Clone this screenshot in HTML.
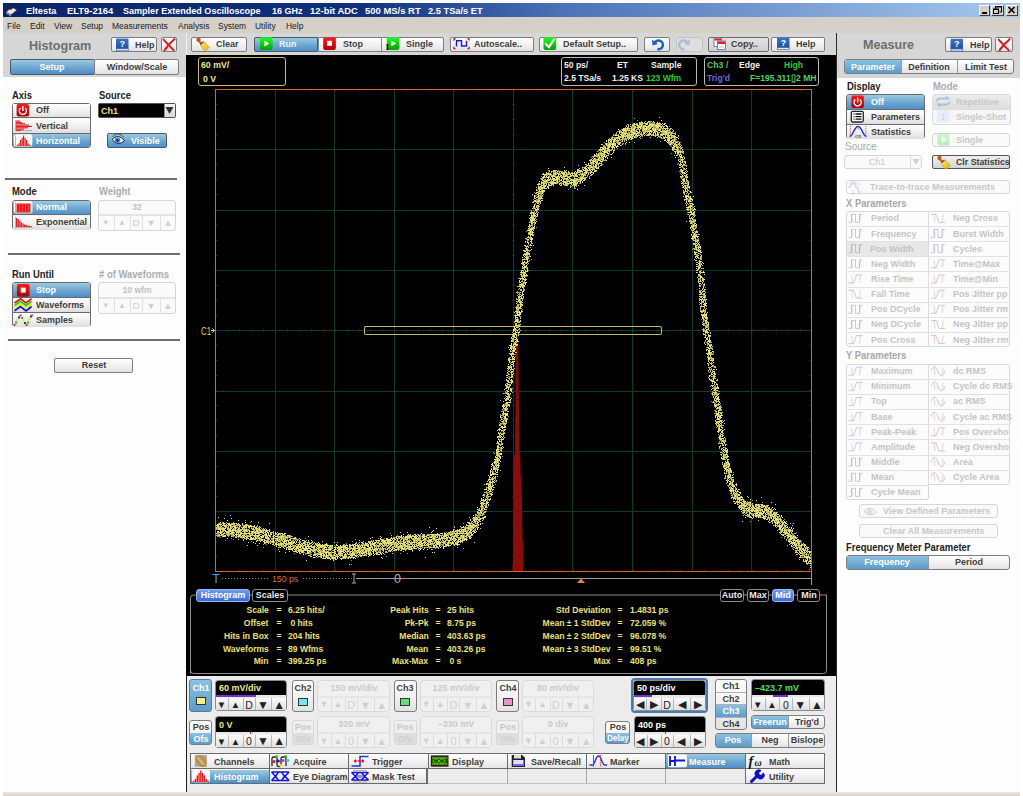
<!DOCTYPE html><html><head><meta charset="utf-8"><style>
*{margin:0;padding:0;box-sizing:border-box}
html,body{width:1023px;height:796px;overflow:hidden;background:#fff;font-family:"Liberation Sans",sans-serif}
.a{position:absolute}
.t{position:absolute;white-space:pre}
.btn{background:linear-gradient(#fefefe,#f2f2f2 50%,#e2e2e2);border:1px solid #7d7d7d;border-radius:2px}
.sel{background:linear-gradient(#9ccae0,#6aa6d2 55%,#4f8fc6);border:1px solid #4a5a6a;border-radius:2px}
.dis{background:#fafafa;border:1px solid #d6d6d6;border-radius:3px}
.blk{background:#000}
svg{position:absolute;left:0;top:0}
</style></head><body><div class="a " style="left:3px;top:3px;width:1017px;height:14px;background:linear-gradient(90deg,#0a246a 0%,#10307c 35%,#4c72b8 55%,#a6caf0 100%)"></div>
<div class="t" style="left:26.3px;top:4.5px;font-size:9.2px;line-height:13px;font-weight:bold;color:#fff;transform:scaleX(1.0108695652173914);transform-origin:0 50%;">Eltesta</div>
<div class="t" style="left:67px;top:4.5px;font-size:9.2px;line-height:13px;font-weight:bold;color:#fff;transform:scaleX(1.0217391304347825);transform-origin:0 50%;">ELT9-2164</div>
<div class="t" style="left:123.3px;top:4.5px;font-size:9.2px;line-height:13px;font-weight:bold;color:#fff;transform:scaleX(0.9836956521739132);transform-origin:0 50%;">Sampler Extended Oscilloscope</div>
<div class="t" style="left:272px;top:4.5px;font-size:9.2px;line-height:13px;font-weight:bold;color:#fff;transform:scaleX(0.9782608695652175);transform-origin:0 50%;">16 GHz</div>
<div class="t" style="left:310px;top:4.5px;font-size:9.2px;line-height:13px;font-weight:bold;color:#fff;transform:scaleX(1.0271739130434783);transform-origin:0 50%;">12-bit ADC</div>
<div class="t" style="left:364.8px;top:4.5px;font-size:9.2px;line-height:13px;font-weight:bold;color:#fff;transform:scaleX(1.0282608695652173);transform-origin:0 50%;">500 MS/s RT</div>
<div class="t" style="left:428.3px;top:4.5px;font-size:9.2px;line-height:13px;font-weight:bold;color:#fff;transform:scaleX(1.0108695652173914);transform-origin:0 50%;">2.5 TSa/s ET</div>
<svg width="1023" height="796"><path d="M6 12l6-5 5 3-6 5z" fill="#e8e8e8" stroke="#333" stroke-width=".7"/><path d="M8 8l3-3 3 2-3 3z" fill="#222"/><path d="M6 12l5 3v1.5l-5-3z" fill="#999"/></svg>
<div class="a " style="left:979px;top:5px;width:11px;height:10.5px;background:#d4d0c8;border:1px solid;border-color:#fff #404040 #404040 #fff"></div>
<div class="a " style="left:990.5px;top:5px;width:13.0px;height:10.5px;background:#d4d0c8;border:1px solid;border-color:#fff #404040 #404040 #fff"></div>
<div class="a " style="left:1005.5px;top:5px;width:12.5px;height:10.5px;background:#d4d0c8;border:1px solid;border-color:#fff #404040 #404040 #fff"></div>
<div class="a " style="left:981.5px;top:12px;width:5.0px;height:2px;background:#000"></div>
<svg width="1023" height="796"><path d="M995.5 9V7h6v5h-2" fill="none" stroke="#000"/><path d="M995 6.5h7" stroke="#000"/><rect x="993.5" y="9.5" width="5" height="4" fill="none" stroke="#000"/><path d="M993 9h6" stroke="#000"/></svg>
<svg width="1023" height="796"><path d="M1008.5 7l6 6M1014.5 7l-6 6" stroke="#000" stroke-width="1.6"/></svg>
<div class="a " style="left:3px;top:17px;width:1017px;height:16px;background:#d4d0c8"></div>
<div class="t" style="left:7.4px;top:19.5px;font-size:9.2px;line-height:13px;font-weight:normal;color:#1a1a1a;transform:scaleX(0.9184782608695652);transform-origin:0 50%;">File</div>
<div class="t" style="left:29.5px;top:19.5px;font-size:9.2px;line-height:13px;font-weight:normal;color:#1a1a1a;transform:scaleX(0.9184782608695652);transform-origin:0 50%;">Edit</div>
<div class="t" style="left:53.7px;top:19.5px;font-size:9.2px;line-height:13px;font-weight:normal;color:#1a1a1a;transform:scaleX(0.9184782608695652);transform-origin:0 50%;">View</div>
<div class="t" style="left:80.6px;top:19.5px;font-size:9.2px;line-height:13px;font-weight:normal;color:#1a1a1a;transform:scaleX(0.9184782608695652);transform-origin:0 50%;">Setup</div>
<div class="t" style="left:112px;top:19.5px;font-size:9.2px;line-height:13px;font-weight:normal;color:#1a1a1a;transform:scaleX(0.9184782608695652);transform-origin:0 50%;">Measurements</div>
<div class="t" style="left:177.5px;top:19.5px;font-size:9.2px;line-height:13px;font-weight:normal;color:#1a1a1a;transform:scaleX(0.9184782608695652);transform-origin:0 50%;">Analysis</div>
<div class="t" style="left:217.8px;top:19.5px;font-size:9.2px;line-height:13px;font-weight:normal;color:#1a1a1a;transform:scaleX(0.9184782608695652);transform-origin:0 50%;">System</div>
<div class="t" style="left:255.4px;top:19.5px;font-size:9.2px;line-height:13px;font-weight:normal;color:#1a1a1a;transform:scaleX(0.9184782608695652);transform-origin:0 50%;">Utility</div>
<div class="t" style="left:286px;top:19.5px;font-size:9.2px;line-height:13px;font-weight:normal;color:#1a1a1a;transform:scaleX(0.9184782608695652);transform-origin:0 50%;">Help</div>
<div class="a " style="left:3px;top:33px;width:183px;height:44px;background:#d6d6d6"></div>
<div class="a " style="left:3px;top:77px;width:183px;height:716px;background:#fdfdfd"></div>
<div class="a " style="left:186px;top:33px;width:1px;height:22px;background:#f2f2f2"></div>
<div class="a " style="left:185.5px;top:55px;width:1.5px;height:738px;background:#1e1e1e"></div>
<div class="t" style="left:29px;top:35.5px;font-size:13.2px;line-height:19px;font-weight:bold;color:#6e6e6e;transform:scaleX(0.955);transform-origin:0 50%;">Histogram</div>
<div class="a btn" style="left:110.5px;top:36.8px;width:46.5px;height:15.600000000000001px;"></div>
<div class="t" style="left:134.5px;top:38.599999999999994px;font-size:9.2px;line-height:13px;font-weight:bold;color:#3e3e3e;transform:scaleX(0.9782608695652175);transform-origin:0 50%;">Help</div>
<div class="a btn" style="left:160.7px;top:36.8px;width:16.80000000000001px;height:15.600000000000001px;"></div>
<div class="a sel" style="left:9.8px;top:59px;width:85.0px;height:16px;"></div>
<div class="a btn" style="left:94.3px;top:59px;width:85.2px;height:16px;"></div>
<div class="t" style="left:-247.7px;width:600px;text-align:center;top:61.0px;font-size:9.2px;line-height:13px;font-weight:bold;color:#fff;transform:scaleX(0.9782608695652175);transform-origin:50% 50%;">Setup</div>
<div class="t" style="left:-163px;width:600px;text-align:center;top:61.0px;font-size:9.2px;line-height:13px;font-weight:bold;color:#3e3e3e;transform:scaleX(0.9782608695652175);transform-origin:50% 50%;">Window/Scale</div>
<div class="t" style="left:12px;top:87.5px;font-size:10.5px;line-height:15px;font-weight:bold;color:#222;transform:scaleX(0.9);transform-origin:0 50%;">Axis</div>
<div class="t" style="left:98.5px;top:87.5px;font-size:10.5px;line-height:15px;font-weight:bold;color:#222;transform:scaleX(0.9);transform-origin:0 50%;">Source</div>
<div class="a " style="left:11.5px;top:102.5px;width:79.0px;height:45.80000000000001px;background:linear-gradient(#fefefe,#e6e6e6);border:1px solid #6a6a6a;border-radius:3px;overflow:hidden"></div>
<div class="a " style="left:12.5px;top:103.5px;width:77.0px;height:14.266666666666666px;background:linear-gradient(#fefefe,#f0f0f0 50%,#dedede)"></div>
<div class="a " style="left:12.5px;top:118.76666666666667px;width:77.0px;height:14.266666666666666px;background:linear-gradient(#fefefe,#f0f0f0 50%,#dedede)"></div>
<div class="a " style="left:12.5px;top:117.26666666666667px;width:77.0px;height:1.0px;background:#6a6a6a"></div>
<div class="a " style="left:12.5px;top:133.03333333333333px;width:77.0px;height:14.26666666666668px;background:linear-gradient(#9ccae0,#6aa6d2 55%,#4f8fc6);border-radius:0 0 2px 2px"></div>
<div class="a " style="left:12.5px;top:132.53333333333333px;width:77.0px;height:1.0px;background:#6a6a6a"></div>
<div class="t" style="left:36px;top:104.3px;font-size:9.2px;line-height:13px;font-weight:bold;color:#3e3e3e;transform:scaleX(0.9782608695652175);transform-origin:0 50%;">Off</div>
<div class="t" style="left:36px;top:119.5px;font-size:9.2px;line-height:13px;font-weight:bold;color:#3e3e3e;transform:scaleX(0.9782608695652175);transform-origin:0 50%;">Vertical</div>
<div class="t" style="left:36px;top:134.8px;font-size:9.2px;line-height:13px;font-weight:bold;color:#fff;transform:scaleX(0.9782608695652175);transform-origin:0 50%;">Horizontal</div>
<div class="a " style="left:97.5px;top:102.5px;width:78.80000000000001px;height:15.700000000000003px;background:#000;border:1px solid #555;border-radius:2px"></div>
<div class="a " style="left:164px;top:103.5px;width:11.300000000000011px;height:13.700000000000003px;background:linear-gradient(#f4f4f4,#d8d8d8);border-left:1px solid #888"></div>
<svg width="1023" height="796"><path d="M165.5 107h8l-4 7z" fill="#333"/></svg>
<div class="t" style="left:100.5px;top:104.5px;font-size:9.2px;line-height:13px;font-weight:bold;color:#e8e070;transform:scaleX(0.9782608695652175);transform-origin:0 50%;">Ch1</div>
<div class="a sel" style="left:106.5px;top:132.7px;width:60.30000000000001px;height:15.600000000000023px;"></div>
<div class="t" style="left:131px;top:134.5px;font-size:9.2px;line-height:13px;font-weight:bold;color:#fff;transform:scaleX(0.9782608695652175);transform-origin:0 50%;">Visible</div>
<div class="a " style="left:5px;top:177.5px;width:172px;height:2.0px;background:#6e6e6e"></div>
<div class="t" style="left:12px;top:184.1px;font-size:10.5px;line-height:15px;font-weight:bold;color:#222;transform:scaleX(0.9);transform-origin:0 50%;">Mode</div>
<div class="t" style="left:98.5px;top:184.1px;font-size:10.5px;line-height:15px;font-weight:bold;color:#acacac;transform:scaleX(0.9);transform-origin:0 50%;">Weight</div>
<div class="a " style="left:11.5px;top:199.6px;width:79.0px;height:30.099999999999994px;background:linear-gradient(#fefefe,#e6e6e6);border:1px solid #6a6a6a;border-radius:3px;overflow:hidden"></div>
<div class="a " style="left:12.5px;top:200.6px;width:77.0px;height:14.049999999999983px;background:linear-gradient(#9ccae0,#6aa6d2 55%,#4f8fc6);border-radius:2px 2px 0 0"></div>
<div class="a " style="left:12.5px;top:215.64999999999998px;width:77.0px;height:14.050000000000011px;background:linear-gradient(#fefefe,#f0f0f0 50%,#dedede)"></div>
<div class="a " style="left:12.5px;top:214.14999999999998px;width:77.0px;height:1.0px;background:#6a6a6a"></div>
<div class="t" style="left:36px;top:201.3px;font-size:9.2px;line-height:13px;font-weight:bold;color:#fff;transform:scaleX(0.9782608695652175);transform-origin:0 50%;">Normal</div>
<div class="t" style="left:36px;top:216.3px;font-size:9.2px;line-height:13px;font-weight:bold;color:#3e3e3e;transform:scaleX(0.9782608695652175);transform-origin:0 50%;">Exponential</div>
<div class="a dis" style="left:97.5px;top:199.6px;width:78.5px;height:31.400000000000006px;"></div>
<div class="a " style="left:98.5px;top:214.358px;width:76.5px;height:1.5px;background:#e4e4e4"></div>
<div class="t" style="left:-163.25px;width:600px;text-align:center;top:199.97899999999998px;font-size:9.5px;line-height:14px;font-weight:bold;color:#c0c0c0;transform:scaleX(0.9);transform-origin:50% 50%;">32</div>
<div class="a " style="left:113.985px;top:215.858px;width:1.0px;height:14.141999999999996px;background:#e0e0e0"></div>
<div class="a " style="left:129.685px;top:215.858px;width:1.0px;height:14.141999999999996px;background:#e0e0e0"></div>
<div class="a " style="left:142.245px;top:215.858px;width:1.0px;height:14.141999999999996px;background:#e0e0e0"></div>
<div class="a " style="left:159.515px;top:215.858px;width:1.0px;height:14.141999999999996px;background:#e0e0e0"></div>
<div class="t" style="left:-194.2575px;width:600px;text-align:center;top:217.179px;font-size:8px;line-height:12px;font-weight:normal;color:#d0d0d0;transform:scaleX(1);transform-origin:50% 50%;">▼</div>
<div class="t" style="left:-178.165px;width:600px;text-align:center;top:217.179px;font-size:8px;line-height:12px;font-weight:normal;color:#d0d0d0;transform:scaleX(1);transform-origin:50% 50%;">▲</div>
<div class="t" style="left:-164.035px;width:600px;text-align:center;top:217.179px;font-size:9.2px;line-height:13px;font-weight:normal;color:#d0d0d0;transform:scaleX(1.0869565217391306);transform-origin:50% 50%;">D</div>
<div class="t" style="left:-149.12px;width:600px;text-align:center;top:217.179px;font-size:9.2px;line-height:13px;font-weight:normal;color:#d0d0d0;transform:scaleX(1.0869565217391306);transform-origin:50% 50%;">▼</div>
<div class="t" style="left:-132.2425px;width:600px;text-align:center;top:217.179px;font-size:9.2px;line-height:13px;font-weight:normal;color:#d0d0d0;transform:scaleX(1.0869565217391306);transform-origin:50% 50%;">▲</div>
<div class="a " style="left:8px;top:252.5px;width:172px;height:2.0px;background:#6e6e6e"></div>
<div class="t" style="left:12px;top:267.1px;font-size:10.5px;line-height:15px;font-weight:bold;color:#222;transform:scaleX(0.9);transform-origin:0 50%;">Run Until</div>
<div class="t" style="left:98.5px;top:267.1px;font-size:10.5px;line-height:15px;font-weight:bold;color:#acacac;transform:scaleX(0.9);transform-origin:0 50%;"># of Waveforms</div>
<div class="a " style="left:11.5px;top:282.2px;width:79.0px;height:45.19999999999999px;background:linear-gradient(#fefefe,#e6e6e6);border:1px solid #6a6a6a;border-radius:3px;overflow:hidden"></div>
<div class="a " style="left:12.5px;top:283.2px;width:77.0px;height:14.066666666666663px;background:linear-gradient(#9ccae0,#6aa6d2 55%,#4f8fc6);border-radius:2px 2px 0 0"></div>
<div class="a " style="left:12.5px;top:298.26666666666665px;width:77.0px;height:14.066666666666663px;background:linear-gradient(#fefefe,#f0f0f0 50%,#dedede)"></div>
<div class="a " style="left:12.5px;top:296.76666666666665px;width:77.0px;height:1.0px;background:#6a6a6a"></div>
<div class="a " style="left:12.5px;top:313.3333333333333px;width:77.0px;height:14.066666666666663px;background:linear-gradient(#fefefe,#f0f0f0 50%,#dedede)"></div>
<div class="a " style="left:12.5px;top:311.8333333333333px;width:77.0px;height:1.0px;background:#6a6a6a"></div>
<div class="t" style="left:36px;top:284.0px;font-size:9.2px;line-height:13px;font-weight:bold;color:#fff;transform:scaleX(0.9782608695652175);transform-origin:0 50%;">Stop</div>
<div class="t" style="left:36px;top:299.0px;font-size:9.2px;line-height:13px;font-weight:bold;color:#3e3e3e;transform:scaleX(0.9782608695652175);transform-origin:0 50%;">Waveforms</div>
<div class="t" style="left:36px;top:314.0px;font-size:9.2px;line-height:13px;font-weight:bold;color:#3e3e3e;transform:scaleX(0.9782608695652175);transform-origin:0 50%;">Samples</div>
<div class="a dis" style="left:97.5px;top:282.2px;width:78.5px;height:31.80000000000001px;"></div>
<div class="a " style="left:98.5px;top:297.146px;width:76.5px;height:1.5px;background:#e4e4e4"></div>
<div class="t" style="left:-163.25px;width:600px;text-align:center;top:282.673px;font-size:9.5px;line-height:14px;font-weight:bold;color:#c0c0c0;transform:scaleX(0.9);transform-origin:50% 50%;">10 wfm</div>
<div class="a " style="left:113.985px;top:298.646px;width:1.0px;height:14.353999999999985px;background:#e0e0e0"></div>
<div class="a " style="left:129.685px;top:298.646px;width:1.0px;height:14.353999999999985px;background:#e0e0e0"></div>
<div class="a " style="left:142.245px;top:298.646px;width:1.0px;height:14.353999999999985px;background:#e0e0e0"></div>
<div class="a " style="left:159.515px;top:298.646px;width:1.0px;height:14.353999999999985px;background:#e0e0e0"></div>
<div class="t" style="left:-194.2575px;width:600px;text-align:center;top:300.073px;font-size:8px;line-height:12px;font-weight:normal;color:#d0d0d0;transform:scaleX(1);transform-origin:50% 50%;">▼</div>
<div class="t" style="left:-178.165px;width:600px;text-align:center;top:300.073px;font-size:8px;line-height:12px;font-weight:normal;color:#d0d0d0;transform:scaleX(1);transform-origin:50% 50%;">▲</div>
<div class="t" style="left:-164.035px;width:600px;text-align:center;top:300.073px;font-size:9.2px;line-height:13px;font-weight:normal;color:#d0d0d0;transform:scaleX(1.0869565217391306);transform-origin:50% 50%;">D</div>
<div class="t" style="left:-149.12px;width:600px;text-align:center;top:300.073px;font-size:9.2px;line-height:13px;font-weight:normal;color:#d0d0d0;transform:scaleX(1.0869565217391306);transform-origin:50% 50%;">▼</div>
<div class="t" style="left:-132.2425px;width:600px;text-align:center;top:300.073px;font-size:9.2px;line-height:13px;font-weight:normal;color:#d0d0d0;transform:scaleX(1.0869565217391306);transform-origin:50% 50%;">▲</div>
<div class="a " style="left:8px;top:339px;width:172px;height:2px;background:#6e6e6e"></div>
<div class="a btn" style="left:54.3px;top:357.6px;width:78.39999999999999px;height:15.399999999999977px;"></div>
<div class="t" style="left:-206.5px;width:600px;text-align:center;top:359.3px;font-size:9.2px;line-height:13px;font-weight:bold;color:#3e3e3e;transform:scaleX(0.9782608695652175);transform-origin:50% 50%;">Reset</div>
<div class="a " style="left:187px;top:33px;width:649px;height:22px;background:#d6d6d6"></div>
<div class="a " style="left:836px;top:33px;width:1px;height:760px;background:#2a2a2a"></div>
<div class="a btn" style="left:191px;top:36.5px;width:56px;height:15.0px;"></div>
<div class="t" style="left:215.6px;top:38.0px;font-size:9.2px;line-height:13px;font-weight:bold;color:#3e3e3e;transform:scaleX(0.9782608695652175);transform-origin:0 50%;">Clear</div>
<div class="a btn" style="left:254.4px;top:36.5px;width:189.9px;height:15.0px;"></div>
<div class="a sel" style="left:254.4px;top:36.5px;width:63.900000000000006px;height:15.0px;"></div>
<div class="a " style="left:317.8px;top:37px;width:1.0px;height:14px;background:#7a8a9a"></div>
<div class="a " style="left:381.2px;top:37px;width:1.0px;height:14px;background:#8a8a8a"></div>
<div class="t" style="left:279px;top:38.0px;font-size:9.2px;line-height:13px;font-weight:bold;color:#eef4fa;transform:scaleX(0.9782608695652175);transform-origin:0 50%;">Run</div>
<div class="t" style="left:342.5px;top:38.0px;font-size:9.2px;line-height:13px;font-weight:bold;color:#3e3e3e;transform:scaleX(0.9782608695652175);transform-origin:0 50%;">Stop</div>
<div class="t" style="left:406px;top:38.0px;font-size:9.2px;line-height:13px;font-weight:bold;color:#3e3e3e;transform:scaleX(0.9782608695652175);transform-origin:0 50%;">Single</div>
<div class="a btn" style="left:449.7px;top:36.5px;width:84.50000000000006px;height:15.0px;"></div>
<div class="t" style="left:474.4px;top:38.0px;font-size:9.2px;line-height:13px;font-weight:bold;color:#3e3e3e;transform:scaleX(0.9782608695652175);transform-origin:0 50%;">Autoscale..</div>
<div class="a btn" style="left:538.5px;top:36.5px;width:99.79999999999995px;height:15.0px;"></div>
<div class="t" style="left:562.6px;top:38.0px;font-size:9.2px;line-height:13px;font-weight:bold;color:#3e3e3e;transform:scaleX(0.9782608695652175);transform-origin:0 50%;">Default Setup..</div>
<div class="a btn" style="left:643.7px;top:36.5px;width:26.799999999999955px;height:15.0px;"></div>
<div class="a " style="left:676px;top:36.5px;width:27.399999999999977px;height:15.0px;background:#dedede;border:1px solid #c4c4c4;border-radius:3px"></div>
<div class="a " style="left:708px;top:36.5px;width:60.60000000000002px;height:15.0px;background:linear-gradient(#e4e4e4,#cfcfcf);border:1px solid #6a6a6a;border-radius:2px"></div>
<div class="t" style="left:731px;top:38.0px;font-size:9.2px;line-height:13px;font-weight:bold;color:#3e3e3e;transform:scaleX(0.9782608695652175);transform-origin:0 50%;">Copy..</div>
<div class="a btn" style="left:771.2px;top:36.5px;width:54.19999999999993px;height:15.0px;"></div>
<div class="t" style="left:795.5px;top:38.0px;font-size:9.2px;line-height:13px;font-weight:bold;color:#3e3e3e;transform:scaleX(0.9782608695652175);transform-origin:0 50%;">Help</div>
<div class="a " style="left:186px;top:55px;width:650px;height:621px;background:#000"></div>
<div class="a " style="left:198px;top:57px;width:87.5px;height:29px;border:1px solid #c8c070;border-radius:3px"></div>
<div class="t" style="left:200.5px;top:57.5px;font-size:9.5px;line-height:14px;font-weight:bold;color:#f0e890;transform:scaleX(0.92);transform-origin:0 50%;">60 mV/</div>
<div class="t" style="left:203px;top:71.5px;font-size:9.5px;line-height:14px;font-weight:bold;color:#f0e890;transform:scaleX(0.92);transform-origin:0 50%;">0 V</div>
<div class="a " style="left:561.3px;top:57px;width:135.5px;height:29px;border:1px solid #b8b8b8;border-radius:3px"></div>
<div class="t" style="left:564px;top:58.3px;font-size:9.5px;line-height:14px;font-weight:bold;color:#f0f0f0;transform:scaleX(0.9);transform-origin:0 50%;">50 ps/</div>
<div class="t" style="left:617px;top:58.3px;font-size:9.5px;line-height:14px;font-weight:bold;color:#f0f0f0;transform:scaleX(0.9);transform-origin:0 50%;">ET</div>
<div class="t" style="left:651px;top:58.3px;font-size:9.5px;line-height:14px;font-weight:bold;color:#f0f0f0;transform:scaleX(0.9);transform-origin:0 50%;">Sample</div>
<div class="t" style="left:564px;top:71.0px;font-size:9.5px;line-height:14px;font-weight:bold;color:#f0f0f0;transform:scaleX(0.9);transform-origin:0 50%;">2.5 TSa/s</div>
<div class="t" style="left:612px;top:71.0px;font-size:9.5px;line-height:14px;font-weight:bold;color:#f0f0f0;transform:scaleX(0.9);transform-origin:0 50%;">1.25 KS</div>
<div class="t" style="left:645.5px;top:71.0px;font-size:9.5px;line-height:14px;font-weight:bold;color:#28d028;transform:scaleX(0.9);transform-origin:0 50%;">123 Wfm</div>
<div class="a " style="left:703.6px;top:57px;width:115.69999999999993px;height:29px;border:1px solid #b8b8b8;border-radius:3px"></div>
<div class="t" style="left:706.5px;top:58.3px;font-size:9.5px;line-height:14px;font-weight:bold;color:#58c858;transform:scaleX(0.9);transform-origin:0 50%;">Ch3</div>
<div class="t" style="left:726px;top:58.3px;font-size:9.5px;line-height:14px;font-weight:bold;color:#58c858;transform:scaleX(0.9);transform-origin:0 50%;">/</div>
<div class="t" style="left:738.5px;top:58.3px;font-size:9.5px;line-height:14px;font-weight:bold;color:#f0f0f0;transform:scaleX(0.9);transform-origin:0 50%;">Edge</div>
<div class="t" style="left:784px;top:58.3px;font-size:9.5px;line-height:14px;font-weight:bold;color:#28d028;transform:scaleX(0.9);transform-origin:0 50%;">High</div>
<div class="t" style="left:706.5px;top:71.0px;font-size:9.5px;line-height:14px;font-weight:bold;color:#6a6ae0;transform:scaleX(0.9);transform-origin:0 50%;">Trig'd</div>
<div class="t" style="left:750px;top:71.0px;font-size:9.5px;line-height:14px;font-weight:bold;color:#58d058;transform:scaleX(0.9);transform-origin:0 50%;">F=195.311▯2 MH</div>
<svg width="1023" height="796"><path d="M275.5 89.5V571.5M334.5 89.5V571.5M394.5 89.5V571.5M453.5 89.5V571.5M513.5 89.5V571.5M572.5 89.5V571.5M632.5 89.5V571.5M692.5 89.5V571.5M751.5 89.5V571.5M215.5 149.5H811.5M215.5 210.5H811.5M215.5 270.5H811.5M215.5 330.5H811.5M215.5 391.5H811.5M215.5 451.5H811.5M215.5 511.5H811.5" stroke="#103a2b" stroke-width="1" fill="none"/><path d="M227.5 329.0v3M227.5 89.5v2M227.5 571.5v-2M239.5 329.0v3M239.5 89.5v2M239.5 571.5v-2M251.5 329.0v3M251.5 89.5v2M251.5 571.5v-2M263.5 329.0v3M263.5 89.5v2M263.5 571.5v-2M275.5 329.0v3M275.5 89.5v2M275.5 571.5v-2M287.5 329.0v3M287.5 89.5v2M287.5 571.5v-2M299.5 329.0v3M299.5 89.5v2M299.5 571.5v-2M311.5 329.0v3M311.5 89.5v2M311.5 571.5v-2M323.5 329.0v3M323.5 89.5v2M323.5 571.5v-2M335.5 329.0v3M335.5 89.5v2M335.5 571.5v-2M347.5 329.0v3M347.5 89.5v2M347.5 571.5v-2M359.5 329.0v3M359.5 89.5v2M359.5 571.5v-2M370.5 329.0v3M370.5 89.5v2M370.5 571.5v-2M382.5 329.0v3M382.5 89.5v2M382.5 571.5v-2M394.5 329.0v3M394.5 89.5v2M394.5 571.5v-2M406.5 329.0v3M406.5 89.5v2M406.5 571.5v-2M418.5 329.0v3M418.5 89.5v2M418.5 571.5v-2M430.5 329.0v3M430.5 89.5v2M430.5 571.5v-2M442.5 329.0v3M442.5 89.5v2M442.5 571.5v-2M454.5 329.0v3M454.5 89.5v2M454.5 571.5v-2M466.5 329.0v3M466.5 89.5v2M466.5 571.5v-2M478.5 329.0v3M478.5 89.5v2M478.5 571.5v-2M490.5 329.0v3M490.5 89.5v2M490.5 571.5v-2M502.5 329.0v3M502.5 89.5v2M502.5 571.5v-2M514.5 329.0v3M514.5 89.5v2M514.5 571.5v-2M525.5 329.0v3M525.5 89.5v2M525.5 571.5v-2M537.5 329.0v3M537.5 89.5v2M537.5 571.5v-2M549.5 329.0v3M549.5 89.5v2M549.5 571.5v-2M561.5 329.0v3M561.5 89.5v2M561.5 571.5v-2M573.5 329.0v3M573.5 89.5v2M573.5 571.5v-2M585.5 329.0v3M585.5 89.5v2M585.5 571.5v-2M597.5 329.0v3M597.5 89.5v2M597.5 571.5v-2M609.5 329.0v3M609.5 89.5v2M609.5 571.5v-2M621.5 329.0v3M621.5 89.5v2M621.5 571.5v-2M633.5 329.0v3M633.5 89.5v2M633.5 571.5v-2M645.5 329.0v3M645.5 89.5v2M645.5 571.5v-2M657.5 329.0v3M657.5 89.5v2M657.5 571.5v-2M668.5 329.0v3M668.5 89.5v2M668.5 571.5v-2M680.5 329.0v3M680.5 89.5v2M680.5 571.5v-2M692.5 329.0v3M692.5 89.5v2M692.5 571.5v-2M704.5 329.0v3M704.5 89.5v2M704.5 571.5v-2M716.5 329.0v3M716.5 89.5v2M716.5 571.5v-2M728.5 329.0v3M728.5 89.5v2M728.5 571.5v-2M740.5 329.0v3M740.5 89.5v2M740.5 571.5v-2M752.5 329.0v3M752.5 89.5v2M752.5 571.5v-2M764.5 329.0v3M764.5 89.5v2M764.5 571.5v-2M776.5 329.0v3M776.5 89.5v2M776.5 571.5v-2M788.5 329.0v3M788.5 89.5v2M788.5 571.5v-2M800.5 329.0v3M800.5 89.5v2M800.5 571.5v-2M512.0 104.5h3M215.5 104.5h2M811.5 104.5h-2M512.0 119.5h3M215.5 119.5h2M811.5 119.5h-2M512.0 134.5h3M215.5 134.5h2M811.5 134.5h-2M512.0 149.5h3M215.5 149.5h2M811.5 149.5h-2M512.0 164.5h3M215.5 164.5h2M811.5 164.5h-2M512.0 179.5h3M215.5 179.5h2M811.5 179.5h-2M512.0 194.5h3M215.5 194.5h2M811.5 194.5h-2M512.0 210.5h3M215.5 210.5h2M811.5 210.5h-2M512.0 225.5h3M215.5 225.5h2M811.5 225.5h-2M512.0 240.5h3M215.5 240.5h2M811.5 240.5h-2M512.0 255.5h3M215.5 255.5h2M811.5 255.5h-2M512.0 270.5h3M215.5 270.5h2M811.5 270.5h-2M512.0 285.5h3M215.5 285.5h2M811.5 285.5h-2M512.0 300.5h3M215.5 300.5h2M811.5 300.5h-2M512.0 315.5h3M215.5 315.5h2M811.5 315.5h-2M512.0 330.5h3M215.5 330.5h2M811.5 330.5h-2M512.0 345.5h3M215.5 345.5h2M811.5 345.5h-2M512.0 360.5h3M215.5 360.5h2M811.5 360.5h-2M512.0 375.5h3M215.5 375.5h2M811.5 375.5h-2M512.0 390.5h3M215.5 390.5h2M811.5 390.5h-2M512.0 405.5h3M215.5 405.5h2M811.5 405.5h-2M512.0 420.5h3M215.5 420.5h2M811.5 420.5h-2M512.0 435.5h3M215.5 435.5h2M811.5 435.5h-2M512.0 451.5h3M215.5 451.5h2M811.5 451.5h-2M512.0 466.5h3M215.5 466.5h2M811.5 466.5h-2M512.0 481.5h3M215.5 481.5h2M811.5 481.5h-2M512.0 496.5h3M215.5 496.5h2M811.5 496.5h-2M512.0 511.5h3M215.5 511.5h2M811.5 511.5h-2M512.0 526.5h3M215.5 526.5h2M811.5 526.5h-2M512.0 541.5h3M215.5 541.5h2M811.5 541.5h-2M512.0 556.5h3M215.5 556.5h2M811.5 556.5h-2" stroke="#0e3326" stroke-width="1" fill="none"/></svg>
<svg width="1023" height="796"><rect x="364.5" y="326.5" width="297" height="8" rx="1.5" fill="none" stroke="#bcb870" stroke-width="1.1"/></svg>
<div class="t" style="left:201px;top:323.0px;font-size:11px;line-height:16px;font-weight:normal;color:#d8d070;transform:scaleX(0.72);transform-origin:0 50%;">C1</div>
<svg width="1023" height="796"><path d="M211 330.5h3.5M212.5 328.5l2 2-2 2" stroke="#d8d070" fill="none"/></svg>
<svg width="1023" height="796"><path d="M516 334 L518 334 L518.6 380 L519.6 455 L520.2 456 L520.8 476 L521.5 478 L522.5 540 L523.5 545 L523.5 571 L512.5 571 L512.5 563 L513.5 562 L513.8 478 L514 455 L515 454 L515.5 400 Z" fill="#8a0c0c"/></svg>
<svg width="1023" height="796"><path d="M216 529h1v1h-1zM217 527h1v1h-1zM217 528h1v1h-1zM217 529h1v1h-1zM217 532h1v1h-1zM217 533h1v1h-1zM217 534h1v1h-1zM217 535h1v1h-1zM217 536h1v1h-1zM218 523h1v1h-1zM218 533h1v1h-1zM218 534h1v1h-1zM218 536h1v1h-1zM219 526h1v1h-1zM219 527h1v1h-1zM219 536h1v1h-1zM220 523h1v1h-1zM220 525h1v1h-1zM220 526h1v1h-1zM220 535h1v1h-1zM220 537h1v1h-1zM221 527h1v1h-1zM221 529h1v1h-1zM221 531h1v1h-1zM222 522h1v1h-1zM222 523h1v1h-1zM222 527h1v1h-1zM222 530h1v1h-1zM222 532h1v1h-1zM222 535h1v1h-1zM223 527h1v1h-1zM223 531h1v1h-1zM223 535h1v1h-1zM224 524h1v1h-1zM224 532h1v1h-1zM225 523h1v1h-1zM225 533h1v1h-1zM225 540h1v1h-1zM226 522h1v1h-1zM226 527h1v1h-1zM226 533h1v1h-1zM226 534h1v1h-1zM227 525h1v1h-1zM227 527h1v1h-1zM227 528h1v1h-1zM227 533h1v1h-1zM228 525h1v1h-1zM228 527h1v1h-1zM228 529h1v1h-1zM228 535h1v1h-1zM228 536h1v1h-1zM229 528h1v1h-1zM229 532h1v1h-1zM229 533h1v1h-1zM229 534h1v1h-1zM229 535h1v1h-1zM230 534h1v1h-1zM231 523h1v1h-1zM231 525h1v1h-1zM231 527h1v1h-1zM231 531h1v1h-1zM231 534h1v1h-1zM231 535h1v1h-1zM231 538h1v1h-1zM232 523h1v1h-1zM232 527h1v1h-1zM232 534h1v1h-1zM232 535h1v1h-1zM232 536h1v1h-1zM233 522h1v1h-1zM233 525h1v1h-1zM233 531h1v1h-1zM233 533h1v1h-1zM233 539h1v1h-1zM234 524h1v1h-1zM234 528h1v1h-1zM234 529h1v1h-1zM234 532h1v1h-1zM234 533h1v1h-1zM235 523h1v1h-1zM235 525h1v1h-1zM235 536h1v1h-1zM236 524h1v1h-1zM236 528h1v1h-1zM236 531h1v1h-1zM236 536h1v1h-1zM237 525h1v1h-1zM237 526h1v1h-1zM237 527h1v1h-1zM237 530h1v1h-1zM237 536h1v1h-1zM238 524h1v1h-1zM238 525h1v1h-1zM238 527h1v1h-1zM238 534h1v1h-1zM239 527h1v1h-1zM239 529h1v1h-1zM239 532h1v1h-1zM240 526h1v1h-1zM240 531h1v1h-1zM240 536h1v1h-1zM241 529h1v1h-1zM241 534h1v1h-1zM242 525h1v1h-1zM242 527h1v1h-1zM242 536h1v1h-1zM242 537h1v1h-1zM242 538h1v1h-1zM243 525h1v1h-1zM243 528h1v1h-1zM243 529h1v1h-1zM243 531h1v1h-1zM243 534h1v1h-1zM244 528h1v1h-1zM244 534h1v1h-1zM244 536h1v1h-1zM244 538h1v1h-1zM245 520h1v1h-1zM245 524h1v1h-1zM245 526h1v1h-1zM245 531h1v1h-1zM245 532h1v1h-1zM245 534h1v1h-1zM246 528h1v1h-1zM246 534h1v1h-1zM246 536h1v1h-1zM246 538h1v1h-1zM247 524h1v1h-1zM247 529h1v1h-1zM247 530h1v1h-1zM247 535h1v1h-1zM247 538h1v1h-1zM248 530h1v1h-1zM248 532h1v1h-1zM248 535h1v1h-1zM249 525h1v1h-1zM249 528h1v1h-1zM249 532h1v1h-1zM249 535h1v1h-1zM250 522h1v1h-1zM250 531h1v1h-1zM250 533h1v1h-1zM250 534h1v1h-1zM251 525h1v1h-1zM251 527h1v1h-1zM251 532h1v1h-1zM251 534h1v1h-1zM251 541h1v1h-1zM252 528h1v1h-1zM252 535h1v1h-1zM253 527h1v1h-1zM253 530h1v1h-1zM253 532h1v1h-1zM253 533h1v1h-1zM253 539h1v1h-1zM254 527h1v1h-1zM254 529h1v1h-1zM254 530h1v1h-1zM254 531h1v1h-1zM254 533h1v1h-1zM254 538h1v1h-1zM255 529h1v1h-1zM256 526h1v1h-1zM256 532h1v1h-1zM256 536h1v1h-1zM256 537h1v1h-1zM256 540h1v1h-1zM257 525h1v1h-1zM257 526h1v1h-1zM257 529h1v1h-1zM257 537h1v1h-1zM257 538h1v1h-1zM257 539h1v1h-1zM258 527h1v1h-1zM258 528h1v1h-1zM258 530h1v1h-1zM258 531h1v1h-1zM258 534h1v1h-1zM258 537h1v1h-1zM258 540h1v1h-1zM259 527h1v1h-1zM259 531h1v1h-1zM259 533h1v1h-1zM260 529h1v1h-1zM260 534h1v1h-1zM260 539h1v1h-1zM260 540h1v1h-1zM261 528h1v1h-1zM261 534h1v1h-1zM261 538h1v1h-1zM262 529h1v1h-1zM262 530h1v1h-1zM262 531h1v1h-1zM262 533h1v1h-1zM263 529h1v1h-1zM263 532h1v1h-1zM263 537h1v1h-1zM263 539h1v1h-1zM263 544h1v1h-1zM263 547h1v1h-1zM264 532h1v1h-1zM264 535h1v1h-1zM265 528h1v1h-1zM265 533h1v1h-1zM265 538h1v1h-1zM265 543h1v1h-1zM266 536h1v1h-1zM266 540h1v1h-1zM266 544h1v1h-1zM267 530h1v1h-1zM267 535h1v1h-1zM267 539h1v1h-1zM268 530h1v1h-1zM268 540h1v1h-1zM268 541h1v1h-1zM269 538h1v1h-1zM269 539h1v1h-1zM269 541h1v1h-1zM269 542h1v1h-1zM270 532h1v1h-1zM270 535h1v1h-1zM270 537h1v1h-1zM270 541h1v1h-1zM270 542h1v1h-1zM271 533h1v1h-1zM271 539h1v1h-1zM271 542h1v1h-1zM272 536h1v1h-1zM272 539h1v1h-1zM272 540h1v1h-1zM273 532h1v1h-1zM273 534h1v1h-1zM274 537h1v1h-1zM274 538h1v1h-1zM274 541h1v1h-1zM274 542h1v1h-1zM275 539h1v1h-1zM276 533h1v1h-1zM276 534h1v1h-1zM276 539h1v1h-1zM276 540h1v1h-1zM276 541h1v1h-1zM276 545h1v1h-1zM277 532h1v1h-1zM277 534h1v1h-1zM277 537h1v1h-1zM277 542h1v1h-1zM278 535h1v1h-1zM278 536h1v1h-1zM278 538h1v1h-1zM278 539h1v1h-1zM278 540h1v1h-1zM279 534h1v1h-1zM279 537h1v1h-1zM279 538h1v1h-1zM279 540h1v1h-1zM279 543h1v1h-1zM279 545h1v1h-1zM279 546h1v1h-1zM279 547h1v1h-1zM280 534h1v1h-1zM280 535h1v1h-1zM280 538h1v1h-1zM280 539h1v1h-1zM280 540h1v1h-1zM280 541h1v1h-1zM280 542h1v1h-1zM280 545h1v1h-1zM281 535h1v1h-1zM281 540h1v1h-1zM281 542h1v1h-1zM281 546h1v1h-1zM282 534h1v1h-1zM282 537h1v1h-1zM282 538h1v1h-1zM282 539h1v1h-1zM282 541h1v1h-1zM282 544h1v1h-1zM282 545h1v1h-1zM283 535h1v1h-1zM283 543h1v1h-1zM283 545h1v1h-1zM283 546h1v1h-1zM284 535h1v1h-1zM284 536h1v1h-1zM284 537h1v1h-1zM284 538h1v1h-1zM284 539h1v1h-1zM284 546h1v1h-1zM284 548h1v1h-1zM285 535h1v1h-1zM285 538h1v1h-1zM285 544h1v1h-1zM286 536h1v1h-1zM286 538h1v1h-1zM286 542h1v1h-1zM287 536h1v1h-1zM287 538h1v1h-1zM287 539h1v1h-1zM287 543h1v1h-1zM288 536h1v1h-1zM288 537h1v1h-1zM288 544h1v1h-1zM288 545h1v1h-1zM288 547h1v1h-1zM289 540h1v1h-1zM289 548h1v1h-1zM290 535h1v1h-1zM290 536h1v1h-1zM290 537h1v1h-1zM290 538h1v1h-1zM290 544h1v1h-1zM290 548h1v1h-1zM292 536h1v1h-1zM292 540h1v1h-1zM292 541h1v1h-1zM292 542h1v1h-1zM292 544h1v1h-1zM292 545h1v1h-1zM292 546h1v1h-1zM293 539h1v1h-1zM293 540h1v1h-1zM293 541h1v1h-1zM293 546h1v1h-1zM294 537h1v1h-1zM294 539h1v1h-1zM294 545h1v1h-1zM294 546h1v1h-1zM294 553h1v1h-1zM295 539h1v1h-1zM295 540h1v1h-1zM295 546h1v1h-1zM295 549h1v1h-1zM296 538h1v1h-1zM296 539h1v1h-1zM296 550h1v1h-1zM296 552h1v1h-1zM297 539h1v1h-1zM297 544h1v1h-1zM297 545h1v1h-1zM297 550h1v1h-1zM298 539h1v1h-1zM298 542h1v1h-1zM298 547h1v1h-1zM299 542h1v1h-1zM299 553h1v1h-1zM300 541h1v1h-1zM300 548h1v1h-1zM300 551h1v1h-1zM301 544h1v1h-1zM301 546h1v1h-1zM301 548h1v1h-1zM302 543h1v1h-1zM302 545h1v1h-1zM303 546h1v1h-1zM303 547h1v1h-1zM303 549h1v1h-1zM303 552h1v1h-1zM303 553h1v1h-1zM304 540h1v1h-1zM304 544h1v1h-1zM304 552h1v1h-1zM305 538h1v1h-1zM305 542h1v1h-1zM305 543h1v1h-1zM305 553h1v1h-1zM305 554h1v1h-1zM306 542h1v1h-1zM306 544h1v1h-1zM306 553h1v1h-1zM308 541h1v1h-1zM308 544h1v1h-1zM308 551h1v1h-1zM309 542h1v1h-1zM309 547h1v1h-1zM309 552h1v1h-1zM310 545h1v1h-1zM310 552h1v1h-1zM310 553h1v1h-1zM310 554h1v1h-1zM310 555h1v1h-1zM311 543h1v1h-1zM311 547h1v1h-1zM311 550h1v1h-1zM311 552h1v1h-1zM311 554h1v1h-1zM312 542h1v1h-1zM312 546h1v1h-1zM312 549h1v1h-1zM312 551h1v1h-1zM313 549h1v1h-1zM313 554h1v1h-1zM314 545h1v1h-1zM314 551h1v1h-1zM314 553h1v1h-1zM314 555h1v1h-1zM315 546h1v1h-1zM315 550h1v1h-1zM315 551h1v1h-1zM315 552h1v1h-1zM315 553h1v1h-1zM315 557h1v1h-1zM316 543h1v1h-1zM316 548h1v1h-1zM316 550h1v1h-1zM316 553h1v1h-1zM317 544h1v1h-1zM317 551h1v1h-1zM317 554h1v1h-1zM317 557h1v1h-1zM318 550h1v1h-1zM318 552h1v1h-1zM318 553h1v1h-1zM319 546h1v1h-1zM319 548h1v1h-1zM319 549h1v1h-1zM319 551h1v1h-1zM319 553h1v1h-1zM320 544h1v1h-1zM320 550h1v1h-1zM320 556h1v1h-1zM320 557h1v1h-1zM321 550h1v1h-1zM321 551h1v1h-1zM321 552h1v1h-1zM322 547h1v1h-1zM322 548h1v1h-1zM322 550h1v1h-1zM322 552h1v1h-1zM322 555h1v1h-1zM322 558h1v1h-1zM323 547h1v1h-1zM323 549h1v1h-1zM323 552h1v1h-1zM323 557h1v1h-1zM324 544h1v1h-1zM324 556h1v1h-1zM325 546h1v1h-1zM325 551h1v1h-1zM325 555h1v1h-1zM325 557h1v1h-1zM326 548h1v1h-1zM326 550h1v1h-1zM326 551h1v1h-1zM327 544h1v1h-1zM327 556h1v1h-1zM328 548h1v1h-1zM328 550h1v1h-1zM328 551h1v1h-1zM328 554h1v1h-1zM328 556h1v1h-1zM329 545h1v1h-1zM329 548h1v1h-1zM329 550h1v1h-1zM329 555h1v1h-1zM329 557h1v1h-1zM330 547h1v1h-1zM330 550h1v1h-1zM330 553h1v1h-1zM330 556h1v1h-1zM330 558h1v1h-1zM331 546h1v1h-1zM331 548h1v1h-1zM331 551h1v1h-1zM331 552h1v1h-1zM331 553h1v1h-1zM331 554h1v1h-1zM331 558h1v1h-1zM332 547h1v1h-1zM332 550h1v1h-1zM332 555h1v1h-1zM332 556h1v1h-1zM333 554h1v1h-1zM333 555h1v1h-1zM333 556h1v1h-1zM334 545h1v1h-1zM335 546h1v1h-1zM335 552h1v1h-1zM335 556h1v1h-1zM336 547h1v1h-1zM336 549h1v1h-1zM336 555h1v1h-1zM337 551h1v1h-1zM337 554h1v1h-1zM338 548h1v1h-1zM338 551h1v1h-1zM338 552h1v1h-1zM339 546h1v1h-1zM339 550h1v1h-1zM339 554h1v1h-1zM340 549h1v1h-1zM340 556h1v1h-1zM341 548h1v1h-1zM341 552h1v1h-1zM341 554h1v1h-1zM342 545h1v1h-1zM342 546h1v1h-1zM342 549h1v1h-1zM342 550h1v1h-1zM342 554h1v1h-1zM342 556h1v1h-1zM342 557h1v1h-1zM342 558h1v1h-1zM343 544h1v1h-1zM344 544h1v1h-1zM344 545h1v1h-1zM344 548h1v1h-1zM344 549h1v1h-1zM344 558h1v1h-1zM345 549h1v1h-1zM345 550h1v1h-1zM346 543h1v1h-1zM346 544h1v1h-1zM346 548h1v1h-1zM346 551h1v1h-1zM346 552h1v1h-1zM346 554h1v1h-1zM346 555h1v1h-1zM347 546h1v1h-1zM347 552h1v1h-1zM347 554h1v1h-1zM347 557h1v1h-1zM347 558h1v1h-1zM348 550h1v1h-1zM348 556h1v1h-1zM349 548h1v1h-1zM349 550h1v1h-1zM349 551h1v1h-1zM349 552h1v1h-1zM349 553h1v1h-1zM350 544h1v1h-1zM350 547h1v1h-1zM350 549h1v1h-1zM350 553h1v1h-1zM350 554h1v1h-1zM350 558h1v1h-1zM351 547h1v1h-1zM351 560h1v1h-1zM351 564h1v1h-1zM352 541h1v1h-1zM352 551h1v1h-1zM352 556h1v1h-1zM352 557h1v1h-1zM353 544h1v1h-1zM353 555h1v1h-1zM354 546h1v1h-1zM354 551h1v1h-1zM354 552h1v1h-1zM355 539h1v1h-1zM355 547h1v1h-1zM355 549h1v1h-1zM355 551h1v1h-1zM355 552h1v1h-1zM355 553h1v1h-1zM355 556h1v1h-1zM356 543h1v1h-1zM356 550h1v1h-1zM356 552h1v1h-1zM356 553h1v1h-1zM356 554h1v1h-1zM356 555h1v1h-1zM357 547h1v1h-1zM357 551h1v1h-1zM357 553h1v1h-1zM357 557h1v1h-1zM358 543h1v1h-1zM358 554h1v1h-1zM359 545h1v1h-1zM359 546h1v1h-1zM359 551h1v1h-1zM359 554h1v1h-1zM359 555h1v1h-1zM360 545h1v1h-1zM360 547h1v1h-1zM360 548h1v1h-1zM360 549h1v1h-1zM360 550h1v1h-1zM360 552h1v1h-1zM360 553h1v1h-1zM360 554h1v1h-1zM360 556h1v1h-1zM361 544h1v1h-1zM361 548h1v1h-1zM361 549h1v1h-1zM361 551h1v1h-1zM362 544h1v1h-1zM362 549h1v1h-1zM362 552h1v1h-1zM362 555h1v1h-1zM363 544h1v1h-1zM363 545h1v1h-1zM363 548h1v1h-1zM363 549h1v1h-1zM363 551h1v1h-1zM364 544h1v1h-1zM364 551h1v1h-1zM364 553h1v1h-1zM364 554h1v1h-1zM365 548h1v1h-1zM365 555h1v1h-1zM366 549h1v1h-1zM366 554h1v1h-1zM367 544h1v1h-1zM367 550h1v1h-1zM367 551h1v1h-1zM367 553h1v1h-1zM368 547h1v1h-1zM369 541h1v1h-1zM369 551h1v1h-1zM369 552h1v1h-1zM370 541h1v1h-1zM370 546h1v1h-1zM370 550h1v1h-1zM370 551h1v1h-1zM370 553h1v1h-1zM370 554h1v1h-1zM370 555h1v1h-1zM371 540h1v1h-1zM371 543h1v1h-1zM371 545h1v1h-1zM371 549h1v1h-1zM372 541h1v1h-1zM372 546h1v1h-1zM373 541h1v1h-1zM374 548h1v1h-1zM375 546h1v1h-1zM375 553h1v1h-1zM376 542h1v1h-1zM376 544h1v1h-1zM376 545h1v1h-1zM376 546h1v1h-1zM376 550h1v1h-1zM376 551h1v1h-1zM377 543h1v1h-1zM377 546h1v1h-1zM377 548h1v1h-1zM377 550h1v1h-1zM377 554h1v1h-1zM378 538h1v1h-1zM378 541h1v1h-1zM378 543h1v1h-1zM378 547h1v1h-1zM378 552h1v1h-1zM379 541h1v1h-1zM379 545h1v1h-1zM379 546h1v1h-1zM379 548h1v1h-1zM379 550h1v1h-1zM379 551h1v1h-1zM380 542h1v1h-1zM380 544h1v1h-1zM380 548h1v1h-1zM380 549h1v1h-1zM380 550h1v1h-1zM380 551h1v1h-1zM381 540h1v1h-1zM381 546h1v1h-1zM381 548h1v1h-1zM381 549h1v1h-1zM382 542h1v1h-1zM382 543h1v1h-1zM382 544h1v1h-1zM382 546h1v1h-1zM382 549h1v1h-1zM382 550h1v1h-1zM382 558h1v1h-1zM383 539h1v1h-1zM383 546h1v1h-1zM383 551h1v1h-1zM384 538h1v1h-1zM384 545h1v1h-1zM384 546h1v1h-1zM384 548h1v1h-1zM384 554h1v1h-1zM385 544h1v1h-1zM385 551h1v1h-1zM386 545h1v1h-1zM386 546h1v1h-1zM386 547h1v1h-1zM386 549h1v1h-1zM386 552h1v1h-1zM386 556h1v1h-1zM387 546h1v1h-1zM387 552h1v1h-1zM388 544h1v1h-1zM388 548h1v1h-1zM388 550h1v1h-1zM388 551h1v1h-1zM389 548h1v1h-1zM389 549h1v1h-1zM389 551h1v1h-1zM390 533h1v1h-1zM390 538h1v1h-1zM390 541h1v1h-1zM390 544h1v1h-1zM391 547h1v1h-1zM392 538h1v1h-1zM392 541h1v1h-1zM392 543h1v1h-1zM392 546h1v1h-1zM392 551h1v1h-1zM393 537h1v1h-1zM393 543h1v1h-1zM393 544h1v1h-1zM393 547h1v1h-1zM393 548h1v1h-1zM394 537h1v1h-1zM394 540h1v1h-1zM394 541h1v1h-1zM394 542h1v1h-1zM394 549h1v1h-1zM395 537h1v1h-1zM395 544h1v1h-1zM395 545h1v1h-1zM395 546h1v1h-1zM395 550h1v1h-1zM396 540h1v1h-1zM396 541h1v1h-1zM396 543h1v1h-1zM396 547h1v1h-1zM397 535h1v1h-1zM397 536h1v1h-1zM397 541h1v1h-1zM397 544h1v1h-1zM397 546h1v1h-1zM397 548h1v1h-1zM397 549h1v1h-1zM398 537h1v1h-1zM398 538h1v1h-1zM398 543h1v1h-1zM398 550h1v1h-1zM399 537h1v1h-1zM399 541h1v1h-1zM399 542h1v1h-1zM399 545h1v1h-1zM399 547h1v1h-1zM399 548h1v1h-1zM399 549h1v1h-1zM400 536h1v1h-1zM400 539h1v1h-1zM400 541h1v1h-1zM400 542h1v1h-1zM400 547h1v1h-1zM400 548h1v1h-1zM400 550h1v1h-1zM400 553h1v1h-1zM401 538h1v1h-1zM401 541h1v1h-1zM401 542h1v1h-1zM402 537h1v1h-1zM402 541h1v1h-1zM402 544h1v1h-1zM402 545h1v1h-1zM402 549h1v1h-1zM403 537h1v1h-1zM403 538h1v1h-1zM403 546h1v1h-1zM404 537h1v1h-1zM404 538h1v1h-1zM404 539h1v1h-1zM404 540h1v1h-1zM404 541h1v1h-1zM404 546h1v1h-1zM405 541h1v1h-1zM405 547h1v1h-1zM405 548h1v1h-1zM405 549h1v1h-1zM406 538h1v1h-1zM406 540h1v1h-1zM406 541h1v1h-1zM406 545h1v1h-1zM407 540h1v1h-1zM407 544h1v1h-1zM407 553h1v1h-1zM408 535h1v1h-1zM408 538h1v1h-1zM408 540h1v1h-1zM408 542h1v1h-1zM408 543h1v1h-1zM408 545h1v1h-1zM408 547h1v1h-1zM408 549h1v1h-1zM409 538h1v1h-1zM409 539h1v1h-1zM409 540h1v1h-1zM409 545h1v1h-1zM410 540h1v1h-1zM410 542h1v1h-1zM410 544h1v1h-1zM410 547h1v1h-1zM410 548h1v1h-1zM411 541h1v1h-1zM412 538h1v1h-1zM412 543h1v1h-1zM412 544h1v1h-1zM412 548h1v1h-1zM412 549h1v1h-1zM412 551h1v1h-1zM413 535h1v1h-1zM413 539h1v1h-1zM413 541h1v1h-1zM413 546h1v1h-1zM413 548h1v1h-1zM414 538h1v1h-1zM414 543h1v1h-1zM414 544h1v1h-1zM415 539h1v1h-1zM415 540h1v1h-1zM415 541h1v1h-1zM415 542h1v1h-1zM415 544h1v1h-1zM416 536h1v1h-1zM416 539h1v1h-1zM416 541h1v1h-1zM416 543h1v1h-1zM416 546h1v1h-1zM417 534h1v1h-1zM417 540h1v1h-1zM417 546h1v1h-1zM418 534h1v1h-1zM418 540h1v1h-1zM418 547h1v1h-1zM418 548h1v1h-1zM418 549h1v1h-1zM419 537h1v1h-1zM419 538h1v1h-1zM419 540h1v1h-1zM419 541h1v1h-1zM419 545h1v1h-1zM420 534h1v1h-1zM420 535h1v1h-1zM420 536h1v1h-1zM420 537h1v1h-1zM420 539h1v1h-1zM420 543h1v1h-1zM420 545h1v1h-1zM420 547h1v1h-1zM421 536h1v1h-1zM421 540h1v1h-1zM421 544h1v1h-1zM421 548h1v1h-1zM422 534h1v1h-1zM422 535h1v1h-1zM422 546h1v1h-1zM423 543h1v1h-1zM423 545h1v1h-1zM424 540h1v1h-1zM424 543h1v1h-1zM424 548h1v1h-1zM425 540h1v1h-1zM425 541h1v1h-1zM425 542h1v1h-1zM425 547h1v1h-1zM426 535h1v1h-1zM426 537h1v1h-1zM426 538h1v1h-1zM426 539h1v1h-1zM426 540h1v1h-1zM426 545h1v1h-1zM426 547h1v1h-1zM427 540h1v1h-1zM427 544h1v1h-1zM428 534h1v1h-1zM428 539h1v1h-1zM428 542h1v1h-1zM428 547h1v1h-1zM429 534h1v1h-1zM429 535h1v1h-1zM429 536h1v1h-1zM429 537h1v1h-1zM429 539h1v1h-1zM429 546h1v1h-1zM429 547h1v1h-1zM429 548h1v1h-1zM430 536h1v1h-1zM430 546h1v1h-1zM431 535h1v1h-1zM431 544h1v1h-1zM431 545h1v1h-1zM432 537h1v1h-1zM432 538h1v1h-1zM432 539h1v1h-1zM432 542h1v1h-1zM432 544h1v1h-1zM432 547h1v1h-1zM432 549h1v1h-1zM433 536h1v1h-1zM433 540h1v1h-1zM433 541h1v1h-1zM433 543h1v1h-1zM433 544h1v1h-1zM434 535h1v1h-1zM434 540h1v1h-1zM435 535h1v1h-1zM435 537h1v1h-1zM435 538h1v1h-1zM435 539h1v1h-1zM435 542h1v1h-1zM435 547h1v1h-1zM436 544h1v1h-1zM437 535h1v1h-1zM437 546h1v1h-1zM438 535h1v1h-1zM438 538h1v1h-1zM438 547h1v1h-1zM440 540h1v1h-1zM440 544h1v1h-1zM440 545h1v1h-1zM441 535h1v1h-1zM441 542h1v1h-1zM441 544h1v1h-1zM441 546h1v1h-1zM442 534h1v1h-1zM442 535h1v1h-1zM442 539h1v1h-1zM442 544h1v1h-1zM442 545h1v1h-1zM443 535h1v1h-1zM443 538h1v1h-1zM443 540h1v1h-1zM443 544h1v1h-1zM443 545h1v1h-1zM444 532h1v1h-1zM444 537h1v1h-1zM444 539h1v1h-1zM444 542h1v1h-1zM445 542h1v1h-1zM445 543h1v1h-1zM445 545h1v1h-1zM446 532h1v1h-1zM446 536h1v1h-1zM446 540h1v1h-1zM446 542h1v1h-1zM446 546h1v1h-1zM447 534h1v1h-1zM447 539h1v1h-1zM447 542h1v1h-1zM448 532h1v1h-1zM448 534h1v1h-1zM448 535h1v1h-1zM448 537h1v1h-1zM448 546h1v1h-1zM449 533h1v1h-1zM449 534h1v1h-1zM449 538h1v1h-1zM449 542h1v1h-1zM449 543h1v1h-1zM450 531h1v1h-1zM450 533h1v1h-1zM450 537h1v1h-1zM450 543h1v1h-1zM451 531h1v1h-1zM451 532h1v1h-1zM451 533h1v1h-1zM451 535h1v1h-1zM451 536h1v1h-1zM451 539h1v1h-1zM451 540h1v1h-1zM451 542h1v1h-1zM452 532h1v1h-1zM452 535h1v1h-1zM452 538h1v1h-1zM453 532h1v1h-1zM453 533h1v1h-1zM453 534h1v1h-1zM453 539h1v1h-1zM453 544h1v1h-1zM454 526h1v1h-1zM454 529h1v1h-1zM454 531h1v1h-1zM454 537h1v1h-1zM454 539h1v1h-1zM455 530h1v1h-1zM455 536h1v1h-1zM455 544h1v1h-1zM456 531h1v1h-1zM456 532h1v1h-1zM456 534h1v1h-1zM456 537h1v1h-1zM456 541h1v1h-1zM456 542h1v1h-1zM457 529h1v1h-1zM457 535h1v1h-1zM457 536h1v1h-1zM457 540h1v1h-1zM457 547h1v1h-1zM458 531h1v1h-1zM458 537h1v1h-1zM459 532h1v1h-1zM459 534h1v1h-1zM459 538h1v1h-1zM460 532h1v1h-1zM460 535h1v1h-1zM460 536h1v1h-1zM460 539h1v1h-1zM461 528h1v1h-1zM461 529h1v1h-1zM461 532h1v1h-1zM461 537h1v1h-1zM461 538h1v1h-1zM461 540h1v1h-1zM462 530h1v1h-1zM462 531h1v1h-1zM462 532h1v1h-1zM462 534h1v1h-1zM462 538h1v1h-1zM462 542h1v1h-1zM463 523h1v1h-1zM463 539h1v1h-1zM463 548h1v1h-1zM464 527h1v1h-1zM464 528h1v1h-1zM464 530h1v1h-1zM464 533h1v1h-1zM464 534h1v1h-1zM464 535h1v1h-1zM464 536h1v1h-1zM464 537h1v1h-1zM465 526h1v1h-1zM466 524h1v1h-1zM466 527h1v1h-1zM466 528h1v1h-1zM466 530h1v1h-1zM466 531h1v1h-1zM466 534h1v1h-1zM466 537h1v1h-1zM467 529h1v1h-1zM467 530h1v1h-1zM467 532h1v1h-1zM467 537h1v1h-1zM467 539h1v1h-1zM468 523h1v1h-1zM468 529h1v1h-1zM468 532h1v1h-1zM468 534h1v1h-1zM468 535h1v1h-1zM469 524h1v1h-1zM469 526h1v1h-1zM469 527h1v1h-1zM469 529h1v1h-1zM469 533h1v1h-1zM469 534h1v1h-1zM469 535h1v1h-1zM470 533h1v1h-1zM470 535h1v1h-1zM470 537h1v1h-1zM471 521h1v1h-1zM471 522h1v1h-1zM471 528h1v1h-1zM471 537h1v1h-1zM472 518h1v1h-1zM472 524h1v1h-1zM472 528h1v1h-1zM472 529h1v1h-1zM472 535h1v1h-1zM473 518h1v1h-1zM473 522h1v1h-1zM473 526h1v1h-1zM473 530h1v1h-1zM474 522h1v1h-1zM474 524h1v1h-1zM474 526h1v1h-1zM474 529h1v1h-1zM474 530h1v1h-1zM475 515h1v1h-1zM475 517h1v1h-1zM475 520h1v1h-1zM475 522h1v1h-1zM475 528h1v1h-1zM475 529h1v1h-1zM475 530h1v1h-1zM476 514h1v1h-1zM476 515h1v1h-1zM476 520h1v1h-1zM476 521h1v1h-1zM476 523h1v1h-1zM476 524h1v1h-1zM476 526h1v1h-1zM476 527h1v1h-1zM477 513h1v1h-1zM477 515h1v1h-1zM477 516h1v1h-1zM477 517h1v1h-1zM477 524h1v1h-1zM477 525h1v1h-1zM477 526h1v1h-1zM477 527h1v1h-1zM478 509h1v1h-1zM478 513h1v1h-1zM478 514h1v1h-1zM478 515h1v1h-1zM478 516h1v1h-1zM479 509h1v1h-1zM479 512h1v1h-1zM479 514h1v1h-1zM479 515h1v1h-1zM479 516h1v1h-1zM479 517h1v1h-1zM479 518h1v1h-1zM480 513h1v1h-1zM480 514h1v1h-1zM481 511h1v1h-1zM481 515h1v1h-1zM482 495h1v1h-1zM482 499h1v1h-1zM482 504h1v1h-1zM482 507h1v1h-1zM482 509h1v1h-1zM482 510h1v1h-1zM482 511h1v1h-1zM482 513h1v1h-1zM482 517h1v1h-1zM483 501h1v1h-1zM483 502h1v1h-1zM483 506h1v1h-1zM483 507h1v1h-1zM483 508h1v1h-1zM483 510h1v1h-1zM483 512h1v1h-1zM483 514h1v1h-1zM483 519h1v1h-1zM484 495h1v1h-1zM484 496h1v1h-1zM484 501h1v1h-1zM484 511h1v1h-1zM484 514h1v1h-1zM485 492h1v1h-1zM485 498h1v1h-1zM485 503h1v1h-1zM485 504h1v1h-1zM485 505h1v1h-1zM485 509h1v1h-1zM485 512h1v1h-1zM486 492h1v1h-1zM486 493h1v1h-1zM486 495h1v1h-1zM486 496h1v1h-1zM486 504h1v1h-1zM486 511h1v1h-1zM487 484h1v1h-1zM487 487h1v1h-1zM487 490h1v1h-1zM487 492h1v1h-1zM487 493h1v1h-1zM487 496h1v1h-1zM487 497h1v1h-1zM487 499h1v1h-1zM487 500h1v1h-1zM487 501h1v1h-1zM487 507h1v1h-1zM488 483h1v1h-1zM488 489h1v1h-1zM488 492h1v1h-1zM488 497h1v1h-1zM489 476h1v1h-1zM489 478h1v1h-1zM489 483h1v1h-1zM489 485h1v1h-1zM489 487h1v1h-1zM489 492h1v1h-1zM489 493h1v1h-1zM489 496h1v1h-1zM490 480h1v1h-1zM490 494h1v1h-1zM490 496h1v1h-1zM491 468h1v1h-1zM491 471h1v1h-1zM491 478h1v1h-1zM491 489h1v1h-1zM492 470h1v1h-1zM492 471h1v1h-1zM492 480h1v1h-1zM492 483h1v1h-1zM492 489h1v1h-1zM492 490h1v1h-1zM493 452h1v1h-1zM493 462h1v1h-1zM493 466h1v1h-1zM493 471h1v1h-1zM493 472h1v1h-1zM493 479h1v1h-1zM493 482h1v1h-1zM494 473h1v1h-1zM494 477h1v1h-1zM494 478h1v1h-1zM494 487h1v1h-1zM495 463h1v1h-1zM495 467h1v1h-1zM495 469h1v1h-1zM495 474h1v1h-1zM495 478h1v1h-1zM495 479h1v1h-1zM495 481h1v1h-1zM495 484h1v1h-1zM496 443h1v1h-1zM496 454h1v1h-1zM496 458h1v1h-1zM496 460h1v1h-1zM496 462h1v1h-1zM496 464h1v1h-1zM496 467h1v1h-1zM496 469h1v1h-1zM496 481h1v1h-1zM497 443h1v1h-1zM497 445h1v1h-1zM497 450h1v1h-1zM497 456h1v1h-1zM497 464h1v1h-1zM497 468h1v1h-1zM497 471h1v1h-1zM498 437h1v1h-1zM498 438h1v1h-1zM498 442h1v1h-1zM498 444h1v1h-1zM498 445h1v1h-1zM498 448h1v1h-1zM498 450h1v1h-1zM498 452h1v1h-1zM498 453h1v1h-1zM498 454h1v1h-1zM498 456h1v1h-1zM498 459h1v1h-1zM498 461h1v1h-1zM498 462h1v1h-1zM499 422h1v1h-1zM499 435h1v1h-1zM499 437h1v1h-1zM499 439h1v1h-1zM499 443h1v1h-1zM499 447h1v1h-1zM499 449h1v1h-1zM499 454h1v1h-1zM499 455h1v1h-1zM499 463h1v1h-1zM500 400h1v1h-1zM500 414h1v1h-1zM500 415h1v1h-1zM500 424h1v1h-1zM500 425h1v1h-1zM500 427h1v1h-1zM500 432h1v1h-1zM500 433h1v1h-1zM500 436h1v1h-1zM500 439h1v1h-1zM500 441h1v1h-1zM500 444h1v1h-1zM500 447h1v1h-1zM500 448h1v1h-1zM500 449h1v1h-1zM500 450h1v1h-1zM501 411h1v1h-1zM501 415h1v1h-1zM501 417h1v1h-1zM501 418h1v1h-1zM501 421h1v1h-1zM501 423h1v1h-1zM501 424h1v1h-1zM501 431h1v1h-1zM501 433h1v1h-1zM501 438h1v1h-1zM501 441h1v1h-1zM501 443h1v1h-1zM501 449h1v1h-1zM501 451h1v1h-1zM502 411h1v1h-1zM502 413h1v1h-1zM502 414h1v1h-1zM502 415h1v1h-1zM502 417h1v1h-1zM502 419h1v1h-1zM502 422h1v1h-1zM502 423h1v1h-1zM502 433h1v1h-1zM502 448h1v1h-1zM502 456h1v1h-1zM503 410h1v1h-1zM503 415h1v1h-1zM503 416h1v1h-1zM503 418h1v1h-1zM503 422h1v1h-1zM503 429h1v1h-1zM503 430h1v1h-1zM503 432h1v1h-1zM503 434h1v1h-1zM503 435h1v1h-1zM503 436h1v1h-1zM503 438h1v1h-1zM504 393h1v1h-1zM504 404h1v1h-1zM504 405h1v1h-1zM504 409h1v1h-1zM504 410h1v1h-1zM504 414h1v1h-1zM504 419h1v1h-1zM504 420h1v1h-1zM504 422h1v1h-1zM504 424h1v1h-1zM504 432h1v1h-1zM505 388h1v1h-1zM505 391h1v1h-1zM505 392h1v1h-1zM505 393h1v1h-1zM505 395h1v1h-1zM505 397h1v1h-1zM505 404h1v1h-1zM505 405h1v1h-1zM505 407h1v1h-1zM505 411h1v1h-1zM505 419h1v1h-1zM506 377h1v1h-1zM506 383h1v1h-1zM506 390h1v1h-1zM506 392h1v1h-1zM506 404h1v1h-1zM506 408h1v1h-1zM506 423h1v1h-1zM507 366h1v1h-1zM507 370h1v1h-1zM507 373h1v1h-1zM507 385h1v1h-1zM507 386h1v1h-1zM507 392h1v1h-1zM507 396h1v1h-1zM507 399h1v1h-1zM507 404h1v1h-1zM507 405h1v1h-1zM507 406h1v1h-1zM507 409h1v1h-1zM507 418h1v1h-1zM507 419h1v1h-1zM508 368h1v1h-1zM508 373h1v1h-1zM508 376h1v1h-1zM508 378h1v1h-1zM508 380h1v1h-1zM508 386h1v1h-1zM508 395h1v1h-1zM508 397h1v1h-1zM508 416h1v1h-1zM509 357h1v1h-1zM509 358h1v1h-1zM509 366h1v1h-1zM509 374h1v1h-1zM509 376h1v1h-1zM509 377h1v1h-1zM509 379h1v1h-1zM509 385h1v1h-1zM509 387h1v1h-1zM509 394h1v1h-1zM509 395h1v1h-1zM509 404h1v1h-1zM509 406h1v1h-1zM510 346h1v1h-1zM510 350h1v1h-1zM510 353h1v1h-1zM510 357h1v1h-1zM510 361h1v1h-1zM510 366h1v1h-1zM510 370h1v1h-1zM510 372h1v1h-1zM510 377h1v1h-1zM510 382h1v1h-1zM510 384h1v1h-1zM510 393h1v1h-1zM510 394h1v1h-1zM510 397h1v1h-1zM510 400h1v1h-1zM510 401h1v1h-1zM511 351h1v1h-1zM511 356h1v1h-1zM511 359h1v1h-1zM511 373h1v1h-1zM511 375h1v1h-1zM511 388h1v1h-1zM512 332h1v1h-1zM512 335h1v1h-1zM512 340h1v1h-1zM512 347h1v1h-1zM512 348h1v1h-1zM512 351h1v1h-1zM512 372h1v1h-1zM512 375h1v1h-1zM512 377h1v1h-1zM512 388h1v1h-1zM512 392h1v1h-1zM513 337h1v1h-1zM513 338h1v1h-1zM513 340h1v1h-1zM513 343h1v1h-1zM513 346h1v1h-1zM513 362h1v1h-1zM513 364h1v1h-1zM513 370h1v1h-1zM513 371h1v1h-1zM514 315h1v1h-1zM514 321h1v1h-1zM514 322h1v1h-1zM514 334h1v1h-1zM514 339h1v1h-1zM514 342h1v1h-1zM514 348h1v1h-1zM514 354h1v1h-1zM514 358h1v1h-1zM515 307h1v1h-1zM515 314h1v1h-1zM515 319h1v1h-1zM515 324h1v1h-1zM515 326h1v1h-1zM515 330h1v1h-1zM515 342h1v1h-1zM515 345h1v1h-1zM515 346h1v1h-1zM515 354h1v1h-1zM515 356h1v1h-1zM516 298h1v1h-1zM516 299h1v1h-1zM516 306h1v1h-1zM516 309h1v1h-1zM516 310h1v1h-1zM516 312h1v1h-1zM516 313h1v1h-1zM516 324h1v1h-1zM516 326h1v1h-1zM516 329h1v1h-1zM516 330h1v1h-1zM516 336h1v1h-1zM516 337h1v1h-1zM516 339h1v1h-1zM516 341h1v1h-1zM517 291h1v1h-1zM517 292h1v1h-1zM517 293h1v1h-1zM517 295h1v1h-1zM517 301h1v1h-1zM517 302h1v1h-1zM517 304h1v1h-1zM517 306h1v1h-1zM517 308h1v1h-1zM517 310h1v1h-1zM517 318h1v1h-1zM517 326h1v1h-1zM517 331h1v1h-1zM517 332h1v1h-1zM517 345h1v1h-1zM518 278h1v1h-1zM518 286h1v1h-1zM518 289h1v1h-1zM518 292h1v1h-1zM518 294h1v1h-1zM518 298h1v1h-1zM518 299h1v1h-1zM518 301h1v1h-1zM518 304h1v1h-1zM518 306h1v1h-1zM518 307h1v1h-1zM518 309h1v1h-1zM518 311h1v1h-1zM518 319h1v1h-1zM518 320h1v1h-1zM518 321h1v1h-1zM518 322h1v1h-1zM518 324h1v1h-1zM518 325h1v1h-1zM518 327h1v1h-1zM518 334h1v1h-1zM519 285h1v1h-1zM519 292h1v1h-1zM519 293h1v1h-1zM519 294h1v1h-1zM519 295h1v1h-1zM519 298h1v1h-1zM519 304h1v1h-1zM519 316h1v1h-1zM519 321h1v1h-1zM519 324h1v1h-1zM519 329h1v1h-1zM519 331h1v1h-1zM519 334h1v1h-1zM520 285h1v1h-1zM520 290h1v1h-1zM520 298h1v1h-1zM520 299h1v1h-1zM520 300h1v1h-1zM520 316h1v1h-1zM520 317h1v1h-1zM521 273h1v1h-1zM521 275h1v1h-1zM521 286h1v1h-1zM521 296h1v1h-1zM521 302h1v1h-1zM521 303h1v1h-1zM521 305h1v1h-1zM521 306h1v1h-1zM521 308h1v1h-1zM521 312h1v1h-1zM522 260h1v1h-1zM522 261h1v1h-1zM522 264h1v1h-1zM522 267h1v1h-1zM522 273h1v1h-1zM522 275h1v1h-1zM522 279h1v1h-1zM522 280h1v1h-1zM522 283h1v1h-1zM522 291h1v1h-1zM522 299h1v1h-1zM522 309h1v1h-1zM523 265h1v1h-1zM523 268h1v1h-1zM523 270h1v1h-1zM523 273h1v1h-1zM523 276h1v1h-1zM523 283h1v1h-1zM523 286h1v1h-1zM523 289h1v1h-1zM523 297h1v1h-1zM523 298h1v1h-1zM524 253h1v1h-1zM524 258h1v1h-1zM524 265h1v1h-1zM524 268h1v1h-1zM524 280h1v1h-1zM524 281h1v1h-1zM524 283h1v1h-1zM524 289h1v1h-1zM524 290h1v1h-1zM525 238h1v1h-1zM525 242h1v1h-1zM525 246h1v1h-1zM525 250h1v1h-1zM525 253h1v1h-1zM525 259h1v1h-1zM525 262h1v1h-1zM525 263h1v1h-1zM525 276h1v1h-1zM525 278h1v1h-1zM526 231h1v1h-1zM526 239h1v1h-1zM526 247h1v1h-1zM526 250h1v1h-1zM526 255h1v1h-1zM526 267h1v1h-1zM526 268h1v1h-1zM526 276h1v1h-1zM527 240h1v1h-1zM527 245h1v1h-1zM527 248h1v1h-1zM527 251h1v1h-1zM527 255h1v1h-1zM527 256h1v1h-1zM527 264h1v1h-1zM527 267h1v1h-1zM528 229h1v1h-1zM528 232h1v1h-1zM528 234h1v1h-1zM528 240h1v1h-1zM528 244h1v1h-1zM528 246h1v1h-1zM528 252h1v1h-1zM528 256h1v1h-1zM528 257h1v1h-1zM528 261h1v1h-1zM528 263h1v1h-1zM528 270h1v1h-1zM529 215h1v1h-1zM529 228h1v1h-1zM529 231h1v1h-1zM529 234h1v1h-1zM529 237h1v1h-1zM529 238h1v1h-1zM529 245h1v1h-1zM529 250h1v1h-1zM529 251h1v1h-1zM529 254h1v1h-1zM529 255h1v1h-1zM529 256h1v1h-1zM530 212h1v1h-1zM530 218h1v1h-1zM530 221h1v1h-1zM530 222h1v1h-1zM530 225h1v1h-1zM530 226h1v1h-1zM530 237h1v1h-1zM530 247h1v1h-1zM530 250h1v1h-1zM531 211h1v1h-1zM531 214h1v1h-1zM531 219h1v1h-1zM531 224h1v1h-1zM531 227h1v1h-1zM531 231h1v1h-1zM531 232h1v1h-1zM531 233h1v1h-1zM531 241h1v1h-1zM531 243h1v1h-1zM531 259h1v1h-1zM532 213h1v1h-1zM532 222h1v1h-1zM532 224h1v1h-1zM532 225h1v1h-1zM532 226h1v1h-1zM532 227h1v1h-1zM532 243h1v1h-1zM533 199h1v1h-1zM533 202h1v1h-1zM533 207h1v1h-1zM533 208h1v1h-1zM533 210h1v1h-1zM533 216h1v1h-1zM533 229h1v1h-1zM533 234h1v1h-1zM534 192h1v1h-1zM534 198h1v1h-1zM534 211h1v1h-1zM534 212h1v1h-1zM534 213h1v1h-1zM534 221h1v1h-1zM534 222h1v1h-1zM534 223h1v1h-1zM534 225h1v1h-1zM534 227h1v1h-1zM535 195h1v1h-1zM535 196h1v1h-1zM535 203h1v1h-1zM535 204h1v1h-1zM535 208h1v1h-1zM535 216h1v1h-1zM535 217h1v1h-1zM535 218h1v1h-1zM535 220h1v1h-1zM536 195h1v1h-1zM536 199h1v1h-1zM536 200h1v1h-1zM536 201h1v1h-1zM536 205h1v1h-1zM536 211h1v1h-1zM536 214h1v1h-1zM536 219h1v1h-1zM536 227h1v1h-1zM537 190h1v1h-1zM537 196h1v1h-1zM537 199h1v1h-1zM537 200h1v1h-1zM537 202h1v1h-1zM537 206h1v1h-1zM537 207h1v1h-1zM537 210h1v1h-1zM537 211h1v1h-1zM537 216h1v1h-1zM538 183h1v1h-1zM538 185h1v1h-1zM538 192h1v1h-1zM538 197h1v1h-1zM538 199h1v1h-1zM538 202h1v1h-1zM538 207h1v1h-1zM538 208h1v1h-1zM538 212h1v1h-1zM539 186h1v1h-1zM539 187h1v1h-1zM539 192h1v1h-1zM539 195h1v1h-1zM539 196h1v1h-1zM539 197h1v1h-1zM539 199h1v1h-1zM539 202h1v1h-1zM539 204h1v1h-1zM539 206h1v1h-1zM540 178h1v1h-1zM540 184h1v1h-1zM540 188h1v1h-1zM540 192h1v1h-1zM540 193h1v1h-1zM540 194h1v1h-1zM540 195h1v1h-1zM540 197h1v1h-1zM540 199h1v1h-1zM540 202h1v1h-1zM540 203h1v1h-1zM541 176h1v1h-1zM541 178h1v1h-1zM541 181h1v1h-1zM541 184h1v1h-1zM541 189h1v1h-1zM541 190h1v1h-1zM541 192h1v1h-1zM541 194h1v1h-1zM541 195h1v1h-1zM541 196h1v1h-1zM542 178h1v1h-1zM542 183h1v1h-1zM542 189h1v1h-1zM542 196h1v1h-1zM543 181h1v1h-1zM543 188h1v1h-1zM543 192h1v1h-1zM543 194h1v1h-1zM544 179h1v1h-1zM544 180h1v1h-1zM544 182h1v1h-1zM544 184h1v1h-1zM545 175h1v1h-1zM545 177h1v1h-1zM545 180h1v1h-1zM545 183h1v1h-1zM546 175h1v1h-1zM546 182h1v1h-1zM546 185h1v1h-1zM547 174h1v1h-1zM547 175h1v1h-1zM547 182h1v1h-1zM547 187h1v1h-1zM548 170h1v1h-1zM548 172h1v1h-1zM548 179h1v1h-1zM548 183h1v1h-1zM548 185h1v1h-1zM549 170h1v1h-1zM549 173h1v1h-1zM549 175h1v1h-1zM549 176h1v1h-1zM549 177h1v1h-1zM549 184h1v1h-1zM550 175h1v1h-1zM550 177h1v1h-1zM550 179h1v1h-1zM550 181h1v1h-1zM551 172h1v1h-1zM551 175h1v1h-1zM551 179h1v1h-1zM551 181h1v1h-1zM552 171h1v1h-1zM553 172h1v1h-1zM553 184h1v1h-1zM554 171h1v1h-1zM554 172h1v1h-1zM554 174h1v1h-1zM554 175h1v1h-1zM555 170h1v1h-1zM555 172h1v1h-1zM555 175h1v1h-1zM555 176h1v1h-1zM556 173h1v1h-1zM556 174h1v1h-1zM556 176h1v1h-1zM556 180h1v1h-1zM556 181h1v1h-1zM556 182h1v1h-1zM557 172h1v1h-1zM557 183h1v1h-1zM558 170h1v1h-1zM558 171h1v1h-1zM558 177h1v1h-1zM558 179h1v1h-1zM558 181h1v1h-1zM558 182h1v1h-1zM559 171h1v1h-1zM559 173h1v1h-1zM559 176h1v1h-1zM559 178h1v1h-1zM559 180h1v1h-1zM560 173h1v1h-1zM560 174h1v1h-1zM560 182h1v1h-1zM561 171h1v1h-1zM561 173h1v1h-1zM561 176h1v1h-1zM561 182h1v1h-1zM561 183h1v1h-1zM561 185h1v1h-1zM562 171h1v1h-1zM562 174h1v1h-1zM562 176h1v1h-1zM562 178h1v1h-1zM562 183h1v1h-1zM563 172h1v1h-1zM563 177h1v1h-1zM563 178h1v1h-1zM563 180h1v1h-1zM564 171h1v1h-1zM564 175h1v1h-1zM564 177h1v1h-1zM564 179h1v1h-1zM564 184h1v1h-1zM564 185h1v1h-1zM565 174h1v1h-1zM565 178h1v1h-1zM565 179h1v1h-1zM565 185h1v1h-1zM566 176h1v1h-1zM566 180h1v1h-1zM566 181h1v1h-1zM567 173h1v1h-1zM567 174h1v1h-1zM567 175h1v1h-1zM567 177h1v1h-1zM567 180h1v1h-1zM567 182h1v1h-1zM567 184h1v1h-1zM568 173h1v1h-1zM568 176h1v1h-1zM568 179h1v1h-1zM568 180h1v1h-1zM568 184h1v1h-1zM568 189h1v1h-1zM569 172h1v1h-1zM569 174h1v1h-1zM569 177h1v1h-1zM569 180h1v1h-1zM569 182h1v1h-1zM570 173h1v1h-1zM570 179h1v1h-1zM570 185h1v1h-1zM570 186h1v1h-1zM571 172h1v1h-1zM571 176h1v1h-1zM571 181h1v1h-1zM571 186h1v1h-1zM572 172h1v1h-1zM572 179h1v1h-1zM573 173h1v1h-1zM573 176h1v1h-1zM573 185h1v1h-1zM574 174h1v1h-1zM574 175h1v1h-1zM574 177h1v1h-1zM574 179h1v1h-1zM574 183h1v1h-1zM574 188h1v1h-1zM575 173h1v1h-1zM575 176h1v1h-1zM575 179h1v1h-1zM575 188h1v1h-1zM576 178h1v1h-1zM576 181h1v1h-1zM576 182h1v1h-1zM576 185h1v1h-1zM576 186h1v1h-1zM577 173h1v1h-1zM577 175h1v1h-1zM577 180h1v1h-1zM577 181h1v1h-1zM578 165h1v1h-1zM578 171h1v1h-1zM578 174h1v1h-1zM578 177h1v1h-1zM578 180h1v1h-1zM579 171h1v1h-1zM579 175h1v1h-1zM579 177h1v1h-1zM579 178h1v1h-1zM579 180h1v1h-1zM579 183h1v1h-1zM580 172h1v1h-1zM580 173h1v1h-1zM580 174h1v1h-1zM580 176h1v1h-1zM580 179h1v1h-1zM580 183h1v1h-1zM581 173h1v1h-1zM581 175h1v1h-1zM581 176h1v1h-1zM582 168h1v1h-1zM582 169h1v1h-1zM582 172h1v1h-1zM582 175h1v1h-1zM582 176h1v1h-1zM583 167h1v1h-1zM583 173h1v1h-1zM583 177h1v1h-1zM584 173h1v1h-1zM584 175h1v1h-1zM584 177h1v1h-1zM585 166h1v1h-1zM585 173h1v1h-1zM585 178h1v1h-1zM586 164h1v1h-1zM586 165h1v1h-1zM586 170h1v1h-1zM587 167h1v1h-1zM587 171h1v1h-1zM587 172h1v1h-1zM587 176h1v1h-1zM588 165h1v1h-1zM588 172h1v1h-1zM589 167h1v1h-1zM589 172h1v1h-1zM589 176h1v1h-1zM589 177h1v1h-1zM590 159h1v1h-1zM590 162h1v1h-1zM590 166h1v1h-1zM590 168h1v1h-1zM590 169h1v1h-1zM590 171h1v1h-1zM591 157h1v1h-1zM591 160h1v1h-1zM591 164h1v1h-1zM591 165h1v1h-1zM591 175h1v1h-1zM592 156h1v1h-1zM592 161h1v1h-1zM592 163h1v1h-1zM592 164h1v1h-1zM592 166h1v1h-1zM592 168h1v1h-1zM592 172h1v1h-1zM593 156h1v1h-1zM593 164h1v1h-1zM593 167h1v1h-1zM593 169h1v1h-1zM594 160h1v1h-1zM594 163h1v1h-1zM594 166h1v1h-1zM594 167h1v1h-1zM594 168h1v1h-1zM594 170h1v1h-1zM595 156h1v1h-1zM595 159h1v1h-1zM596 154h1v1h-1zM596 155h1v1h-1zM596 160h1v1h-1zM596 161h1v1h-1zM596 164h1v1h-1zM596 171h1v1h-1zM597 154h1v1h-1zM597 156h1v1h-1zM597 157h1v1h-1zM597 160h1v1h-1zM597 163h1v1h-1zM597 164h1v1h-1zM597 167h1v1h-1zM598 156h1v1h-1zM598 157h1v1h-1zM598 165h1v1h-1zM598 166h1v1h-1zM599 150h1v1h-1zM599 152h1v1h-1zM599 153h1v1h-1zM599 154h1v1h-1zM599 155h1v1h-1zM599 159h1v1h-1zM599 162h1v1h-1zM599 166h1v1h-1zM600 148h1v1h-1zM600 151h1v1h-1zM600 152h1v1h-1zM600 154h1v1h-1zM600 155h1v1h-1zM600 157h1v1h-1zM600 158h1v1h-1zM600 159h1v1h-1zM600 163h1v1h-1zM601 150h1v1h-1zM601 152h1v1h-1zM601 157h1v1h-1zM601 158h1v1h-1zM601 162h1v1h-1zM601 164h1v1h-1zM602 150h1v1h-1zM602 154h1v1h-1zM602 156h1v1h-1zM602 158h1v1h-1zM602 164h1v1h-1zM603 145h1v1h-1zM603 147h1v1h-1zM603 152h1v1h-1zM603 153h1v1h-1zM603 155h1v1h-1zM603 160h1v1h-1zM604 142h1v1h-1zM604 145h1v1h-1zM604 146h1v1h-1zM604 148h1v1h-1zM604 160h1v1h-1zM605 144h1v1h-1zM605 146h1v1h-1zM605 149h1v1h-1zM605 154h1v1h-1zM605 159h1v1h-1zM605 160h1v1h-1zM606 148h1v1h-1zM606 150h1v1h-1zM607 143h1v1h-1zM607 144h1v1h-1zM607 146h1v1h-1zM607 147h1v1h-1zM607 151h1v1h-1zM607 155h1v1h-1zM608 143h1v1h-1zM608 151h1v1h-1zM608 154h1v1h-1zM609 138h1v1h-1zM609 139h1v1h-1zM609 142h1v1h-1zM609 152h1v1h-1zM609 153h1v1h-1zM610 140h1v1h-1zM610 142h1v1h-1zM610 146h1v1h-1zM610 154h1v1h-1zM611 137h1v1h-1zM611 139h1v1h-1zM611 143h1v1h-1zM611 146h1v1h-1zM611 149h1v1h-1zM611 150h1v1h-1zM612 136h1v1h-1zM612 138h1v1h-1zM613 134h1v1h-1zM613 137h1v1h-1zM613 151h1v1h-1zM614 135h1v1h-1zM614 137h1v1h-1zM614 142h1v1h-1zM614 148h1v1h-1zM614 149h1v1h-1zM615 137h1v1h-1zM615 140h1v1h-1zM615 141h1v1h-1zM615 146h1v1h-1zM616 132h1v1h-1zM616 134h1v1h-1zM616 141h1v1h-1zM616 142h1v1h-1zM617 131h1v1h-1zM617 139h1v1h-1zM617 141h1v1h-1zM617 143h1v1h-1zM617 148h1v1h-1zM618 131h1v1h-1zM618 134h1v1h-1zM618 141h1v1h-1zM618 142h1v1h-1zM618 146h1v1h-1zM619 130h1v1h-1zM619 137h1v1h-1zM619 140h1v1h-1zM620 130h1v1h-1zM620 131h1v1h-1zM620 132h1v1h-1zM620 134h1v1h-1zM620 139h1v1h-1zM620 140h1v1h-1zM620 143h1v1h-1zM621 129h1v1h-1zM621 133h1v1h-1zM621 136h1v1h-1zM621 137h1v1h-1zM621 141h1v1h-1zM621 145h1v1h-1zM622 134h1v1h-1zM622 139h1v1h-1zM622 143h1v1h-1zM623 133h1v1h-1zM623 138h1v1h-1zM623 139h1v1h-1zM623 143h1v1h-1zM624 131h1v1h-1zM624 132h1v1h-1zM624 135h1v1h-1zM624 138h1v1h-1zM624 139h1v1h-1zM624 141h1v1h-1zM625 127h1v1h-1zM625 135h1v1h-1zM625 137h1v1h-1zM625 139h1v1h-1zM625 144h1v1h-1zM626 125h1v1h-1zM626 129h1v1h-1zM626 131h1v1h-1zM626 132h1v1h-1zM626 136h1v1h-1zM626 138h1v1h-1zM626 139h1v1h-1zM627 124h1v1h-1zM627 138h1v1h-1zM628 124h1v1h-1zM628 127h1v1h-1zM628 129h1v1h-1zM628 130h1v1h-1zM628 131h1v1h-1zM628 132h1v1h-1zM628 133h1v1h-1zM628 134h1v1h-1zM628 136h1v1h-1zM628 138h1v1h-1zM629 129h1v1h-1zM629 132h1v1h-1zM630 128h1v1h-1zM630 131h1v1h-1zM630 132h1v1h-1zM630 135h1v1h-1zM630 139h1v1h-1zM631 126h1v1h-1zM631 133h1v1h-1zM631 136h1v1h-1zM632 124h1v1h-1zM632 127h1v1h-1zM632 128h1v1h-1zM632 130h1v1h-1zM632 133h1v1h-1zM632 135h1v1h-1zM633 123h1v1h-1zM633 126h1v1h-1zM633 127h1v1h-1zM633 131h1v1h-1zM633 136h1v1h-1zM633 138h1v1h-1zM634 118h1v1h-1zM634 125h1v1h-1zM634 131h1v1h-1zM634 134h1v1h-1zM634 142h1v1h-1zM635 128h1v1h-1zM635 130h1v1h-1zM635 131h1v1h-1zM635 132h1v1h-1zM635 134h1v1h-1zM635 136h1v1h-1zM636 123h1v1h-1zM636 125h1v1h-1zM636 127h1v1h-1zM636 129h1v1h-1zM636 136h1v1h-1zM636 137h1v1h-1zM637 120h1v1h-1zM637 123h1v1h-1zM637 126h1v1h-1zM637 128h1v1h-1zM637 129h1v1h-1zM638 129h1v1h-1zM638 133h1v1h-1zM639 125h1v1h-1zM639 133h1v1h-1zM639 137h1v1h-1zM640 122h1v1h-1zM640 125h1v1h-1zM640 129h1v1h-1zM640 131h1v1h-1zM640 133h1v1h-1zM641 121h1v1h-1zM641 123h1v1h-1zM641 127h1v1h-1zM641 128h1v1h-1zM641 133h1v1h-1zM642 125h1v1h-1zM642 126h1v1h-1zM642 127h1v1h-1zM642 128h1v1h-1zM642 129h1v1h-1zM642 131h1v1h-1zM642 134h1v1h-1zM642 135h1v1h-1zM642 136h1v1h-1zM643 123h1v1h-1zM643 125h1v1h-1zM643 131h1v1h-1zM643 134h1v1h-1zM644 123h1v1h-1zM644 125h1v1h-1zM644 130h1v1h-1zM644 131h1v1h-1zM645 124h1v1h-1zM645 132h1v1h-1zM645 134h1v1h-1zM646 130h1v1h-1zM646 133h1v1h-1zM647 129h1v1h-1zM647 130h1v1h-1zM647 132h1v1h-1zM647 134h1v1h-1zM648 122h1v1h-1zM648 128h1v1h-1zM648 130h1v1h-1zM648 133h1v1h-1zM649 122h1v1h-1zM649 123h1v1h-1zM649 127h1v1h-1zM649 129h1v1h-1zM649 135h1v1h-1zM650 121h1v1h-1zM650 122h1v1h-1zM650 123h1v1h-1zM650 126h1v1h-1zM651 121h1v1h-1zM651 134h1v1h-1zM652 122h1v1h-1zM652 123h1v1h-1zM652 130h1v1h-1zM652 131h1v1h-1zM652 134h1v1h-1zM652 135h1v1h-1zM653 122h1v1h-1zM653 123h1v1h-1zM653 126h1v1h-1zM654 123h1v1h-1zM654 125h1v1h-1zM654 126h1v1h-1zM654 127h1v1h-1zM654 128h1v1h-1zM654 135h1v1h-1zM655 124h1v1h-1zM655 127h1v1h-1zM655 132h1v1h-1zM656 124h1v1h-1zM656 128h1v1h-1zM656 129h1v1h-1zM656 130h1v1h-1zM656 134h1v1h-1zM656 135h1v1h-1zM657 128h1v1h-1zM658 128h1v1h-1zM658 129h1v1h-1zM658 132h1v1h-1zM658 133h1v1h-1zM658 135h1v1h-1zM659 122h1v1h-1zM659 124h1v1h-1zM659 128h1v1h-1zM659 136h1v1h-1zM659 137h1v1h-1zM660 123h1v1h-1zM660 125h1v1h-1zM660 127h1v1h-1zM660 128h1v1h-1zM660 130h1v1h-1zM660 135h1v1h-1zM660 136h1v1h-1zM660 137h1v1h-1zM660 141h1v1h-1zM661 128h1v1h-1zM661 132h1v1h-1zM661 133h1v1h-1zM661 138h1v1h-1zM662 125h1v1h-1zM662 126h1v1h-1zM662 129h1v1h-1zM662 130h1v1h-1zM662 132h1v1h-1zM662 133h1v1h-1zM662 138h1v1h-1zM663 124h1v1h-1zM663 126h1v1h-1zM663 128h1v1h-1zM663 129h1v1h-1zM663 130h1v1h-1zM663 132h1v1h-1zM663 136h1v1h-1zM663 138h1v1h-1zM664 126h1v1h-1zM664 130h1v1h-1zM664 133h1v1h-1zM665 130h1v1h-1zM665 134h1v1h-1zM665 139h1v1h-1zM667 131h1v1h-1zM667 132h1v1h-1zM667 134h1v1h-1zM667 136h1v1h-1zM667 138h1v1h-1zM668 128h1v1h-1zM668 130h1v1h-1zM668 131h1v1h-1zM668 133h1v1h-1zM668 143h1v1h-1zM669 126h1v1h-1zM669 131h1v1h-1zM669 133h1v1h-1zM669 136h1v1h-1zM669 141h1v1h-1zM669 142h1v1h-1zM669 143h1v1h-1zM670 131h1v1h-1zM670 132h1v1h-1zM670 133h1v1h-1zM670 135h1v1h-1zM670 137h1v1h-1zM670 138h1v1h-1zM670 142h1v1h-1zM671 128h1v1h-1zM671 134h1v1h-1zM671 144h1v1h-1zM671 146h1v1h-1zM671 153h1v1h-1zM672 129h1v1h-1zM672 131h1v1h-1zM672 132h1v1h-1zM672 136h1v1h-1zM672 139h1v1h-1zM672 143h1v1h-1zM672 144h1v1h-1zM672 150h1v1h-1zM673 131h1v1h-1zM673 133h1v1h-1zM673 135h1v1h-1zM673 137h1v1h-1zM673 139h1v1h-1zM673 140h1v1h-1zM673 143h1v1h-1zM673 149h1v1h-1zM674 141h1v1h-1zM674 143h1v1h-1zM674 145h1v1h-1zM674 147h1v1h-1zM674 148h1v1h-1zM675 132h1v1h-1zM675 133h1v1h-1zM675 137h1v1h-1zM675 138h1v1h-1zM675 139h1v1h-1zM675 140h1v1h-1zM675 141h1v1h-1zM675 142h1v1h-1zM675 145h1v1h-1zM675 146h1v1h-1zM676 139h1v1h-1zM676 141h1v1h-1zM676 150h1v1h-1zM676 151h1v1h-1zM677 141h1v1h-1zM677 144h1v1h-1zM677 145h1v1h-1zM677 146h1v1h-1zM677 154h1v1h-1zM677 155h1v1h-1zM677 164h1v1h-1zM678 136h1v1h-1zM678 141h1v1h-1zM678 143h1v1h-1zM678 146h1v1h-1zM678 147h1v1h-1zM678 148h1v1h-1zM678 149h1v1h-1zM678 150h1v1h-1zM678 154h1v1h-1zM678 157h1v1h-1zM678 159h1v1h-1zM678 163h1v1h-1zM679 144h1v1h-1zM679 150h1v1h-1zM679 152h1v1h-1zM679 154h1v1h-1zM679 156h1v1h-1zM679 159h1v1h-1zM679 164h1v1h-1zM679 171h1v1h-1zM680 142h1v1h-1zM680 144h1v1h-1zM680 147h1v1h-1zM680 148h1v1h-1zM680 149h1v1h-1zM680 150h1v1h-1zM680 153h1v1h-1zM680 158h1v1h-1zM680 159h1v1h-1zM680 160h1v1h-1zM680 162h1v1h-1zM680 169h1v1h-1zM680 170h1v1h-1zM680 171h1v1h-1zM680 173h1v1h-1zM680 177h1v1h-1zM681 147h1v1h-1zM681 152h1v1h-1zM681 154h1v1h-1zM681 160h1v1h-1zM681 162h1v1h-1zM681 172h1v1h-1zM681 174h1v1h-1zM681 177h1v1h-1zM681 178h1v1h-1zM682 147h1v1h-1zM682 150h1v1h-1zM682 151h1v1h-1zM682 158h1v1h-1zM682 167h1v1h-1zM682 177h1v1h-1zM682 180h1v1h-1zM683 152h1v1h-1zM683 153h1v1h-1zM683 156h1v1h-1zM683 161h1v1h-1zM683 163h1v1h-1zM683 165h1v1h-1zM683 167h1v1h-1zM683 168h1v1h-1zM683 169h1v1h-1zM683 170h1v1h-1zM683 173h1v1h-1zM683 174h1v1h-1zM683 176h1v1h-1zM683 178h1v1h-1zM683 182h1v1h-1zM683 183h1v1h-1zM683 191h1v1h-1zM683 193h1v1h-1zM684 162h1v1h-1zM684 165h1v1h-1zM684 169h1v1h-1zM684 183h1v1h-1zM684 186h1v1h-1zM684 191h1v1h-1zM684 193h1v1h-1zM684 200h1v1h-1zM685 169h1v1h-1zM685 171h1v1h-1zM685 175h1v1h-1zM685 177h1v1h-1zM685 188h1v1h-1zM685 203h1v1h-1zM686 165h1v1h-1zM686 166h1v1h-1zM686 176h1v1h-1zM686 178h1v1h-1zM686 180h1v1h-1zM686 185h1v1h-1zM686 200h1v1h-1zM686 204h1v1h-1zM687 174h1v1h-1zM687 181h1v1h-1zM687 182h1v1h-1zM687 183h1v1h-1zM687 184h1v1h-1zM687 187h1v1h-1zM687 188h1v1h-1zM687 190h1v1h-1zM687 191h1v1h-1zM687 199h1v1h-1zM687 208h1v1h-1zM687 210h1v1h-1zM687 212h1v1h-1zM687 214h1v1h-1zM688 185h1v1h-1zM688 186h1v1h-1zM688 193h1v1h-1zM688 195h1v1h-1zM688 199h1v1h-1zM688 204h1v1h-1zM688 208h1v1h-1zM688 210h1v1h-1zM689 188h1v1h-1zM689 191h1v1h-1zM689 193h1v1h-1zM689 196h1v1h-1zM689 197h1v1h-1zM689 199h1v1h-1zM689 202h1v1h-1zM689 203h1v1h-1zM689 205h1v1h-1zM689 206h1v1h-1zM689 209h1v1h-1zM689 215h1v1h-1zM689 217h1v1h-1zM689 220h1v1h-1zM690 200h1v1h-1zM690 204h1v1h-1zM690 215h1v1h-1zM690 218h1v1h-1zM690 219h1v1h-1zM690 221h1v1h-1zM690 222h1v1h-1zM691 201h1v1h-1zM691 208h1v1h-1zM691 209h1v1h-1zM691 220h1v1h-1zM691 227h1v1h-1zM691 229h1v1h-1zM691 230h1v1h-1zM691 235h1v1h-1zM692 205h1v1h-1zM692 206h1v1h-1zM692 207h1v1h-1zM692 208h1v1h-1zM692 216h1v1h-1zM692 222h1v1h-1zM692 223h1v1h-1zM692 224h1v1h-1zM692 225h1v1h-1zM692 231h1v1h-1zM692 249h1v1h-1zM693 207h1v1h-1zM693 215h1v1h-1zM693 219h1v1h-1zM693 222h1v1h-1zM693 227h1v1h-1zM693 233h1v1h-1zM693 234h1v1h-1zM693 237h1v1h-1zM693 239h1v1h-1zM694 213h1v1h-1zM694 215h1v1h-1zM694 219h1v1h-1zM694 221h1v1h-1zM694 222h1v1h-1zM694 224h1v1h-1zM694 226h1v1h-1zM694 228h1v1h-1zM694 231h1v1h-1zM694 238h1v1h-1zM694 240h1v1h-1zM694 244h1v1h-1zM694 248h1v1h-1zM694 253h1v1h-1zM694 254h1v1h-1zM695 215h1v1h-1zM695 219h1v1h-1zM695 221h1v1h-1zM695 226h1v1h-1zM695 227h1v1h-1zM695 231h1v1h-1zM695 233h1v1h-1zM695 234h1v1h-1zM695 242h1v1h-1zM695 243h1v1h-1zM695 248h1v1h-1zM695 249h1v1h-1zM696 226h1v1h-1zM696 230h1v1h-1zM696 239h1v1h-1zM696 240h1v1h-1zM696 246h1v1h-1zM696 250h1v1h-1zM696 254h1v1h-1zM696 255h1v1h-1zM696 262h1v1h-1zM697 234h1v1h-1zM697 239h1v1h-1zM697 241h1v1h-1zM697 247h1v1h-1zM697 249h1v1h-1zM697 250h1v1h-1zM697 252h1v1h-1zM697 254h1v1h-1zM697 255h1v1h-1zM697 266h1v1h-1zM697 269h1v1h-1zM697 272h1v1h-1zM698 238h1v1h-1zM698 239h1v1h-1zM698 241h1v1h-1zM698 244h1v1h-1zM698 249h1v1h-1zM698 258h1v1h-1zM698 261h1v1h-1zM698 265h1v1h-1zM698 275h1v1h-1zM698 276h1v1h-1zM698 278h1v1h-1zM699 234h1v1h-1zM699 242h1v1h-1zM699 245h1v1h-1zM699 246h1v1h-1zM699 250h1v1h-1zM699 253h1v1h-1zM699 258h1v1h-1zM699 266h1v1h-1zM699 276h1v1h-1zM699 278h1v1h-1zM699 279h1v1h-1zM699 281h1v1h-1zM699 284h1v1h-1zM699 286h1v1h-1zM699 290h1v1h-1zM699 292h1v1h-1zM699 299h1v1h-1zM699 302h1v1h-1zM699 304h1v1h-1zM700 256h1v1h-1zM700 257h1v1h-1zM700 259h1v1h-1zM700 262h1v1h-1zM700 263h1v1h-1zM700 264h1v1h-1zM700 267h1v1h-1zM700 270h1v1h-1zM700 272h1v1h-1zM700 279h1v1h-1zM700 286h1v1h-1zM700 290h1v1h-1zM700 293h1v1h-1zM700 297h1v1h-1zM700 307h1v1h-1zM700 309h1v1h-1zM700 310h1v1h-1zM701 257h1v1h-1zM701 258h1v1h-1zM701 259h1v1h-1zM701 261h1v1h-1zM701 263h1v1h-1zM701 268h1v1h-1zM701 270h1v1h-1zM701 281h1v1h-1zM701 284h1v1h-1zM701 290h1v1h-1zM701 292h1v1h-1zM701 294h1v1h-1zM701 301h1v1h-1zM701 302h1v1h-1zM701 304h1v1h-1zM701 305h1v1h-1zM701 310h1v1h-1zM701 315h1v1h-1zM701 319h1v1h-1zM702 265h1v1h-1zM702 268h1v1h-1zM702 277h1v1h-1zM702 283h1v1h-1zM702 288h1v1h-1zM702 292h1v1h-1zM702 296h1v1h-1zM702 302h1v1h-1zM702 310h1v1h-1zM702 312h1v1h-1zM702 314h1v1h-1zM702 329h1v1h-1zM703 278h1v1h-1zM703 280h1v1h-1zM703 284h1v1h-1zM703 285h1v1h-1zM703 288h1v1h-1zM703 290h1v1h-1zM703 293h1v1h-1zM703 294h1v1h-1zM703 295h1v1h-1zM703 296h1v1h-1zM703 299h1v1h-1zM703 316h1v1h-1zM703 317h1v1h-1zM703 320h1v1h-1zM703 325h1v1h-1zM703 328h1v1h-1zM704 283h1v1h-1zM704 290h1v1h-1zM704 295h1v1h-1zM704 298h1v1h-1zM704 300h1v1h-1zM704 306h1v1h-1zM704 308h1v1h-1zM704 311h1v1h-1zM704 312h1v1h-1zM704 317h1v1h-1zM704 319h1v1h-1zM704 320h1v1h-1zM704 323h1v1h-1zM704 324h1v1h-1zM704 325h1v1h-1zM704 329h1v1h-1zM704 330h1v1h-1zM704 331h1v1h-1zM704 337h1v1h-1zM704 343h1v1h-1zM705 287h1v1h-1zM705 296h1v1h-1zM705 301h1v1h-1zM705 310h1v1h-1zM705 312h1v1h-1zM705 316h1v1h-1zM705 322h1v1h-1zM705 325h1v1h-1zM705 326h1v1h-1zM705 327h1v1h-1zM705 330h1v1h-1zM705 334h1v1h-1zM705 336h1v1h-1zM705 341h1v1h-1zM706 305h1v1h-1zM706 306h1v1h-1zM706 319h1v1h-1zM706 324h1v1h-1zM706 325h1v1h-1zM706 335h1v1h-1zM706 342h1v1h-1zM706 347h1v1h-1zM707 318h1v1h-1zM707 319h1v1h-1zM707 321h1v1h-1zM707 322h1v1h-1zM707 324h1v1h-1zM707 326h1v1h-1zM707 327h1v1h-1zM707 333h1v1h-1zM707 338h1v1h-1zM707 342h1v1h-1zM707 344h1v1h-1zM707 345h1v1h-1zM707 356h1v1h-1zM707 357h1v1h-1zM708 326h1v1h-1zM708 327h1v1h-1zM708 344h1v1h-1zM708 354h1v1h-1zM708 356h1v1h-1zM708 363h1v1h-1zM708 371h1v1h-1zM709 337h1v1h-1zM709 344h1v1h-1zM709 367h1v1h-1zM709 368h1v1h-1zM709 372h1v1h-1zM709 378h1v1h-1zM710 333h1v1h-1zM710 336h1v1h-1zM710 342h1v1h-1zM710 344h1v1h-1zM710 348h1v1h-1zM710 350h1v1h-1zM710 357h1v1h-1zM710 369h1v1h-1zM710 370h1v1h-1zM710 379h1v1h-1zM710 386h1v1h-1zM711 342h1v1h-1zM711 347h1v1h-1zM711 353h1v1h-1zM711 358h1v1h-1zM711 362h1v1h-1zM711 368h1v1h-1zM711 372h1v1h-1zM711 379h1v1h-1zM711 381h1v1h-1zM711 393h1v1h-1zM711 401h1v1h-1zM712 349h1v1h-1zM712 353h1v1h-1zM712 354h1v1h-1zM712 359h1v1h-1zM712 361h1v1h-1zM712 363h1v1h-1zM712 366h1v1h-1zM712 370h1v1h-1zM712 371h1v1h-1zM712 376h1v1h-1zM712 378h1v1h-1zM712 382h1v1h-1zM712 391h1v1h-1zM712 392h1v1h-1zM712 395h1v1h-1zM712 402h1v1h-1zM713 352h1v1h-1zM713 354h1v1h-1zM713 366h1v1h-1zM713 377h1v1h-1zM713 387h1v1h-1zM713 388h1v1h-1zM713 390h1v1h-1zM713 394h1v1h-1zM714 366h1v1h-1zM714 375h1v1h-1zM714 378h1v1h-1zM714 383h1v1h-1zM714 386h1v1h-1zM714 387h1v1h-1zM714 393h1v1h-1zM714 395h1v1h-1zM714 398h1v1h-1zM714 402h1v1h-1zM714 403h1v1h-1zM714 406h1v1h-1zM714 410h1v1h-1zM714 413h1v1h-1zM715 366h1v1h-1zM715 373h1v1h-1zM715 376h1v1h-1zM715 385h1v1h-1zM715 386h1v1h-1zM715 387h1v1h-1zM715 390h1v1h-1zM715 394h1v1h-1zM715 398h1v1h-1zM715 401h1v1h-1zM715 403h1v1h-1zM715 404h1v1h-1zM715 407h1v1h-1zM715 410h1v1h-1zM715 413h1v1h-1zM715 421h1v1h-1zM716 383h1v1h-1zM716 387h1v1h-1zM716 393h1v1h-1zM716 395h1v1h-1zM716 400h1v1h-1zM716 402h1v1h-1zM716 409h1v1h-1zM716 412h1v1h-1zM716 419h1v1h-1zM716 421h1v1h-1zM716 423h1v1h-1zM716 425h1v1h-1zM717 385h1v1h-1zM717 393h1v1h-1zM717 394h1v1h-1zM717 401h1v1h-1zM717 404h1v1h-1zM717 405h1v1h-1zM717 415h1v1h-1zM717 423h1v1h-1zM717 425h1v1h-1zM718 391h1v1h-1zM718 393h1v1h-1zM718 403h1v1h-1zM718 405h1v1h-1zM718 408h1v1h-1zM718 422h1v1h-1zM718 424h1v1h-1zM718 425h1v1h-1zM718 426h1v1h-1zM718 427h1v1h-1zM718 434h1v1h-1zM718 437h1v1h-1zM719 391h1v1h-1zM719 393h1v1h-1zM719 401h1v1h-1zM719 414h1v1h-1zM719 415h1v1h-1zM719 418h1v1h-1zM719 420h1v1h-1zM719 431h1v1h-1zM719 435h1v1h-1zM719 439h1v1h-1zM719 441h1v1h-1zM719 442h1v1h-1zM719 443h1v1h-1zM719 448h1v1h-1zM720 403h1v1h-1zM720 405h1v1h-1zM720 407h1v1h-1zM720 410h1v1h-1zM720 412h1v1h-1zM720 426h1v1h-1zM720 434h1v1h-1zM720 437h1v1h-1zM720 440h1v1h-1zM720 443h1v1h-1zM720 445h1v1h-1zM720 446h1v1h-1zM720 454h1v1h-1zM721 409h1v1h-1zM721 410h1v1h-1zM721 412h1v1h-1zM721 417h1v1h-1zM721 422h1v1h-1zM721 423h1v1h-1zM721 425h1v1h-1zM721 426h1v1h-1zM721 436h1v1h-1zM721 440h1v1h-1zM721 441h1v1h-1zM721 442h1v1h-1zM721 448h1v1h-1zM721 455h1v1h-1zM722 420h1v1h-1zM722 425h1v1h-1zM722 428h1v1h-1zM722 433h1v1h-1zM722 434h1v1h-1zM722 444h1v1h-1zM722 450h1v1h-1zM722 452h1v1h-1zM722 453h1v1h-1zM722 456h1v1h-1zM722 459h1v1h-1zM722 463h1v1h-1zM723 430h1v1h-1zM723 433h1v1h-1zM723 439h1v1h-1zM723 440h1v1h-1zM723 442h1v1h-1zM723 444h1v1h-1zM723 450h1v1h-1zM723 453h1v1h-1zM723 467h1v1h-1zM724 420h1v1h-1zM724 440h1v1h-1zM724 441h1v1h-1zM724 447h1v1h-1zM724 449h1v1h-1zM724 455h1v1h-1zM724 456h1v1h-1zM724 458h1v1h-1zM724 467h1v1h-1zM724 472h1v1h-1zM725 438h1v1h-1zM725 439h1v1h-1zM725 447h1v1h-1zM725 450h1v1h-1zM725 456h1v1h-1zM725 459h1v1h-1zM725 462h1v1h-1zM725 463h1v1h-1zM725 464h1v1h-1zM725 466h1v1h-1zM725 467h1v1h-1zM725 473h1v1h-1zM725 478h1v1h-1zM726 444h1v1h-1zM726 457h1v1h-1zM726 464h1v1h-1zM726 466h1v1h-1zM726 468h1v1h-1zM726 472h1v1h-1zM727 454h1v1h-1zM727 463h1v1h-1zM727 465h1v1h-1zM727 466h1v1h-1zM727 470h1v1h-1zM727 471h1v1h-1zM727 475h1v1h-1zM727 477h1v1h-1zM727 478h1v1h-1zM727 480h1v1h-1zM727 485h1v1h-1zM728 461h1v1h-1zM728 465h1v1h-1zM728 468h1v1h-1zM728 469h1v1h-1zM728 473h1v1h-1zM728 474h1v1h-1zM728 485h1v1h-1zM728 486h1v1h-1zM729 469h1v1h-1zM729 471h1v1h-1zM729 473h1v1h-1zM729 475h1v1h-1zM729 485h1v1h-1zM729 488h1v1h-1zM730 472h1v1h-1zM730 477h1v1h-1zM730 478h1v1h-1zM730 486h1v1h-1zM730 487h1v1h-1zM730 488h1v1h-1zM730 493h1v1h-1zM731 477h1v1h-1zM731 480h1v1h-1zM731 482h1v1h-1zM731 483h1v1h-1zM731 484h1v1h-1zM731 485h1v1h-1zM731 489h1v1h-1zM731 492h1v1h-1zM731 498h1v1h-1zM732 479h1v1h-1zM732 480h1v1h-1zM732 491h1v1h-1zM732 494h1v1h-1zM732 495h1v1h-1zM732 496h1v1h-1zM733 472h1v1h-1zM733 484h1v1h-1zM733 487h1v1h-1zM733 488h1v1h-1zM733 489h1v1h-1zM733 492h1v1h-1zM733 494h1v1h-1zM733 499h1v1h-1zM734 490h1v1h-1zM734 493h1v1h-1zM734 494h1v1h-1zM734 497h1v1h-1zM735 484h1v1h-1zM735 488h1v1h-1zM735 489h1v1h-1zM735 494h1v1h-1zM735 497h1v1h-1zM735 502h1v1h-1zM736 483h1v1h-1zM736 491h1v1h-1zM736 493h1v1h-1zM736 495h1v1h-1zM736 496h1v1h-1zM736 497h1v1h-1zM736 498h1v1h-1zM736 502h1v1h-1zM737 494h1v1h-1zM737 495h1v1h-1zM737 503h1v1h-1zM738 497h1v1h-1zM738 501h1v1h-1zM738 504h1v1h-1zM738 506h1v1h-1zM739 489h1v1h-1zM739 503h1v1h-1zM740 496h1v1h-1zM740 498h1v1h-1zM740 500h1v1h-1zM740 506h1v1h-1zM741 507h1v1h-1zM742 498h1v1h-1zM742 501h1v1h-1zM742 504h1v1h-1zM742 506h1v1h-1zM742 510h1v1h-1zM742 512h1v1h-1zM742 513h1v1h-1zM743 502h1v1h-1zM743 503h1v1h-1zM743 506h1v1h-1zM743 507h1v1h-1zM743 509h1v1h-1zM743 511h1v1h-1zM743 513h1v1h-1zM744 500h1v1h-1zM744 507h1v1h-1zM744 509h1v1h-1zM744 514h1v1h-1zM745 502h1v1h-1zM745 513h1v1h-1zM745 515h1v1h-1zM746 502h1v1h-1zM746 503h1v1h-1zM746 506h1v1h-1zM746 510h1v1h-1zM746 511h1v1h-1zM746 513h1v1h-1zM747 501h1v1h-1zM747 502h1v1h-1zM747 506h1v1h-1zM747 507h1v1h-1zM747 511h1v1h-1zM747 512h1v1h-1zM747 515h1v1h-1zM747 516h1v1h-1zM748 503h1v1h-1zM748 504h1v1h-1zM748 505h1v1h-1zM748 507h1v1h-1zM748 508h1v1h-1zM748 514h1v1h-1zM748 515h1v1h-1zM749 503h1v1h-1zM749 506h1v1h-1zM749 510h1v1h-1zM749 516h1v1h-1zM749 517h1v1h-1zM750 501h1v1h-1zM750 504h1v1h-1zM750 508h1v1h-1zM750 513h1v1h-1zM750 521h1v1h-1zM751 504h1v1h-1zM751 508h1v1h-1zM751 514h1v1h-1zM752 500h1v1h-1zM752 504h1v1h-1zM752 507h1v1h-1zM752 513h1v1h-1zM752 514h1v1h-1zM753 505h1v1h-1zM753 508h1v1h-1zM753 513h1v1h-1zM754 513h1v1h-1zM754 515h1v1h-1zM755 509h1v1h-1zM755 512h1v1h-1zM756 506h1v1h-1zM756 514h1v1h-1zM756 517h1v1h-1zM757 505h1v1h-1zM757 508h1v1h-1zM757 511h1v1h-1zM757 514h1v1h-1zM757 516h1v1h-1zM758 509h1v1h-1zM759 504h1v1h-1zM759 507h1v1h-1zM759 509h1v1h-1zM759 516h1v1h-1zM759 517h1v1h-1zM760 504h1v1h-1zM760 509h1v1h-1zM760 511h1v1h-1zM760 514h1v1h-1zM761 506h1v1h-1zM761 510h1v1h-1zM761 517h1v1h-1zM762 502h1v1h-1zM762 506h1v1h-1zM762 515h1v1h-1zM763 507h1v1h-1zM764 508h1v1h-1zM764 510h1v1h-1zM764 519h1v1h-1zM765 514h1v1h-1zM765 517h1v1h-1zM766 506h1v1h-1zM766 507h1v1h-1zM766 511h1v1h-1zM766 512h1v1h-1zM767 507h1v1h-1zM767 510h1v1h-1zM767 513h1v1h-1zM767 514h1v1h-1zM767 517h1v1h-1zM768 507h1v1h-1zM768 509h1v1h-1zM768 512h1v1h-1zM768 514h1v1h-1zM768 515h1v1h-1zM768 516h1v1h-1zM768 518h1v1h-1zM769 511h1v1h-1zM769 512h1v1h-1zM769 513h1v1h-1zM769 515h1v1h-1zM769 517h1v1h-1zM769 518h1v1h-1zM770 509h1v1h-1zM770 510h1v1h-1zM770 514h1v1h-1zM770 517h1v1h-1zM770 518h1v1h-1zM770 522h1v1h-1zM771 509h1v1h-1zM771 513h1v1h-1zM771 516h1v1h-1zM771 520h1v1h-1zM772 511h1v1h-1zM772 519h1v1h-1zM772 521h1v1h-1zM772 522h1v1h-1zM773 512h1v1h-1zM774 508h1v1h-1zM774 517h1v1h-1zM774 518h1v1h-1zM774 525h1v1h-1zM775 512h1v1h-1zM775 516h1v1h-1zM775 520h1v1h-1zM775 521h1v1h-1zM776 514h1v1h-1zM776 515h1v1h-1zM776 516h1v1h-1zM776 521h1v1h-1zM776 522h1v1h-1zM776 525h1v1h-1zM776 527h1v1h-1zM777 512h1v1h-1zM777 520h1v1h-1zM777 524h1v1h-1zM777 525h1v1h-1zM777 530h1v1h-1zM778 516h1v1h-1zM778 517h1v1h-1zM778 518h1v1h-1zM778 523h1v1h-1zM778 525h1v1h-1zM778 529h1v1h-1zM779 518h1v1h-1zM779 521h1v1h-1zM779 523h1v1h-1zM779 524h1v1h-1zM780 517h1v1h-1zM780 521h1v1h-1zM780 523h1v1h-1zM780 530h1v1h-1zM780 531h1v1h-1zM780 532h1v1h-1zM781 519h1v1h-1zM781 520h1v1h-1zM781 521h1v1h-1zM781 524h1v1h-1zM781 530h1v1h-1zM781 537h1v1h-1zM782 522h1v1h-1zM782 526h1v1h-1zM782 534h1v1h-1zM783 524h1v1h-1zM783 530h1v1h-1zM784 519h1v1h-1zM784 524h1v1h-1zM784 526h1v1h-1zM784 527h1v1h-1zM784 528h1v1h-1zM784 533h1v1h-1zM784 534h1v1h-1zM784 536h1v1h-1zM784 537h1v1h-1zM784 538h1v1h-1zM785 527h1v1h-1zM785 528h1v1h-1zM785 529h1v1h-1zM785 531h1v1h-1zM786 521h1v1h-1zM786 529h1v1h-1zM786 540h1v1h-1zM787 529h1v1h-1zM787 530h1v1h-1zM787 534h1v1h-1zM787 536h1v1h-1zM787 538h1v1h-1zM788 529h1v1h-1zM788 539h1v1h-1zM788 540h1v1h-1zM789 533h1v1h-1zM789 535h1v1h-1zM789 538h1v1h-1zM789 542h1v1h-1zM790 523h1v1h-1zM790 531h1v1h-1zM790 534h1v1h-1zM790 540h1v1h-1zM791 530h1v1h-1zM791 531h1v1h-1zM791 533h1v1h-1zM792 529h1v1h-1zM792 533h1v1h-1zM792 534h1v1h-1zM792 535h1v1h-1zM792 536h1v1h-1zM792 540h1v1h-1zM792 548h1v1h-1zM793 534h1v1h-1zM793 535h1v1h-1zM794 533h1v1h-1zM794 535h1v1h-1zM794 538h1v1h-1zM794 545h1v1h-1zM795 538h1v1h-1zM795 543h1v1h-1zM795 551h1v1h-1zM796 532h1v1h-1zM796 537h1v1h-1zM796 541h1v1h-1zM796 546h1v1h-1zM796 551h1v1h-1zM796 552h1v1h-1zM797 537h1v1h-1zM797 543h1v1h-1zM797 549h1v1h-1zM797 550h1v1h-1zM797 554h1v1h-1zM798 539h1v1h-1zM798 545h1v1h-1zM798 546h1v1h-1zM799 540h1v1h-1zM799 542h1v1h-1zM799 544h1v1h-1zM799 546h1v1h-1zM799 550h1v1h-1zM800 541h1v1h-1zM800 542h1v1h-1zM800 546h1v1h-1zM800 547h1v1h-1zM800 550h1v1h-1zM801 541h1v1h-1zM801 543h1v1h-1zM801 548h1v1h-1zM801 549h1v1h-1zM801 552h1v1h-1zM801 557h1v1h-1zM802 545h1v1h-1zM802 552h1v1h-1zM802 554h1v1h-1zM802 556h1v1h-1zM803 544h1v1h-1zM803 545h1v1h-1zM803 552h1v1h-1zM803 553h1v1h-1zM803 554h1v1h-1zM803 555h1v1h-1zM803 557h1v1h-1zM803 561h1v1h-1zM804 547h1v1h-1zM804 549h1v1h-1zM804 553h1v1h-1zM804 554h1v1h-1zM805 544h1v1h-1zM805 547h1v1h-1zM805 550h1v1h-1zM805 554h1v1h-1zM805 557h1v1h-1zM805 559h1v1h-1zM806 547h1v1h-1zM806 548h1v1h-1zM806 550h1v1h-1zM806 555h1v1h-1zM807 551h1v1h-1zM807 554h1v1h-1zM807 564h1v1h-1zM808 549h1v1h-1zM808 555h1v1h-1zM808 561h1v1h-1zM808 563h1v1h-1zM809 548h1v1h-1zM809 556h1v1h-1zM809 559h1v1h-1zM809 560h1v1h-1zM809 569h1v1h-1zM810 554h1v1h-1zM810 557h1v1h-1zM810 562h1v1h-1z" fill="#a4a04e"/><path d="M216 525h1v1h-1zM216 527h1v1h-1zM216 528h1v1h-1zM216 533h1v1h-1zM216 535h1v1h-1zM217 524h1v1h-1zM217 525h1v1h-1zM217 526h1v1h-1zM217 531h1v1h-1zM218 517h1v1h-1zM218 524h1v1h-1zM218 525h1v1h-1zM218 526h1v1h-1zM218 527h1v1h-1zM218 528h1v1h-1zM218 529h1v1h-1zM218 531h1v1h-1zM218 532h1v1h-1zM218 535h1v1h-1zM219 523h1v1h-1zM219 524h1v1h-1zM219 528h1v1h-1zM219 529h1v1h-1zM219 532h1v1h-1zM219 534h1v1h-1zM219 535h1v1h-1zM220 522h1v1h-1zM220 524h1v1h-1zM220 527h1v1h-1zM220 528h1v1h-1zM220 529h1v1h-1zM220 530h1v1h-1zM220 531h1v1h-1zM220 532h1v1h-1zM220 533h1v1h-1zM221 524h1v1h-1zM221 526h1v1h-1zM221 528h1v1h-1zM221 532h1v1h-1zM221 533h1v1h-1zM221 534h1v1h-1zM221 535h1v1h-1zM222 525h1v1h-1zM222 528h1v1h-1zM222 529h1v1h-1zM222 531h1v1h-1zM222 534h1v1h-1zM222 536h1v1h-1zM223 522h1v1h-1zM223 523h1v1h-1zM223 524h1v1h-1zM223 525h1v1h-1zM223 528h1v1h-1zM223 529h1v1h-1zM223 530h1v1h-1zM223 533h1v1h-1zM223 534h1v1h-1zM223 536h1v1h-1zM224 518h1v1h-1zM224 523h1v1h-1zM224 525h1v1h-1zM224 526h1v1h-1zM224 528h1v1h-1zM224 529h1v1h-1zM224 530h1v1h-1zM224 533h1v1h-1zM224 535h1v1h-1zM224 536h1v1h-1zM225 525h1v1h-1zM225 526h1v1h-1zM225 527h1v1h-1zM225 528h1v1h-1zM225 530h1v1h-1zM225 531h1v1h-1zM225 535h1v1h-1zM225 536h1v1h-1zM226 524h1v1h-1zM226 525h1v1h-1zM226 526h1v1h-1zM226 531h1v1h-1zM226 532h1v1h-1zM227 520h1v1h-1zM227 523h1v1h-1zM227 529h1v1h-1zM227 531h1v1h-1zM227 532h1v1h-1zM227 534h1v1h-1zM227 535h1v1h-1zM227 538h1v1h-1zM228 523h1v1h-1zM228 524h1v1h-1zM228 526h1v1h-1zM228 528h1v1h-1zM228 530h1v1h-1zM228 531h1v1h-1zM228 532h1v1h-1zM228 533h1v1h-1zM228 534h1v1h-1zM229 523h1v1h-1zM229 524h1v1h-1zM229 525h1v1h-1zM229 529h1v1h-1zM229 530h1v1h-1zM229 531h1v1h-1zM230 515h1v1h-1zM230 524h1v1h-1zM230 525h1v1h-1zM230 526h1v1h-1zM230 527h1v1h-1zM230 528h1v1h-1zM230 529h1v1h-1zM230 530h1v1h-1zM230 531h1v1h-1zM230 533h1v1h-1zM231 518h1v1h-1zM231 524h1v1h-1zM231 526h1v1h-1zM231 528h1v1h-1zM231 530h1v1h-1zM231 532h1v1h-1zM231 533h1v1h-1zM231 536h1v1h-1zM232 524h1v1h-1zM232 526h1v1h-1zM232 529h1v1h-1zM232 530h1v1h-1zM232 531h1v1h-1zM232 532h1v1h-1zM232 533h1v1h-1zM233 523h1v1h-1zM233 524h1v1h-1zM233 526h1v1h-1zM233 528h1v1h-1zM233 529h1v1h-1zM233 530h1v1h-1zM233 532h1v1h-1zM233 534h1v1h-1zM233 535h1v1h-1zM233 536h1v1h-1zM234 523h1v1h-1zM234 525h1v1h-1zM234 526h1v1h-1zM234 527h1v1h-1zM234 530h1v1h-1zM234 535h1v1h-1zM235 526h1v1h-1zM235 527h1v1h-1zM235 528h1v1h-1zM235 529h1v1h-1zM235 530h1v1h-1zM235 531h1v1h-1zM235 534h1v1h-1zM235 537h1v1h-1zM236 523h1v1h-1zM236 525h1v1h-1zM236 527h1v1h-1zM236 530h1v1h-1zM236 532h1v1h-1zM236 533h1v1h-1zM236 534h1v1h-1zM236 535h1v1h-1zM236 537h1v1h-1zM237 524h1v1h-1zM237 529h1v1h-1zM237 531h1v1h-1zM237 532h1v1h-1zM237 534h1v1h-1zM238 520h1v1h-1zM238 523h1v1h-1zM238 528h1v1h-1zM238 529h1v1h-1zM238 530h1v1h-1zM238 531h1v1h-1zM238 532h1v1h-1zM238 533h1v1h-1zM238 535h1v1h-1zM238 536h1v1h-1zM238 537h1v1h-1zM238 539h1v1h-1zM239 524h1v1h-1zM239 525h1v1h-1zM239 526h1v1h-1zM239 528h1v1h-1zM239 530h1v1h-1zM239 531h1v1h-1zM239 534h1v1h-1zM239 535h1v1h-1zM239 536h1v1h-1zM240 525h1v1h-1zM240 529h1v1h-1zM240 530h1v1h-1zM240 532h1v1h-1zM240 533h1v1h-1zM240 534h1v1h-1zM240 535h1v1h-1zM240 537h1v1h-1zM241 527h1v1h-1zM241 530h1v1h-1zM241 532h1v1h-1zM241 533h1v1h-1zM241 536h1v1h-1zM241 537h1v1h-1zM242 523h1v1h-1zM242 524h1v1h-1zM242 528h1v1h-1zM242 529h1v1h-1zM242 531h1v1h-1zM242 533h1v1h-1zM242 535h1v1h-1zM243 526h1v1h-1zM243 527h1v1h-1zM243 530h1v1h-1zM243 533h1v1h-1zM243 535h1v1h-1zM243 536h1v1h-1zM243 537h1v1h-1zM243 539h1v1h-1zM243 540h1v1h-1zM244 525h1v1h-1zM244 526h1v1h-1zM244 527h1v1h-1zM244 529h1v1h-1zM244 530h1v1h-1zM244 531h1v1h-1zM244 532h1v1h-1zM244 533h1v1h-1zM244 535h1v1h-1zM244 537h1v1h-1zM245 522h1v1h-1zM245 525h1v1h-1zM245 527h1v1h-1zM245 529h1v1h-1zM245 530h1v1h-1zM245 533h1v1h-1zM245 536h1v1h-1zM245 538h1v1h-1zM246 524h1v1h-1zM246 525h1v1h-1zM246 526h1v1h-1zM246 527h1v1h-1zM246 529h1v1h-1zM246 530h1v1h-1zM246 531h1v1h-1zM246 533h1v1h-1zM246 535h1v1h-1zM246 537h1v1h-1zM246 539h1v1h-1zM247 525h1v1h-1zM247 531h1v1h-1zM247 533h1v1h-1zM247 536h1v1h-1zM247 537h1v1h-1zM247 545h1v1h-1zM248 525h1v1h-1zM248 526h1v1h-1zM248 527h1v1h-1zM248 529h1v1h-1zM248 533h1v1h-1zM248 536h1v1h-1zM248 538h1v1h-1zM248 542h1v1h-1zM249 526h1v1h-1zM249 527h1v1h-1zM249 530h1v1h-1zM249 531h1v1h-1zM249 533h1v1h-1zM249 534h1v1h-1zM249 536h1v1h-1zM249 539h1v1h-1zM250 525h1v1h-1zM250 526h1v1h-1zM250 535h1v1h-1zM250 536h1v1h-1zM250 537h1v1h-1zM250 538h1v1h-1zM250 539h1v1h-1zM251 521h1v1h-1zM251 526h1v1h-1zM251 528h1v1h-1zM251 531h1v1h-1zM251 533h1v1h-1zM251 535h1v1h-1zM251 537h1v1h-1zM251 538h1v1h-1zM251 539h1v1h-1zM252 526h1v1h-1zM252 529h1v1h-1zM252 531h1v1h-1zM252 532h1v1h-1zM252 533h1v1h-1zM252 534h1v1h-1zM252 538h1v1h-1zM252 539h1v1h-1zM253 526h1v1h-1zM253 528h1v1h-1zM253 529h1v1h-1zM253 531h1v1h-1zM253 535h1v1h-1zM253 537h1v1h-1zM253 538h1v1h-1zM253 542h1v1h-1zM254 525h1v1h-1zM254 526h1v1h-1zM254 532h1v1h-1zM254 535h1v1h-1zM254 536h1v1h-1zM254 539h1v1h-1zM255 527h1v1h-1zM255 528h1v1h-1zM255 531h1v1h-1zM255 532h1v1h-1zM255 533h1v1h-1zM255 534h1v1h-1zM255 535h1v1h-1zM255 536h1v1h-1zM255 537h1v1h-1zM255 538h1v1h-1zM255 539h1v1h-1zM255 543h1v1h-1zM256 527h1v1h-1zM256 528h1v1h-1zM256 529h1v1h-1zM256 530h1v1h-1zM256 531h1v1h-1zM256 533h1v1h-1zM256 535h1v1h-1zM256 538h1v1h-1zM256 541h1v1h-1zM257 528h1v1h-1zM257 530h1v1h-1zM257 531h1v1h-1zM257 532h1v1h-1zM257 533h1v1h-1zM257 535h1v1h-1zM257 536h1v1h-1zM257 540h1v1h-1zM257 545h1v1h-1zM258 522h1v1h-1zM258 529h1v1h-1zM258 532h1v1h-1zM258 533h1v1h-1zM258 535h1v1h-1zM258 536h1v1h-1zM258 538h1v1h-1zM259 526h1v1h-1zM259 528h1v1h-1zM259 529h1v1h-1zM259 530h1v1h-1zM259 532h1v1h-1zM259 534h1v1h-1zM259 535h1v1h-1zM259 537h1v1h-1zM259 538h1v1h-1zM259 539h1v1h-1zM259 540h1v1h-1zM259 543h1v1h-1zM260 527h1v1h-1zM260 530h1v1h-1zM260 531h1v1h-1zM260 532h1v1h-1zM260 536h1v1h-1zM260 538h1v1h-1zM260 541h1v1h-1zM261 530h1v1h-1zM261 531h1v1h-1zM261 532h1v1h-1zM261 536h1v1h-1zM261 537h1v1h-1zM261 539h1v1h-1zM261 540h1v1h-1zM262 532h1v1h-1zM262 535h1v1h-1zM262 536h1v1h-1zM262 537h1v1h-1zM262 539h1v1h-1zM262 540h1v1h-1zM263 528h1v1h-1zM263 530h1v1h-1zM263 531h1v1h-1zM263 533h1v1h-1zM263 535h1v1h-1zM263 536h1v1h-1zM263 541h1v1h-1zM264 529h1v1h-1zM264 530h1v1h-1zM264 534h1v1h-1zM264 539h1v1h-1zM264 540h1v1h-1zM264 541h1v1h-1zM264 542h1v1h-1zM264 543h1v1h-1zM265 530h1v1h-1zM265 531h1v1h-1zM265 532h1v1h-1zM265 534h1v1h-1zM265 535h1v1h-1zM265 536h1v1h-1zM265 537h1v1h-1zM265 540h1v1h-1zM265 542h1v1h-1zM266 529h1v1h-1zM266 530h1v1h-1zM266 531h1v1h-1zM266 533h1v1h-1zM266 534h1v1h-1zM266 535h1v1h-1zM266 537h1v1h-1zM266 538h1v1h-1zM266 541h1v1h-1zM266 542h1v1h-1zM267 531h1v1h-1zM267 532h1v1h-1zM267 536h1v1h-1zM267 537h1v1h-1zM267 538h1v1h-1zM267 540h1v1h-1zM267 541h1v1h-1zM267 542h1v1h-1zM268 532h1v1h-1zM268 533h1v1h-1zM268 534h1v1h-1zM268 535h1v1h-1zM268 537h1v1h-1zM268 538h1v1h-1zM268 539h1v1h-1zM268 542h1v1h-1zM268 543h1v1h-1zM269 523h1v1h-1zM269 529h1v1h-1zM269 530h1v1h-1zM269 531h1v1h-1zM269 535h1v1h-1zM269 536h1v1h-1zM270 533h1v1h-1zM270 534h1v1h-1zM270 536h1v1h-1zM270 540h1v1h-1zM270 543h1v1h-1zM271 532h1v1h-1zM271 534h1v1h-1zM271 538h1v1h-1zM271 541h1v1h-1zM272 532h1v1h-1zM272 538h1v1h-1zM272 541h1v1h-1zM272 542h1v1h-1zM272 544h1v1h-1zM273 531h1v1h-1zM273 533h1v1h-1zM273 535h1v1h-1zM273 536h1v1h-1zM273 537h1v1h-1zM273 538h1v1h-1zM273 539h1v1h-1zM273 540h1v1h-1zM273 541h1v1h-1zM273 542h1v1h-1zM273 543h1v1h-1zM273 544h1v1h-1zM274 535h1v1h-1zM274 545h1v1h-1zM275 532h1v1h-1zM275 533h1v1h-1zM275 534h1v1h-1zM275 536h1v1h-1zM275 538h1v1h-1zM275 540h1v1h-1zM275 543h1v1h-1zM275 544h1v1h-1zM276 536h1v1h-1zM276 538h1v1h-1zM276 542h1v1h-1zM276 543h1v1h-1zM276 544h1v1h-1zM276 546h1v1h-1zM277 535h1v1h-1zM277 536h1v1h-1zM277 538h1v1h-1zM277 539h1v1h-1zM277 540h1v1h-1zM277 544h1v1h-1zM278 533h1v1h-1zM278 534h1v1h-1zM278 537h1v1h-1zM278 541h1v1h-1zM278 543h1v1h-1zM278 544h1v1h-1zM278 545h1v1h-1zM278 547h1v1h-1zM278 549h1v1h-1zM279 533h1v1h-1zM279 536h1v1h-1zM279 539h1v1h-1zM279 541h1v1h-1zM279 544h1v1h-1zM279 551h1v1h-1zM280 533h1v1h-1zM280 536h1v1h-1zM280 537h1v1h-1zM280 543h1v1h-1zM280 544h1v1h-1zM280 547h1v1h-1zM281 533h1v1h-1zM281 536h1v1h-1zM281 537h1v1h-1zM281 538h1v1h-1zM281 539h1v1h-1zM281 543h1v1h-1zM281 544h1v1h-1zM281 545h1v1h-1zM282 533h1v1h-1zM282 535h1v1h-1zM282 536h1v1h-1zM282 540h1v1h-1zM282 543h1v1h-1zM282 546h1v1h-1zM283 534h1v1h-1zM283 536h1v1h-1zM283 537h1v1h-1zM283 538h1v1h-1zM283 539h1v1h-1zM283 541h1v1h-1zM283 542h1v1h-1zM283 544h1v1h-1zM283 547h1v1h-1zM284 533h1v1h-1zM284 534h1v1h-1zM284 540h1v1h-1zM284 541h1v1h-1zM284 542h1v1h-1zM284 543h1v1h-1zM284 545h1v1h-1zM285 533h1v1h-1zM285 536h1v1h-1zM285 537h1v1h-1zM285 539h1v1h-1zM285 540h1v1h-1zM285 541h1v1h-1zM285 543h1v1h-1zM285 545h1v1h-1zM285 546h1v1h-1zM285 552h1v1h-1zM286 537h1v1h-1zM286 540h1v1h-1zM286 541h1v1h-1zM286 543h1v1h-1zM286 544h1v1h-1zM286 545h1v1h-1zM286 547h1v1h-1zM286 548h1v1h-1zM286 549h1v1h-1zM287 535h1v1h-1zM287 537h1v1h-1zM287 540h1v1h-1zM287 544h1v1h-1zM287 547h1v1h-1zM288 535h1v1h-1zM288 540h1v1h-1zM288 541h1v1h-1zM288 542h1v1h-1zM288 543h1v1h-1zM288 546h1v1h-1zM288 548h1v1h-1zM288 549h1v1h-1zM289 535h1v1h-1zM289 536h1v1h-1zM289 537h1v1h-1zM289 539h1v1h-1zM289 542h1v1h-1zM289 543h1v1h-1zM289 544h1v1h-1zM289 546h1v1h-1zM289 547h1v1h-1zM289 549h1v1h-1zM289 551h1v1h-1zM290 539h1v1h-1zM290 540h1v1h-1zM290 542h1v1h-1zM290 543h1v1h-1zM290 545h1v1h-1zM290 546h1v1h-1zM290 547h1v1h-1zM290 549h1v1h-1zM291 536h1v1h-1zM291 538h1v1h-1zM291 541h1v1h-1zM291 542h1v1h-1zM291 543h1v1h-1zM291 544h1v1h-1zM291 546h1v1h-1zM291 548h1v1h-1zM291 549h1v1h-1zM292 538h1v1h-1zM292 543h1v1h-1zM292 548h1v1h-1zM292 549h1v1h-1zM292 550h1v1h-1zM293 538h1v1h-1zM293 542h1v1h-1zM293 543h1v1h-1zM293 545h1v1h-1zM293 547h1v1h-1zM293 548h1v1h-1zM293 551h1v1h-1zM294 538h1v1h-1zM294 541h1v1h-1zM294 542h1v1h-1zM294 547h1v1h-1zM294 549h1v1h-1zM294 551h1v1h-1zM295 537h1v1h-1zM295 538h1v1h-1zM295 543h1v1h-1zM295 545h1v1h-1zM295 548h1v1h-1zM295 550h1v1h-1zM295 551h1v1h-1zM296 541h1v1h-1zM296 542h1v1h-1zM296 544h1v1h-1zM296 546h1v1h-1zM296 547h1v1h-1zM296 548h1v1h-1zM296 549h1v1h-1zM296 551h1v1h-1zM297 540h1v1h-1zM297 546h1v1h-1zM297 547h1v1h-1zM297 548h1v1h-1zM297 552h1v1h-1zM298 544h1v1h-1zM298 545h1v1h-1zM298 546h1v1h-1zM298 548h1v1h-1zM298 549h1v1h-1zM298 550h1v1h-1zM298 551h1v1h-1zM299 538h1v1h-1zM299 540h1v1h-1zM299 541h1v1h-1zM299 543h1v1h-1zM299 544h1v1h-1zM299 546h1v1h-1zM299 547h1v1h-1zM299 549h1v1h-1zM299 550h1v1h-1zM299 551h1v1h-1zM299 552h1v1h-1zM300 539h1v1h-1zM300 542h1v1h-1zM300 544h1v1h-1zM300 545h1v1h-1zM300 546h1v1h-1zM300 547h1v1h-1zM300 549h1v1h-1zM300 550h1v1h-1zM300 553h1v1h-1zM301 543h1v1h-1zM301 545h1v1h-1zM301 549h1v1h-1zM301 550h1v1h-1zM301 551h1v1h-1zM301 552h1v1h-1zM302 540h1v1h-1zM302 544h1v1h-1zM302 546h1v1h-1zM302 547h1v1h-1zM302 548h1v1h-1zM302 550h1v1h-1zM302 551h1v1h-1zM302 552h1v1h-1zM303 540h1v1h-1zM303 542h1v1h-1zM303 543h1v1h-1zM303 545h1v1h-1zM303 548h1v1h-1zM303 550h1v1h-1zM303 551h1v1h-1zM303 554h1v1h-1zM304 541h1v1h-1zM304 542h1v1h-1zM304 543h1v1h-1zM304 545h1v1h-1zM304 548h1v1h-1zM304 549h1v1h-1zM304 550h1v1h-1zM305 541h1v1h-1zM305 544h1v1h-1zM305 545h1v1h-1zM305 546h1v1h-1zM305 547h1v1h-1zM305 548h1v1h-1zM305 549h1v1h-1zM305 550h1v1h-1zM306 540h1v1h-1zM306 546h1v1h-1zM306 547h1v1h-1zM306 548h1v1h-1zM306 549h1v1h-1zM306 550h1v1h-1zM306 560h1v1h-1zM307 542h1v1h-1zM307 543h1v1h-1zM307 544h1v1h-1zM307 545h1v1h-1zM307 546h1v1h-1zM307 548h1v1h-1zM307 549h1v1h-1zM307 550h1v1h-1zM307 551h1v1h-1zM307 552h1v1h-1zM307 553h1v1h-1zM308 536h1v1h-1zM308 540h1v1h-1zM308 542h1v1h-1zM308 545h1v1h-1zM308 546h1v1h-1zM308 547h1v1h-1zM308 548h1v1h-1zM308 550h1v1h-1zM308 552h1v1h-1zM308 553h1v1h-1zM308 555h1v1h-1zM309 543h1v1h-1zM309 544h1v1h-1zM309 546h1v1h-1zM309 548h1v1h-1zM309 550h1v1h-1zM309 551h1v1h-1zM309 553h1v1h-1zM309 555h1v1h-1zM310 543h1v1h-1zM310 546h1v1h-1zM310 548h1v1h-1zM310 549h1v1h-1zM310 550h1v1h-1zM310 551h1v1h-1zM310 556h1v1h-1zM311 540h1v1h-1zM311 542h1v1h-1zM311 545h1v1h-1zM311 546h1v1h-1zM311 549h1v1h-1zM311 556h1v1h-1zM312 541h1v1h-1zM312 544h1v1h-1zM312 547h1v1h-1zM312 550h1v1h-1zM313 543h1v1h-1zM313 546h1v1h-1zM313 547h1v1h-1zM313 548h1v1h-1zM313 550h1v1h-1zM313 551h1v1h-1zM313 555h1v1h-1zM313 557h1v1h-1zM314 542h1v1h-1zM314 546h1v1h-1zM314 547h1v1h-1zM314 548h1v1h-1zM314 549h1v1h-1zM314 550h1v1h-1zM314 552h1v1h-1zM314 554h1v1h-1zM314 557h1v1h-1zM315 543h1v1h-1zM315 544h1v1h-1zM315 549h1v1h-1zM315 554h1v1h-1zM315 555h1v1h-1zM316 544h1v1h-1zM316 545h1v1h-1zM316 547h1v1h-1zM316 549h1v1h-1zM316 554h1v1h-1zM316 556h1v1h-1zM317 543h1v1h-1zM317 545h1v1h-1zM317 546h1v1h-1zM317 548h1v1h-1zM317 550h1v1h-1zM317 553h1v1h-1zM317 555h1v1h-1zM318 542h1v1h-1zM318 544h1v1h-1zM318 545h1v1h-1zM318 546h1v1h-1zM318 547h1v1h-1zM318 548h1v1h-1zM318 549h1v1h-1zM318 551h1v1h-1zM318 554h1v1h-1zM318 556h1v1h-1zM319 543h1v1h-1zM319 544h1v1h-1zM319 545h1v1h-1zM319 547h1v1h-1zM319 550h1v1h-1zM319 552h1v1h-1zM319 554h1v1h-1zM319 556h1v1h-1zM320 545h1v1h-1zM320 546h1v1h-1zM320 547h1v1h-1zM320 549h1v1h-1zM320 551h1v1h-1zM320 552h1v1h-1zM320 553h1v1h-1zM320 554h1v1h-1zM320 555h1v1h-1zM321 545h1v1h-1zM321 546h1v1h-1zM321 547h1v1h-1zM321 553h1v1h-1zM321 554h1v1h-1zM321 555h1v1h-1zM321 556h1v1h-1zM321 557h1v1h-1zM322 541h1v1h-1zM322 544h1v1h-1zM322 545h1v1h-1zM322 546h1v1h-1zM322 549h1v1h-1zM322 551h1v1h-1zM322 553h1v1h-1zM323 545h1v1h-1zM323 546h1v1h-1zM323 548h1v1h-1zM323 550h1v1h-1zM323 551h1v1h-1zM323 553h1v1h-1zM323 554h1v1h-1zM323 555h1v1h-1zM323 556h1v1h-1zM323 558h1v1h-1zM324 545h1v1h-1zM324 546h1v1h-1zM324 547h1v1h-1zM324 548h1v1h-1zM324 549h1v1h-1zM324 550h1v1h-1zM324 551h1v1h-1zM324 552h1v1h-1zM324 554h1v1h-1zM324 555h1v1h-1zM324 558h1v1h-1zM325 544h1v1h-1zM325 545h1v1h-1zM325 547h1v1h-1zM325 549h1v1h-1zM325 552h1v1h-1zM325 553h1v1h-1zM325 556h1v1h-1zM325 558h1v1h-1zM326 543h1v1h-1zM326 544h1v1h-1zM326 545h1v1h-1zM326 547h1v1h-1zM326 549h1v1h-1zM326 552h1v1h-1zM326 553h1v1h-1zM326 554h1v1h-1zM326 555h1v1h-1zM326 556h1v1h-1zM326 557h1v1h-1zM327 545h1v1h-1zM327 546h1v1h-1zM327 549h1v1h-1zM327 551h1v1h-1zM327 552h1v1h-1zM327 555h1v1h-1zM327 557h1v1h-1zM327 558h1v1h-1zM328 545h1v1h-1zM328 547h1v1h-1zM328 549h1v1h-1zM328 552h1v1h-1zM328 553h1v1h-1zM328 555h1v1h-1zM328 557h1v1h-1zM328 558h1v1h-1zM329 546h1v1h-1zM329 547h1v1h-1zM329 549h1v1h-1zM329 552h1v1h-1zM329 553h1v1h-1zM329 554h1v1h-1zM329 558h1v1h-1zM330 545h1v1h-1zM330 546h1v1h-1zM330 548h1v1h-1zM330 549h1v1h-1zM330 552h1v1h-1zM330 554h1v1h-1zM330 555h1v1h-1zM330 559h1v1h-1zM331 545h1v1h-1zM331 547h1v1h-1zM331 549h1v1h-1zM331 555h1v1h-1zM331 556h1v1h-1zM331 557h1v1h-1zM332 545h1v1h-1zM332 546h1v1h-1zM332 548h1v1h-1zM332 552h1v1h-1zM332 557h1v1h-1zM332 558h1v1h-1zM333 550h1v1h-1zM333 552h1v1h-1zM333 557h1v1h-1zM333 558h1v1h-1zM333 559h1v1h-1zM333 560h1v1h-1zM334 542h1v1h-1zM334 547h1v1h-1zM334 549h1v1h-1zM334 550h1v1h-1zM334 551h1v1h-1zM334 552h1v1h-1zM334 553h1v1h-1zM334 554h1v1h-1zM334 555h1v1h-1zM334 557h1v1h-1zM334 558h1v1h-1zM335 547h1v1h-1zM335 548h1v1h-1zM335 549h1v1h-1zM335 551h1v1h-1zM335 553h1v1h-1zM335 555h1v1h-1zM335 557h1v1h-1zM335 558h1v1h-1zM335 559h1v1h-1zM336 544h1v1h-1zM336 545h1v1h-1zM336 554h1v1h-1zM336 556h1v1h-1zM336 559h1v1h-1zM337 542h1v1h-1zM337 545h1v1h-1zM337 547h1v1h-1zM337 548h1v1h-1zM337 550h1v1h-1zM337 555h1v1h-1zM337 556h1v1h-1zM337 557h1v1h-1zM337 558h1v1h-1zM338 546h1v1h-1zM338 547h1v1h-1zM338 549h1v1h-1zM338 550h1v1h-1zM338 553h1v1h-1zM338 554h1v1h-1zM338 556h1v1h-1zM339 547h1v1h-1zM339 548h1v1h-1zM339 549h1v1h-1zM339 551h1v1h-1zM339 552h1v1h-1zM339 553h1v1h-1zM339 555h1v1h-1zM339 557h1v1h-1zM340 545h1v1h-1zM340 546h1v1h-1zM340 547h1v1h-1zM340 548h1v1h-1zM340 550h1v1h-1zM340 551h1v1h-1zM340 552h1v1h-1zM340 553h1v1h-1zM340 554h1v1h-1zM340 555h1v1h-1zM340 558h1v1h-1zM341 546h1v1h-1zM341 547h1v1h-1zM341 549h1v1h-1zM341 550h1v1h-1zM341 551h1v1h-1zM341 553h1v1h-1zM341 555h1v1h-1zM341 558h1v1h-1zM341 559h1v1h-1zM342 547h1v1h-1zM342 551h1v1h-1zM342 553h1v1h-1zM342 555h1v1h-1zM343 545h1v1h-1zM343 546h1v1h-1zM343 547h1v1h-1zM343 548h1v1h-1zM343 549h1v1h-1zM343 550h1v1h-1zM343 551h1v1h-1zM343 552h1v1h-1zM343 556h1v1h-1zM343 557h1v1h-1zM343 558h1v1h-1zM344 546h1v1h-1zM344 547h1v1h-1zM344 550h1v1h-1zM344 552h1v1h-1zM344 554h1v1h-1zM344 555h1v1h-1zM344 556h1v1h-1zM344 557h1v1h-1zM345 545h1v1h-1zM345 546h1v1h-1zM345 547h1v1h-1zM345 548h1v1h-1zM345 551h1v1h-1zM345 553h1v1h-1zM345 554h1v1h-1zM345 555h1v1h-1zM345 556h1v1h-1zM345 557h1v1h-1zM345 558h1v1h-1zM346 545h1v1h-1zM346 547h1v1h-1zM346 549h1v1h-1zM346 556h1v1h-1zM346 557h1v1h-1zM347 545h1v1h-1zM347 547h1v1h-1zM347 548h1v1h-1zM347 549h1v1h-1zM347 550h1v1h-1zM347 551h1v1h-1zM347 553h1v1h-1zM348 548h1v1h-1zM348 551h1v1h-1zM348 554h1v1h-1zM348 557h1v1h-1zM348 558h1v1h-1zM349 544h1v1h-1zM349 545h1v1h-1zM349 546h1v1h-1zM349 547h1v1h-1zM349 549h1v1h-1zM349 554h1v1h-1zM349 556h1v1h-1zM349 557h1v1h-1zM349 564h1v1h-1zM350 545h1v1h-1zM350 546h1v1h-1zM350 548h1v1h-1zM350 551h1v1h-1zM350 552h1v1h-1zM350 555h1v1h-1zM350 557h1v1h-1zM351 545h1v1h-1zM351 548h1v1h-1zM351 551h1v1h-1zM351 553h1v1h-1zM351 554h1v1h-1zM351 555h1v1h-1zM351 556h1v1h-1zM351 557h1v1h-1zM352 544h1v1h-1zM352 545h1v1h-1zM352 548h1v1h-1zM352 549h1v1h-1zM352 550h1v1h-1zM352 552h1v1h-1zM352 553h1v1h-1zM352 554h1v1h-1zM352 555h1v1h-1zM353 545h1v1h-1zM353 546h1v1h-1zM353 547h1v1h-1zM353 548h1v1h-1zM353 549h1v1h-1zM353 551h1v1h-1zM353 552h1v1h-1zM353 553h1v1h-1zM353 554h1v1h-1zM353 557h1v1h-1zM353 558h1v1h-1zM354 544h1v1h-1zM354 547h1v1h-1zM354 548h1v1h-1zM354 549h1v1h-1zM354 550h1v1h-1zM354 553h1v1h-1zM354 554h1v1h-1zM354 555h1v1h-1zM354 557h1v1h-1zM355 543h1v1h-1zM355 544h1v1h-1zM355 545h1v1h-1zM355 546h1v1h-1zM355 548h1v1h-1zM355 550h1v1h-1zM355 555h1v1h-1zM355 558h1v1h-1zM356 542h1v1h-1zM356 545h1v1h-1zM356 548h1v1h-1zM356 551h1v1h-1zM356 556h1v1h-1zM357 544h1v1h-1zM357 545h1v1h-1zM357 546h1v1h-1zM357 548h1v1h-1zM357 550h1v1h-1zM357 552h1v1h-1zM357 555h1v1h-1zM358 545h1v1h-1zM358 546h1v1h-1zM358 547h1v1h-1zM358 548h1v1h-1zM358 549h1v1h-1zM358 550h1v1h-1zM358 551h1v1h-1zM358 552h1v1h-1zM358 556h1v1h-1zM359 540h1v1h-1zM359 542h1v1h-1zM359 544h1v1h-1zM359 547h1v1h-1zM359 548h1v1h-1zM359 549h1v1h-1zM359 550h1v1h-1zM359 552h1v1h-1zM359 553h1v1h-1zM360 546h1v1h-1zM360 551h1v1h-1zM360 555h1v1h-1zM361 542h1v1h-1zM361 545h1v1h-1zM361 547h1v1h-1zM361 550h1v1h-1zM361 552h1v1h-1zM361 553h1v1h-1zM361 555h1v1h-1zM361 556h1v1h-1zM362 542h1v1h-1zM362 543h1v1h-1zM362 545h1v1h-1zM362 546h1v1h-1zM362 547h1v1h-1zM362 550h1v1h-1zM362 551h1v1h-1zM362 553h1v1h-1zM362 554h1v1h-1zM363 541h1v1h-1zM363 543h1v1h-1zM363 547h1v1h-1zM363 550h1v1h-1zM363 552h1v1h-1zM363 553h1v1h-1zM363 555h1v1h-1zM364 545h1v1h-1zM364 546h1v1h-1zM364 547h1v1h-1zM364 548h1v1h-1zM364 549h1v1h-1zM364 552h1v1h-1zM364 555h1v1h-1zM365 542h1v1h-1zM365 543h1v1h-1zM365 544h1v1h-1zM365 545h1v1h-1zM365 547h1v1h-1zM365 549h1v1h-1zM365 550h1v1h-1zM365 551h1v1h-1zM365 552h1v1h-1zM365 554h1v1h-1zM366 543h1v1h-1zM366 544h1v1h-1zM366 545h1v1h-1zM366 548h1v1h-1zM366 550h1v1h-1zM366 551h1v1h-1zM366 552h1v1h-1zM366 553h1v1h-1zM366 555h1v1h-1zM367 543h1v1h-1zM367 545h1v1h-1zM367 546h1v1h-1zM367 548h1v1h-1zM367 549h1v1h-1zM368 541h1v1h-1zM368 542h1v1h-1zM368 544h1v1h-1zM368 545h1v1h-1zM368 546h1v1h-1zM368 548h1v1h-1zM368 549h1v1h-1zM368 550h1v1h-1zM368 551h1v1h-1zM368 552h1v1h-1zM368 553h1v1h-1zM368 554h1v1h-1zM368 556h1v1h-1zM369 542h1v1h-1zM369 543h1v1h-1zM369 547h1v1h-1zM369 548h1v1h-1zM369 549h1v1h-1zM369 550h1v1h-1zM369 553h1v1h-1zM369 554h1v1h-1zM369 555h1v1h-1zM370 538h1v1h-1zM370 542h1v1h-1zM370 543h1v1h-1zM370 544h1v1h-1zM370 545h1v1h-1zM370 547h1v1h-1zM370 548h1v1h-1zM370 549h1v1h-1zM370 552h1v1h-1zM371 541h1v1h-1zM371 544h1v1h-1zM371 546h1v1h-1zM371 547h1v1h-1zM371 550h1v1h-1zM371 553h1v1h-1zM371 554h1v1h-1zM372 537h1v1h-1zM372 542h1v1h-1zM372 543h1v1h-1zM372 544h1v1h-1zM372 547h1v1h-1zM372 548h1v1h-1zM372 549h1v1h-1zM372 551h1v1h-1zM373 540h1v1h-1zM373 543h1v1h-1zM373 544h1v1h-1zM373 545h1v1h-1zM373 549h1v1h-1zM373 550h1v1h-1zM373 551h1v1h-1zM373 552h1v1h-1zM373 553h1v1h-1zM373 555h1v1h-1zM374 542h1v1h-1zM374 543h1v1h-1zM374 544h1v1h-1zM374 545h1v1h-1zM374 546h1v1h-1zM374 547h1v1h-1zM374 549h1v1h-1zM374 550h1v1h-1zM374 554h1v1h-1zM375 540h1v1h-1zM375 542h1v1h-1zM375 543h1v1h-1zM375 545h1v1h-1zM375 548h1v1h-1zM375 549h1v1h-1zM375 550h1v1h-1zM375 551h1v1h-1zM376 540h1v1h-1zM376 541h1v1h-1zM376 547h1v1h-1zM376 548h1v1h-1zM376 549h1v1h-1zM376 552h1v1h-1zM376 553h1v1h-1zM376 554h1v1h-1zM377 540h1v1h-1zM377 542h1v1h-1zM377 545h1v1h-1zM377 549h1v1h-1zM377 552h1v1h-1zM377 553h1v1h-1zM378 540h1v1h-1zM378 542h1v1h-1zM378 545h1v1h-1zM378 546h1v1h-1zM378 548h1v1h-1zM378 551h1v1h-1zM378 554h1v1h-1zM379 540h1v1h-1zM379 543h1v1h-1zM379 544h1v1h-1zM379 549h1v1h-1zM379 552h1v1h-1zM379 554h1v1h-1zM380 536h1v1h-1zM380 538h1v1h-1zM380 539h1v1h-1zM380 543h1v1h-1zM380 545h1v1h-1zM380 547h1v1h-1zM380 552h1v1h-1zM380 553h1v1h-1zM381 537h1v1h-1zM381 539h1v1h-1zM381 541h1v1h-1zM381 543h1v1h-1zM381 544h1v1h-1zM381 553h1v1h-1zM381 554h1v1h-1zM381 557h1v1h-1zM382 539h1v1h-1zM382 540h1v1h-1zM382 541h1v1h-1zM382 545h1v1h-1zM382 547h1v1h-1zM382 548h1v1h-1zM382 552h1v1h-1zM383 540h1v1h-1zM383 541h1v1h-1zM383 542h1v1h-1zM383 543h1v1h-1zM383 545h1v1h-1zM383 548h1v1h-1zM383 549h1v1h-1zM383 550h1v1h-1zM383 553h1v1h-1zM384 540h1v1h-1zM384 541h1v1h-1zM384 542h1v1h-1zM384 543h1v1h-1zM384 544h1v1h-1zM385 540h1v1h-1zM385 541h1v1h-1zM385 542h1v1h-1zM385 543h1v1h-1zM385 545h1v1h-1zM385 548h1v1h-1zM385 549h1v1h-1zM385 552h1v1h-1zM386 538h1v1h-1zM386 539h1v1h-1zM386 540h1v1h-1zM386 542h1v1h-1zM386 543h1v1h-1zM386 544h1v1h-1zM386 551h1v1h-1zM387 538h1v1h-1zM387 539h1v1h-1zM387 540h1v1h-1zM387 541h1v1h-1zM387 542h1v1h-1zM387 543h1v1h-1zM387 545h1v1h-1zM387 548h1v1h-1zM387 549h1v1h-1zM388 539h1v1h-1zM388 540h1v1h-1zM388 541h1v1h-1zM388 542h1v1h-1zM388 543h1v1h-1zM388 545h1v1h-1zM388 547h1v1h-1zM389 539h1v1h-1zM389 540h1v1h-1zM389 541h1v1h-1zM389 542h1v1h-1zM389 543h1v1h-1zM389 544h1v1h-1zM389 546h1v1h-1zM389 547h1v1h-1zM389 550h1v1h-1zM390 539h1v1h-1zM390 540h1v1h-1zM390 542h1v1h-1zM390 543h1v1h-1zM390 545h1v1h-1zM390 546h1v1h-1zM390 548h1v1h-1zM390 550h1v1h-1zM390 551h1v1h-1zM391 535h1v1h-1zM391 537h1v1h-1zM391 538h1v1h-1zM391 540h1v1h-1zM391 542h1v1h-1zM391 543h1v1h-1zM391 544h1v1h-1zM391 545h1v1h-1zM391 549h1v1h-1zM391 550h1v1h-1zM392 539h1v1h-1zM392 542h1v1h-1zM392 544h1v1h-1zM392 547h1v1h-1zM392 548h1v1h-1zM392 549h1v1h-1zM392 553h1v1h-1zM393 538h1v1h-1zM393 540h1v1h-1zM393 541h1v1h-1zM393 542h1v1h-1zM393 546h1v1h-1zM393 550h1v1h-1zM394 538h1v1h-1zM394 539h1v1h-1zM394 543h1v1h-1zM394 544h1v1h-1zM394 545h1v1h-1zM394 546h1v1h-1zM394 548h1v1h-1zM394 550h1v1h-1zM395 539h1v1h-1zM395 542h1v1h-1zM395 543h1v1h-1zM395 547h1v1h-1zM395 549h1v1h-1zM396 536h1v1h-1zM396 537h1v1h-1zM396 538h1v1h-1zM396 542h1v1h-1zM396 544h1v1h-1zM396 545h1v1h-1zM396 546h1v1h-1zM396 549h1v1h-1zM396 550h1v1h-1zM397 538h1v1h-1zM397 539h1v1h-1zM397 540h1v1h-1zM397 543h1v1h-1zM397 545h1v1h-1zM397 547h1v1h-1zM398 536h1v1h-1zM398 541h1v1h-1zM398 542h1v1h-1zM398 544h1v1h-1zM398 546h1v1h-1zM398 547h1v1h-1zM398 548h1v1h-1zM398 549h1v1h-1zM399 536h1v1h-1zM399 538h1v1h-1zM399 543h1v1h-1zM399 546h1v1h-1zM400 532h1v1h-1zM400 537h1v1h-1zM400 540h1v1h-1zM400 543h1v1h-1zM400 544h1v1h-1zM400 545h1v1h-1zM400 546h1v1h-1zM401 535h1v1h-1zM401 536h1v1h-1zM401 537h1v1h-1zM401 539h1v1h-1zM401 543h1v1h-1zM401 545h1v1h-1zM401 546h1v1h-1zM401 547h1v1h-1zM401 548h1v1h-1zM401 549h1v1h-1zM401 550h1v1h-1zM402 538h1v1h-1zM402 543h1v1h-1zM402 546h1v1h-1zM402 547h1v1h-1zM402 548h1v1h-1zM403 534h1v1h-1zM403 536h1v1h-1zM403 539h1v1h-1zM403 540h1v1h-1zM403 541h1v1h-1zM403 542h1v1h-1zM403 543h1v1h-1zM403 544h1v1h-1zM403 545h1v1h-1zM403 548h1v1h-1zM403 549h1v1h-1zM403 551h1v1h-1zM404 542h1v1h-1zM404 543h1v1h-1zM404 544h1v1h-1zM404 545h1v1h-1zM404 547h1v1h-1zM404 548h1v1h-1zM404 549h1v1h-1zM405 536h1v1h-1zM405 537h1v1h-1zM405 538h1v1h-1zM405 539h1v1h-1zM405 542h1v1h-1zM405 544h1v1h-1zM405 545h1v1h-1zM405 546h1v1h-1zM405 550h1v1h-1zM406 536h1v1h-1zM406 537h1v1h-1zM406 539h1v1h-1zM406 543h1v1h-1zM406 546h1v1h-1zM406 548h1v1h-1zM406 549h1v1h-1zM407 532h1v1h-1zM407 535h1v1h-1zM407 536h1v1h-1zM407 537h1v1h-1zM407 538h1v1h-1zM407 539h1v1h-1zM407 541h1v1h-1zM407 542h1v1h-1zM407 543h1v1h-1zM407 545h1v1h-1zM407 546h1v1h-1zM407 547h1v1h-1zM407 548h1v1h-1zM408 534h1v1h-1zM408 536h1v1h-1zM408 537h1v1h-1zM408 541h1v1h-1zM408 544h1v1h-1zM408 546h1v1h-1zM408 548h1v1h-1zM409 535h1v1h-1zM409 536h1v1h-1zM409 537h1v1h-1zM409 541h1v1h-1zM409 542h1v1h-1zM409 544h1v1h-1zM409 546h1v1h-1zM409 547h1v1h-1zM409 548h1v1h-1zM409 549h1v1h-1zM410 534h1v1h-1zM410 535h1v1h-1zM410 536h1v1h-1zM410 537h1v1h-1zM410 543h1v1h-1zM410 546h1v1h-1zM410 549h1v1h-1zM411 536h1v1h-1zM411 537h1v1h-1zM411 538h1v1h-1zM411 542h1v1h-1zM411 543h1v1h-1zM411 544h1v1h-1zM411 546h1v1h-1zM411 547h1v1h-1zM411 548h1v1h-1zM411 549h1v1h-1zM412 535h1v1h-1zM412 536h1v1h-1zM412 539h1v1h-1zM412 542h1v1h-1zM412 545h1v1h-1zM412 546h1v1h-1zM412 550h1v1h-1zM413 536h1v1h-1zM413 538h1v1h-1zM413 540h1v1h-1zM413 542h1v1h-1zM413 544h1v1h-1zM413 547h1v1h-1zM414 534h1v1h-1zM414 536h1v1h-1zM414 537h1v1h-1zM414 539h1v1h-1zM414 540h1v1h-1zM414 541h1v1h-1zM414 542h1v1h-1zM414 545h1v1h-1zM414 546h1v1h-1zM414 547h1v1h-1zM414 548h1v1h-1zM415 534h1v1h-1zM415 535h1v1h-1zM415 536h1v1h-1zM415 537h1v1h-1zM415 538h1v1h-1zM415 546h1v1h-1zM415 548h1v1h-1zM416 535h1v1h-1zM416 537h1v1h-1zM416 538h1v1h-1zM416 540h1v1h-1zM416 542h1v1h-1zM416 544h1v1h-1zM416 545h1v1h-1zM416 548h1v1h-1zM417 536h1v1h-1zM417 538h1v1h-1zM417 539h1v1h-1zM417 541h1v1h-1zM417 543h1v1h-1zM417 545h1v1h-1zM417 547h1v1h-1zM418 535h1v1h-1zM418 537h1v1h-1zM418 538h1v1h-1zM418 539h1v1h-1zM418 542h1v1h-1zM418 543h1v1h-1zM418 544h1v1h-1zM418 545h1v1h-1zM419 535h1v1h-1zM419 536h1v1h-1zM419 539h1v1h-1zM419 542h1v1h-1zM419 543h1v1h-1zM419 544h1v1h-1zM419 546h1v1h-1zM419 548h1v1h-1zM419 550h1v1h-1zM420 538h1v1h-1zM420 540h1v1h-1zM420 541h1v1h-1zM420 542h1v1h-1zM420 544h1v1h-1zM420 546h1v1h-1zM420 548h1v1h-1zM420 549h1v1h-1zM421 533h1v1h-1zM421 541h1v1h-1zM421 542h1v1h-1zM421 543h1v1h-1zM421 545h1v1h-1zM421 546h1v1h-1zM422 536h1v1h-1zM422 537h1v1h-1zM422 538h1v1h-1zM422 540h1v1h-1zM422 543h1v1h-1zM422 544h1v1h-1zM422 545h1v1h-1zM422 547h1v1h-1zM423 534h1v1h-1zM423 535h1v1h-1zM423 536h1v1h-1zM423 537h1v1h-1zM423 539h1v1h-1zM423 540h1v1h-1zM423 542h1v1h-1zM423 549h1v1h-1zM424 534h1v1h-1zM424 535h1v1h-1zM424 536h1v1h-1zM424 537h1v1h-1zM424 538h1v1h-1zM424 539h1v1h-1zM424 541h1v1h-1zM424 542h1v1h-1zM424 544h1v1h-1zM424 545h1v1h-1zM424 547h1v1h-1zM425 536h1v1h-1zM425 538h1v1h-1zM425 539h1v1h-1zM425 543h1v1h-1zM425 545h1v1h-1zM425 557h1v1h-1zM426 536h1v1h-1zM426 542h1v1h-1zM426 544h1v1h-1zM427 534h1v1h-1zM427 535h1v1h-1zM427 537h1v1h-1zM427 541h1v1h-1zM427 543h1v1h-1zM427 545h1v1h-1zM427 547h1v1h-1zM427 549h1v1h-1zM428 535h1v1h-1zM428 537h1v1h-1zM428 538h1v1h-1zM428 540h1v1h-1zM428 541h1v1h-1zM428 543h1v1h-1zM428 544h1v1h-1zM428 545h1v1h-1zM428 546h1v1h-1zM429 527h1v1h-1zM429 540h1v1h-1zM429 541h1v1h-1zM429 542h1v1h-1zM429 544h1v1h-1zM430 534h1v1h-1zM430 537h1v1h-1zM430 539h1v1h-1zM430 540h1v1h-1zM430 541h1v1h-1zM430 542h1v1h-1zM430 543h1v1h-1zM430 544h1v1h-1zM430 547h1v1h-1zM431 532h1v1h-1zM431 534h1v1h-1zM431 536h1v1h-1zM431 537h1v1h-1zM431 539h1v1h-1zM431 540h1v1h-1zM431 541h1v1h-1zM431 543h1v1h-1zM431 547h1v1h-1zM431 549h1v1h-1zM432 531h1v1h-1zM432 534h1v1h-1zM432 535h1v1h-1zM432 536h1v1h-1zM432 541h1v1h-1zM432 543h1v1h-1zM432 552h1v1h-1zM433 530h1v1h-1zM433 534h1v1h-1zM433 535h1v1h-1zM433 537h1v1h-1zM433 538h1v1h-1zM433 539h1v1h-1zM433 545h1v1h-1zM433 546h1v1h-1zM433 547h1v1h-1zM434 534h1v1h-1zM434 536h1v1h-1zM434 537h1v1h-1zM434 538h1v1h-1zM434 539h1v1h-1zM434 542h1v1h-1zM434 543h1v1h-1zM434 545h1v1h-1zM434 546h1v1h-1zM434 547h1v1h-1zM434 552h1v1h-1zM435 534h1v1h-1zM435 536h1v1h-1zM435 540h1v1h-1zM435 541h1v1h-1zM435 544h1v1h-1zM435 545h1v1h-1zM435 548h1v1h-1zM436 528h1v1h-1zM436 534h1v1h-1zM436 535h1v1h-1zM436 537h1v1h-1zM436 539h1v1h-1zM436 540h1v1h-1zM436 541h1v1h-1zM436 542h1v1h-1zM436 543h1v1h-1zM436 545h1v1h-1zM436 546h1v1h-1zM436 547h1v1h-1zM437 533h1v1h-1zM437 534h1v1h-1zM437 536h1v1h-1zM437 537h1v1h-1zM437 539h1v1h-1zM437 541h1v1h-1zM437 542h1v1h-1zM437 543h1v1h-1zM437 544h1v1h-1zM437 547h1v1h-1zM438 534h1v1h-1zM438 539h1v1h-1zM438 540h1v1h-1zM438 541h1v1h-1zM438 542h1v1h-1zM438 543h1v1h-1zM438 544h1v1h-1zM438 548h1v1h-1zM439 534h1v1h-1zM439 535h1v1h-1zM439 536h1v1h-1zM439 537h1v1h-1zM439 538h1v1h-1zM439 539h1v1h-1zM439 541h1v1h-1zM439 542h1v1h-1zM439 543h1v1h-1zM439 544h1v1h-1zM439 545h1v1h-1zM439 546h1v1h-1zM440 533h1v1h-1zM440 535h1v1h-1zM440 538h1v1h-1zM440 539h1v1h-1zM440 542h1v1h-1zM440 543h1v1h-1zM440 547h1v1h-1zM441 533h1v1h-1zM441 536h1v1h-1zM441 537h1v1h-1zM441 538h1v1h-1zM441 541h1v1h-1zM442 533h1v1h-1zM442 537h1v1h-1zM442 538h1v1h-1zM442 540h1v1h-1zM442 542h1v1h-1zM443 536h1v1h-1zM443 537h1v1h-1zM443 541h1v1h-1zM443 542h1v1h-1zM443 543h1v1h-1zM443 546h1v1h-1zM443 547h1v1h-1zM443 548h1v1h-1zM444 533h1v1h-1zM444 534h1v1h-1zM444 535h1v1h-1zM444 536h1v1h-1zM444 538h1v1h-1zM444 541h1v1h-1zM444 543h1v1h-1zM444 546h1v1h-1zM445 533h1v1h-1zM445 534h1v1h-1zM445 535h1v1h-1zM445 536h1v1h-1zM445 538h1v1h-1zM445 540h1v1h-1zM445 541h1v1h-1zM445 544h1v1h-1zM445 546h1v1h-1zM446 534h1v1h-1zM446 535h1v1h-1zM446 537h1v1h-1zM446 538h1v1h-1zM446 539h1v1h-1zM446 544h1v1h-1zM446 545h1v1h-1zM447 533h1v1h-1zM447 535h1v1h-1zM447 537h1v1h-1zM447 538h1v1h-1zM447 540h1v1h-1zM447 543h1v1h-1zM447 544h1v1h-1zM447 545h1v1h-1zM448 533h1v1h-1zM448 536h1v1h-1zM448 540h1v1h-1zM448 541h1v1h-1zM448 542h1v1h-1zM448 543h1v1h-1zM448 544h1v1h-1zM448 545h1v1h-1zM449 532h1v1h-1zM449 537h1v1h-1zM449 540h1v1h-1zM449 541h1v1h-1zM449 545h1v1h-1zM450 532h1v1h-1zM450 534h1v1h-1zM450 535h1v1h-1zM450 538h1v1h-1zM450 539h1v1h-1zM450 540h1v1h-1zM450 542h1v1h-1zM450 545h1v1h-1zM451 534h1v1h-1zM451 537h1v1h-1zM451 538h1v1h-1zM451 543h1v1h-1zM451 544h1v1h-1zM452 531h1v1h-1zM452 533h1v1h-1zM452 534h1v1h-1zM452 536h1v1h-1zM452 539h1v1h-1zM452 541h1v1h-1zM452 542h1v1h-1zM452 543h1v1h-1zM453 529h1v1h-1zM453 530h1v1h-1zM453 531h1v1h-1zM453 536h1v1h-1zM453 537h1v1h-1zM453 538h1v1h-1zM453 540h1v1h-1zM453 542h1v1h-1zM453 543h1v1h-1zM454 527h1v1h-1zM454 532h1v1h-1zM454 533h1v1h-1zM454 535h1v1h-1zM454 536h1v1h-1zM454 538h1v1h-1zM454 540h1v1h-1zM454 541h1v1h-1zM454 544h1v1h-1zM454 545h1v1h-1zM455 531h1v1h-1zM455 533h1v1h-1zM455 534h1v1h-1zM455 535h1v1h-1zM455 538h1v1h-1zM455 539h1v1h-1zM455 540h1v1h-1zM455 542h1v1h-1zM455 543h1v1h-1zM456 530h1v1h-1zM456 533h1v1h-1zM456 535h1v1h-1zM456 536h1v1h-1zM456 539h1v1h-1zM456 543h1v1h-1zM456 544h1v1h-1zM457 530h1v1h-1zM457 531h1v1h-1zM457 532h1v1h-1zM457 533h1v1h-1zM457 534h1v1h-1zM457 537h1v1h-1zM457 541h1v1h-1zM457 542h1v1h-1zM457 543h1v1h-1zM457 544h1v1h-1zM457 545h1v1h-1zM458 530h1v1h-1zM458 533h1v1h-1zM458 535h1v1h-1zM458 538h1v1h-1zM458 539h1v1h-1zM458 540h1v1h-1zM458 541h1v1h-1zM458 542h1v1h-1zM458 544h1v1h-1zM459 529h1v1h-1zM459 530h1v1h-1zM459 531h1v1h-1zM459 533h1v1h-1zM459 537h1v1h-1zM459 539h1v1h-1zM459 541h1v1h-1zM459 544h1v1h-1zM460 526h1v1h-1zM460 529h1v1h-1zM460 531h1v1h-1zM460 533h1v1h-1zM460 537h1v1h-1zM460 538h1v1h-1zM460 540h1v1h-1zM460 541h1v1h-1zM460 542h1v1h-1zM461 527h1v1h-1zM461 530h1v1h-1zM461 531h1v1h-1zM461 533h1v1h-1zM461 535h1v1h-1zM461 536h1v1h-1zM461 541h1v1h-1zM462 527h1v1h-1zM462 529h1v1h-1zM462 533h1v1h-1zM462 535h1v1h-1zM462 536h1v1h-1zM462 537h1v1h-1zM462 539h1v1h-1zM462 540h1v1h-1zM462 541h1v1h-1zM463 526h1v1h-1zM463 527h1v1h-1zM463 529h1v1h-1zM463 530h1v1h-1zM463 531h1v1h-1zM463 532h1v1h-1zM463 533h1v1h-1zM463 535h1v1h-1zM463 536h1v1h-1zM463 537h1v1h-1zM463 538h1v1h-1zM463 540h1v1h-1zM464 529h1v1h-1zM464 531h1v1h-1zM464 538h1v1h-1zM464 539h1v1h-1zM464 540h1v1h-1zM465 527h1v1h-1zM465 528h1v1h-1zM465 529h1v1h-1zM465 530h1v1h-1zM465 531h1v1h-1zM465 533h1v1h-1zM465 536h1v1h-1zM465 538h1v1h-1zM465 539h1v1h-1zM466 525h1v1h-1zM466 532h1v1h-1zM466 533h1v1h-1zM466 535h1v1h-1zM466 536h1v1h-1zM466 538h1v1h-1zM466 539h1v1h-1zM466 540h1v1h-1zM467 522h1v1h-1zM467 525h1v1h-1zM467 527h1v1h-1zM467 528h1v1h-1zM467 531h1v1h-1zM467 533h1v1h-1zM467 534h1v1h-1zM467 535h1v1h-1zM468 522h1v1h-1zM468 525h1v1h-1zM468 526h1v1h-1zM468 527h1v1h-1zM468 528h1v1h-1zM468 530h1v1h-1zM468 533h1v1h-1zM468 536h1v1h-1zM469 517h1v1h-1zM469 522h1v1h-1zM469 523h1v1h-1zM469 525h1v1h-1zM469 528h1v1h-1zM469 531h1v1h-1zM469 532h1v1h-1zM469 536h1v1h-1zM469 537h1v1h-1zM469 538h1v1h-1zM470 519h1v1h-1zM470 520h1v1h-1zM470 523h1v1h-1zM470 524h1v1h-1zM470 525h1v1h-1zM470 526h1v1h-1zM470 527h1v1h-1zM470 528h1v1h-1zM470 529h1v1h-1zM470 530h1v1h-1zM470 531h1v1h-1zM470 532h1v1h-1zM470 536h1v1h-1zM470 538h1v1h-1zM471 523h1v1h-1zM471 525h1v1h-1zM471 526h1v1h-1zM471 527h1v1h-1zM471 529h1v1h-1zM471 530h1v1h-1zM471 532h1v1h-1zM471 533h1v1h-1zM471 534h1v1h-1zM471 535h1v1h-1zM472 521h1v1h-1zM472 523h1v1h-1zM472 525h1v1h-1zM472 526h1v1h-1zM472 527h1v1h-1zM472 531h1v1h-1zM472 534h1v1h-1zM473 515h1v1h-1zM473 517h1v1h-1zM473 519h1v1h-1zM473 520h1v1h-1zM473 524h1v1h-1zM473 525h1v1h-1zM473 527h1v1h-1zM473 528h1v1h-1zM473 531h1v1h-1zM473 533h1v1h-1zM474 517h1v1h-1zM474 518h1v1h-1zM474 519h1v1h-1zM474 520h1v1h-1zM474 521h1v1h-1zM474 525h1v1h-1zM474 527h1v1h-1zM474 531h1v1h-1zM474 532h1v1h-1zM474 542h1v1h-1zM475 514h1v1h-1zM475 516h1v1h-1zM475 518h1v1h-1zM475 519h1v1h-1zM475 521h1v1h-1zM475 523h1v1h-1zM475 525h1v1h-1zM475 526h1v1h-1zM475 532h1v1h-1zM476 517h1v1h-1zM476 518h1v1h-1zM476 519h1v1h-1zM476 525h1v1h-1zM476 531h1v1h-1zM477 507h1v1h-1zM477 509h1v1h-1zM477 511h1v1h-1zM477 512h1v1h-1zM477 518h1v1h-1zM477 519h1v1h-1zM477 521h1v1h-1zM477 522h1v1h-1zM477 523h1v1h-1zM477 528h1v1h-1zM477 529h1v1h-1zM478 510h1v1h-1zM478 512h1v1h-1zM478 517h1v1h-1zM478 519h1v1h-1zM478 520h1v1h-1zM478 522h1v1h-1zM478 524h1v1h-1zM478 525h1v1h-1zM478 527h1v1h-1zM479 508h1v1h-1zM479 510h1v1h-1zM479 513h1v1h-1zM479 519h1v1h-1zM479 520h1v1h-1zM479 521h1v1h-1zM480 501h1v1h-1zM480 503h1v1h-1zM480 506h1v1h-1zM480 510h1v1h-1zM480 511h1v1h-1zM480 512h1v1h-1zM480 515h1v1h-1zM480 518h1v1h-1zM480 519h1v1h-1zM480 521h1v1h-1zM480 523h1v1h-1zM480 524h1v1h-1zM480 528h1v1h-1zM481 498h1v1h-1zM481 499h1v1h-1zM481 500h1v1h-1zM481 502h1v1h-1zM481 503h1v1h-1zM481 504h1v1h-1zM481 505h1v1h-1zM481 506h1v1h-1zM481 507h1v1h-1zM481 508h1v1h-1zM481 509h1v1h-1zM481 510h1v1h-1zM481 512h1v1h-1zM481 513h1v1h-1zM481 518h1v1h-1zM482 500h1v1h-1zM482 502h1v1h-1zM482 503h1v1h-1zM482 505h1v1h-1zM482 506h1v1h-1zM482 508h1v1h-1zM482 514h1v1h-1zM482 515h1v1h-1zM482 518h1v1h-1zM482 520h1v1h-1zM482 523h1v1h-1zM483 494h1v1h-1zM483 495h1v1h-1zM483 497h1v1h-1zM483 499h1v1h-1zM483 500h1v1h-1zM483 503h1v1h-1zM483 504h1v1h-1zM483 513h1v1h-1zM483 517h1v1h-1zM483 518h1v1h-1zM484 484h1v1h-1zM484 489h1v1h-1zM484 492h1v1h-1zM484 494h1v1h-1zM484 500h1v1h-1zM484 503h1v1h-1zM484 505h1v1h-1zM484 508h1v1h-1zM484 509h1v1h-1zM484 512h1v1h-1zM484 516h1v1h-1zM484 517h1v1h-1zM485 489h1v1h-1zM485 499h1v1h-1zM485 500h1v1h-1zM485 506h1v1h-1zM485 507h1v1h-1zM485 511h1v1h-1zM485 516h1v1h-1zM485 517h1v1h-1zM486 483h1v1h-1zM486 484h1v1h-1zM486 487h1v1h-1zM486 488h1v1h-1zM486 489h1v1h-1zM486 491h1v1h-1zM486 497h1v1h-1zM486 499h1v1h-1zM486 501h1v1h-1zM486 502h1v1h-1zM486 503h1v1h-1zM486 505h1v1h-1zM486 506h1v1h-1zM486 507h1v1h-1zM486 509h1v1h-1zM487 481h1v1h-1zM487 483h1v1h-1zM487 494h1v1h-1zM487 495h1v1h-1zM487 498h1v1h-1zM487 502h1v1h-1zM487 503h1v1h-1zM488 475h1v1h-1zM488 479h1v1h-1zM488 480h1v1h-1zM488 484h1v1h-1zM488 485h1v1h-1zM488 486h1v1h-1zM488 487h1v1h-1zM488 488h1v1h-1zM488 490h1v1h-1zM488 494h1v1h-1zM488 496h1v1h-1zM488 499h1v1h-1zM488 502h1v1h-1zM488 504h1v1h-1zM488 505h1v1h-1zM489 477h1v1h-1zM489 479h1v1h-1zM489 481h1v1h-1zM489 482h1v1h-1zM489 484h1v1h-1zM489 486h1v1h-1zM489 488h1v1h-1zM489 489h1v1h-1zM489 491h1v1h-1zM489 499h1v1h-1zM489 500h1v1h-1zM490 470h1v1h-1zM490 471h1v1h-1zM490 472h1v1h-1zM490 473h1v1h-1zM490 474h1v1h-1zM490 475h1v1h-1zM490 477h1v1h-1zM490 479h1v1h-1zM490 481h1v1h-1zM490 482h1v1h-1zM490 483h1v1h-1zM490 484h1v1h-1zM490 485h1v1h-1zM490 486h1v1h-1zM490 487h1v1h-1zM490 488h1v1h-1zM490 489h1v1h-1zM490 490h1v1h-1zM490 491h1v1h-1zM490 493h1v1h-1zM490 498h1v1h-1zM490 499h1v1h-1zM491 464h1v1h-1zM491 466h1v1h-1zM491 469h1v1h-1zM491 474h1v1h-1zM491 475h1v1h-1zM491 479h1v1h-1zM491 482h1v1h-1zM491 486h1v1h-1zM491 487h1v1h-1zM491 488h1v1h-1zM491 491h1v1h-1zM491 493h1v1h-1zM491 494h1v1h-1zM491 495h1v1h-1zM492 463h1v1h-1zM492 464h1v1h-1zM492 465h1v1h-1zM492 472h1v1h-1zM492 473h1v1h-1zM492 474h1v1h-1zM492 477h1v1h-1zM492 478h1v1h-1zM492 479h1v1h-1zM492 481h1v1h-1zM492 482h1v1h-1zM492 484h1v1h-1zM492 485h1v1h-1zM492 486h1v1h-1zM492 492h1v1h-1zM492 494h1v1h-1zM493 465h1v1h-1zM493 467h1v1h-1zM493 468h1v1h-1zM493 469h1v1h-1zM493 473h1v1h-1zM493 474h1v1h-1zM493 476h1v1h-1zM493 478h1v1h-1zM493 481h1v1h-1zM493 485h1v1h-1zM493 487h1v1h-1zM493 489h1v1h-1zM494 453h1v1h-1zM494 459h1v1h-1zM494 461h1v1h-1zM494 462h1v1h-1zM494 463h1v1h-1zM494 466h1v1h-1zM494 467h1v1h-1zM494 468h1v1h-1zM494 469h1v1h-1zM494 474h1v1h-1zM494 480h1v1h-1zM494 482h1v1h-1zM495 456h1v1h-1zM495 457h1v1h-1zM495 459h1v1h-1zM495 460h1v1h-1zM495 461h1v1h-1zM495 462h1v1h-1zM495 464h1v1h-1zM495 465h1v1h-1zM495 468h1v1h-1zM495 470h1v1h-1zM495 471h1v1h-1zM495 473h1v1h-1zM495 476h1v1h-1zM495 477h1v1h-1zM496 449h1v1h-1zM496 450h1v1h-1zM496 451h1v1h-1zM496 452h1v1h-1zM496 453h1v1h-1zM496 455h1v1h-1zM496 457h1v1h-1zM496 459h1v1h-1zM496 461h1v1h-1zM496 463h1v1h-1zM496 465h1v1h-1zM496 466h1v1h-1zM496 468h1v1h-1zM496 472h1v1h-1zM496 474h1v1h-1zM496 480h1v1h-1zM497 430h1v1h-1zM497 436h1v1h-1zM497 437h1v1h-1zM497 441h1v1h-1zM497 442h1v1h-1zM497 446h1v1h-1zM497 447h1v1h-1zM497 448h1v1h-1zM497 449h1v1h-1zM497 451h1v1h-1zM497 452h1v1h-1zM497 453h1v1h-1zM497 454h1v1h-1zM497 455h1v1h-1zM497 457h1v1h-1zM497 458h1v1h-1zM497 459h1v1h-1zM497 460h1v1h-1zM497 461h1v1h-1zM497 462h1v1h-1zM497 465h1v1h-1zM497 467h1v1h-1zM497 469h1v1h-1zM497 470h1v1h-1zM497 472h1v1h-1zM497 474h1v1h-1zM497 476h1v1h-1zM498 429h1v1h-1zM498 432h1v1h-1zM498 433h1v1h-1zM498 436h1v1h-1zM498 439h1v1h-1zM498 443h1v1h-1zM498 446h1v1h-1zM498 447h1v1h-1zM498 449h1v1h-1zM498 451h1v1h-1zM498 455h1v1h-1zM498 458h1v1h-1zM498 460h1v1h-1zM498 463h1v1h-1zM498 464h1v1h-1zM498 465h1v1h-1zM498 466h1v1h-1zM498 467h1v1h-1zM498 469h1v1h-1zM499 424h1v1h-1zM499 425h1v1h-1zM499 428h1v1h-1zM499 429h1v1h-1zM499 430h1v1h-1zM499 433h1v1h-1zM499 434h1v1h-1zM499 436h1v1h-1zM499 440h1v1h-1zM499 441h1v1h-1zM499 444h1v1h-1zM499 451h1v1h-1zM499 453h1v1h-1zM499 456h1v1h-1zM499 457h1v1h-1zM499 459h1v1h-1zM499 460h1v1h-1zM499 465h1v1h-1zM500 416h1v1h-1zM500 417h1v1h-1zM500 420h1v1h-1zM500 423h1v1h-1zM500 429h1v1h-1zM500 435h1v1h-1zM500 437h1v1h-1zM500 445h1v1h-1zM500 453h1v1h-1zM500 454h1v1h-1zM500 456h1v1h-1zM500 457h1v1h-1zM500 458h1v1h-1zM500 461h1v1h-1zM500 470h1v1h-1zM501 419h1v1h-1zM501 426h1v1h-1zM501 427h1v1h-1zM501 430h1v1h-1zM501 434h1v1h-1zM501 436h1v1h-1zM501 439h1v1h-1zM501 440h1v1h-1zM501 442h1v1h-1zM501 444h1v1h-1zM501 447h1v1h-1zM501 448h1v1h-1zM501 450h1v1h-1zM501 453h1v1h-1zM501 454h1v1h-1zM502 405h1v1h-1zM502 406h1v1h-1zM502 409h1v1h-1zM502 421h1v1h-1zM502 426h1v1h-1zM502 427h1v1h-1zM502 428h1v1h-1zM502 430h1v1h-1zM502 434h1v1h-1zM502 437h1v1h-1zM502 439h1v1h-1zM502 443h1v1h-1zM502 444h1v1h-1zM502 446h1v1h-1zM503 393h1v1h-1zM503 401h1v1h-1zM503 404h1v1h-1zM503 405h1v1h-1zM503 406h1v1h-1zM503 407h1v1h-1zM503 408h1v1h-1zM503 411h1v1h-1zM503 412h1v1h-1zM503 413h1v1h-1zM503 414h1v1h-1zM503 420h1v1h-1zM503 421h1v1h-1zM503 423h1v1h-1zM503 424h1v1h-1zM503 427h1v1h-1zM503 431h1v1h-1zM503 433h1v1h-1zM503 439h1v1h-1zM503 447h1v1h-1zM504 389h1v1h-1zM504 398h1v1h-1zM504 406h1v1h-1zM504 408h1v1h-1zM504 413h1v1h-1zM504 416h1v1h-1zM504 417h1v1h-1zM504 418h1v1h-1zM504 423h1v1h-1zM504 425h1v1h-1zM504 426h1v1h-1zM504 427h1v1h-1zM504 429h1v1h-1zM504 430h1v1h-1zM504 433h1v1h-1zM504 437h1v1h-1zM505 384h1v1h-1zM505 385h1v1h-1zM505 399h1v1h-1zM505 400h1v1h-1zM505 403h1v1h-1zM505 408h1v1h-1zM505 409h1v1h-1zM505 410h1v1h-1zM505 413h1v1h-1zM505 414h1v1h-1zM505 415h1v1h-1zM505 416h1v1h-1zM505 417h1v1h-1zM505 418h1v1h-1zM505 420h1v1h-1zM505 421h1v1h-1zM505 423h1v1h-1zM505 424h1v1h-1zM505 426h1v1h-1zM505 427h1v1h-1zM505 429h1v1h-1zM506 375h1v1h-1zM506 379h1v1h-1zM506 380h1v1h-1zM506 385h1v1h-1zM506 386h1v1h-1zM506 387h1v1h-1zM506 388h1v1h-1zM506 393h1v1h-1zM506 396h1v1h-1zM506 398h1v1h-1zM506 399h1v1h-1zM506 400h1v1h-1zM506 402h1v1h-1zM506 403h1v1h-1zM506 405h1v1h-1zM506 406h1v1h-1zM506 407h1v1h-1zM506 409h1v1h-1zM506 410h1v1h-1zM506 413h1v1h-1zM506 414h1v1h-1zM506 415h1v1h-1zM506 418h1v1h-1zM506 419h1v1h-1zM506 420h1v1h-1zM506 421h1v1h-1zM506 422h1v1h-1zM507 368h1v1h-1zM507 372h1v1h-1zM507 375h1v1h-1zM507 377h1v1h-1zM507 380h1v1h-1zM507 381h1v1h-1zM507 383h1v1h-1zM507 384h1v1h-1zM507 387h1v1h-1zM507 390h1v1h-1zM507 391h1v1h-1zM507 393h1v1h-1zM507 394h1v1h-1zM507 397h1v1h-1zM507 398h1v1h-1zM507 402h1v1h-1zM507 403h1v1h-1zM507 408h1v1h-1zM507 411h1v1h-1zM507 413h1v1h-1zM507 414h1v1h-1zM507 415h1v1h-1zM508 347h1v1h-1zM508 358h1v1h-1zM508 359h1v1h-1zM508 360h1v1h-1zM508 364h1v1h-1zM508 366h1v1h-1zM508 367h1v1h-1zM508 369h1v1h-1zM508 371h1v1h-1zM508 374h1v1h-1zM508 381h1v1h-1zM508 382h1v1h-1zM508 384h1v1h-1zM508 387h1v1h-1zM508 388h1v1h-1zM508 389h1v1h-1zM508 391h1v1h-1zM508 393h1v1h-1zM508 394h1v1h-1zM508 396h1v1h-1zM508 398h1v1h-1zM508 399h1v1h-1zM508 402h1v1h-1zM508 404h1v1h-1zM508 405h1v1h-1zM508 411h1v1h-1zM509 345h1v1h-1zM509 349h1v1h-1zM509 353h1v1h-1zM509 359h1v1h-1zM509 360h1v1h-1zM509 361h1v1h-1zM509 362h1v1h-1zM509 367h1v1h-1zM509 368h1v1h-1zM509 371h1v1h-1zM509 378h1v1h-1zM509 382h1v1h-1zM509 384h1v1h-1zM509 386h1v1h-1zM509 396h1v1h-1zM509 397h1v1h-1zM509 400h1v1h-1zM509 402h1v1h-1zM509 405h1v1h-1zM510 345h1v1h-1zM510 347h1v1h-1zM510 348h1v1h-1zM510 351h1v1h-1zM510 354h1v1h-1zM510 359h1v1h-1zM510 363h1v1h-1zM510 365h1v1h-1zM510 367h1v1h-1zM510 369h1v1h-1zM510 380h1v1h-1zM510 385h1v1h-1zM510 388h1v1h-1zM510 389h1v1h-1zM510 390h1v1h-1zM510 399h1v1h-1zM510 402h1v1h-1zM511 337h1v1h-1zM511 338h1v1h-1zM511 340h1v1h-1zM511 341h1v1h-1zM511 343h1v1h-1zM511 344h1v1h-1zM511 345h1v1h-1zM511 346h1v1h-1zM511 347h1v1h-1zM511 348h1v1h-1zM511 349h1v1h-1zM511 353h1v1h-1zM511 354h1v1h-1zM511 355h1v1h-1zM511 362h1v1h-1zM511 364h1v1h-1zM511 366h1v1h-1zM511 367h1v1h-1zM511 368h1v1h-1zM511 369h1v1h-1zM511 371h1v1h-1zM511 372h1v1h-1zM511 374h1v1h-1zM511 376h1v1h-1zM511 377h1v1h-1zM511 379h1v1h-1zM511 380h1v1h-1zM511 381h1v1h-1zM511 382h1v1h-1zM511 383h1v1h-1zM511 389h1v1h-1zM511 390h1v1h-1zM511 391h1v1h-1zM511 398h1v1h-1zM512 334h1v1h-1zM512 336h1v1h-1zM512 338h1v1h-1zM512 339h1v1h-1zM512 341h1v1h-1zM512 346h1v1h-1zM512 350h1v1h-1zM512 352h1v1h-1zM512 353h1v1h-1zM512 354h1v1h-1zM512 356h1v1h-1zM512 357h1v1h-1zM512 358h1v1h-1zM512 359h1v1h-1zM512 361h1v1h-1zM512 362h1v1h-1zM512 364h1v1h-1zM512 369h1v1h-1zM512 371h1v1h-1zM512 374h1v1h-1zM512 376h1v1h-1zM512 380h1v1h-1zM512 381h1v1h-1zM512 382h1v1h-1zM513 329h1v1h-1zM513 330h1v1h-1zM513 331h1v1h-1zM513 333h1v1h-1zM513 334h1v1h-1zM513 335h1v1h-1zM513 336h1v1h-1zM513 339h1v1h-1zM513 341h1v1h-1zM513 344h1v1h-1zM513 345h1v1h-1zM513 347h1v1h-1zM513 348h1v1h-1zM513 349h1v1h-1zM513 350h1v1h-1zM513 351h1v1h-1zM513 353h1v1h-1zM513 354h1v1h-1zM513 356h1v1h-1zM513 358h1v1h-1zM513 359h1v1h-1zM513 361h1v1h-1zM513 363h1v1h-1zM513 365h1v1h-1zM513 366h1v1h-1zM513 369h1v1h-1zM513 373h1v1h-1zM514 312h1v1h-1zM514 326h1v1h-1zM514 327h1v1h-1zM514 328h1v1h-1zM514 329h1v1h-1zM514 330h1v1h-1zM514 333h1v1h-1zM514 335h1v1h-1zM514 336h1v1h-1zM514 337h1v1h-1zM514 343h1v1h-1zM514 344h1v1h-1zM514 346h1v1h-1zM514 347h1v1h-1zM514 349h1v1h-1zM514 350h1v1h-1zM514 351h1v1h-1zM514 357h1v1h-1zM514 359h1v1h-1zM514 361h1v1h-1zM514 368h1v1h-1zM515 311h1v1h-1zM515 315h1v1h-1zM515 316h1v1h-1zM515 317h1v1h-1zM515 318h1v1h-1zM515 320h1v1h-1zM515 321h1v1h-1zM515 323h1v1h-1zM515 325h1v1h-1zM515 328h1v1h-1zM515 329h1v1h-1zM515 331h1v1h-1zM515 332h1v1h-1zM515 333h1v1h-1zM515 334h1v1h-1zM515 337h1v1h-1zM515 339h1v1h-1zM515 341h1v1h-1zM515 343h1v1h-1zM515 344h1v1h-1zM515 348h1v1h-1zM515 349h1v1h-1zM515 352h1v1h-1zM516 292h1v1h-1zM516 301h1v1h-1zM516 303h1v1h-1zM516 307h1v1h-1zM516 308h1v1h-1zM516 311h1v1h-1zM516 315h1v1h-1zM516 317h1v1h-1zM516 319h1v1h-1zM516 320h1v1h-1zM516 321h1v1h-1zM516 323h1v1h-1zM516 325h1v1h-1zM516 327h1v1h-1zM516 332h1v1h-1zM516 334h1v1h-1zM516 335h1v1h-1zM516 338h1v1h-1zM516 340h1v1h-1zM516 342h1v1h-1zM516 344h1v1h-1zM516 345h1v1h-1zM516 352h1v1h-1zM517 286h1v1h-1zM517 299h1v1h-1zM517 305h1v1h-1zM517 307h1v1h-1zM517 309h1v1h-1zM517 311h1v1h-1zM517 312h1v1h-1zM517 313h1v1h-1zM517 314h1v1h-1zM517 315h1v1h-1zM517 317h1v1h-1zM517 319h1v1h-1zM517 320h1v1h-1zM517 321h1v1h-1zM517 322h1v1h-1zM517 325h1v1h-1zM517 327h1v1h-1zM517 330h1v1h-1zM517 339h1v1h-1zM517 340h1v1h-1zM517 341h1v1h-1zM517 344h1v1h-1zM518 296h1v1h-1zM518 297h1v1h-1zM518 300h1v1h-1zM518 305h1v1h-1zM518 308h1v1h-1zM518 310h1v1h-1zM518 312h1v1h-1zM518 314h1v1h-1zM518 315h1v1h-1zM518 329h1v1h-1zM518 332h1v1h-1zM518 333h1v1h-1zM518 335h1v1h-1zM518 341h1v1h-1zM519 278h1v1h-1zM519 280h1v1h-1zM519 281h1v1h-1zM519 282h1v1h-1zM519 284h1v1h-1zM519 286h1v1h-1zM519 288h1v1h-1zM519 296h1v1h-1zM519 297h1v1h-1zM519 299h1v1h-1zM519 300h1v1h-1zM519 301h1v1h-1zM519 302h1v1h-1zM519 307h1v1h-1zM519 308h1v1h-1zM519 311h1v1h-1zM519 312h1v1h-1zM519 313h1v1h-1zM519 314h1v1h-1zM519 315h1v1h-1zM519 322h1v1h-1zM519 325h1v1h-1zM519 326h1v1h-1zM519 328h1v1h-1zM519 332h1v1h-1zM520 272h1v1h-1zM520 274h1v1h-1zM520 278h1v1h-1zM520 279h1v1h-1zM520 282h1v1h-1zM520 284h1v1h-1zM520 286h1v1h-1zM520 287h1v1h-1zM520 289h1v1h-1zM520 292h1v1h-1zM520 294h1v1h-1zM520 296h1v1h-1zM520 301h1v1h-1zM520 302h1v1h-1zM520 303h1v1h-1zM520 304h1v1h-1zM520 305h1v1h-1zM520 306h1v1h-1zM520 307h1v1h-1zM520 308h1v1h-1zM520 312h1v1h-1zM520 313h1v1h-1zM520 314h1v1h-1zM520 318h1v1h-1zM520 320h1v1h-1zM520 321h1v1h-1zM520 324h1v1h-1zM520 326h1v1h-1zM520 330h1v1h-1zM521 263h1v1h-1zM521 270h1v1h-1zM521 271h1v1h-1zM521 272h1v1h-1zM521 274h1v1h-1zM521 276h1v1h-1zM521 278h1v1h-1zM521 281h1v1h-1zM521 283h1v1h-1zM521 284h1v1h-1zM521 285h1v1h-1zM521 289h1v1h-1zM521 290h1v1h-1zM521 295h1v1h-1zM521 297h1v1h-1zM521 298h1v1h-1zM521 301h1v1h-1zM521 304h1v1h-1zM521 310h1v1h-1zM521 311h1v1h-1zM522 257h1v1h-1zM522 259h1v1h-1zM522 262h1v1h-1zM522 263h1v1h-1zM522 266h1v1h-1zM522 268h1v1h-1zM522 270h1v1h-1zM522 272h1v1h-1zM522 276h1v1h-1zM522 277h1v1h-1zM522 278h1v1h-1zM522 281h1v1h-1zM522 284h1v1h-1zM522 285h1v1h-1zM522 286h1v1h-1zM522 287h1v1h-1zM522 292h1v1h-1zM522 293h1v1h-1zM522 294h1v1h-1zM522 295h1v1h-1zM522 298h1v1h-1zM522 300h1v1h-1zM522 302h1v1h-1zM522 304h1v1h-1zM522 305h1v1h-1zM522 311h1v1h-1zM523 250h1v1h-1zM523 254h1v1h-1zM523 255h1v1h-1zM523 259h1v1h-1zM523 262h1v1h-1zM523 263h1v1h-1zM523 264h1v1h-1zM523 267h1v1h-1zM523 271h1v1h-1zM523 272h1v1h-1zM523 274h1v1h-1zM523 275h1v1h-1zM523 278h1v1h-1zM523 279h1v1h-1zM523 282h1v1h-1zM523 284h1v1h-1zM523 285h1v1h-1zM523 287h1v1h-1zM523 288h1v1h-1zM523 290h1v1h-1zM523 291h1v1h-1zM523 294h1v1h-1zM523 296h1v1h-1zM524 245h1v1h-1zM524 250h1v1h-1zM524 251h1v1h-1zM524 254h1v1h-1zM524 256h1v1h-1zM524 259h1v1h-1zM524 261h1v1h-1zM524 262h1v1h-1zM524 264h1v1h-1zM524 266h1v1h-1zM524 267h1v1h-1zM524 269h1v1h-1zM524 272h1v1h-1zM524 273h1v1h-1zM524 274h1v1h-1zM524 275h1v1h-1zM524 276h1v1h-1zM524 277h1v1h-1zM524 279h1v1h-1zM524 282h1v1h-1zM524 285h1v1h-1zM524 286h1v1h-1zM525 241h1v1h-1zM525 245h1v1h-1zM525 248h1v1h-1zM525 251h1v1h-1zM525 254h1v1h-1zM525 255h1v1h-1zM525 257h1v1h-1zM525 266h1v1h-1zM525 267h1v1h-1zM525 270h1v1h-1zM525 271h1v1h-1zM525 272h1v1h-1zM525 273h1v1h-1zM525 275h1v1h-1zM525 279h1v1h-1zM525 280h1v1h-1zM525 282h1v1h-1zM525 283h1v1h-1zM525 284h1v1h-1zM526 238h1v1h-1zM526 246h1v1h-1zM526 248h1v1h-1zM526 249h1v1h-1zM526 252h1v1h-1zM526 253h1v1h-1zM526 254h1v1h-1zM526 256h1v1h-1zM526 257h1v1h-1zM526 258h1v1h-1zM526 259h1v1h-1zM526 262h1v1h-1zM526 263h1v1h-1zM526 265h1v1h-1zM526 266h1v1h-1zM526 271h1v1h-1zM526 274h1v1h-1zM526 275h1v1h-1zM526 279h1v1h-1zM526 282h1v1h-1zM527 230h1v1h-1zM527 237h1v1h-1zM527 239h1v1h-1zM527 241h1v1h-1zM527 242h1v1h-1zM527 246h1v1h-1zM527 249h1v1h-1zM527 250h1v1h-1zM527 252h1v1h-1zM527 253h1v1h-1zM527 254h1v1h-1zM527 257h1v1h-1zM527 258h1v1h-1zM527 259h1v1h-1zM527 260h1v1h-1zM527 261h1v1h-1zM527 262h1v1h-1zM527 268h1v1h-1zM527 269h1v1h-1zM527 270h1v1h-1zM527 271h1v1h-1zM527 275h1v1h-1zM528 226h1v1h-1zM528 228h1v1h-1zM528 230h1v1h-1zM528 233h1v1h-1zM528 236h1v1h-1zM528 237h1v1h-1zM528 239h1v1h-1zM528 242h1v1h-1zM528 243h1v1h-1zM528 247h1v1h-1zM528 250h1v1h-1zM528 253h1v1h-1zM528 254h1v1h-1zM528 258h1v1h-1zM529 218h1v1h-1zM529 222h1v1h-1zM529 224h1v1h-1zM529 225h1v1h-1zM529 226h1v1h-1zM529 227h1v1h-1zM529 229h1v1h-1zM529 230h1v1h-1zM529 232h1v1h-1zM529 233h1v1h-1zM529 253h1v1h-1zM529 260h1v1h-1zM530 213h1v1h-1zM530 217h1v1h-1zM530 219h1v1h-1zM530 220h1v1h-1zM530 228h1v1h-1zM530 229h1v1h-1zM530 230h1v1h-1zM530 231h1v1h-1zM530 232h1v1h-1zM530 233h1v1h-1zM530 234h1v1h-1zM530 235h1v1h-1zM530 236h1v1h-1zM530 238h1v1h-1zM530 239h1v1h-1zM530 241h1v1h-1zM530 244h1v1h-1zM530 245h1v1h-1zM530 256h1v1h-1zM531 210h1v1h-1zM531 212h1v1h-1zM531 213h1v1h-1zM531 215h1v1h-1zM531 216h1v1h-1zM531 217h1v1h-1zM531 218h1v1h-1zM531 220h1v1h-1zM531 221h1v1h-1zM531 222h1v1h-1zM531 223h1v1h-1zM531 225h1v1h-1zM531 228h1v1h-1zM531 229h1v1h-1zM531 230h1v1h-1zM531 234h1v1h-1zM531 237h1v1h-1zM531 238h1v1h-1zM531 239h1v1h-1zM531 240h1v1h-1zM531 242h1v1h-1zM531 245h1v1h-1zM531 249h1v1h-1zM532 194h1v1h-1zM532 202h1v1h-1zM532 208h1v1h-1zM532 212h1v1h-1zM532 215h1v1h-1zM532 216h1v1h-1zM532 217h1v1h-1zM532 218h1v1h-1zM532 219h1v1h-1zM532 220h1v1h-1zM532 221h1v1h-1zM532 223h1v1h-1zM532 228h1v1h-1zM532 229h1v1h-1zM532 231h1v1h-1zM532 232h1v1h-1zM532 233h1v1h-1zM532 234h1v1h-1zM532 235h1v1h-1zM532 238h1v1h-1zM532 239h1v1h-1zM533 201h1v1h-1zM533 206h1v1h-1zM533 212h1v1h-1zM533 213h1v1h-1zM533 214h1v1h-1zM533 215h1v1h-1zM533 217h1v1h-1zM533 218h1v1h-1zM533 219h1v1h-1zM533 220h1v1h-1zM533 222h1v1h-1zM533 227h1v1h-1zM533 228h1v1h-1zM533 230h1v1h-1zM533 232h1v1h-1zM533 235h1v1h-1zM533 245h1v1h-1zM534 195h1v1h-1zM534 196h1v1h-1zM534 197h1v1h-1zM534 200h1v1h-1zM534 201h1v1h-1zM534 204h1v1h-1zM534 205h1v1h-1zM534 206h1v1h-1zM534 207h1v1h-1zM534 208h1v1h-1zM534 214h1v1h-1zM534 215h1v1h-1zM534 216h1v1h-1zM534 218h1v1h-1zM534 219h1v1h-1zM534 220h1v1h-1zM534 224h1v1h-1zM534 226h1v1h-1zM534 228h1v1h-1zM535 193h1v1h-1zM535 198h1v1h-1zM535 200h1v1h-1zM535 201h1v1h-1zM535 209h1v1h-1zM535 210h1v1h-1zM535 213h1v1h-1zM535 215h1v1h-1zM535 222h1v1h-1zM535 223h1v1h-1zM536 187h1v1h-1zM536 189h1v1h-1zM536 190h1v1h-1zM536 192h1v1h-1zM536 193h1v1h-1zM536 197h1v1h-1zM536 202h1v1h-1zM536 206h1v1h-1zM536 207h1v1h-1zM536 209h1v1h-1zM536 210h1v1h-1zM536 212h1v1h-1zM536 216h1v1h-1zM536 221h1v1h-1zM537 184h1v1h-1zM537 192h1v1h-1zM537 194h1v1h-1zM537 197h1v1h-1zM537 201h1v1h-1zM537 203h1v1h-1zM537 205h1v1h-1zM537 208h1v1h-1zM537 209h1v1h-1zM537 213h1v1h-1zM537 214h1v1h-1zM537 215h1v1h-1zM538 184h1v1h-1zM538 186h1v1h-1zM538 187h1v1h-1zM538 188h1v1h-1zM538 189h1v1h-1zM538 191h1v1h-1zM538 193h1v1h-1zM538 194h1v1h-1zM538 195h1v1h-1zM538 196h1v1h-1zM538 198h1v1h-1zM538 200h1v1h-1zM538 201h1v1h-1zM538 203h1v1h-1zM538 205h1v1h-1zM538 206h1v1h-1zM538 209h1v1h-1zM539 181h1v1h-1zM539 183h1v1h-1zM539 184h1v1h-1zM539 188h1v1h-1zM539 189h1v1h-1zM539 190h1v1h-1zM539 191h1v1h-1zM539 193h1v1h-1zM539 198h1v1h-1zM539 200h1v1h-1zM539 201h1v1h-1zM540 186h1v1h-1zM540 187h1v1h-1zM540 189h1v1h-1zM540 191h1v1h-1zM540 196h1v1h-1zM540 198h1v1h-1zM540 201h1v1h-1zM541 179h1v1h-1zM541 182h1v1h-1zM541 183h1v1h-1zM541 185h1v1h-1zM541 186h1v1h-1zM541 187h1v1h-1zM541 188h1v1h-1zM541 191h1v1h-1zM541 193h1v1h-1zM541 197h1v1h-1zM541 198h1v1h-1zM541 200h1v1h-1zM542 174h1v1h-1zM542 177h1v1h-1zM542 179h1v1h-1zM542 180h1v1h-1zM542 182h1v1h-1zM542 185h1v1h-1zM542 187h1v1h-1zM542 188h1v1h-1zM542 190h1v1h-1zM542 191h1v1h-1zM542 192h1v1h-1zM542 193h1v1h-1zM542 195h1v1h-1zM542 198h1v1h-1zM542 200h1v1h-1zM543 173h1v1h-1zM543 174h1v1h-1zM543 176h1v1h-1zM543 177h1v1h-1zM543 178h1v1h-1zM543 180h1v1h-1zM543 182h1v1h-1zM543 183h1v1h-1zM543 184h1v1h-1zM543 185h1v1h-1zM543 186h1v1h-1zM543 187h1v1h-1zM543 190h1v1h-1zM543 191h1v1h-1zM544 174h1v1h-1zM544 175h1v1h-1zM544 176h1v1h-1zM544 177h1v1h-1zM544 181h1v1h-1zM544 183h1v1h-1zM544 185h1v1h-1zM544 186h1v1h-1zM544 187h1v1h-1zM544 188h1v1h-1zM544 190h1v1h-1zM544 191h1v1h-1zM545 174h1v1h-1zM545 179h1v1h-1zM545 181h1v1h-1zM545 182h1v1h-1zM545 185h1v1h-1zM545 186h1v1h-1zM545 188h1v1h-1zM546 172h1v1h-1zM546 173h1v1h-1zM546 174h1v1h-1zM546 176h1v1h-1zM546 177h1v1h-1zM546 180h1v1h-1zM546 181h1v1h-1zM546 183h1v1h-1zM546 184h1v1h-1zM546 188h1v1h-1zM547 173h1v1h-1zM547 177h1v1h-1zM547 179h1v1h-1zM547 180h1v1h-1zM547 181h1v1h-1zM547 186h1v1h-1zM548 168h1v1h-1zM548 173h1v1h-1zM548 174h1v1h-1zM548 176h1v1h-1zM548 177h1v1h-1zM548 178h1v1h-1zM548 180h1v1h-1zM548 182h1v1h-1zM548 184h1v1h-1zM548 186h1v1h-1zM548 187h1v1h-1zM548 188h1v1h-1zM549 171h1v1h-1zM549 174h1v1h-1zM549 179h1v1h-1zM549 180h1v1h-1zM549 182h1v1h-1zM549 185h1v1h-1zM550 173h1v1h-1zM550 174h1v1h-1zM550 178h1v1h-1zM550 182h1v1h-1zM550 183h1v1h-1zM550 185h1v1h-1zM551 171h1v1h-1zM551 174h1v1h-1zM551 176h1v1h-1zM551 180h1v1h-1zM551 182h1v1h-1zM551 183h1v1h-1zM551 184h1v1h-1zM551 185h1v1h-1zM552 175h1v1h-1zM552 176h1v1h-1zM552 177h1v1h-1zM552 178h1v1h-1zM552 179h1v1h-1zM552 181h1v1h-1zM552 182h1v1h-1zM552 183h1v1h-1zM552 184h1v1h-1zM553 170h1v1h-1zM553 171h1v1h-1zM553 173h1v1h-1zM553 174h1v1h-1zM553 175h1v1h-1zM553 176h1v1h-1zM553 178h1v1h-1zM553 179h1v1h-1zM553 180h1v1h-1zM553 181h1v1h-1zM553 182h1v1h-1zM553 183h1v1h-1zM553 185h1v1h-1zM554 170h1v1h-1zM554 173h1v1h-1zM554 176h1v1h-1zM554 178h1v1h-1zM554 179h1v1h-1zM554 180h1v1h-1zM554 182h1v1h-1zM554 183h1v1h-1zM555 171h1v1h-1zM555 173h1v1h-1zM555 174h1v1h-1zM555 177h1v1h-1zM555 179h1v1h-1zM555 180h1v1h-1zM555 182h1v1h-1zM555 183h1v1h-1zM556 170h1v1h-1zM556 172h1v1h-1zM556 177h1v1h-1zM556 178h1v1h-1zM556 179h1v1h-1zM556 183h1v1h-1zM557 171h1v1h-1zM557 173h1v1h-1zM557 176h1v1h-1zM557 177h1v1h-1zM557 178h1v1h-1zM557 179h1v1h-1zM557 180h1v1h-1zM557 181h1v1h-1zM557 182h1v1h-1zM558 173h1v1h-1zM558 174h1v1h-1zM558 175h1v1h-1zM558 176h1v1h-1zM558 178h1v1h-1zM559 172h1v1h-1zM559 174h1v1h-1zM559 177h1v1h-1zM559 179h1v1h-1zM559 181h1v1h-1zM559 183h1v1h-1zM559 184h1v1h-1zM560 171h1v1h-1zM560 175h1v1h-1zM560 176h1v1h-1zM560 180h1v1h-1zM560 183h1v1h-1zM560 185h1v1h-1zM561 172h1v1h-1zM561 175h1v1h-1zM561 177h1v1h-1zM561 179h1v1h-1zM561 180h1v1h-1zM561 184h1v1h-1zM562 172h1v1h-1zM562 173h1v1h-1zM562 177h1v1h-1zM562 181h1v1h-1zM563 173h1v1h-1zM563 174h1v1h-1zM563 175h1v1h-1zM563 176h1v1h-1zM563 179h1v1h-1zM563 181h1v1h-1zM563 182h1v1h-1zM563 183h1v1h-1zM563 184h1v1h-1zM564 167h1v1h-1zM564 170h1v1h-1zM564 172h1v1h-1zM564 173h1v1h-1zM564 174h1v1h-1zM564 176h1v1h-1zM564 178h1v1h-1zM564 181h1v1h-1zM564 182h1v1h-1zM565 171h1v1h-1zM565 172h1v1h-1zM565 175h1v1h-1zM565 176h1v1h-1zM565 181h1v1h-1zM565 182h1v1h-1zM565 183h1v1h-1zM565 184h1v1h-1zM566 170h1v1h-1zM566 172h1v1h-1zM566 173h1v1h-1zM566 174h1v1h-1zM566 175h1v1h-1zM566 178h1v1h-1zM566 179h1v1h-1zM566 182h1v1h-1zM566 183h1v1h-1zM566 184h1v1h-1zM566 185h1v1h-1zM567 176h1v1h-1zM567 178h1v1h-1zM567 179h1v1h-1zM567 181h1v1h-1zM567 183h1v1h-1zM567 185h1v1h-1zM568 171h1v1h-1zM568 172h1v1h-1zM568 174h1v1h-1zM568 177h1v1h-1zM568 181h1v1h-1zM568 183h1v1h-1zM569 173h1v1h-1zM569 176h1v1h-1zM569 178h1v1h-1zM569 181h1v1h-1zM569 183h1v1h-1zM570 174h1v1h-1zM570 175h1v1h-1zM570 176h1v1h-1zM570 178h1v1h-1zM570 180h1v1h-1zM570 182h1v1h-1zM570 183h1v1h-1zM570 187h1v1h-1zM571 173h1v1h-1zM571 175h1v1h-1zM571 179h1v1h-1zM571 180h1v1h-1zM571 182h1v1h-1zM571 183h1v1h-1zM571 184h1v1h-1zM572 173h1v1h-1zM572 174h1v1h-1zM572 175h1v1h-1zM572 180h1v1h-1zM572 182h1v1h-1zM572 185h1v1h-1zM573 175h1v1h-1zM573 179h1v1h-1zM573 180h1v1h-1zM573 181h1v1h-1zM573 182h1v1h-1zM573 183h1v1h-1zM573 184h1v1h-1zM574 172h1v1h-1zM574 173h1v1h-1zM574 176h1v1h-1zM574 178h1v1h-1zM574 180h1v1h-1zM574 181h1v1h-1zM574 182h1v1h-1zM574 184h1v1h-1zM574 185h1v1h-1zM574 186h1v1h-1zM574 187h1v1h-1zM575 171h1v1h-1zM575 174h1v1h-1zM575 175h1v1h-1zM575 178h1v1h-1zM575 180h1v1h-1zM575 181h1v1h-1zM575 182h1v1h-1zM575 183h1v1h-1zM575 184h1v1h-1zM575 185h1v1h-1zM576 172h1v1h-1zM576 173h1v1h-1zM576 174h1v1h-1zM576 175h1v1h-1zM576 176h1v1h-1zM576 179h1v1h-1zM576 180h1v1h-1zM576 183h1v1h-1zM576 184h1v1h-1zM577 169h1v1h-1zM577 170h1v1h-1zM577 171h1v1h-1zM577 172h1v1h-1zM577 176h1v1h-1zM577 178h1v1h-1zM577 179h1v1h-1zM577 182h1v1h-1zM577 183h1v1h-1zM577 189h1v1h-1zM578 169h1v1h-1zM578 170h1v1h-1zM578 172h1v1h-1zM578 179h1v1h-1zM578 181h1v1h-1zM578 185h1v1h-1zM579 168h1v1h-1zM579 170h1v1h-1zM579 172h1v1h-1zM579 174h1v1h-1zM579 179h1v1h-1zM579 181h1v1h-1zM580 170h1v1h-1zM580 171h1v1h-1zM580 177h1v1h-1zM580 178h1v1h-1zM580 180h1v1h-1zM580 181h1v1h-1zM580 182h1v1h-1zM581 170h1v1h-1zM581 171h1v1h-1zM581 174h1v1h-1zM581 177h1v1h-1zM581 178h1v1h-1zM581 179h1v1h-1zM581 180h1v1h-1zM582 167h1v1h-1zM582 171h1v1h-1zM582 173h1v1h-1zM582 174h1v1h-1zM582 177h1v1h-1zM582 178h1v1h-1zM582 179h1v1h-1zM582 181h1v1h-1zM582 182h1v1h-1zM583 169h1v1h-1zM583 170h1v1h-1zM583 174h1v1h-1zM583 175h1v1h-1zM583 176h1v1h-1zM583 178h1v1h-1zM583 180h1v1h-1zM584 162h1v1h-1zM584 167h1v1h-1zM584 168h1v1h-1zM584 170h1v1h-1zM584 172h1v1h-1zM584 174h1v1h-1zM584 178h1v1h-1zM584 179h1v1h-1zM584 180h1v1h-1zM584 185h1v1h-1zM585 164h1v1h-1zM585 167h1v1h-1zM585 168h1v1h-1zM585 169h1v1h-1zM585 170h1v1h-1zM585 171h1v1h-1zM585 172h1v1h-1zM585 174h1v1h-1zM585 175h1v1h-1zM585 177h1v1h-1zM585 179h1v1h-1zM586 166h1v1h-1zM586 168h1v1h-1zM586 169h1v1h-1zM586 171h1v1h-1zM586 172h1v1h-1zM586 173h1v1h-1zM586 177h1v1h-1zM587 165h1v1h-1zM587 169h1v1h-1zM587 170h1v1h-1zM587 175h1v1h-1zM588 163h1v1h-1zM588 164h1v1h-1zM588 167h1v1h-1zM588 168h1v1h-1zM588 170h1v1h-1zM588 173h1v1h-1zM588 174h1v1h-1zM589 160h1v1h-1zM589 165h1v1h-1zM589 166h1v1h-1zM589 168h1v1h-1zM589 169h1v1h-1zM589 170h1v1h-1zM589 178h1v1h-1zM590 160h1v1h-1zM590 161h1v1h-1zM590 163h1v1h-1zM590 165h1v1h-1zM590 167h1v1h-1zM590 170h1v1h-1zM590 172h1v1h-1zM590 173h1v1h-1zM590 175h1v1h-1zM591 159h1v1h-1zM591 162h1v1h-1zM591 163h1v1h-1zM591 166h1v1h-1zM591 167h1v1h-1zM591 169h1v1h-1zM591 171h1v1h-1zM591 172h1v1h-1zM591 174h1v1h-1zM592 158h1v1h-1zM592 160h1v1h-1zM592 162h1v1h-1zM592 167h1v1h-1zM592 169h1v1h-1zM592 170h1v1h-1zM592 174h1v1h-1zM593 157h1v1h-1zM593 159h1v1h-1zM593 160h1v1h-1zM593 161h1v1h-1zM593 162h1v1h-1zM593 163h1v1h-1zM593 165h1v1h-1zM593 166h1v1h-1zM593 168h1v1h-1zM593 172h1v1h-1zM593 173h1v1h-1zM594 154h1v1h-1zM594 155h1v1h-1zM594 156h1v1h-1zM594 158h1v1h-1zM594 159h1v1h-1zM594 161h1v1h-1zM594 169h1v1h-1zM594 171h1v1h-1zM595 155h1v1h-1zM595 158h1v1h-1zM595 160h1v1h-1zM595 161h1v1h-1zM595 162h1v1h-1zM595 164h1v1h-1zM595 165h1v1h-1zM595 166h1v1h-1zM595 167h1v1h-1zM595 170h1v1h-1zM595 171h1v1h-1zM596 153h1v1h-1zM596 156h1v1h-1zM596 159h1v1h-1zM596 162h1v1h-1zM596 163h1v1h-1zM596 165h1v1h-1zM596 166h1v1h-1zM596 167h1v1h-1zM596 168h1v1h-1zM596 170h1v1h-1zM597 151h1v1h-1zM597 155h1v1h-1zM597 159h1v1h-1zM597 161h1v1h-1zM597 162h1v1h-1zM597 168h1v1h-1zM598 150h1v1h-1zM598 153h1v1h-1zM598 154h1v1h-1zM598 155h1v1h-1zM598 158h1v1h-1zM598 159h1v1h-1zM598 160h1v1h-1zM598 163h1v1h-1zM598 164h1v1h-1zM598 167h1v1h-1zM598 168h1v1h-1zM599 149h1v1h-1zM599 156h1v1h-1zM599 157h1v1h-1zM599 158h1v1h-1zM599 160h1v1h-1zM599 163h1v1h-1zM600 147h1v1h-1zM600 149h1v1h-1zM600 150h1v1h-1zM600 153h1v1h-1zM600 160h1v1h-1zM600 161h1v1h-1zM600 165h1v1h-1zM601 144h1v1h-1zM601 147h1v1h-1zM601 149h1v1h-1zM601 153h1v1h-1zM601 154h1v1h-1zM601 155h1v1h-1zM601 156h1v1h-1zM601 159h1v1h-1zM601 161h1v1h-1zM601 163h1v1h-1zM601 165h1v1h-1zM602 144h1v1h-1zM602 147h1v1h-1zM602 148h1v1h-1zM602 149h1v1h-1zM602 151h1v1h-1zM602 153h1v1h-1zM602 155h1v1h-1zM602 157h1v1h-1zM602 159h1v1h-1zM602 160h1v1h-1zM602 161h1v1h-1zM603 146h1v1h-1zM603 148h1v1h-1zM603 149h1v1h-1zM603 151h1v1h-1zM603 154h1v1h-1zM603 156h1v1h-1zM603 157h1v1h-1zM603 158h1v1h-1zM603 159h1v1h-1zM604 147h1v1h-1zM604 149h1v1h-1zM604 150h1v1h-1zM604 151h1v1h-1zM604 152h1v1h-1zM604 153h1v1h-1zM604 154h1v1h-1zM604 155h1v1h-1zM604 156h1v1h-1zM605 143h1v1h-1zM605 147h1v1h-1zM605 148h1v1h-1zM605 150h1v1h-1zM605 151h1v1h-1zM605 152h1v1h-1zM605 156h1v1h-1zM605 157h1v1h-1zM606 140h1v1h-1zM606 141h1v1h-1zM606 143h1v1h-1zM606 144h1v1h-1zM606 145h1v1h-1zM606 151h1v1h-1zM606 152h1v1h-1zM606 155h1v1h-1zM606 156h1v1h-1zM606 160h1v1h-1zM607 145h1v1h-1zM607 148h1v1h-1zM607 149h1v1h-1zM607 150h1v1h-1zM607 152h1v1h-1zM607 153h1v1h-1zM607 157h1v1h-1zM607 158h1v1h-1zM608 139h1v1h-1zM608 140h1v1h-1zM608 141h1v1h-1zM608 142h1v1h-1zM608 144h1v1h-1zM608 145h1v1h-1zM608 146h1v1h-1zM608 147h1v1h-1zM608 148h1v1h-1zM608 149h1v1h-1zM608 150h1v1h-1zM608 153h1v1h-1zM608 155h1v1h-1zM609 140h1v1h-1zM609 143h1v1h-1zM609 144h1v1h-1zM609 145h1v1h-1zM609 146h1v1h-1zM609 147h1v1h-1zM609 149h1v1h-1zM609 150h1v1h-1zM609 151h1v1h-1zM610 139h1v1h-1zM610 141h1v1h-1zM610 143h1v1h-1zM610 144h1v1h-1zM610 145h1v1h-1zM610 150h1v1h-1zM611 138h1v1h-1zM611 140h1v1h-1zM611 141h1v1h-1zM611 142h1v1h-1zM611 144h1v1h-1zM611 147h1v1h-1zM611 154h1v1h-1zM611 157h1v1h-1zM612 137h1v1h-1zM612 139h1v1h-1zM612 143h1v1h-1zM612 144h1v1h-1zM612 145h1v1h-1zM612 146h1v1h-1zM612 147h1v1h-1zM612 148h1v1h-1zM612 149h1v1h-1zM612 153h1v1h-1zM613 135h1v1h-1zM613 139h1v1h-1zM613 140h1v1h-1zM613 141h1v1h-1zM613 142h1v1h-1zM613 143h1v1h-1zM613 144h1v1h-1zM613 145h1v1h-1zM613 146h1v1h-1zM613 147h1v1h-1zM613 150h1v1h-1zM613 152h1v1h-1zM614 138h1v1h-1zM614 139h1v1h-1zM614 140h1v1h-1zM614 141h1v1h-1zM614 143h1v1h-1zM614 144h1v1h-1zM614 145h1v1h-1zM614 147h1v1h-1zM614 150h1v1h-1zM615 134h1v1h-1zM615 135h1v1h-1zM615 138h1v1h-1zM615 139h1v1h-1zM615 143h1v1h-1zM615 144h1v1h-1zM615 145h1v1h-1zM616 133h1v1h-1zM616 135h1v1h-1zM616 137h1v1h-1zM616 138h1v1h-1zM616 140h1v1h-1zM616 146h1v1h-1zM616 147h1v1h-1zM617 135h1v1h-1zM617 137h1v1h-1zM617 138h1v1h-1zM617 140h1v1h-1zM617 142h1v1h-1zM617 145h1v1h-1zM617 146h1v1h-1zM618 129h1v1h-1zM618 135h1v1h-1zM618 136h1v1h-1zM618 137h1v1h-1zM618 138h1v1h-1zM618 140h1v1h-1zM618 143h1v1h-1zM618 144h1v1h-1zM619 131h1v1h-1zM619 132h1v1h-1zM619 133h1v1h-1zM619 136h1v1h-1zM619 138h1v1h-1zM619 139h1v1h-1zM619 142h1v1h-1zM619 143h1v1h-1zM619 144h1v1h-1zM620 136h1v1h-1zM620 137h1v1h-1zM620 142h1v1h-1zM620 145h1v1h-1zM621 131h1v1h-1zM621 132h1v1h-1zM621 134h1v1h-1zM621 135h1v1h-1zM621 139h1v1h-1zM622 129h1v1h-1zM622 130h1v1h-1zM622 132h1v1h-1zM622 133h1v1h-1zM622 135h1v1h-1zM622 136h1v1h-1zM622 137h1v1h-1zM622 138h1v1h-1zM622 140h1v1h-1zM622 141h1v1h-1zM622 144h1v1h-1zM623 128h1v1h-1zM623 129h1v1h-1zM623 130h1v1h-1zM623 131h1v1h-1zM623 132h1v1h-1zM623 134h1v1h-1zM623 135h1v1h-1zM623 136h1v1h-1zM623 137h1v1h-1zM624 128h1v1h-1zM624 129h1v1h-1zM624 130h1v1h-1zM624 133h1v1h-1zM624 134h1v1h-1zM624 136h1v1h-1zM624 140h1v1h-1zM625 128h1v1h-1zM625 129h1v1h-1zM625 130h1v1h-1zM625 131h1v1h-1zM625 132h1v1h-1zM625 133h1v1h-1zM625 134h1v1h-1zM625 136h1v1h-1zM625 138h1v1h-1zM625 143h1v1h-1zM626 126h1v1h-1zM626 128h1v1h-1zM626 130h1v1h-1zM626 133h1v1h-1zM626 135h1v1h-1zM626 140h1v1h-1zM626 142h1v1h-1zM627 127h1v1h-1zM627 128h1v1h-1zM627 129h1v1h-1zM627 130h1v1h-1zM627 133h1v1h-1zM627 134h1v1h-1zM627 135h1v1h-1zM627 136h1v1h-1zM627 137h1v1h-1zM628 125h1v1h-1zM628 126h1v1h-1zM628 128h1v1h-1zM628 135h1v1h-1zM628 137h1v1h-1zM628 139h1v1h-1zM629 128h1v1h-1zM629 130h1v1h-1zM629 133h1v1h-1zM629 134h1v1h-1zM629 135h1v1h-1zM629 136h1v1h-1zM629 137h1v1h-1zM629 138h1v1h-1zM629 142h1v1h-1zM630 124h1v1h-1zM630 126h1v1h-1zM630 130h1v1h-1zM630 134h1v1h-1zM630 136h1v1h-1zM630 137h1v1h-1zM631 127h1v1h-1zM631 128h1v1h-1zM631 129h1v1h-1zM631 130h1v1h-1zM631 131h1v1h-1zM631 132h1v1h-1zM631 134h1v1h-1zM631 135h1v1h-1zM631 137h1v1h-1zM631 138h1v1h-1zM631 139h1v1h-1zM632 125h1v1h-1zM632 126h1v1h-1zM632 129h1v1h-1zM632 131h1v1h-1zM632 132h1v1h-1zM632 134h1v1h-1zM632 136h1v1h-1zM632 137h1v1h-1zM632 138h1v1h-1zM633 124h1v1h-1zM633 125h1v1h-1zM633 128h1v1h-1zM633 129h1v1h-1zM633 130h1v1h-1zM633 132h1v1h-1zM633 133h1v1h-1zM633 134h1v1h-1zM633 135h1v1h-1zM634 123h1v1h-1zM634 124h1v1h-1zM634 126h1v1h-1zM634 127h1v1h-1zM634 128h1v1h-1zM634 129h1v1h-1zM634 130h1v1h-1zM634 132h1v1h-1zM634 133h1v1h-1zM634 136h1v1h-1zM634 137h1v1h-1zM635 124h1v1h-1zM635 126h1v1h-1zM635 127h1v1h-1zM635 133h1v1h-1zM635 135h1v1h-1zM635 137h1v1h-1zM636 124h1v1h-1zM636 130h1v1h-1zM636 131h1v1h-1zM636 133h1v1h-1zM636 134h1v1h-1zM636 135h1v1h-1zM637 124h1v1h-1zM637 125h1v1h-1zM637 127h1v1h-1zM637 131h1v1h-1zM637 132h1v1h-1zM637 133h1v1h-1zM637 135h1v1h-1zM637 136h1v1h-1zM638 125h1v1h-1zM638 126h1v1h-1zM638 127h1v1h-1zM638 128h1v1h-1zM638 132h1v1h-1zM638 134h1v1h-1zM638 135h1v1h-1zM639 122h1v1h-1zM639 123h1v1h-1zM639 124h1v1h-1zM639 126h1v1h-1zM639 127h1v1h-1zM639 129h1v1h-1zM639 130h1v1h-1zM639 131h1v1h-1zM639 132h1v1h-1zM639 135h1v1h-1zM640 123h1v1h-1zM640 124h1v1h-1zM640 126h1v1h-1zM640 127h1v1h-1zM640 128h1v1h-1zM640 134h1v1h-1zM640 136h1v1h-1zM640 138h1v1h-1zM641 122h1v1h-1zM641 124h1v1h-1zM641 125h1v1h-1zM641 126h1v1h-1zM641 132h1v1h-1zM641 134h1v1h-1zM641 135h1v1h-1zM642 122h1v1h-1zM642 123h1v1h-1zM642 124h1v1h-1zM642 130h1v1h-1zM643 126h1v1h-1zM643 127h1v1h-1zM643 128h1v1h-1zM643 129h1v1h-1zM643 130h1v1h-1zM643 132h1v1h-1zM643 133h1v1h-1zM644 122h1v1h-1zM644 126h1v1h-1zM644 127h1v1h-1zM644 128h1v1h-1zM644 129h1v1h-1zM644 132h1v1h-1zM644 133h1v1h-1zM644 135h1v1h-1zM645 121h1v1h-1zM645 123h1v1h-1zM645 125h1v1h-1zM645 126h1v1h-1zM645 128h1v1h-1zM645 129h1v1h-1zM645 130h1v1h-1zM645 131h1v1h-1zM646 123h1v1h-1zM646 124h1v1h-1zM646 126h1v1h-1zM646 127h1v1h-1zM646 128h1v1h-1zM646 129h1v1h-1zM646 131h1v1h-1zM646 135h1v1h-1zM647 122h1v1h-1zM647 123h1v1h-1zM647 124h1v1h-1zM647 126h1v1h-1zM647 127h1v1h-1zM647 128h1v1h-1zM647 131h1v1h-1zM647 135h1v1h-1zM648 121h1v1h-1zM648 125h1v1h-1zM648 126h1v1h-1zM648 127h1v1h-1zM648 129h1v1h-1zM648 131h1v1h-1zM648 134h1v1h-1zM648 135h1v1h-1zM649 121h1v1h-1zM649 124h1v1h-1zM649 125h1v1h-1zM649 126h1v1h-1zM649 128h1v1h-1zM649 130h1v1h-1zM649 131h1v1h-1zM649 132h1v1h-1zM649 133h1v1h-1zM649 134h1v1h-1zM650 124h1v1h-1zM650 125h1v1h-1zM650 127h1v1h-1zM650 128h1v1h-1zM650 130h1v1h-1zM650 131h1v1h-1zM650 133h1v1h-1zM650 134h1v1h-1zM650 137h1v1h-1zM651 123h1v1h-1zM651 124h1v1h-1zM651 125h1v1h-1zM651 126h1v1h-1zM651 127h1v1h-1zM651 130h1v1h-1zM651 131h1v1h-1zM651 132h1v1h-1zM651 135h1v1h-1zM652 124h1v1h-1zM652 125h1v1h-1zM652 126h1v1h-1zM652 128h1v1h-1zM652 129h1v1h-1zM653 121h1v1h-1zM653 124h1v1h-1zM653 125h1v1h-1zM653 127h1v1h-1zM653 128h1v1h-1zM653 129h1v1h-1zM653 130h1v1h-1zM653 132h1v1h-1zM653 133h1v1h-1zM653 134h1v1h-1zM653 135h1v1h-1zM654 122h1v1h-1zM654 124h1v1h-1zM654 129h1v1h-1zM654 130h1v1h-1zM654 131h1v1h-1zM654 132h1v1h-1zM655 125h1v1h-1zM655 126h1v1h-1zM655 128h1v1h-1zM655 129h1v1h-1zM655 130h1v1h-1zM655 131h1v1h-1zM655 133h1v1h-1zM655 134h1v1h-1zM655 135h1v1h-1zM655 136h1v1h-1zM656 123h1v1h-1zM656 125h1v1h-1zM656 126h1v1h-1zM656 127h1v1h-1zM656 131h1v1h-1zM657 122h1v1h-1zM657 123h1v1h-1zM657 124h1v1h-1zM657 125h1v1h-1zM657 126h1v1h-1zM657 127h1v1h-1zM657 129h1v1h-1zM657 131h1v1h-1zM657 132h1v1h-1zM657 133h1v1h-1zM657 134h1v1h-1zM657 135h1v1h-1zM657 137h1v1h-1zM658 123h1v1h-1zM658 124h1v1h-1zM658 125h1v1h-1zM658 126h1v1h-1zM658 127h1v1h-1zM658 130h1v1h-1zM658 134h1v1h-1zM658 136h1v1h-1zM659 117h1v1h-1zM659 123h1v1h-1zM659 125h1v1h-1zM659 126h1v1h-1zM659 129h1v1h-1zM659 130h1v1h-1zM659 132h1v1h-1zM660 124h1v1h-1zM660 126h1v1h-1zM660 129h1v1h-1zM660 131h1v1h-1zM660 134h1v1h-1zM661 120h1v1h-1zM661 124h1v1h-1zM661 126h1v1h-1zM661 127h1v1h-1zM661 131h1v1h-1zM661 134h1v1h-1zM661 135h1v1h-1zM661 137h1v1h-1zM662 123h1v1h-1zM662 128h1v1h-1zM662 131h1v1h-1zM662 134h1v1h-1zM662 135h1v1h-1zM663 127h1v1h-1zM663 131h1v1h-1zM663 133h1v1h-1zM663 134h1v1h-1zM663 137h1v1h-1zM664 123h1v1h-1zM664 124h1v1h-1zM664 128h1v1h-1zM664 131h1v1h-1zM664 132h1v1h-1zM664 134h1v1h-1zM664 137h1v1h-1zM664 138h1v1h-1zM664 140h1v1h-1zM665 123h1v1h-1zM665 125h1v1h-1zM665 128h1v1h-1zM665 129h1v1h-1zM665 131h1v1h-1zM665 132h1v1h-1zM665 133h1v1h-1zM665 135h1v1h-1zM665 136h1v1h-1zM665 137h1v1h-1zM665 140h1v1h-1zM666 125h1v1h-1zM666 126h1v1h-1zM666 128h1v1h-1zM666 130h1v1h-1zM666 131h1v1h-1zM666 132h1v1h-1zM666 133h1v1h-1zM666 134h1v1h-1zM666 137h1v1h-1zM666 141h1v1h-1zM667 126h1v1h-1zM667 127h1v1h-1zM667 128h1v1h-1zM667 129h1v1h-1zM667 130h1v1h-1zM667 133h1v1h-1zM667 135h1v1h-1zM667 137h1v1h-1zM667 139h1v1h-1zM667 140h1v1h-1zM667 142h1v1h-1zM668 132h1v1h-1zM668 134h1v1h-1zM668 135h1v1h-1zM668 136h1v1h-1zM668 137h1v1h-1zM668 138h1v1h-1zM668 139h1v1h-1zM668 140h1v1h-1zM668 141h1v1h-1zM668 142h1v1h-1zM669 129h1v1h-1zM669 130h1v1h-1zM669 132h1v1h-1zM669 135h1v1h-1zM669 137h1v1h-1zM669 138h1v1h-1zM669 139h1v1h-1zM669 140h1v1h-1zM669 144h1v1h-1zM670 128h1v1h-1zM670 129h1v1h-1zM670 134h1v1h-1zM670 141h1v1h-1zM670 143h1v1h-1zM670 144h1v1h-1zM670 145h1v1h-1zM671 132h1v1h-1zM671 133h1v1h-1zM671 135h1v1h-1zM671 136h1v1h-1zM671 137h1v1h-1zM671 138h1v1h-1zM671 140h1v1h-1zM671 141h1v1h-1zM671 142h1v1h-1zM671 143h1v1h-1zM672 133h1v1h-1zM672 135h1v1h-1zM672 137h1v1h-1zM672 140h1v1h-1zM672 142h1v1h-1zM672 147h1v1h-1zM672 148h1v1h-1zM672 149h1v1h-1zM673 130h1v1h-1zM673 136h1v1h-1zM673 141h1v1h-1zM673 142h1v1h-1zM673 145h1v1h-1zM673 146h1v1h-1zM673 147h1v1h-1zM673 148h1v1h-1zM673 150h1v1h-1zM674 133h1v1h-1zM674 135h1v1h-1zM674 136h1v1h-1zM674 137h1v1h-1zM674 138h1v1h-1zM674 139h1v1h-1zM674 140h1v1h-1zM674 144h1v1h-1zM674 146h1v1h-1zM674 149h1v1h-1zM674 151h1v1h-1zM674 155h1v1h-1zM675 134h1v1h-1zM675 136h1v1h-1zM675 143h1v1h-1zM675 144h1v1h-1zM675 149h1v1h-1zM675 151h1v1h-1zM675 152h1v1h-1zM675 153h1v1h-1zM675 157h1v1h-1zM676 137h1v1h-1zM676 142h1v1h-1zM676 144h1v1h-1zM676 145h1v1h-1zM676 146h1v1h-1zM676 147h1v1h-1zM676 149h1v1h-1zM676 155h1v1h-1zM677 137h1v1h-1zM677 142h1v1h-1zM677 147h1v1h-1zM677 148h1v1h-1zM677 149h1v1h-1zM677 150h1v1h-1zM677 151h1v1h-1zM677 152h1v1h-1zM677 153h1v1h-1zM678 135h1v1h-1zM678 138h1v1h-1zM678 144h1v1h-1zM678 151h1v1h-1zM678 152h1v1h-1zM678 153h1v1h-1zM678 160h1v1h-1zM679 142h1v1h-1zM679 143h1v1h-1zM679 145h1v1h-1zM679 147h1v1h-1zM679 151h1v1h-1zM679 155h1v1h-1zM679 161h1v1h-1zM679 165h1v1h-1zM679 167h1v1h-1zM680 146h1v1h-1zM680 151h1v1h-1zM680 152h1v1h-1zM680 154h1v1h-1zM680 156h1v1h-1zM680 157h1v1h-1zM680 161h1v1h-1zM680 163h1v1h-1zM680 164h1v1h-1zM680 165h1v1h-1zM680 167h1v1h-1zM680 176h1v1h-1zM681 145h1v1h-1zM681 148h1v1h-1zM681 151h1v1h-1zM681 155h1v1h-1zM681 156h1v1h-1zM681 157h1v1h-1zM681 159h1v1h-1zM681 164h1v1h-1zM681 166h1v1h-1zM681 169h1v1h-1zM681 170h1v1h-1zM681 171h1v1h-1zM681 176h1v1h-1zM681 181h1v1h-1zM681 183h1v1h-1zM682 149h1v1h-1zM682 152h1v1h-1zM682 157h1v1h-1zM682 159h1v1h-1zM682 160h1v1h-1zM682 161h1v1h-1zM682 162h1v1h-1zM682 165h1v1h-1zM682 166h1v1h-1zM682 170h1v1h-1zM682 171h1v1h-1zM682 172h1v1h-1zM682 173h1v1h-1zM682 175h1v1h-1zM682 176h1v1h-1zM682 179h1v1h-1zM682 182h1v1h-1zM682 183h1v1h-1zM682 185h1v1h-1zM682 187h1v1h-1zM683 151h1v1h-1zM683 159h1v1h-1zM683 164h1v1h-1zM683 172h1v1h-1zM683 179h1v1h-1zM683 180h1v1h-1zM683 181h1v1h-1zM683 184h1v1h-1zM683 186h1v1h-1zM683 187h1v1h-1zM683 190h1v1h-1zM683 192h1v1h-1zM683 196h1v1h-1zM684 157h1v1h-1zM684 158h1v1h-1zM684 161h1v1h-1zM684 164h1v1h-1zM684 168h1v1h-1zM684 172h1v1h-1zM684 173h1v1h-1zM684 175h1v1h-1zM684 178h1v1h-1zM684 179h1v1h-1zM684 180h1v1h-1zM684 181h1v1h-1zM684 185h1v1h-1zM684 188h1v1h-1zM684 192h1v1h-1zM684 194h1v1h-1zM684 199h1v1h-1zM685 161h1v1h-1zM685 162h1v1h-1zM685 163h1v1h-1zM685 165h1v1h-1zM685 173h1v1h-1zM685 176h1v1h-1zM685 182h1v1h-1zM685 183h1v1h-1zM685 185h1v1h-1zM685 186h1v1h-1zM685 187h1v1h-1zM685 189h1v1h-1zM685 190h1v1h-1zM685 191h1v1h-1zM685 195h1v1h-1zM685 196h1v1h-1zM685 197h1v1h-1zM685 199h1v1h-1zM686 168h1v1h-1zM686 170h1v1h-1zM686 172h1v1h-1zM686 174h1v1h-1zM686 175h1v1h-1zM686 177h1v1h-1zM686 179h1v1h-1zM686 181h1v1h-1zM686 183h1v1h-1zM686 187h1v1h-1zM686 188h1v1h-1zM686 191h1v1h-1zM686 193h1v1h-1zM686 195h1v1h-1zM686 196h1v1h-1zM686 197h1v1h-1zM686 198h1v1h-1zM686 199h1v1h-1zM686 201h1v1h-1zM686 202h1v1h-1zM686 205h1v1h-1zM686 207h1v1h-1zM686 209h1v1h-1zM686 221h1v1h-1zM687 171h1v1h-1zM687 176h1v1h-1zM687 177h1v1h-1zM687 180h1v1h-1zM687 185h1v1h-1zM687 186h1v1h-1zM687 189h1v1h-1zM687 192h1v1h-1zM687 195h1v1h-1zM687 196h1v1h-1zM687 198h1v1h-1zM687 203h1v1h-1zM687 207h1v1h-1zM687 209h1v1h-1zM688 181h1v1h-1zM688 182h1v1h-1zM688 183h1v1h-1zM688 184h1v1h-1zM688 187h1v1h-1zM688 190h1v1h-1zM688 194h1v1h-1zM688 196h1v1h-1zM688 197h1v1h-1zM688 200h1v1h-1zM688 201h1v1h-1zM688 206h1v1h-1zM688 207h1v1h-1zM688 209h1v1h-1zM688 212h1v1h-1zM688 214h1v1h-1zM689 186h1v1h-1zM689 187h1v1h-1zM689 198h1v1h-1zM689 200h1v1h-1zM689 201h1v1h-1zM689 207h1v1h-1zM689 212h1v1h-1zM689 216h1v1h-1zM689 218h1v1h-1zM689 221h1v1h-1zM690 191h1v1h-1zM690 192h1v1h-1zM690 196h1v1h-1zM690 197h1v1h-1zM690 198h1v1h-1zM690 199h1v1h-1zM690 201h1v1h-1zM690 203h1v1h-1zM690 205h1v1h-1zM690 206h1v1h-1zM690 207h1v1h-1zM690 208h1v1h-1zM690 209h1v1h-1zM690 210h1v1h-1zM690 211h1v1h-1zM690 212h1v1h-1zM690 214h1v1h-1zM690 220h1v1h-1zM690 223h1v1h-1zM690 227h1v1h-1zM690 228h1v1h-1zM691 192h1v1h-1zM691 198h1v1h-1zM691 199h1v1h-1zM691 203h1v1h-1zM691 205h1v1h-1zM691 206h1v1h-1zM691 211h1v1h-1zM691 212h1v1h-1zM691 213h1v1h-1zM691 214h1v1h-1zM691 217h1v1h-1zM691 218h1v1h-1zM691 221h1v1h-1zM691 222h1v1h-1zM691 223h1v1h-1zM691 225h1v1h-1zM691 226h1v1h-1zM691 234h1v1h-1zM691 238h1v1h-1zM692 199h1v1h-1zM692 200h1v1h-1zM692 203h1v1h-1zM692 204h1v1h-1zM692 210h1v1h-1zM692 213h1v1h-1zM692 214h1v1h-1zM692 218h1v1h-1zM692 219h1v1h-1zM692 221h1v1h-1zM692 226h1v1h-1zM692 227h1v1h-1zM692 228h1v1h-1zM692 230h1v1h-1zM692 232h1v1h-1zM692 236h1v1h-1zM692 237h1v1h-1zM692 238h1v1h-1zM692 239h1v1h-1zM693 196h1v1h-1zM693 204h1v1h-1zM693 209h1v1h-1zM693 210h1v1h-1zM693 212h1v1h-1zM693 213h1v1h-1zM693 214h1v1h-1zM693 217h1v1h-1zM693 220h1v1h-1zM693 221h1v1h-1zM693 224h1v1h-1zM693 225h1v1h-1zM693 226h1v1h-1zM693 228h1v1h-1zM693 229h1v1h-1zM693 230h1v1h-1zM693 232h1v1h-1zM693 235h1v1h-1zM693 236h1v1h-1zM693 238h1v1h-1zM693 240h1v1h-1zM693 243h1v1h-1zM693 244h1v1h-1zM693 248h1v1h-1zM694 206h1v1h-1zM694 208h1v1h-1zM694 209h1v1h-1zM694 211h1v1h-1zM694 212h1v1h-1zM694 214h1v1h-1zM694 216h1v1h-1zM694 220h1v1h-1zM694 223h1v1h-1zM694 225h1v1h-1zM694 229h1v1h-1zM694 233h1v1h-1zM694 234h1v1h-1zM694 235h1v1h-1zM694 236h1v1h-1zM694 237h1v1h-1zM694 243h1v1h-1zM694 249h1v1h-1zM694 251h1v1h-1zM694 252h1v1h-1zM694 259h1v1h-1zM695 209h1v1h-1zM695 220h1v1h-1zM695 223h1v1h-1zM695 225h1v1h-1zM695 228h1v1h-1zM695 232h1v1h-1zM695 235h1v1h-1zM695 236h1v1h-1zM695 237h1v1h-1zM695 238h1v1h-1zM695 239h1v1h-1zM695 240h1v1h-1zM695 241h1v1h-1zM695 244h1v1h-1zM695 245h1v1h-1zM695 246h1v1h-1zM695 247h1v1h-1zM695 252h1v1h-1zM695 253h1v1h-1zM695 254h1v1h-1zM695 256h1v1h-1zM695 257h1v1h-1zM695 260h1v1h-1zM696 224h1v1h-1zM696 225h1v1h-1zM696 227h1v1h-1zM696 231h1v1h-1zM696 232h1v1h-1zM696 234h1v1h-1zM696 235h1v1h-1zM696 236h1v1h-1zM696 241h1v1h-1zM696 243h1v1h-1zM696 245h1v1h-1zM696 247h1v1h-1zM696 248h1v1h-1zM696 249h1v1h-1zM696 252h1v1h-1zM696 256h1v1h-1zM696 258h1v1h-1zM696 260h1v1h-1zM696 264h1v1h-1zM696 266h1v1h-1zM696 268h1v1h-1zM696 270h1v1h-1zM696 272h1v1h-1zM697 231h1v1h-1zM697 232h1v1h-1zM697 236h1v1h-1zM697 237h1v1h-1zM697 240h1v1h-1zM697 242h1v1h-1zM697 244h1v1h-1zM697 245h1v1h-1zM697 256h1v1h-1zM697 257h1v1h-1zM697 262h1v1h-1zM697 264h1v1h-1zM697 270h1v1h-1zM697 277h1v1h-1zM698 234h1v1h-1zM698 236h1v1h-1zM698 240h1v1h-1zM698 243h1v1h-1zM698 246h1v1h-1zM698 247h1v1h-1zM698 248h1v1h-1zM698 250h1v1h-1zM698 251h1v1h-1zM698 253h1v1h-1zM698 255h1v1h-1zM698 257h1v1h-1zM698 263h1v1h-1zM698 266h1v1h-1zM698 267h1v1h-1zM698 268h1v1h-1zM698 269h1v1h-1zM698 274h1v1h-1zM698 279h1v1h-1zM698 280h1v1h-1zM698 281h1v1h-1zM698 282h1v1h-1zM699 244h1v1h-1zM699 247h1v1h-1zM699 249h1v1h-1zM699 251h1v1h-1zM699 260h1v1h-1zM699 261h1v1h-1zM699 262h1v1h-1zM699 263h1v1h-1zM699 264h1v1h-1zM699 265h1v1h-1zM699 267h1v1h-1zM699 268h1v1h-1zM699 271h1v1h-1zM699 272h1v1h-1zM699 274h1v1h-1zM699 275h1v1h-1zM699 283h1v1h-1zM699 285h1v1h-1zM699 288h1v1h-1zM699 291h1v1h-1zM699 294h1v1h-1zM699 296h1v1h-1zM699 298h1v1h-1zM699 300h1v1h-1zM700 246h1v1h-1zM700 247h1v1h-1zM700 248h1v1h-1zM700 250h1v1h-1zM700 251h1v1h-1zM700 252h1v1h-1zM700 254h1v1h-1zM700 258h1v1h-1zM700 261h1v1h-1zM700 265h1v1h-1zM700 266h1v1h-1zM700 271h1v1h-1zM700 273h1v1h-1zM700 275h1v1h-1zM700 276h1v1h-1zM700 277h1v1h-1zM700 278h1v1h-1zM700 280h1v1h-1zM700 281h1v1h-1zM700 283h1v1h-1zM700 285h1v1h-1zM700 291h1v1h-1zM700 292h1v1h-1zM700 294h1v1h-1zM700 296h1v1h-1zM700 299h1v1h-1zM700 303h1v1h-1zM700 306h1v1h-1zM700 308h1v1h-1zM700 311h1v1h-1zM701 252h1v1h-1zM701 255h1v1h-1zM701 256h1v1h-1zM701 264h1v1h-1zM701 272h1v1h-1zM701 276h1v1h-1zM701 277h1v1h-1zM701 293h1v1h-1zM701 296h1v1h-1zM701 297h1v1h-1zM701 299h1v1h-1zM701 300h1v1h-1zM701 303h1v1h-1zM701 306h1v1h-1zM701 311h1v1h-1zM701 312h1v1h-1zM701 314h1v1h-1zM702 262h1v1h-1zM702 272h1v1h-1zM702 278h1v1h-1zM702 279h1v1h-1zM702 280h1v1h-1zM702 282h1v1h-1zM702 289h1v1h-1zM702 291h1v1h-1zM702 294h1v1h-1zM702 298h1v1h-1zM702 299h1v1h-1zM702 301h1v1h-1zM702 306h1v1h-1zM702 311h1v1h-1zM702 315h1v1h-1zM702 316h1v1h-1zM702 317h1v1h-1zM702 318h1v1h-1zM702 322h1v1h-1zM702 324h1v1h-1zM703 263h1v1h-1zM703 268h1v1h-1zM703 271h1v1h-1zM703 272h1v1h-1zM703 279h1v1h-1zM703 281h1v1h-1zM703 286h1v1h-1zM703 287h1v1h-1zM703 291h1v1h-1zM703 297h1v1h-1zM703 300h1v1h-1zM703 301h1v1h-1zM703 302h1v1h-1zM703 304h1v1h-1zM703 306h1v1h-1zM703 309h1v1h-1zM703 310h1v1h-1zM703 311h1v1h-1zM703 314h1v1h-1zM703 315h1v1h-1zM703 318h1v1h-1zM703 319h1v1h-1zM703 321h1v1h-1zM703 323h1v1h-1zM703 324h1v1h-1zM703 329h1v1h-1zM703 330h1v1h-1zM703 331h1v1h-1zM703 333h1v1h-1zM703 334h1v1h-1zM704 272h1v1h-1zM704 274h1v1h-1zM704 279h1v1h-1zM704 284h1v1h-1zM704 285h1v1h-1zM704 289h1v1h-1zM704 291h1v1h-1zM704 293h1v1h-1zM704 294h1v1h-1zM704 296h1v1h-1zM704 297h1v1h-1zM704 299h1v1h-1zM704 303h1v1h-1zM704 304h1v1h-1zM704 305h1v1h-1zM704 307h1v1h-1zM704 310h1v1h-1zM704 313h1v1h-1zM704 314h1v1h-1zM704 315h1v1h-1zM704 316h1v1h-1zM704 334h1v1h-1zM704 342h1v1h-1zM705 289h1v1h-1zM705 292h1v1h-1zM705 295h1v1h-1zM705 297h1v1h-1zM705 299h1v1h-1zM705 300h1v1h-1zM705 302h1v1h-1zM705 303h1v1h-1zM705 304h1v1h-1zM705 305h1v1h-1zM705 309h1v1h-1zM705 311h1v1h-1zM705 314h1v1h-1zM705 315h1v1h-1zM705 317h1v1h-1zM705 318h1v1h-1zM705 320h1v1h-1zM705 321h1v1h-1zM705 323h1v1h-1zM705 328h1v1h-1zM705 331h1v1h-1zM705 332h1v1h-1zM705 333h1v1h-1zM705 335h1v1h-1zM705 337h1v1h-1zM705 340h1v1h-1zM705 344h1v1h-1zM706 299h1v1h-1zM706 303h1v1h-1zM706 308h1v1h-1zM706 313h1v1h-1zM706 314h1v1h-1zM706 315h1v1h-1zM706 316h1v1h-1zM706 317h1v1h-1zM706 318h1v1h-1zM706 320h1v1h-1zM706 321h1v1h-1zM706 322h1v1h-1zM706 323h1v1h-1zM706 326h1v1h-1zM706 327h1v1h-1zM706 329h1v1h-1zM706 330h1v1h-1zM706 331h1v1h-1zM706 332h1v1h-1zM706 338h1v1h-1zM706 339h1v1h-1zM706 349h1v1h-1zM706 350h1v1h-1zM706 353h1v1h-1zM707 312h1v1h-1zM707 317h1v1h-1zM707 325h1v1h-1zM707 329h1v1h-1zM707 331h1v1h-1zM707 332h1v1h-1zM707 337h1v1h-1zM707 339h1v1h-1zM707 341h1v1h-1zM707 343h1v1h-1zM707 347h1v1h-1zM707 349h1v1h-1zM707 353h1v1h-1zM707 354h1v1h-1zM707 363h1v1h-1zM708 322h1v1h-1zM708 323h1v1h-1zM708 324h1v1h-1zM708 325h1v1h-1zM708 328h1v1h-1zM708 329h1v1h-1zM708 332h1v1h-1zM708 334h1v1h-1zM708 335h1v1h-1zM708 336h1v1h-1zM708 340h1v1h-1zM708 341h1v1h-1zM708 343h1v1h-1zM708 347h1v1h-1zM708 348h1v1h-1zM708 350h1v1h-1zM708 351h1v1h-1zM708 352h1v1h-1zM708 353h1v1h-1zM708 355h1v1h-1zM708 357h1v1h-1zM708 358h1v1h-1zM708 359h1v1h-1zM708 360h1v1h-1zM708 361h1v1h-1zM708 364h1v1h-1zM708 365h1v1h-1zM708 367h1v1h-1zM708 370h1v1h-1zM708 377h1v1h-1zM709 330h1v1h-1zM709 335h1v1h-1zM709 336h1v1h-1zM709 338h1v1h-1zM709 339h1v1h-1zM709 340h1v1h-1zM709 341h1v1h-1zM709 342h1v1h-1zM709 345h1v1h-1zM709 346h1v1h-1zM709 348h1v1h-1zM709 349h1v1h-1zM709 350h1v1h-1zM709 351h1v1h-1zM709 352h1v1h-1zM709 353h1v1h-1zM709 354h1v1h-1zM709 357h1v1h-1zM709 358h1v1h-1zM709 359h1v1h-1zM709 362h1v1h-1zM709 369h1v1h-1zM709 375h1v1h-1zM709 376h1v1h-1zM709 379h1v1h-1zM710 332h1v1h-1zM710 335h1v1h-1zM710 340h1v1h-1zM710 341h1v1h-1zM710 345h1v1h-1zM710 346h1v1h-1zM710 347h1v1h-1zM710 352h1v1h-1zM710 353h1v1h-1zM710 354h1v1h-1zM710 355h1v1h-1zM710 356h1v1h-1zM710 358h1v1h-1zM710 360h1v1h-1zM710 363h1v1h-1zM710 367h1v1h-1zM710 371h1v1h-1zM710 375h1v1h-1zM710 380h1v1h-1zM711 344h1v1h-1zM711 345h1v1h-1zM711 348h1v1h-1zM711 352h1v1h-1zM711 354h1v1h-1zM711 357h1v1h-1zM711 359h1v1h-1zM711 360h1v1h-1zM711 363h1v1h-1zM711 364h1v1h-1zM711 366h1v1h-1zM711 369h1v1h-1zM711 373h1v1h-1zM711 374h1v1h-1zM711 376h1v1h-1zM711 380h1v1h-1zM711 385h1v1h-1zM711 389h1v1h-1zM712 346h1v1h-1zM712 348h1v1h-1zM712 351h1v1h-1zM712 358h1v1h-1zM712 360h1v1h-1zM712 365h1v1h-1zM712 372h1v1h-1zM712 374h1v1h-1zM712 380h1v1h-1zM712 381h1v1h-1zM712 383h1v1h-1zM712 385h1v1h-1zM712 386h1v1h-1zM712 388h1v1h-1zM712 393h1v1h-1zM712 394h1v1h-1zM713 351h1v1h-1zM713 358h1v1h-1zM713 359h1v1h-1zM713 360h1v1h-1zM713 362h1v1h-1zM713 365h1v1h-1zM713 369h1v1h-1zM713 371h1v1h-1zM713 373h1v1h-1zM713 375h1v1h-1zM713 376h1v1h-1zM713 378h1v1h-1zM713 379h1v1h-1zM713 380h1v1h-1zM713 381h1v1h-1zM713 385h1v1h-1zM713 392h1v1h-1zM713 396h1v1h-1zM713 397h1v1h-1zM713 401h1v1h-1zM713 402h1v1h-1zM714 367h1v1h-1zM714 369h1v1h-1zM714 371h1v1h-1zM714 372h1v1h-1zM714 373h1v1h-1zM714 374h1v1h-1zM714 376h1v1h-1zM714 377h1v1h-1zM714 381h1v1h-1zM714 382h1v1h-1zM714 384h1v1h-1zM714 388h1v1h-1zM714 389h1v1h-1zM714 390h1v1h-1zM714 392h1v1h-1zM714 394h1v1h-1zM714 399h1v1h-1zM714 400h1v1h-1zM714 404h1v1h-1zM714 405h1v1h-1zM715 367h1v1h-1zM715 374h1v1h-1zM715 378h1v1h-1zM715 382h1v1h-1zM715 388h1v1h-1zM715 389h1v1h-1zM715 391h1v1h-1zM715 392h1v1h-1zM715 393h1v1h-1zM715 396h1v1h-1zM715 397h1v1h-1zM715 400h1v1h-1zM715 405h1v1h-1zM715 406h1v1h-1zM715 411h1v1h-1zM715 415h1v1h-1zM715 416h1v1h-1zM715 417h1v1h-1zM715 420h1v1h-1zM715 423h1v1h-1zM716 369h1v1h-1zM716 380h1v1h-1zM716 384h1v1h-1zM716 388h1v1h-1zM716 390h1v1h-1zM716 392h1v1h-1zM716 394h1v1h-1zM716 396h1v1h-1zM716 398h1v1h-1zM716 399h1v1h-1zM716 401h1v1h-1zM716 404h1v1h-1zM716 405h1v1h-1zM716 406h1v1h-1zM716 408h1v1h-1zM716 411h1v1h-1zM716 413h1v1h-1zM716 414h1v1h-1zM716 415h1v1h-1zM716 422h1v1h-1zM716 424h1v1h-1zM716 427h1v1h-1zM717 379h1v1h-1zM717 380h1v1h-1zM717 384h1v1h-1zM717 386h1v1h-1zM717 387h1v1h-1zM717 388h1v1h-1zM717 390h1v1h-1zM717 395h1v1h-1zM717 397h1v1h-1zM717 398h1v1h-1zM717 399h1v1h-1zM717 407h1v1h-1zM717 408h1v1h-1zM717 413h1v1h-1zM717 414h1v1h-1zM717 416h1v1h-1zM717 417h1v1h-1zM717 418h1v1h-1zM717 419h1v1h-1zM717 421h1v1h-1zM717 422h1v1h-1zM717 426h1v1h-1zM717 431h1v1h-1zM718 387h1v1h-1zM718 388h1v1h-1zM718 394h1v1h-1zM718 396h1v1h-1zM718 397h1v1h-1zM718 398h1v1h-1zM718 399h1v1h-1zM718 400h1v1h-1zM718 401h1v1h-1zM718 404h1v1h-1zM718 407h1v1h-1zM718 410h1v1h-1zM718 411h1v1h-1zM718 412h1v1h-1zM718 413h1v1h-1zM718 414h1v1h-1zM718 415h1v1h-1zM718 416h1v1h-1zM718 418h1v1h-1zM718 419h1v1h-1zM718 421h1v1h-1zM718 423h1v1h-1zM718 428h1v1h-1zM718 429h1v1h-1zM718 430h1v1h-1zM718 431h1v1h-1zM718 432h1v1h-1zM718 443h1v1h-1zM719 399h1v1h-1zM719 402h1v1h-1zM719 404h1v1h-1zM719 406h1v1h-1zM719 407h1v1h-1zM719 408h1v1h-1zM719 409h1v1h-1zM719 410h1v1h-1zM719 412h1v1h-1zM719 416h1v1h-1zM719 417h1v1h-1zM719 419h1v1h-1zM719 421h1v1h-1zM719 422h1v1h-1zM719 424h1v1h-1zM719 425h1v1h-1zM719 426h1v1h-1zM719 427h1v1h-1zM719 428h1v1h-1zM719 429h1v1h-1zM719 430h1v1h-1zM719 436h1v1h-1zM719 437h1v1h-1zM719 438h1v1h-1zM719 446h1v1h-1zM719 447h1v1h-1zM720 406h1v1h-1zM720 408h1v1h-1zM720 409h1v1h-1zM720 413h1v1h-1zM720 415h1v1h-1zM720 416h1v1h-1zM720 417h1v1h-1zM720 418h1v1h-1zM720 420h1v1h-1zM720 421h1v1h-1zM720 423h1v1h-1zM720 425h1v1h-1zM720 429h1v1h-1zM720 430h1v1h-1zM720 433h1v1h-1zM720 435h1v1h-1zM720 436h1v1h-1zM720 438h1v1h-1zM720 439h1v1h-1zM720 452h1v1h-1zM721 407h1v1h-1zM721 413h1v1h-1zM721 414h1v1h-1zM721 415h1v1h-1zM721 420h1v1h-1zM721 421h1v1h-1zM721 424h1v1h-1zM721 427h1v1h-1zM721 429h1v1h-1zM721 431h1v1h-1zM721 432h1v1h-1zM721 434h1v1h-1zM721 438h1v1h-1zM721 439h1v1h-1zM721 443h1v1h-1zM721 449h1v1h-1zM721 452h1v1h-1zM721 454h1v1h-1zM721 457h1v1h-1zM721 458h1v1h-1zM722 412h1v1h-1zM722 415h1v1h-1zM722 422h1v1h-1zM722 427h1v1h-1zM722 430h1v1h-1zM722 431h1v1h-1zM722 432h1v1h-1zM722 435h1v1h-1zM722 436h1v1h-1zM722 438h1v1h-1zM722 440h1v1h-1zM722 441h1v1h-1zM722 443h1v1h-1zM722 445h1v1h-1zM722 448h1v1h-1zM722 458h1v1h-1zM722 462h1v1h-1zM722 464h1v1h-1zM723 421h1v1h-1zM723 425h1v1h-1zM723 435h1v1h-1zM723 438h1v1h-1zM723 441h1v1h-1zM723 445h1v1h-1zM723 447h1v1h-1zM723 449h1v1h-1zM723 451h1v1h-1zM723 454h1v1h-1zM723 455h1v1h-1zM723 456h1v1h-1zM723 457h1v1h-1zM723 458h1v1h-1zM723 459h1v1h-1zM723 465h1v1h-1zM723 466h1v1h-1zM724 423h1v1h-1zM724 429h1v1h-1zM724 437h1v1h-1zM724 442h1v1h-1zM724 443h1v1h-1zM724 450h1v1h-1zM724 452h1v1h-1zM724 454h1v1h-1zM724 457h1v1h-1zM724 459h1v1h-1zM724 463h1v1h-1zM724 464h1v1h-1zM724 465h1v1h-1zM724 466h1v1h-1zM724 468h1v1h-1zM724 470h1v1h-1zM724 473h1v1h-1zM724 478h1v1h-1zM725 440h1v1h-1zM725 441h1v1h-1zM725 444h1v1h-1zM725 445h1v1h-1zM725 448h1v1h-1zM725 449h1v1h-1zM725 451h1v1h-1zM725 454h1v1h-1zM725 455h1v1h-1zM725 457h1v1h-1zM725 461h1v1h-1zM725 465h1v1h-1zM725 468h1v1h-1zM725 469h1v1h-1zM725 475h1v1h-1zM725 476h1v1h-1zM725 477h1v1h-1zM726 448h1v1h-1zM726 450h1v1h-1zM726 451h1v1h-1zM726 452h1v1h-1zM726 453h1v1h-1zM726 454h1v1h-1zM726 456h1v1h-1zM726 458h1v1h-1zM726 462h1v1h-1zM726 463h1v1h-1zM726 465h1v1h-1zM726 467h1v1h-1zM726 469h1v1h-1zM726 470h1v1h-1zM726 471h1v1h-1zM726 473h1v1h-1zM726 480h1v1h-1zM726 483h1v1h-1zM727 449h1v1h-1zM727 450h1v1h-1zM727 451h1v1h-1zM727 452h1v1h-1zM727 455h1v1h-1zM727 456h1v1h-1zM727 457h1v1h-1zM727 459h1v1h-1zM727 460h1v1h-1zM727 461h1v1h-1zM727 462h1v1h-1zM727 464h1v1h-1zM727 467h1v1h-1zM727 469h1v1h-1zM727 476h1v1h-1zM727 479h1v1h-1zM727 481h1v1h-1zM727 482h1v1h-1zM728 456h1v1h-1zM728 459h1v1h-1zM728 462h1v1h-1zM728 463h1v1h-1zM728 464h1v1h-1zM728 466h1v1h-1zM728 467h1v1h-1zM728 470h1v1h-1zM728 471h1v1h-1zM728 472h1v1h-1zM728 475h1v1h-1zM728 476h1v1h-1zM728 477h1v1h-1zM728 478h1v1h-1zM728 480h1v1h-1zM729 463h1v1h-1zM729 464h1v1h-1zM729 465h1v1h-1zM729 466h1v1h-1zM729 468h1v1h-1zM729 470h1v1h-1zM729 472h1v1h-1zM729 474h1v1h-1zM729 476h1v1h-1zM729 477h1v1h-1zM729 479h1v1h-1zM729 481h1v1h-1zM729 483h1v1h-1zM729 484h1v1h-1zM729 487h1v1h-1zM729 490h1v1h-1zM730 468h1v1h-1zM730 469h1v1h-1zM730 470h1v1h-1zM730 471h1v1h-1zM730 474h1v1h-1zM730 475h1v1h-1zM730 476h1v1h-1zM730 481h1v1h-1zM730 482h1v1h-1zM730 483h1v1h-1zM730 484h1v1h-1zM730 489h1v1h-1zM730 490h1v1h-1zM730 491h1v1h-1zM731 470h1v1h-1zM731 471h1v1h-1zM731 472h1v1h-1zM731 478h1v1h-1zM731 479h1v1h-1zM731 487h1v1h-1zM731 488h1v1h-1zM731 490h1v1h-1zM731 491h1v1h-1zM731 493h1v1h-1zM731 495h1v1h-1zM731 497h1v1h-1zM732 475h1v1h-1zM732 477h1v1h-1zM732 481h1v1h-1zM732 482h1v1h-1zM732 483h1v1h-1zM732 484h1v1h-1zM732 485h1v1h-1zM732 486h1v1h-1zM732 488h1v1h-1zM732 489h1v1h-1zM732 490h1v1h-1zM732 497h1v1h-1zM733 474h1v1h-1zM733 477h1v1h-1zM733 479h1v1h-1zM733 480h1v1h-1zM733 481h1v1h-1zM733 485h1v1h-1zM733 486h1v1h-1zM733 490h1v1h-1zM733 491h1v1h-1zM733 493h1v1h-1zM733 497h1v1h-1zM733 498h1v1h-1zM733 501h1v1h-1zM734 485h1v1h-1zM734 486h1v1h-1zM734 492h1v1h-1zM734 495h1v1h-1zM734 496h1v1h-1zM734 498h1v1h-1zM734 501h1v1h-1zM734 503h1v1h-1zM735 487h1v1h-1zM735 490h1v1h-1zM735 491h1v1h-1zM735 493h1v1h-1zM735 495h1v1h-1zM735 496h1v1h-1zM735 498h1v1h-1zM735 499h1v1h-1zM735 503h1v1h-1zM736 484h1v1h-1zM736 485h1v1h-1zM736 488h1v1h-1zM736 489h1v1h-1zM736 492h1v1h-1zM736 494h1v1h-1zM736 501h1v1h-1zM737 490h1v1h-1zM737 491h1v1h-1zM737 493h1v1h-1zM737 496h1v1h-1zM737 497h1v1h-1zM737 498h1v1h-1zM737 499h1v1h-1zM737 500h1v1h-1zM737 501h1v1h-1zM737 502h1v1h-1zM737 504h1v1h-1zM738 489h1v1h-1zM738 491h1v1h-1zM738 494h1v1h-1zM738 495h1v1h-1zM738 498h1v1h-1zM738 499h1v1h-1zM738 502h1v1h-1zM738 507h1v1h-1zM739 492h1v1h-1zM739 494h1v1h-1zM739 495h1v1h-1zM739 497h1v1h-1zM739 498h1v1h-1zM739 499h1v1h-1zM739 500h1v1h-1zM739 501h1v1h-1zM739 502h1v1h-1zM739 505h1v1h-1zM739 506h1v1h-1zM739 507h1v1h-1zM739 508h1v1h-1zM740 492h1v1h-1zM740 493h1v1h-1zM740 497h1v1h-1zM740 499h1v1h-1zM740 502h1v1h-1zM740 505h1v1h-1zM740 507h1v1h-1zM740 509h1v1h-1zM741 496h1v1h-1zM741 497h1v1h-1zM741 499h1v1h-1zM741 500h1v1h-1zM741 502h1v1h-1zM741 503h1v1h-1zM741 504h1v1h-1zM741 505h1v1h-1zM741 506h1v1h-1zM741 508h1v1h-1zM741 509h1v1h-1zM741 511h1v1h-1zM742 497h1v1h-1zM742 499h1v1h-1zM742 503h1v1h-1zM742 505h1v1h-1zM742 507h1v1h-1zM742 508h1v1h-1zM742 521h1v1h-1zM743 499h1v1h-1zM743 500h1v1h-1zM743 501h1v1h-1zM743 504h1v1h-1zM743 505h1v1h-1zM743 508h1v1h-1zM743 510h1v1h-1zM743 512h1v1h-1zM743 515h1v1h-1zM744 501h1v1h-1zM744 502h1v1h-1zM744 503h1v1h-1zM744 504h1v1h-1zM744 505h1v1h-1zM744 506h1v1h-1zM744 508h1v1h-1zM744 510h1v1h-1zM744 511h1v1h-1zM744 512h1v1h-1zM745 501h1v1h-1zM745 503h1v1h-1zM745 505h1v1h-1zM745 506h1v1h-1zM745 508h1v1h-1zM745 510h1v1h-1zM745 517h1v1h-1zM746 504h1v1h-1zM746 505h1v1h-1zM746 508h1v1h-1zM746 509h1v1h-1zM746 512h1v1h-1zM746 515h1v1h-1zM747 496h1v1h-1zM747 503h1v1h-1zM747 504h1v1h-1zM747 508h1v1h-1zM747 510h1v1h-1zM747 514h1v1h-1zM748 497h1v1h-1zM748 502h1v1h-1zM748 509h1v1h-1zM748 510h1v1h-1zM748 511h1v1h-1zM748 516h1v1h-1zM749 502h1v1h-1zM749 504h1v1h-1zM749 505h1v1h-1zM749 507h1v1h-1zM749 508h1v1h-1zM749 509h1v1h-1zM749 511h1v1h-1zM749 512h1v1h-1zM749 513h1v1h-1zM749 514h1v1h-1zM749 515h1v1h-1zM750 499h1v1h-1zM750 502h1v1h-1zM750 503h1v1h-1zM750 505h1v1h-1zM750 506h1v1h-1zM750 510h1v1h-1zM750 512h1v1h-1zM750 516h1v1h-1zM750 517h1v1h-1zM751 507h1v1h-1zM751 509h1v1h-1zM751 510h1v1h-1zM751 511h1v1h-1zM751 513h1v1h-1zM751 517h1v1h-1zM752 503h1v1h-1zM752 505h1v1h-1zM752 506h1v1h-1zM752 508h1v1h-1zM752 509h1v1h-1zM752 510h1v1h-1zM752 511h1v1h-1zM752 515h1v1h-1zM752 518h1v1h-1zM753 506h1v1h-1zM753 507h1v1h-1zM753 509h1v1h-1zM753 510h1v1h-1zM753 514h1v1h-1zM753 515h1v1h-1zM753 516h1v1h-1zM753 517h1v1h-1zM754 507h1v1h-1zM754 508h1v1h-1zM754 510h1v1h-1zM754 511h1v1h-1zM755 504h1v1h-1zM755 505h1v1h-1zM755 506h1v1h-1zM755 508h1v1h-1zM755 510h1v1h-1zM755 511h1v1h-1zM755 513h1v1h-1zM755 514h1v1h-1zM755 515h1v1h-1zM755 516h1v1h-1zM756 500h1v1h-1zM756 504h1v1h-1zM756 505h1v1h-1zM756 507h1v1h-1zM756 508h1v1h-1zM756 509h1v1h-1zM756 510h1v1h-1zM756 511h1v1h-1zM756 512h1v1h-1zM756 513h1v1h-1zM756 515h1v1h-1zM756 516h1v1h-1zM757 504h1v1h-1zM757 507h1v1h-1zM757 509h1v1h-1zM757 510h1v1h-1zM757 512h1v1h-1zM757 513h1v1h-1zM757 515h1v1h-1zM758 504h1v1h-1zM758 505h1v1h-1zM758 506h1v1h-1zM758 507h1v1h-1zM758 508h1v1h-1zM758 510h1v1h-1zM758 511h1v1h-1zM758 512h1v1h-1zM758 514h1v1h-1zM758 515h1v1h-1zM758 516h1v1h-1zM758 517h1v1h-1zM758 520h1v1h-1zM759 505h1v1h-1zM759 506h1v1h-1zM759 508h1v1h-1zM759 510h1v1h-1zM759 512h1v1h-1zM759 513h1v1h-1zM759 514h1v1h-1zM759 515h1v1h-1zM760 506h1v1h-1zM760 508h1v1h-1zM760 510h1v1h-1zM760 512h1v1h-1zM760 513h1v1h-1zM760 515h1v1h-1zM760 516h1v1h-1zM760 517h1v1h-1zM761 497h1v1h-1zM761 504h1v1h-1zM761 505h1v1h-1zM761 507h1v1h-1zM761 509h1v1h-1zM761 512h1v1h-1zM761 513h1v1h-1zM761 514h1v1h-1zM762 504h1v1h-1zM762 505h1v1h-1zM762 507h1v1h-1zM762 509h1v1h-1zM762 510h1v1h-1zM762 511h1v1h-1zM762 513h1v1h-1zM762 514h1v1h-1zM762 517h1v1h-1zM763 505h1v1h-1zM763 506h1v1h-1zM763 511h1v1h-1zM763 512h1v1h-1zM763 513h1v1h-1zM763 515h1v1h-1zM763 516h1v1h-1zM763 517h1v1h-1zM763 518h1v1h-1zM764 505h1v1h-1zM764 506h1v1h-1zM764 509h1v1h-1zM764 511h1v1h-1zM764 512h1v1h-1zM764 516h1v1h-1zM764 517h1v1h-1zM764 518h1v1h-1zM765 506h1v1h-1zM765 507h1v1h-1zM765 508h1v1h-1zM765 509h1v1h-1zM765 510h1v1h-1zM765 513h1v1h-1zM765 515h1v1h-1zM765 516h1v1h-1zM765 518h1v1h-1zM766 505h1v1h-1zM766 508h1v1h-1zM766 509h1v1h-1zM766 510h1v1h-1zM766 514h1v1h-1zM766 516h1v1h-1zM766 519h1v1h-1zM767 505h1v1h-1zM767 506h1v1h-1zM767 509h1v1h-1zM767 511h1v1h-1zM767 512h1v1h-1zM767 518h1v1h-1zM767 519h1v1h-1zM768 505h1v1h-1zM768 508h1v1h-1zM768 510h1v1h-1zM768 511h1v1h-1zM768 513h1v1h-1zM768 517h1v1h-1zM768 521h1v1h-1zM769 507h1v1h-1zM769 508h1v1h-1zM769 509h1v1h-1zM769 514h1v1h-1zM769 519h1v1h-1zM769 520h1v1h-1zM769 522h1v1h-1zM770 511h1v1h-1zM770 512h1v1h-1zM770 513h1v1h-1zM770 515h1v1h-1zM770 516h1v1h-1zM771 502h1v1h-1zM771 508h1v1h-1zM771 510h1v1h-1zM771 511h1v1h-1zM771 512h1v1h-1zM771 514h1v1h-1zM771 515h1v1h-1zM771 517h1v1h-1zM771 518h1v1h-1zM771 521h1v1h-1zM772 507h1v1h-1zM772 510h1v1h-1zM772 514h1v1h-1zM772 515h1v1h-1zM772 516h1v1h-1zM772 520h1v1h-1zM772 523h1v1h-1zM773 509h1v1h-1zM773 513h1v1h-1zM773 514h1v1h-1zM773 516h1v1h-1zM773 517h1v1h-1zM773 518h1v1h-1zM773 519h1v1h-1zM773 520h1v1h-1zM773 525h1v1h-1zM774 512h1v1h-1zM774 513h1v1h-1zM774 514h1v1h-1zM774 515h1v1h-1zM774 516h1v1h-1zM774 520h1v1h-1zM774 521h1v1h-1zM774 522h1v1h-1zM775 504h1v1h-1zM775 509h1v1h-1zM775 513h1v1h-1zM775 514h1v1h-1zM775 515h1v1h-1zM775 517h1v1h-1zM775 518h1v1h-1zM775 519h1v1h-1zM775 522h1v1h-1zM775 523h1v1h-1zM775 524h1v1h-1zM775 525h1v1h-1zM775 526h1v1h-1zM776 512h1v1h-1zM776 513h1v1h-1zM776 518h1v1h-1zM776 519h1v1h-1zM776 520h1v1h-1zM776 523h1v1h-1zM777 514h1v1h-1zM777 516h1v1h-1zM777 517h1v1h-1zM777 518h1v1h-1zM777 519h1v1h-1zM777 521h1v1h-1zM777 522h1v1h-1zM777 523h1v1h-1zM777 526h1v1h-1zM778 514h1v1h-1zM778 519h1v1h-1zM778 520h1v1h-1zM778 521h1v1h-1zM778 522h1v1h-1zM778 526h1v1h-1zM779 515h1v1h-1zM779 516h1v1h-1zM779 519h1v1h-1zM779 522h1v1h-1zM779 525h1v1h-1zM779 526h1v1h-1zM779 527h1v1h-1zM779 528h1v1h-1zM779 529h1v1h-1zM779 532h1v1h-1zM780 518h1v1h-1zM780 519h1v1h-1zM780 520h1v1h-1zM780 525h1v1h-1zM780 526h1v1h-1zM780 527h1v1h-1zM780 528h1v1h-1zM780 529h1v1h-1zM780 533h1v1h-1zM781 515h1v1h-1zM781 516h1v1h-1zM781 522h1v1h-1zM781 525h1v1h-1zM781 526h1v1h-1zM781 527h1v1h-1zM781 529h1v1h-1zM781 531h1v1h-1zM781 532h1v1h-1zM781 534h1v1h-1zM782 517h1v1h-1zM782 521h1v1h-1zM782 523h1v1h-1zM782 524h1v1h-1zM782 525h1v1h-1zM782 528h1v1h-1zM782 529h1v1h-1zM782 530h1v1h-1zM782 531h1v1h-1zM782 535h1v1h-1zM783 520h1v1h-1zM783 522h1v1h-1zM783 523h1v1h-1zM783 527h1v1h-1zM783 528h1v1h-1zM783 532h1v1h-1zM783 534h1v1h-1zM783 535h1v1h-1zM784 521h1v1h-1zM784 522h1v1h-1zM784 525h1v1h-1zM784 529h1v1h-1zM784 530h1v1h-1zM784 531h1v1h-1zM784 532h1v1h-1zM785 522h1v1h-1zM785 523h1v1h-1zM785 525h1v1h-1zM785 526h1v1h-1zM785 530h1v1h-1zM785 532h1v1h-1zM785 533h1v1h-1zM785 534h1v1h-1zM785 536h1v1h-1zM786 523h1v1h-1zM786 525h1v1h-1zM786 527h1v1h-1zM786 530h1v1h-1zM786 531h1v1h-1zM786 532h1v1h-1zM786 533h1v1h-1zM786 535h1v1h-1zM786 539h1v1h-1zM787 524h1v1h-1zM787 526h1v1h-1zM787 527h1v1h-1zM787 532h1v1h-1zM787 533h1v1h-1zM787 535h1v1h-1zM787 537h1v1h-1zM787 545h1v1h-1zM788 528h1v1h-1zM788 530h1v1h-1zM788 531h1v1h-1zM788 533h1v1h-1zM788 534h1v1h-1zM788 535h1v1h-1zM788 536h1v1h-1zM788 537h1v1h-1zM788 541h1v1h-1zM789 527h1v1h-1zM789 529h1v1h-1zM789 530h1v1h-1zM789 531h1v1h-1zM789 532h1v1h-1zM789 534h1v1h-1zM789 536h1v1h-1zM789 539h1v1h-1zM789 540h1v1h-1zM789 541h1v1h-1zM789 544h1v1h-1zM790 529h1v1h-1zM790 530h1v1h-1zM790 535h1v1h-1zM790 536h1v1h-1zM790 537h1v1h-1zM790 538h1v1h-1zM790 539h1v1h-1zM790 541h1v1h-1zM790 543h1v1h-1zM791 527h1v1h-1zM791 528h1v1h-1zM791 532h1v1h-1zM791 535h1v1h-1zM791 536h1v1h-1zM791 537h1v1h-1zM791 538h1v1h-1zM791 539h1v1h-1zM791 541h1v1h-1zM791 542h1v1h-1zM791 543h1v1h-1zM791 545h1v1h-1zM791 546h1v1h-1zM792 525h1v1h-1zM792 530h1v1h-1zM792 531h1v1h-1zM792 537h1v1h-1zM792 538h1v1h-1zM792 542h1v1h-1zM792 543h1v1h-1zM792 544h1v1h-1zM792 546h1v1h-1zM793 523h1v1h-1zM793 528h1v1h-1zM793 536h1v1h-1zM793 537h1v1h-1zM793 538h1v1h-1zM793 539h1v1h-1zM793 540h1v1h-1zM793 541h1v1h-1zM793 542h1v1h-1zM793 543h1v1h-1zM793 545h1v1h-1zM793 547h1v1h-1zM793 549h1v1h-1zM794 536h1v1h-1zM794 537h1v1h-1zM794 539h1v1h-1zM794 540h1v1h-1zM794 542h1v1h-1zM794 543h1v1h-1zM794 544h1v1h-1zM794 547h1v1h-1zM795 533h1v1h-1zM795 536h1v1h-1zM795 537h1v1h-1zM795 540h1v1h-1zM795 541h1v1h-1zM795 542h1v1h-1zM795 544h1v1h-1zM795 545h1v1h-1zM795 546h1v1h-1zM795 548h1v1h-1zM795 550h1v1h-1zM795 552h1v1h-1zM796 538h1v1h-1zM796 540h1v1h-1zM796 543h1v1h-1zM796 544h1v1h-1zM796 545h1v1h-1zM796 547h1v1h-1zM796 548h1v1h-1zM796 550h1v1h-1zM796 554h1v1h-1zM797 535h1v1h-1zM797 539h1v1h-1zM797 540h1v1h-1zM797 541h1v1h-1zM797 542h1v1h-1zM797 545h1v1h-1zM797 547h1v1h-1zM797 548h1v1h-1zM797 552h1v1h-1zM798 540h1v1h-1zM798 541h1v1h-1zM798 542h1v1h-1zM798 543h1v1h-1zM798 544h1v1h-1zM798 547h1v1h-1zM798 550h1v1h-1zM798 553h1v1h-1zM799 541h1v1h-1zM799 543h1v1h-1zM799 545h1v1h-1zM799 547h1v1h-1zM799 548h1v1h-1zM799 549h1v1h-1zM799 551h1v1h-1zM799 552h1v1h-1zM799 554h1v1h-1zM799 557h1v1h-1zM799 559h1v1h-1zM800 540h1v1h-1zM800 545h1v1h-1zM800 548h1v1h-1zM800 549h1v1h-1zM800 552h1v1h-1zM800 553h1v1h-1zM800 555h1v1h-1zM800 556h1v1h-1zM800 557h1v1h-1zM801 544h1v1h-1zM801 545h1v1h-1zM801 546h1v1h-1zM801 547h1v1h-1zM801 550h1v1h-1zM801 551h1v1h-1zM801 553h1v1h-1zM801 555h1v1h-1zM802 544h1v1h-1zM802 548h1v1h-1zM802 549h1v1h-1zM802 551h1v1h-1zM802 553h1v1h-1zM802 555h1v1h-1zM802 557h1v1h-1zM803 543h1v1h-1zM803 548h1v1h-1zM803 549h1v1h-1zM803 550h1v1h-1zM803 559h1v1h-1zM803 560h1v1h-1zM804 544h1v1h-1zM804 545h1v1h-1zM804 546h1v1h-1zM804 550h1v1h-1zM804 551h1v1h-1zM804 552h1v1h-1zM804 555h1v1h-1zM804 556h1v1h-1zM804 557h1v1h-1zM804 561h1v1h-1zM805 545h1v1h-1zM805 548h1v1h-1zM805 549h1v1h-1zM805 552h1v1h-1zM805 556h1v1h-1zM805 560h1v1h-1zM805 561h1v1h-1zM806 546h1v1h-1zM806 551h1v1h-1zM806 553h1v1h-1zM806 554h1v1h-1zM806 556h1v1h-1zM806 557h1v1h-1zM806 558h1v1h-1zM806 560h1v1h-1zM806 561h1v1h-1zM806 562h1v1h-1zM806 563h1v1h-1zM807 547h1v1h-1zM807 548h1v1h-1zM807 549h1v1h-1zM807 550h1v1h-1zM807 552h1v1h-1zM807 556h1v1h-1zM807 557h1v1h-1zM807 558h1v1h-1zM807 559h1v1h-1zM807 560h1v1h-1zM807 563h1v1h-1zM808 547h1v1h-1zM808 551h1v1h-1zM808 554h1v1h-1zM808 556h1v1h-1zM808 557h1v1h-1zM808 562h1v1h-1zM809 551h1v1h-1zM809 552h1v1h-1zM809 553h1v1h-1zM809 557h1v1h-1zM809 558h1v1h-1zM809 561h1v1h-1zM809 563h1v1h-1zM810 551h1v1h-1zM810 552h1v1h-1zM810 555h1v1h-1zM810 558h1v1h-1zM810 560h1v1h-1zM810 561h1v1h-1zM810 563h1v1h-1zM810 565h1v1h-1zM810 567h1v1h-1z" fill="#e4e074"/></svg>
<svg width="1023" height="796"><rect x="215.5" y="89.5" width="596" height="482" fill="none" stroke="#d8642c" stroke-width="1"/></svg>
<svg width="1023" height="796"><path d="M222 578.5H352" stroke="#8a8a8a" stroke-dasharray="1 2"/><rect x="268" y="573" width="33" height="11" fill="#000"/><path d="M356 578.5H811.5M811.5 572V585" stroke="#9a9a9a"/><path d="M352 574h4M354 574v9M352 583h4" stroke="#aaa"/><path d="M577 583l4-4.5 4 4.5z" fill="#f08040"/></svg>
<div class="t" style="left:-84px;width:600px;text-align:center;top:569.5px;font-size:12.5px;line-height:18px;font-weight:normal;color:#5a9ae0;transform:scaleX(1);transform-origin:50% 50%;font-family:"Liberation Serif",serif">T</div>
<div class="t" style="left:271.5px;top:571.5px;font-size:9.5px;line-height:14px;font-weight:normal;color:#e06a30;transform:scaleX(0.92);transform-origin:0 50%;">150 ps</div>
<div class="t" style="left:97.5px;width:600px;text-align:center;top:569.5px;font-size:12.5px;line-height:18px;font-weight:normal;color:#b0b0b0;transform:scaleX(1);transform-origin:50% 50%;font-family:"Liberation Serif",serif">0</div>
<svg width="1023" height="796"><path d="M190.5 673.5V598a3 3 0 0 1 3-3H826.5V670.5a3 3 0 0 1 -3 3H193.5a3 3 0 0 1 -3 -3z" fill="none" stroke="#8c8c8c"/></svg>
<div class="a " style="left:195.8px;top:588.7px;width:54.0px;height:13.099999999999909px;background:linear-gradient(#6c9cf0,#3a6ad8);border:1px solid #9ab8f0;border-radius:3px"></div>
<div class="t" style="left:-77.19999999999999px;width:600px;text-align:center;top:589.3px;font-size:9.2px;line-height:13px;font-weight:bold;color:#fff;transform:scaleX(0.9782608695652175);transform-origin:50% 50%;">Histogram</div>
<div class="a " style="left:252px;top:588.7px;width:35.69999999999999px;height:13.099999999999909px;background:#000;border:1px solid #8c8c8c;border-radius:3px"></div>
<div class="t" style="left:-30.149999999999977px;width:600px;text-align:center;top:589.3px;font-size:9.2px;line-height:13px;font-weight:bold;color:#e8e8e8;transform:scaleX(0.9782608695652175);transform-origin:50% 50%;">Scales</div>
<div class="a " style="left:720.4px;top:588.7px;width:23.399999999999977px;height:13.099999999999909px;background:#000;border:1px solid #8c8c8c;border-radius:3px"></div>
<div class="t" style="left:432.0999999999999px;width:600px;text-align:center;top:589.3px;font-size:9.2px;line-height:13px;font-weight:bold;color:#e8e8e8;transform:scaleX(0.9782608695652175);transform-origin:50% 50%;">Auto</div>
<div class="a " style="left:746.6px;top:588.7px;width:22.799999999999955px;height:13.099999999999909px;background:#000;border:1px solid #8c8c8c;border-radius:3px"></div>
<div class="t" style="left:458.0px;width:600px;text-align:center;top:589.3px;font-size:9.2px;line-height:13px;font-weight:bold;color:#e8e8e8;transform:scaleX(0.9782608695652175);transform-origin:50% 50%;">Max</div>
<div class="a " style="left:771.9px;top:588.7px;width:22.5px;height:13.099999999999909px;background:linear-gradient(#6c9cf0,#3a6ad8);border:1px solid #9ab8f0;border-radius:3px"></div>
<div class="t" style="left:483.15px;width:600px;text-align:center;top:589.3px;font-size:9.2px;line-height:13px;font-weight:bold;color:#fff;transform:scaleX(0.9782608695652175);transform-origin:50% 50%;">Mid</div>
<div class="a " style="left:797.2px;top:588.7px;width:23.199999999999932px;height:13.099999999999909px;background:#000;border:1px solid #8c8c8c;border-radius:3px"></div>
<div class="t" style="left:508.79999999999995px;width:600px;text-align:center;top:589.3px;font-size:9.2px;line-height:13px;font-weight:bold;color:#e8e8e8;transform:scaleX(0.9782608695652175);transform-origin:50% 50%;">Min</div>
<div class="t" style="right:754.2px;top:603.0px;font-size:9.5px;line-height:14px;font-weight:bold;color:#e8e278;transform:scaleX(0.9);transform-origin:100% 50%;">Scale</div>
<div class="t" style="left:-21.19999999999999px;width:600px;text-align:center;top:603.0px;font-size:9.5px;line-height:14px;font-weight:bold;color:#e8e278;transform:scaleX(0.9);transform-origin:50% 50%;">=</div>
<div class="t" style="left:288.2px;top:603.0px;font-size:9.5px;line-height:14px;font-weight:bold;color:#e8e278;transform:scaleX(0.9);transform-origin:0 50%;">6.25 hits/</div>
<div class="t" style="right:754.2px;top:615.9px;font-size:9.5px;line-height:14px;font-weight:bold;color:#e8e278;transform:scaleX(0.9);transform-origin:100% 50%;">Offset</div>
<div class="t" style="left:-21.19999999999999px;width:600px;text-align:center;top:615.9px;font-size:9.5px;line-height:14px;font-weight:bold;color:#e8e278;transform:scaleX(0.9);transform-origin:50% 50%;">=</div>
<div class="t" style="left:288.2px;top:615.9px;font-size:9.5px;line-height:14px;font-weight:bold;color:#e8e278;transform:scaleX(0.9);transform-origin:0 50%;"> 0 hits</div>
<div class="t" style="right:754.2px;top:628.7px;font-size:9.5px;line-height:14px;font-weight:bold;color:#e8e278;transform:scaleX(0.9);transform-origin:100% 50%;">Hits in Box</div>
<div class="t" style="left:-21.19999999999999px;width:600px;text-align:center;top:628.7px;font-size:9.5px;line-height:14px;font-weight:bold;color:#e8e278;transform:scaleX(0.9);transform-origin:50% 50%;">=</div>
<div class="t" style="left:288.2px;top:628.7px;font-size:9.5px;line-height:14px;font-weight:bold;color:#e8e278;transform:scaleX(0.9);transform-origin:0 50%;">204 hits</div>
<div class="t" style="right:754.2px;top:641.5px;font-size:9.5px;line-height:14px;font-weight:bold;color:#e8e278;transform:scaleX(0.9);transform-origin:100% 50%;">Waveforms</div>
<div class="t" style="left:-21.19999999999999px;width:600px;text-align:center;top:641.5px;font-size:9.5px;line-height:14px;font-weight:bold;color:#e8e278;transform:scaleX(0.9);transform-origin:50% 50%;">=</div>
<div class="t" style="left:288.2px;top:641.5px;font-size:9.5px;line-height:14px;font-weight:bold;color:#e8e278;transform:scaleX(0.9);transform-origin:0 50%;">89 Wfms</div>
<div class="t" style="right:754.2px;top:654.2px;font-size:9.5px;line-height:14px;font-weight:bold;color:#e8e278;transform:scaleX(0.9);transform-origin:100% 50%;">Min</div>
<div class="t" style="left:-21.19999999999999px;width:600px;text-align:center;top:654.2px;font-size:9.5px;line-height:14px;font-weight:bold;color:#e8e278;transform:scaleX(0.9);transform-origin:50% 50%;">=</div>
<div class="t" style="left:288.2px;top:654.2px;font-size:9.5px;line-height:14px;font-weight:bold;color:#e8e278;transform:scaleX(0.9);transform-origin:0 50%;">399.25 ps</div>
<div class="t" style="right:594.6px;top:603.0px;font-size:9.5px;line-height:14px;font-weight:bold;color:#e8e278;transform:scaleX(0.9);transform-origin:100% 50%;">Peak Hits</div>
<div class="t" style="left:137.7px;width:600px;text-align:center;top:603.0px;font-size:9.5px;line-height:14px;font-weight:bold;color:#e8e278;transform:scaleX(0.9);transform-origin:50% 50%;">=</div>
<div class="t" style="left:447.1px;top:603.0px;font-size:9.5px;line-height:14px;font-weight:bold;color:#e8e278;transform:scaleX(0.9);transform-origin:0 50%;">25 hits</div>
<div class="t" style="right:594.6px;top:615.9px;font-size:9.5px;line-height:14px;font-weight:bold;color:#e8e278;transform:scaleX(0.9);transform-origin:100% 50%;">Pk-Pk</div>
<div class="t" style="left:137.7px;width:600px;text-align:center;top:615.9px;font-size:9.5px;line-height:14px;font-weight:bold;color:#e8e278;transform:scaleX(0.9);transform-origin:50% 50%;">=</div>
<div class="t" style="left:447.1px;top:615.9px;font-size:9.5px;line-height:14px;font-weight:bold;color:#e8e278;transform:scaleX(0.9);transform-origin:0 50%;">8.75 ps</div>
<div class="t" style="right:594.6px;top:628.7px;font-size:9.5px;line-height:14px;font-weight:bold;color:#e8e278;transform:scaleX(0.9);transform-origin:100% 50%;">Median</div>
<div class="t" style="left:137.7px;width:600px;text-align:center;top:628.7px;font-size:9.5px;line-height:14px;font-weight:bold;color:#e8e278;transform:scaleX(0.9);transform-origin:50% 50%;">=</div>
<div class="t" style="left:447.1px;top:628.7px;font-size:9.5px;line-height:14px;font-weight:bold;color:#e8e278;transform:scaleX(0.9);transform-origin:0 50%;">403.63 ps</div>
<div class="t" style="right:594.6px;top:641.5px;font-size:9.5px;line-height:14px;font-weight:bold;color:#e8e278;transform:scaleX(0.9);transform-origin:100% 50%;">Mean</div>
<div class="t" style="left:137.7px;width:600px;text-align:center;top:641.5px;font-size:9.5px;line-height:14px;font-weight:bold;color:#e8e278;transform:scaleX(0.9);transform-origin:50% 50%;">=</div>
<div class="t" style="left:447.1px;top:641.5px;font-size:9.5px;line-height:14px;font-weight:bold;color:#e8e278;transform:scaleX(0.9);transform-origin:0 50%;">403.26 ps</div>
<div class="t" style="right:594.6px;top:654.2px;font-size:9.5px;line-height:14px;font-weight:bold;color:#e8e278;transform:scaleX(0.9);transform-origin:100% 50%;">Max-Max</div>
<div class="t" style="left:137.7px;width:600px;text-align:center;top:654.2px;font-size:9.5px;line-height:14px;font-weight:bold;color:#e8e278;transform:scaleX(0.9);transform-origin:50% 50%;">=</div>
<div class="t" style="left:447.1px;top:654.2px;font-size:9.5px;line-height:14px;font-weight:bold;color:#e8e278;transform:scaleX(0.9);transform-origin:0 50%;"> 0 s</div>
<div class="t" style="right:412.5px;top:603.0px;font-size:9.5px;line-height:14px;font-weight:bold;color:#e8e278;transform:scaleX(0.9);transform-origin:100% 50%;">Std Deviation</div>
<div class="t" style="left:320px;width:600px;text-align:center;top:603.0px;font-size:9.5px;line-height:14px;font-weight:bold;color:#e8e278;transform:scaleX(0.9);transform-origin:50% 50%;">=</div>
<div class="t" style="left:629.8px;top:603.0px;font-size:9.5px;line-height:14px;font-weight:bold;color:#e8e278;transform:scaleX(0.9);transform-origin:0 50%;">1.4831 ps</div>
<div class="t" style="right:412.5px;top:615.9px;font-size:9.5px;line-height:14px;font-weight:bold;color:#e8e278;transform:scaleX(0.9);transform-origin:100% 50%;">Mean ± 1 StdDev</div>
<div class="t" style="left:320px;width:600px;text-align:center;top:615.9px;font-size:9.5px;line-height:14px;font-weight:bold;color:#e8e278;transform:scaleX(0.9);transform-origin:50% 50%;">=</div>
<div class="t" style="left:629.8px;top:615.9px;font-size:9.5px;line-height:14px;font-weight:bold;color:#e8e278;transform:scaleX(0.9);transform-origin:0 50%;">72.059 %</div>
<div class="t" style="right:412.5px;top:628.7px;font-size:9.5px;line-height:14px;font-weight:bold;color:#e8e278;transform:scaleX(0.9);transform-origin:100% 50%;">Mean ± 2 StdDev</div>
<div class="t" style="left:320px;width:600px;text-align:center;top:628.7px;font-size:9.5px;line-height:14px;font-weight:bold;color:#e8e278;transform:scaleX(0.9);transform-origin:50% 50%;">=</div>
<div class="t" style="left:629.8px;top:628.7px;font-size:9.5px;line-height:14px;font-weight:bold;color:#e8e278;transform:scaleX(0.9);transform-origin:0 50%;">96.078 %</div>
<div class="t" style="right:412.5px;top:641.5px;font-size:9.5px;line-height:14px;font-weight:bold;color:#e8e278;transform:scaleX(0.9);transform-origin:100% 50%;">Mean ± 3 StdDev</div>
<div class="t" style="left:320px;width:600px;text-align:center;top:641.5px;font-size:9.5px;line-height:14px;font-weight:bold;color:#e8e278;transform:scaleX(0.9);transform-origin:50% 50%;">=</div>
<div class="t" style="left:629.8px;top:641.5px;font-size:9.5px;line-height:14px;font-weight:bold;color:#e8e278;transform:scaleX(0.9);transform-origin:0 50%;">99.51 %</div>
<div class="t" style="right:412.5px;top:654.2px;font-size:9.5px;line-height:14px;font-weight:bold;color:#e8e278;transform:scaleX(0.9);transform-origin:100% 50%;">Max</div>
<div class="t" style="left:320px;width:600px;text-align:center;top:654.2px;font-size:9.5px;line-height:14px;font-weight:bold;color:#e8e278;transform:scaleX(0.9);transform-origin:50% 50%;">=</div>
<div class="t" style="left:629.8px;top:654.2px;font-size:9.5px;line-height:14px;font-weight:bold;color:#e8e278;transform:scaleX(0.9);transform-origin:0 50%;">408 ps</div>
<div class="a " style="left:187px;top:676px;width:649px;height:117px;background:#ececec"></div>
<div class="a " style="left:189.4px;top:679.3px;width:22.299999999999983px;height:32.30000000000007px;background:linear-gradient(#8cc0e0,#5c9ccc);border:1px solid #5a7a9a;border-radius:3px"></div>
<div class="t" style="left:-99.44999999999999px;width:600px;text-align:center;top:681.5px;font-size:9.2px;line-height:13px;font-weight:bold;color:#fff;transform:scaleX(0.9782608695652175);transform-origin:50% 50%;">Ch1</div>
<div class="a " style="left:195.55px;top:697.3px;width:10.0px;height:8.0px;background:#f8f080;border:1px solid #333"></div>
<div class="a " style="left:214.8px;top:679.6px;width:72.39999999999998px;height:31.699999999999932px;background:#f4f4f4;border:1px solid #8a8a8a;border-radius:3px"></div>
<div class="a " style="left:215.8px;top:680.6px;width:70.39999999999998px;height:14.5px;background:#000;border-radius:2px 2px 0 0"></div>
<div class="t" style="left:218.8px;top:682.1px;font-size:9.2px;line-height:13px;font-weight:bold;color:#f0e890;transform:scaleX(0.9782608695652175);transform-origin:0 50%;">60 mV/div</div>
<div class="a " style="left:215.8px;top:695.1px;width:70.39999999999998px;height:2.5px;background:#e8e8e8"></div>
<div class="a " style="left:215.8px;top:695.1px;width:40.0px;height:2.0px;background:#7a30d0"></div>
<div class="a " style="left:215.8px;top:698.1px;width:12.394000000000005px;height:12.199999999999932px;background:linear-gradient(#fafafa,#e0e0e0)"></div>
<div class="t" style="left:-78.50299999999999px;width:600px;text-align:center;top:698.2px;font-size:9.5px;line-height:14px;font-weight:normal;color:#222;transform:scaleX(1);transform-origin:50% 50%;">▼</div>
<div class="a " style="left:228.19400000000002px;top:698.1px;width:14.47999999999999px;height:12.199999999999932px;background:linear-gradient(#fafafa,#e0e0e0);border-left:1px solid #b8b8b8"></div>
<div class="t" style="left:-64.56599999999997px;width:600px;text-align:center;top:698.2px;font-size:9.5px;line-height:14px;font-weight:normal;color:#222;transform:scaleX(1);transform-origin:50% 50%;">▲</div>
<div class="a " style="left:242.674px;top:698.1px;width:11.945999999999998px;height:12.199999999999932px;background:linear-gradient(#fafafa,#e0e0e0);border-left:1px solid #b8b8b8"></div>
<div class="t" style="left:-51.35300000000001px;width:600px;text-align:center;top:696.7px;font-size:11px;line-height:16px;font-weight:normal;color:#222;transform:scaleX(0.95);transform-origin:50% 50%;">D</div>
<div class="a " style="left:254.62px;top:698.1px;width:16.651999999999987px;height:12.199999999999932px;background:linear-gradient(#fafafa,#e0e0e0);border-left:1px solid #b8b8b8"></div>
<div class="t" style="left:-37.053999999999974px;width:600px;text-align:center;top:696.7px;font-size:12px;line-height:17px;font-weight:normal;color:#222;transform:scaleX(1);transform-origin:50% 50%;">▼</div>
<div class="a " style="left:271.272px;top:698.1px;width:14.927999999999997px;height:12.199999999999932px;background:linear-gradient(#fafafa,#e0e0e0);border-left:1px solid #b8b8b8"></div>
<div class="t" style="left:-20.76400000000001px;width:600px;text-align:center;top:696.7px;font-size:12px;line-height:17px;font-weight:normal;color:#222;transform:scaleX(1);transform-origin:50% 50%;">▲</div>
<div class="a btn" style="left:189.4px;top:720.4px;width:22.299999999999983px;height:24.200000000000045px;border-radius:3px"></div>
<div class="a " style="left:190.4px;top:732.5px;width:20.299999999999983px;height:11.100000000000023px;background:linear-gradient(#8cc0e0,#5c9ccc)"></div>
<div class="t" style="left:-99.44999999999999px;width:600px;text-align:center;top:720.95px;font-size:9.2px;line-height:13px;font-weight:bold;color:#3e3e3e;transform:scaleX(0.9782608695652175);transform-origin:50% 50%;">Pos</div>
<div class="t" style="left:-99.44999999999999px;width:600px;text-align:center;top:732.55px;font-size:9.2px;line-height:13px;font-weight:bold;color:#fff;transform:scaleX(0.9782608695652175);transform-origin:50% 50%;">Ofs</div>
<div class="a " style="left:214.8px;top:716px;width:72.39999999999998px;height:32px;background:#f4f4f4;border:1px solid #8a8a8a;border-radius:3px"></div>
<div class="a " style="left:215.8px;top:717px;width:70.39999999999998px;height:14.5px;background:#000;border-radius:2px 2px 0 0"></div>
<div class="t" style="left:218.8px;top:718.5px;font-size:9.2px;line-height:13px;font-weight:bold;color:#f0e890;transform:scaleX(0.9782608695652175);transform-origin:0 50%;">0 V</div>
<div class="a " style="left:215.8px;top:731.5px;width:70.39999999999998px;height:2.5px;background:#e8e8e8"></div>
<div class="a " style="left:250px;top:731.5px;width:1px;height:2.0px;background:#e03030"></div>
<div class="a " style="left:215.8px;top:734.5px;width:12.394000000000005px;height:12.5px;background:linear-gradient(#fafafa,#e0e0e0)"></div>
<div class="t" style="left:-78.50299999999999px;width:600px;text-align:center;top:734.75px;font-size:9.5px;line-height:14px;font-weight:normal;color:#222;transform:scaleX(1);transform-origin:50% 50%;">▼</div>
<div class="a " style="left:228.19400000000002px;top:734.5px;width:14.47999999999999px;height:12.5px;background:linear-gradient(#fafafa,#e0e0e0);border-left:1px solid #b8b8b8"></div>
<div class="t" style="left:-64.56599999999997px;width:600px;text-align:center;top:734.75px;font-size:9.5px;line-height:14px;font-weight:normal;color:#222;transform:scaleX(1);transform-origin:50% 50%;">▲</div>
<div class="a " style="left:242.674px;top:734.5px;width:11.945999999999998px;height:12.5px;background:linear-gradient(#fafafa,#e0e0e0);border-left:1px solid #b8b8b8"></div>
<div class="t" style="left:-51.35300000000001px;width:600px;text-align:center;top:733.25px;font-size:11px;line-height:16px;font-weight:normal;color:#222;transform:scaleX(0.95);transform-origin:50% 50%;">0</div>
<div class="a " style="left:254.62px;top:734.5px;width:16.651999999999987px;height:12.5px;background:linear-gradient(#fafafa,#e0e0e0);border-left:1px solid #b8b8b8"></div>
<div class="t" style="left:-37.053999999999974px;width:600px;text-align:center;top:733.25px;font-size:12px;line-height:17px;font-weight:normal;color:#222;transform:scaleX(1);transform-origin:50% 50%;">▼</div>
<div class="a " style="left:271.272px;top:734.5px;width:14.927999999999997px;height:12.5px;background:linear-gradient(#fafafa,#e0e0e0);border-left:1px solid #b8b8b8"></div>
<div class="t" style="left:-20.76400000000001px;width:600px;text-align:center;top:733.25px;font-size:12px;line-height:17px;font-weight:normal;color:#222;transform:scaleX(1);transform-origin:50% 50%;">▲</div>
<div class="a btn" style="left:291.9px;top:679.5px;width:22.5px;height:32.299999999999955px;border-radius:3px"></div>
<div class="t" style="left:3.1499999999999773px;width:600px;text-align:center;top:681.7px;font-size:9.2px;line-height:13px;font-weight:bold;color:#3e3e3e;transform:scaleX(0.9782608695652175);transform-origin:50% 50%;">Ch2</div>
<div class="a " style="left:298.15px;top:697.5px;width:10.0px;height:8.0px;background:#70e8f0;border:1px solid #333"></div>
<div class="a " style="left:317.3px;top:679.5px;width:72.39999999999998px;height:32.299999999999955px;background:#f0f0f0;border:1px solid #dadada;border-radius:4px"></div>
<div class="a " style="left:318.3px;top:695.5px;width:70.39999999999998px;height:2.0px;background:#e6e6e6"></div>
<div class="t" style="left:53.5px;width:600px;text-align:center;top:681.8px;font-size:9.2px;line-height:13px;font-weight:bold;color:#cacaca;transform:scaleX(0.9782608695652175);transform-origin:50% 50%;">150 mV/div</div>
<div class="a " style="left:330.694px;top:697.5px;width:1.0px;height:13.299999999999955px;background:#dcdcdc"></div>
<div class="a " style="left:345.174px;top:697.5px;width:1.0px;height:13.299999999999955px;background:#dcdcdc"></div>
<div class="a " style="left:357.12px;top:697.5px;width:1.0px;height:13.299999999999955px;background:#dcdcdc"></div>
<div class="a " style="left:373.772px;top:697.5px;width:1.0px;height:13.299999999999955px;background:#dcdcdc"></div>
<div class="t" style="left:23.997000000000014px;width:600px;text-align:center;top:698.15px;font-size:9px;line-height:13px;font-weight:normal;color:#d0d0d0;transform:scaleX(1);transform-origin:50% 50%;">▼</div>
<div class="t" style="left:37.93399999999997px;width:600px;text-align:center;top:698.15px;font-size:9px;line-height:13px;font-weight:normal;color:#d0d0d0;transform:scaleX(1);transform-origin:50% 50%;">▲</div>
<div class="t" style="left:51.14699999999999px;width:600px;text-align:center;top:696.65px;font-size:11px;line-height:16px;font-weight:normal;color:#d0d0d0;transform:scaleX(1);transform-origin:50% 50%;">D</div>
<div class="t" style="left:65.44600000000003px;width:600px;text-align:center;top:696.65px;font-size:11px;line-height:16px;font-weight:normal;color:#d0d0d0;transform:scaleX(1);transform-origin:50% 50%;">▼</div>
<div class="t" style="left:81.73599999999999px;width:600px;text-align:center;top:696.65px;font-size:11px;line-height:16px;font-weight:normal;color:#d0d0d0;transform:scaleX(1);transform-origin:50% 50%;">▲</div>
<div class="a " style="left:291.9px;top:720.4px;width:22.5px;height:24.200000000000045px;background:#f0f0f0;border:1px solid #d8d8d8;border-radius:3px"></div>
<div class="a " style="left:292.9px;top:732.5px;width:20.5px;height:11.100000000000023px;background:#dedede"></div>
<div class="t" style="left:3.1499999999999773px;width:600px;text-align:center;top:720.95px;font-size:9.2px;line-height:13px;font-weight:bold;color:#c8c8c8;transform:scaleX(0.9782608695652175);transform-origin:50% 50%;">Pos</div>
<div class="t" style="left:3.1499999999999773px;width:600px;text-align:center;top:732.55px;font-size:9.2px;line-height:13px;font-weight:bold;color:#d0d0d0;transform:scaleX(0.9782608695652175);transform-origin:50% 50%;">Ofs</div>
<div class="a " style="left:317.3px;top:716px;width:72.39999999999998px;height:32.299999999999955px;background:#f0f0f0;border:1px solid #dadada;border-radius:4px"></div>
<div class="a " style="left:318.3px;top:732px;width:70.39999999999998px;height:2px;background:#e6e6e6"></div>
<div class="t" style="left:53.5px;width:600px;text-align:center;top:718.3px;font-size:9.2px;line-height:13px;font-weight:bold;color:#cacaca;transform:scaleX(0.9782608695652175);transform-origin:50% 50%;">320 mV</div>
<div class="a " style="left:330.694px;top:734px;width:1.0px;height:13.299999999999955px;background:#dcdcdc"></div>
<div class="a " style="left:345.174px;top:734px;width:1.0px;height:13.299999999999955px;background:#dcdcdc"></div>
<div class="a " style="left:357.12px;top:734px;width:1.0px;height:13.299999999999955px;background:#dcdcdc"></div>
<div class="a " style="left:373.772px;top:734px;width:1.0px;height:13.299999999999955px;background:#dcdcdc"></div>
<div class="t" style="left:23.997000000000014px;width:600px;text-align:center;top:734.65px;font-size:9px;line-height:13px;font-weight:normal;color:#d0d0d0;transform:scaleX(1);transform-origin:50% 50%;">▼</div>
<div class="t" style="left:37.93399999999997px;width:600px;text-align:center;top:734.65px;font-size:9px;line-height:13px;font-weight:normal;color:#d0d0d0;transform:scaleX(1);transform-origin:50% 50%;">▲</div>
<div class="t" style="left:51.14699999999999px;width:600px;text-align:center;top:733.15px;font-size:11px;line-height:16px;font-weight:normal;color:#d0d0d0;transform:scaleX(1);transform-origin:50% 50%;">0</div>
<div class="t" style="left:65.44600000000003px;width:600px;text-align:center;top:733.15px;font-size:11px;line-height:16px;font-weight:normal;color:#d0d0d0;transform:scaleX(1);transform-origin:50% 50%;">▼</div>
<div class="t" style="left:81.73599999999999px;width:600px;text-align:center;top:733.15px;font-size:11px;line-height:16px;font-weight:normal;color:#d0d0d0;transform:scaleX(1);transform-origin:50% 50%;">▲</div>
<div class="a btn" style="left:394.20000000000005px;top:679.5px;width:22.5px;height:32.299999999999955px;border-radius:3px"></div>
<div class="t" style="left:105.45000000000005px;width:600px;text-align:center;top:681.7px;font-size:9.2px;line-height:13px;font-weight:bold;color:#3e3e3e;transform:scaleX(0.9782608695652175);transform-origin:50% 50%;">Ch3</div>
<div class="a " style="left:400.45000000000005px;top:697.5px;width:10.0px;height:8.0px;background:#60e080;border:1px solid #333"></div>
<div class="a " style="left:419.6px;top:679.5px;width:72.39999999999998px;height:32.299999999999955px;background:#f0f0f0;border:1px solid #dadada;border-radius:4px"></div>
<div class="a " style="left:420.6px;top:695.5px;width:70.39999999999998px;height:2.0px;background:#e6e6e6"></div>
<div class="t" style="left:155.8px;width:600px;text-align:center;top:681.8px;font-size:9.2px;line-height:13px;font-weight:bold;color:#cacaca;transform:scaleX(0.9782608695652175);transform-origin:50% 50%;">125 mV/div</div>
<div class="a " style="left:432.994px;top:697.5px;width:1.0px;height:13.299999999999955px;background:#dcdcdc"></div>
<div class="a " style="left:447.474px;top:697.5px;width:1.0px;height:13.299999999999955px;background:#dcdcdc"></div>
<div class="a " style="left:459.42px;top:697.5px;width:1.0px;height:13.299999999999955px;background:#dcdcdc"></div>
<div class="a " style="left:476.072px;top:697.5px;width:1.0px;height:13.299999999999955px;background:#dcdcdc"></div>
<div class="t" style="left:126.29700000000003px;width:600px;text-align:center;top:698.15px;font-size:9px;line-height:13px;font-weight:normal;color:#d0d0d0;transform:scaleX(1);transform-origin:50% 50%;">▼</div>
<div class="t" style="left:140.23400000000004px;width:600px;text-align:center;top:698.15px;font-size:9px;line-height:13px;font-weight:normal;color:#d0d0d0;transform:scaleX(1);transform-origin:50% 50%;">▲</div>
<div class="t" style="left:153.447px;width:600px;text-align:center;top:696.65px;font-size:11px;line-height:16px;font-weight:normal;color:#d0d0d0;transform:scaleX(1);transform-origin:50% 50%;">D</div>
<div class="t" style="left:167.74599999999998px;width:600px;text-align:center;top:696.65px;font-size:11px;line-height:16px;font-weight:normal;color:#d0d0d0;transform:scaleX(1);transform-origin:50% 50%;">▼</div>
<div class="t" style="left:184.036px;width:600px;text-align:center;top:696.65px;font-size:11px;line-height:16px;font-weight:normal;color:#d0d0d0;transform:scaleX(1);transform-origin:50% 50%;">▲</div>
<div class="a " style="left:394.20000000000005px;top:720.4px;width:22.5px;height:24.200000000000045px;background:#f0f0f0;border:1px solid #d8d8d8;border-radius:3px"></div>
<div class="a " style="left:395.20000000000005px;top:732.5px;width:20.5px;height:11.100000000000023px;background:#dedede"></div>
<div class="t" style="left:105.45000000000005px;width:600px;text-align:center;top:720.95px;font-size:9.2px;line-height:13px;font-weight:bold;color:#c8c8c8;transform:scaleX(0.9782608695652175);transform-origin:50% 50%;">Pos</div>
<div class="t" style="left:105.45000000000005px;width:600px;text-align:center;top:732.55px;font-size:9.2px;line-height:13px;font-weight:bold;color:#d0d0d0;transform:scaleX(0.9782608695652175);transform-origin:50% 50%;">Ofs</div>
<div class="a " style="left:419.6px;top:716px;width:72.39999999999998px;height:32.299999999999955px;background:#f0f0f0;border:1px solid #dadada;border-radius:4px"></div>
<div class="a " style="left:420.6px;top:732px;width:70.39999999999998px;height:2px;background:#e6e6e6"></div>
<div class="t" style="left:155.8px;width:600px;text-align:center;top:718.3px;font-size:9.2px;line-height:13px;font-weight:bold;color:#cacaca;transform:scaleX(0.9782608695652175);transform-origin:50% 50%;">–330 mV</div>
<div class="a " style="left:432.994px;top:734px;width:1.0px;height:13.299999999999955px;background:#dcdcdc"></div>
<div class="a " style="left:447.474px;top:734px;width:1.0px;height:13.299999999999955px;background:#dcdcdc"></div>
<div class="a " style="left:459.42px;top:734px;width:1.0px;height:13.299999999999955px;background:#dcdcdc"></div>
<div class="a " style="left:476.072px;top:734px;width:1.0px;height:13.299999999999955px;background:#dcdcdc"></div>
<div class="t" style="left:126.29700000000003px;width:600px;text-align:center;top:734.65px;font-size:9px;line-height:13px;font-weight:normal;color:#d0d0d0;transform:scaleX(1);transform-origin:50% 50%;">▼</div>
<div class="t" style="left:140.23400000000004px;width:600px;text-align:center;top:734.65px;font-size:9px;line-height:13px;font-weight:normal;color:#d0d0d0;transform:scaleX(1);transform-origin:50% 50%;">▲</div>
<div class="t" style="left:153.447px;width:600px;text-align:center;top:733.15px;font-size:11px;line-height:16px;font-weight:normal;color:#d0d0d0;transform:scaleX(1);transform-origin:50% 50%;">0</div>
<div class="t" style="left:167.74599999999998px;width:600px;text-align:center;top:733.15px;font-size:11px;line-height:16px;font-weight:normal;color:#d0d0d0;transform:scaleX(1);transform-origin:50% 50%;">▼</div>
<div class="t" style="left:184.036px;width:600px;text-align:center;top:733.15px;font-size:11px;line-height:16px;font-weight:normal;color:#d0d0d0;transform:scaleX(1);transform-origin:50% 50%;">▲</div>
<div class="a btn" style="left:496.4px;top:679.5px;width:22.5px;height:32.299999999999955px;border-radius:3px"></div>
<div class="t" style="left:207.64999999999998px;width:600px;text-align:center;top:681.7px;font-size:9.2px;line-height:13px;font-weight:bold;color:#3e3e3e;transform:scaleX(0.9782608695652175);transform-origin:50% 50%;">Ch4</div>
<div class="a " style="left:502.65px;top:697.5px;width:10.0px;height:8.0px;background:#f090c8;border:1px solid #333"></div>
<div class="a " style="left:521.8px;top:679.5px;width:72.40000000000009px;height:32.299999999999955px;background:#f0f0f0;border:1px solid #dadada;border-radius:4px"></div>
<div class="a " style="left:522.8px;top:695.5px;width:70.40000000000009px;height:2.0px;background:#e6e6e6"></div>
<div class="t" style="left:258.0px;width:600px;text-align:center;top:681.8px;font-size:9.2px;line-height:13px;font-weight:bold;color:#cacaca;transform:scaleX(0.9782608695652175);transform-origin:50% 50%;">80 mV/div</div>
<div class="a " style="left:535.194px;top:697.5px;width:1.0px;height:13.299999999999955px;background:#dcdcdc"></div>
<div class="a " style="left:549.674px;top:697.5px;width:1.0px;height:13.299999999999955px;background:#dcdcdc"></div>
<div class="a " style="left:561.62px;top:697.5px;width:1.0px;height:13.299999999999955px;background:#dcdcdc"></div>
<div class="a " style="left:578.272px;top:697.5px;width:1.0px;height:13.299999999999955px;background:#dcdcdc"></div>
<div class="t" style="left:228.49699999999996px;width:600px;text-align:center;top:698.15px;font-size:9px;line-height:13px;font-weight:normal;color:#d0d0d0;transform:scaleX(1);transform-origin:50% 50%;">▼</div>
<div class="t" style="left:242.43399999999997px;width:600px;text-align:center;top:698.15px;font-size:9px;line-height:13px;font-weight:normal;color:#d0d0d0;transform:scaleX(1);transform-origin:50% 50%;">▲</div>
<div class="t" style="left:255.64699999999993px;width:600px;text-align:center;top:696.65px;font-size:11px;line-height:16px;font-weight:normal;color:#d0d0d0;transform:scaleX(1);transform-origin:50% 50%;">D</div>
<div class="t" style="left:269.946px;width:600px;text-align:center;top:696.65px;font-size:11px;line-height:16px;font-weight:normal;color:#d0d0d0;transform:scaleX(1);transform-origin:50% 50%;">▼</div>
<div class="t" style="left:286.2360000000001px;width:600px;text-align:center;top:696.65px;font-size:11px;line-height:16px;font-weight:normal;color:#d0d0d0;transform:scaleX(1);transform-origin:50% 50%;">▲</div>
<div class="a " style="left:496.4px;top:720.4px;width:22.5px;height:24.200000000000045px;background:#f0f0f0;border:1px solid #d8d8d8;border-radius:3px"></div>
<div class="a " style="left:497.4px;top:732.5px;width:20.5px;height:11.100000000000023px;background:#dedede"></div>
<div class="t" style="left:207.64999999999998px;width:600px;text-align:center;top:720.95px;font-size:9.2px;line-height:13px;font-weight:bold;color:#c8c8c8;transform:scaleX(0.9782608695652175);transform-origin:50% 50%;">Pos</div>
<div class="t" style="left:207.64999999999998px;width:600px;text-align:center;top:732.55px;font-size:9.2px;line-height:13px;font-weight:bold;color:#d0d0d0;transform:scaleX(0.9782608695652175);transform-origin:50% 50%;">Ofs</div>
<div class="a " style="left:521.8px;top:716px;width:72.40000000000009px;height:32.299999999999955px;background:#f0f0f0;border:1px solid #dadada;border-radius:4px"></div>
<div class="a " style="left:522.8px;top:732px;width:70.40000000000009px;height:2px;background:#e6e6e6"></div>
<div class="t" style="left:258.0px;width:600px;text-align:center;top:718.3px;font-size:9.2px;line-height:13px;font-weight:bold;color:#cacaca;transform:scaleX(0.9782608695652175);transform-origin:50% 50%;">0 div</div>
<div class="a " style="left:535.194px;top:734px;width:1.0px;height:13.299999999999955px;background:#dcdcdc"></div>
<div class="a " style="left:549.674px;top:734px;width:1.0px;height:13.299999999999955px;background:#dcdcdc"></div>
<div class="a " style="left:561.62px;top:734px;width:1.0px;height:13.299999999999955px;background:#dcdcdc"></div>
<div class="a " style="left:578.272px;top:734px;width:1.0px;height:13.299999999999955px;background:#dcdcdc"></div>
<div class="t" style="left:228.49699999999996px;width:600px;text-align:center;top:734.65px;font-size:9px;line-height:13px;font-weight:normal;color:#d0d0d0;transform:scaleX(1);transform-origin:50% 50%;">▼</div>
<div class="t" style="left:242.43399999999997px;width:600px;text-align:center;top:734.65px;font-size:9px;line-height:13px;font-weight:normal;color:#d0d0d0;transform:scaleX(1);transform-origin:50% 50%;">▲</div>
<div class="t" style="left:255.64699999999993px;width:600px;text-align:center;top:733.15px;font-size:11px;line-height:16px;font-weight:normal;color:#d0d0d0;transform:scaleX(1);transform-origin:50% 50%;">0</div>
<div class="t" style="left:269.946px;width:600px;text-align:center;top:733.15px;font-size:11px;line-height:16px;font-weight:normal;color:#d0d0d0;transform:scaleX(1);transform-origin:50% 50%;">▼</div>
<div class="t" style="left:286.2360000000001px;width:600px;text-align:center;top:733.15px;font-size:11px;line-height:16px;font-weight:normal;color:#d0d0d0;transform:scaleX(1);transform-origin:50% 50%;">▲</div>
<div class="a " style="left:630.8px;top:678.3px;width:77.30000000000007px;height:34.30000000000007px;border:2px solid #4a7ab0;border-radius:4px"></div>
<div class="a " style="left:632.8px;top:679.8px;width:73.30000000000007px;height:31.300000000000068px;background:#f4f4f4;border:1px solid #8a8a8a;border-radius:3px"></div>
<div class="a " style="left:633.8px;top:680.8px;width:71.30000000000007px;height:14.5px;background:#000;border-radius:2px 2px 0 0"></div>
<div class="t" style="left:636.8px;top:682.3px;font-size:9.2px;line-height:13px;font-weight:bold;color:#fff;transform:scaleX(0.9782608695652175);transform-origin:0 50%;">50 ps/div</div>
<div class="a " style="left:633.8px;top:695.3px;width:71.30000000000007px;height:2.5px;background:#e8e8e8"></div>
<div class="a " style="left:633.8px;top:695.3px;width:18.0px;height:2.0px;background:#7a30d0"></div>
<div class="a " style="left:633.8px;top:698.3px;width:12.560500000000047px;height:11.800000000000068px;background:linear-gradient(#fafafa,#e0e0e0)"></div>
<div class="t" style="left:339.58025px;width:600px;text-align:center;top:697.2px;font-size:10.5px;line-height:15px;font-weight:normal;color:#222;transform:scaleX(1);transform-origin:50% 50%;">◀</div>
<div class="a " style="left:646.3605px;top:698.3px;width:14.659999999999968px;height:11.800000000000068px;background:linear-gradient(#fafafa,#e0e0e0);border-left:1px solid #b8b8b8"></div>
<div class="t" style="left:353.69049999999993px;width:600px;text-align:center;top:697.2px;font-size:10.5px;line-height:15px;font-weight:normal;color:#222;transform:scaleX(1);transform-origin:50% 50%;">▶</div>
<div class="a " style="left:661.0205px;top:698.3px;width:12.094500000000039px;height:11.800000000000068px;background:linear-gradient(#fafafa,#e0e0e0);border-left:1px solid #b8b8b8"></div>
<div class="t" style="left:367.06774999999993px;width:600px;text-align:center;top:696.7px;font-size:11px;line-height:16px;font-weight:normal;color:#222;transform:scaleX(0.95);transform-origin:50% 50%;">D</div>
<div class="a " style="left:673.115px;top:698.3px;width:16.859000000000037px;height:11.800000000000068px;background:linear-gradient(#fafafa,#e0e0e0);border-left:1px solid #b8b8b8"></div>
<div class="t" style="left:381.54449999999997px;width:600px;text-align:center;top:697.2px;font-size:10.5px;line-height:15px;font-weight:normal;color:#222;transform:scaleX(1);transform-origin:50% 50%;">◀</div>
<div class="a " style="left:689.974px;top:698.3px;width:15.125999999999976px;height:11.800000000000068px;background:linear-gradient(#fafafa,#e0e0e0);border-left:1px solid #b8b8b8"></div>
<div class="t" style="left:398.03700000000003px;width:600px;text-align:center;top:697.2px;font-size:10.5px;line-height:15px;font-weight:normal;color:#222;transform:scaleX(1);transform-origin:50% 50%;">▶</div>
<div class="a btn" style="left:604.7px;top:720.9px;width:25.59999999999991px;height:23.200000000000045px;border-radius:3px"></div>
<div class="a " style="left:605.7px;top:732.5px;width:23.59999999999991px;height:10.600000000000023px;background:linear-gradient(#8cc0e0,#5c9ccc)"></div>
<div class="t" style="left:317.5px;width:600px;text-align:center;top:721.2px;font-size:9.2px;line-height:13px;font-weight:bold;color:#3e3e3e;transform:scaleX(0.9782608695652175);transform-origin:50% 50%;">Pos</div>
<div class="t" style="left:317.5px;width:600px;text-align:center;top:732.3px;font-size:9.2px;line-height:13px;font-weight:bold;color:#fff;transform:scaleX(0.8695652173913044);transform-origin:50% 50%;">Delay</div>
<div class="a " style="left:633.5px;top:716px;width:72.10000000000002px;height:31.799999999999955px;background:#f4f4f4;border:1px solid #8a8a8a;border-radius:3px"></div>
<div class="a " style="left:634.5px;top:717px;width:70.10000000000002px;height:14.5px;background:#000;border-radius:2px 2px 0 0"></div>
<div class="t" style="left:637.5px;top:718.5px;font-size:9.2px;line-height:13px;font-weight:bold;color:#fff;transform:scaleX(0.9782608695652175);transform-origin:0 50%;">400 ps</div>
<div class="a " style="left:634.5px;top:731.5px;width:70.10000000000002px;height:2.5px;background:#e8e8e8"></div>
<div class="a " style="left:665px;top:731.5px;width:1px;height:2.0px;background:#e03030"></div>
<div class="a " style="left:634.5px;top:734.5px;width:12.338499999999954px;height:12.299999999999955px;background:linear-gradient(#fafafa,#e0e0e0)"></div>
<div class="t" style="left:340.1692499999999px;width:600px;text-align:center;top:733.65px;font-size:10.5px;line-height:15px;font-weight:normal;color:#222;transform:scaleX(1);transform-origin:50% 50%;">◀</div>
<div class="a " style="left:646.8385px;top:734.5px;width:14.420000000000073px;height:12.299999999999955px;background:linear-gradient(#fafafa,#e0e0e0);border-left:1px solid #b8b8b8"></div>
<div class="t" style="left:354.0485px;width:600px;text-align:center;top:733.65px;font-size:10.5px;line-height:15px;font-weight:normal;color:#222;transform:scaleX(1);transform-origin:50% 50%;">▶</div>
<div class="a " style="left:661.2585px;top:734.5px;width:11.896499999999946px;height:12.299999999999955px;background:linear-gradient(#fafafa,#e0e0e0);border-left:1px solid #b8b8b8"></div>
<div class="t" style="left:367.20675000000006px;width:600px;text-align:center;top:733.15px;font-size:11px;line-height:16px;font-weight:normal;color:#222;transform:scaleX(0.95);transform-origin:50% 50%;">0</div>
<div class="a " style="left:673.155px;top:734.5px;width:16.583000000000084px;height:12.299999999999955px;background:linear-gradient(#fafafa,#e0e0e0);border-left:1px solid #b8b8b8"></div>
<div class="t" style="left:381.4465px;width:600px;text-align:center;top:733.65px;font-size:10.5px;line-height:15px;font-weight:normal;color:#222;transform:scaleX(1);transform-origin:50% 50%;">◀</div>
<div class="a " style="left:689.738px;top:734.5px;width:14.861999999999966px;height:12.299999999999955px;background:linear-gradient(#fafafa,#e0e0e0);border-left:1px solid #b8b8b8"></div>
<div class="t" style="left:397.6690000000001px;width:600px;text-align:center;top:733.65px;font-size:10.5px;line-height:15px;font-weight:normal;color:#222;transform:scaleX(1);transform-origin:50% 50%;">▶</div>
<div class="a btn" style="left:715.4px;top:679.3px;width:31.700000000000045px;height:50.90000000000009px;border-radius:3px"></div>
<div class="t" style="left:431.20000000000005px;width:600px;text-align:center;top:679.9px;font-size:9.2px;line-height:13px;font-weight:bold;color:#3e3e3e;transform:scaleX(0.9782608695652175);transform-origin:50% 50%;">Ch1</div>
<div class="a " style="left:716.4px;top:691.52px;width:29.700000000000045px;height:1.0px;background:#b0b0b0"></div>
<div class="t" style="left:431.20000000000005px;width:600px;text-align:center;top:692.62px;font-size:9.2px;line-height:13px;font-weight:bold;color:#3e3e3e;transform:scaleX(0.9782608695652175);transform-origin:50% 50%;">Ch2</div>
<div class="a " style="left:716.4px;top:704.74px;width:29.700000000000045px;height:12.720000000000027px;background:linear-gradient(#8cc0e0,#5c9ccc)"></div>
<div class="a " style="left:716.4px;top:704.24px;width:29.700000000000045px;height:1.0px;background:#b0b0b0"></div>
<div class="t" style="left:431.20000000000005px;width:600px;text-align:center;top:705.34px;font-size:9.2px;line-height:13px;font-weight:bold;color:#fff;transform:scaleX(0.9782608695652175);transform-origin:50% 50%;">Ch3</div>
<div class="a " style="left:716.4px;top:716.9599999999999px;width:29.700000000000045px;height:1.0px;background:#b0b0b0"></div>
<div class="t" style="left:431.20000000000005px;width:600px;text-align:center;top:718.06px;font-size:9.2px;line-height:13px;font-weight:bold;color:#3e3e3e;transform:scaleX(0.9782608695652175);transform-origin:50% 50%;">Ch4</div>
<div class="a " style="left:750.8px;top:679.3px;width:74.30000000000007px;height:32.200000000000045px;background:#f4f4f4;border:1px solid #8a8a8a;border-radius:3px"></div>
<div class="a " style="left:751.8px;top:680.3px;width:72.30000000000007px;height:14.5px;background:#000;border-radius:2px 2px 0 0"></div>
<div class="t" style="left:754.8px;top:681.8px;font-size:9.2px;line-height:13px;font-weight:bold;color:#50e050;transform:scaleX(0.9782608695652175);transform-origin:0 50%;">–423.7 mV</div>
<div class="a " style="left:751.8px;top:694.8px;width:72.30000000000007px;height:2.5px;background:#e8e8e8"></div>
<div class="a " style="left:751.8px;top:697.8px;width:12.745499999999993px;height:12.700000000000045px;background:linear-gradient(#fafafa,#e0e0e0)"></div>
<div class="t" style="left:457.67274999999995px;width:600px;text-align:center;top:698.15px;font-size:9.5px;line-height:14px;font-weight:normal;color:#222;transform:scaleX(1);transform-origin:50% 50%;">▼</div>
<div class="a " style="left:764.5455px;top:697.8px;width:14.860000000000014px;height:12.700000000000045px;background:linear-gradient(#fafafa,#e0e0e0);border-left:1px solid #b8b8b8"></div>
<div class="t" style="left:471.9755px;width:600px;text-align:center;top:698.15px;font-size:9.5px;line-height:14px;font-weight:normal;color:#222;transform:scaleX(1);transform-origin:50% 50%;">▲</div>
<div class="a " style="left:779.4055px;top:697.8px;width:12.259500000000003px;height:12.700000000000045px;background:linear-gradient(#fafafa,#e0e0e0);border-left:1px solid #b8b8b8"></div>
<div class="t" style="left:485.5352499999999px;width:600px;text-align:center;top:696.65px;font-size:11px;line-height:16px;font-weight:normal;color:#222;transform:scaleX(0.95);transform-origin:50% 50%;">0</div>
<div class="a " style="left:791.665px;top:697.8px;width:17.089000000000055px;height:12.700000000000045px;background:linear-gradient(#fafafa,#e0e0e0);border-left:1px solid #b8b8b8"></div>
<div class="t" style="left:500.20949999999993px;width:600px;text-align:center;top:696.65px;font-size:12px;line-height:17px;font-weight:normal;color:#222;transform:scaleX(1);transform-origin:50% 50%;">▼</div>
<div class="a " style="left:808.754px;top:697.8px;width:15.346000000000004px;height:12.700000000000045px;background:linear-gradient(#fafafa,#e0e0e0);border-left:1px solid #b8b8b8"></div>
<div class="t" style="left:516.927px;width:600px;text-align:center;top:696.65px;font-size:12px;line-height:17px;font-weight:normal;color:#222;transform:scaleX(1);transform-origin:50% 50%;">▲</div>
<div class="a " style="left:772.5px;top:695px;width:15.200000000000045px;height:2.2999999999999545px;background:#7a30d0"></div>
<div class="a btn" style="left:750.8px;top:715.3px;width:73.80000000000007px;height:14.100000000000023px;border-radius:3px"></div>
<div class="a " style="left:751.8px;top:716.3px;width:36.60000000000002px;height:12.100000000000023px;background:linear-gradient(#8cc0e0,#5c9ccc)"></div>
<div class="t" style="left:469.5999999999999px;width:600px;text-align:center;top:716.3499999999999px;font-size:9.2px;line-height:13px;font-weight:bold;color:#fff;transform:scaleX(0.9782608695652175);transform-origin:50% 50%;">Freerun</div>
<div class="a " style="left:788.4px;top:716.3px;width:1.0px;height:12.100000000000023px;background:#9a9a9a"></div>
<div class="t" style="left:506.5px;width:600px;text-align:center;top:716.3499999999999px;font-size:9.2px;line-height:13px;font-weight:bold;color:#3e3e3e;transform:scaleX(0.9782608695652175);transform-origin:50% 50%;">Trig'd</div>
<div class="a btn" style="left:714.6px;top:733.1px;width:110.0px;height:14.699999999999932px;border-radius:3px"></div>
<div class="a " style="left:715.6px;top:734.1px;width:35.69999999999993px;height:12.699999999999932px;background:linear-gradient(#8cc0e0,#5c9ccc)"></div>
<div class="t" style="left:432.95000000000005px;width:600px;text-align:center;top:734.45px;font-size:9.2px;line-height:13px;font-weight:bold;color:#fff;transform:scaleX(0.9782608695652175);transform-origin:50% 50%;">Pos</div>
<div class="a " style="left:751.3px;top:734.1px;width:1.0px;height:12.699999999999932px;background:#9a9a9a"></div>
<div class="t" style="left:469.8499999999999px;width:600px;text-align:center;top:734.45px;font-size:9.2px;line-height:13px;font-weight:bold;color:#3e3e3e;transform:scaleX(0.9782608695652175);transform-origin:50% 50%;">Neg</div>
<div class="a " style="left:788.4px;top:734.1px;width:1.0px;height:12.699999999999932px;background:#9a9a9a"></div>
<div class="t" style="left:506.5px;width:600px;text-align:center;top:734.45px;font-size:9.2px;line-height:13px;font-weight:bold;color:#3e3e3e;transform:scaleX(0.9782608695652175);transform-origin:50% 50%;">Bislope</div>
<div class="a " style="left:189.6px;top:753.2px;width:635.1px;height:15.799999999999955px;background:linear-gradient(#fdfdfd,#f2f2f2 50%,#e4e4e4);border:1px solid #6a6a6a"></div>
<div class="a " style="left:189.6px;top:768px;width:237.9px;height:15.700000000000045px;background:linear-gradient(#fdfdfd,#f2f2f2 50%,#e4e4e4);border:1px solid #6a6a6a;border-top:none"></div>
<div class="a " style="left:427.5px;top:768px;width:317.20000000000005px;height:15.700000000000045px;background:#ececec;border-bottom:1px solid #c4c4c4"></div>
<div class="a " style="left:506.8px;top:769px;width:1.0px;height:14px;background:#a8a8a8"></div>
<div class="a " style="left:586.1px;top:769px;width:1.0px;height:14px;background:#a8a8a8"></div>
<div class="a " style="left:665.4px;top:769px;width:1.0px;height:14px;background:#a8a8a8"></div>
<div class="a " style="left:744.7px;top:768px;width:80.0px;height:15.700000000000045px;background:linear-gradient(#fdfdfd,#f2f2f2 50%,#e4e4e4);border:1px solid #6a6a6a;border-top:none"></div>
<div class="t" style="left:213.6px;top:755.5500000000001px;font-size:9.2px;line-height:13px;font-weight:bold;color:#3e3e3e;transform:scaleX(0.9782608695652175);transform-origin:0 50%;">Channels</div>
<div class="a " style="left:268.9px;top:753.2px;width:1.0px;height:15.299999999999955px;background:#6a6a6a"></div>
<div class="t" style="left:292.9px;top:755.5500000000001px;font-size:9.2px;line-height:13px;font-weight:bold;color:#3e3e3e;transform:scaleX(0.9782608695652175);transform-origin:0 50%;">Acquire</div>
<div class="a " style="left:348.2px;top:753.2px;width:1.0px;height:15.299999999999955px;background:#6a6a6a"></div>
<div class="t" style="left:372.2px;top:755.5500000000001px;font-size:9.2px;line-height:13px;font-weight:bold;color:#3e3e3e;transform:scaleX(0.9782608695652175);transform-origin:0 50%;">Trigger</div>
<div class="a " style="left:427.5px;top:753.2px;width:1.0px;height:15.299999999999955px;background:#6a6a6a"></div>
<div class="t" style="left:451.5px;top:755.5500000000001px;font-size:9.2px;line-height:13px;font-weight:bold;color:#3e3e3e;transform:scaleX(0.9782608695652175);transform-origin:0 50%;">Display</div>
<div class="a " style="left:506.8px;top:753.2px;width:1.0px;height:15.299999999999955px;background:#6a6a6a"></div>
<div class="t" style="left:530.8px;top:755.5500000000001px;font-size:9.2px;line-height:13px;font-weight:bold;color:#3e3e3e;transform:scaleX(0.9782608695652175);transform-origin:0 50%;">Save/Recall</div>
<div class="a " style="left:586.1px;top:753.2px;width:1.0px;height:15.299999999999955px;background:#6a6a6a"></div>
<div class="t" style="left:610.1px;top:755.5500000000001px;font-size:9.2px;line-height:13px;font-weight:bold;color:#3e3e3e;transform:scaleX(0.9782608695652175);transform-origin:0 50%;">Marker</div>
<div class="a " style="left:666.4px;top:754.2px;width:78.30000000000007px;height:14.299999999999955px;background:linear-gradient(#9ccae0,#6aa6d2 55%,#4f8fc6)"></div>
<div class="a " style="left:665.4px;top:753.2px;width:1.0px;height:15.299999999999955px;background:#6a6a6a"></div>
<div class="t" style="left:689.4px;top:755.5500000000001px;font-size:9.2px;line-height:13px;font-weight:bold;color:#fff;transform:scaleX(0.9782608695652175);transform-origin:0 50%;">Measure</div>
<div class="a " style="left:744.7px;top:753.2px;width:1.0px;height:15.299999999999955px;background:#6a6a6a"></div>
<div class="t" style="left:768.7px;top:755.5500000000001px;font-size:9.2px;line-height:13px;font-weight:bold;color:#3e3e3e;transform:scaleX(0.9782608695652175);transform-origin:0 50%;">Math</div>
<div class="a " style="left:190.6px;top:769.5px;width:78.29999999999998px;height:13.200000000000045px;background:linear-gradient(#9ccae0,#6aa6d2 55%,#4f8fc6)"></div>
<div class="t" style="left:213.6px;top:770.8000000000001px;font-size:9.2px;line-height:13px;font-weight:bold;color:#fff;transform:scaleX(0.9782608695652175);transform-origin:0 50%;">Histogram</div>
<div class="a " style="left:268.9px;top:768.5px;width:1.0px;height:15.200000000000045px;background:#6a6a6a"></div>
<div class="t" style="left:292.9px;top:770.8000000000001px;font-size:9.2px;line-height:13px;font-weight:bold;color:#3e3e3e;transform:scaleX(0.9782608695652175);transform-origin:0 50%;">Eye Diagram</div>
<div class="a " style="left:348.2px;top:768.5px;width:1.0px;height:15.200000000000045px;background:#6a6a6a"></div>
<div class="t" style="left:372.2px;top:770.8000000000001px;font-size:9.2px;line-height:13px;font-weight:bold;color:#3e3e3e;transform:scaleX(0.9782608695652175);transform-origin:0 50%;">Mask Test</div>
<div class="t" style="left:768.7px;top:770.8000000000001px;font-size:9.2px;line-height:13px;font-weight:bold;color:#3e3e3e;transform:scaleX(0.9782608695652175);transform-origin:0 50%;">Utility</div>
<div class="a " style="left:189.6px;top:768px;width:635.1px;height:1px;background:#6a6a6a"></div>
<div class="a " style="left:427px;top:768px;width:1px;height:15.700000000000045px;background:#6a6a6a"></div>
<div class="a " style="left:837px;top:33px;width:183px;height:44.5px;background:#d6d6d6"></div>
<div class="a " style="left:837px;top:77.5px;width:183px;height:715.5px;background:#fdfdfd"></div>
<div class="t" style="left:863.4px;top:34.7px;font-size:13.2px;line-height:19px;font-weight:bold;color:#6e6e6e;transform:scaleX(0.955);transform-origin:0 50%;">Measure</div>
<div class="a btn" style="left:945.3px;top:37px;width:46.5px;height:15.299999999999997px;"></div>
<div class="t" style="left:969.5px;top:38.65px;font-size:9.2px;line-height:13px;font-weight:bold;color:#3e3e3e;transform:scaleX(0.9782608695652175);transform-origin:0 50%;">Help</div>
<div class="a btn" style="left:995.4px;top:37px;width:17.399999999999977px;height:15.299999999999997px;"></div>
<div class="a btn" style="left:844.2px;top:59.3px;width:169.5px;height:14.900000000000006px;border-radius:3px"></div>
<div class="a " style="left:845.2px;top:60.3px;width:56.09999999999991px;height:12.900000000000006px;background:linear-gradient(#8cc0e0,#5c9ccc)"></div>
<div class="t" style="left:572.75px;width:600px;text-align:center;top:60.75px;font-size:9.2px;line-height:13px;font-weight:bold;color:#fff;transform:scaleX(0.9782608695652175);transform-origin:50% 50%;">Parameter</div>
<div class="a " style="left:901.3px;top:60.3px;width:1.0px;height:12.900000000000006px;background:#9a9a9a"></div>
<div class="t" style="left:629.3499999999999px;width:600px;text-align:center;top:60.75px;font-size:9.2px;line-height:13px;font-weight:bold;color:#3e3e3e;transform:scaleX(0.9782608695652175);transform-origin:50% 50%;">Definition</div>
<div class="a " style="left:957.4px;top:60.3px;width:1.0px;height:12.900000000000006px;background:#9a9a9a"></div>
<div class="t" style="left:685.55px;width:600px;text-align:center;top:60.75px;font-size:9.2px;line-height:13px;font-weight:bold;color:#3e3e3e;transform:scaleX(0.9782608695652175);transform-origin:50% 50%;">Limit Test</div>
<div class="t" style="left:847px;top:79.2px;font-size:10.5px;line-height:15px;font-weight:bold;color:#222;transform:scaleX(0.9);transform-origin:0 50%;">Display</div>
<div class="t" style="left:932.5px;top:79.2px;font-size:10.5px;line-height:15px;font-weight:bold;color:#acacac;transform:scaleX(0.9);transform-origin:0 50%;">Mode</div>
<div class="a " style="left:846.4px;top:94px;width:78.60000000000002px;height:45.30000000000001px;background:linear-gradient(#fefefe,#e6e6e6);border:1px solid #6a6a6a;border-radius:3px;overflow:hidden"></div>
<div class="a " style="left:847.4px;top:95.0px;width:76.60000000000002px;height:14.100000000000009px;background:linear-gradient(#9ccae0,#6aa6d2 55%,#4f8fc6);border-radius:2px 2px 0 0"></div>
<div class="a " style="left:847.4px;top:110.10000000000001px;width:76.60000000000002px;height:14.100000000000009px;background:linear-gradient(#fefefe,#f0f0f0 50%,#dedede)"></div>
<div class="a " style="left:847.4px;top:108.60000000000001px;width:76.60000000000002px;height:1.0px;background:#6a6a6a"></div>
<div class="a " style="left:847.4px;top:125.2px;width:76.60000000000002px;height:14.100000000000009px;background:linear-gradient(#fefefe,#f0f0f0 50%,#dedede)"></div>
<div class="a " style="left:847.4px;top:123.7px;width:76.60000000000002px;height:1.0px;background:#6a6a6a"></div>
<div class="t" style="left:871px;top:95.8px;font-size:9.2px;line-height:13px;font-weight:bold;color:#fff;transform:scaleX(0.9782608695652175);transform-origin:0 50%;">Off</div>
<div class="t" style="left:871px;top:110.8px;font-size:9.2px;line-height:13px;font-weight:bold;color:#3e3e3e;transform:scaleX(0.9782608695652175);transform-origin:0 50%;">Parameters</div>
<div class="t" style="left:871px;top:125.80000000000001px;font-size:9.2px;line-height:13px;font-weight:bold;color:#3e3e3e;transform:scaleX(0.9782608695652175);transform-origin:0 50%;">Statistics</div>
<div class="a " style="left:932px;top:94px;width:78.60000000000002px;height:30.5px;background:#f6f6f6;border:1px solid #dcdcdc;border-radius:3px"></div>
<div class="a " style="left:933px;top:95px;width:76.60000000000002px;height:14px;background:linear-gradient(#ececec,#dedede)"></div>
<div class="a " style="left:933px;top:109px;width:76.60000000000002px;height:1px;background:#dcdcdc"></div>
<div class="t" style="left:956px;top:95.8px;font-size:9.2px;line-height:13px;font-weight:bold;color:#c8c8c8;transform:scaleX(0.9782608695652175);transform-origin:0 50%;">Repetitive</div>
<div class="t" style="left:956px;top:110.8px;font-size:9.2px;line-height:13px;font-weight:bold;color:#c8c8c8;transform:scaleX(0.9782608695652175);transform-origin:0 50%;">Single-Shot</div>
<div class="a dis" style="left:932.3px;top:132.5px;width:78.20000000000005px;height:14.900000000000006px;"></div>
<div class="t" style="left:956px;top:134.0px;font-size:9.2px;line-height:13px;font-weight:bold;color:#c8c8c8;transform:scaleX(0.9782608695652175);transform-origin:0 50%;">Single</div>
<div class="t" style="left:845.4px;top:139.2px;font-size:10.5px;line-height:15px;font-weight:normal;color:#a8a8a8;transform:scaleX(0.95);transform-origin:0 50%;">Source</div>
<div class="a dis" style="left:844px;top:154.7px;width:78.29999999999995px;height:14.700000000000017px;"></div>
<div class="a " style="left:910px;top:156px;width:1px;height:12px;background:#dadada"></div>
<svg width="1023" height="796"><path d="M912.5 159h7l-3.5 6z" fill="#d0d0d0"/></svg>
<div class="t" style="left:577px;width:600px;text-align:center;top:156.0px;font-size:9.2px;line-height:13px;font-weight:normal;color:#c4c4c4;transform:scaleX(0.9782608695652175);transform-origin:50% 50%;">Ch1</div>
<div class="a " style="left:932.3px;top:154.7px;width:78.20000000000005px;height:14.700000000000017px;background:linear-gradient(#f0f0f0,#d4d4d4);border:1px solid #555;border-radius:2px"></div>
<div class="t" style="left:956px;top:156.0px;font-size:9.2px;line-height:13px;font-weight:bold;color:#3e3e3e;transform:scaleX(0.9565217391304349);transform-origin:0 50%;">Clr Statistics</div>
<div class="a dis" style="left:846.3px;top:179.5px;width:164.20000000000005px;height:14.800000000000011px;"></div>
<div class="t" style="left:870px;top:181.0px;font-size:9.2px;line-height:13px;font-weight:bold;color:#c8c8c8;transform:scaleX(0.9782608695652175);transform-origin:0 50%;">Trace-to-trace Measurements</div>
<div class="t" style="left:846px;top:195.8px;font-size:10.5px;line-height:15px;font-weight:bold;color:#a8a8a8;transform:scaleX(0.9);transform-origin:0 50%;">X Parameters</div>
<div class="a " style="left:846.3px;top:210.8px;width:164.20000000000005px;height:136.34999999999997px;background:#fcfcfc;border:1px solid #d8d8d8;border-radius:3px"></div>
<div class="t" style="left:870.8px;top:212.375px;font-size:9.2px;line-height:13px;font-weight:bold;color:#c4c4c4;transform:scaleX(0.9782608695652175);transform-origin:0 50%;">Period</div>
<div class="t" style="left:953.4px;top:212.375px;font-size:9.2px;line-height:13px;font-weight:bold;color:#c4c4c4;transform:scaleX(0.9782608695652175);transform-origin:0 50%;">Neg Cross</div>
<div class="a " style="left:847.3px;top:225.95000000000002px;width:162.20000000000005px;height:1.0px;background:#e2e2e2"></div>
<div class="t" style="left:870.8px;top:227.525px;font-size:9.2px;line-height:13px;font-weight:bold;color:#c4c4c4;transform:scaleX(0.9782608695652175);transform-origin:0 50%;">Frequency</div>
<div class="t" style="left:953.4px;top:227.525px;font-size:9.2px;line-height:13px;font-weight:bold;color:#c4c4c4;transform:scaleX(0.9782608695652175);transform-origin:0 50%;">Burst Width</div>
<div class="a " style="left:847.3px;top:241.10000000000002px;width:162.20000000000005px;height:1.0px;background:#e2e2e2"></div>
<div class="t" style="left:870.8px;top:242.675px;font-size:9.2px;line-height:13px;font-weight:bold;color:#c4c4c4;transform:scaleX(0.9782608695652175);transform-origin:0 50%;">Pos Width</div>
<div class="t" style="left:953.4px;top:242.675px;font-size:9.2px;line-height:13px;font-weight:bold;color:#c4c4c4;transform:scaleX(0.9782608695652175);transform-origin:0 50%;">Cycles</div>
<div class="a " style="left:847.3px;top:256.25px;width:162.20000000000005px;height:1.0px;background:#e2e2e2"></div>
<div class="t" style="left:870.8px;top:257.825px;font-size:9.2px;line-height:13px;font-weight:bold;color:#c4c4c4;transform:scaleX(0.9782608695652175);transform-origin:0 50%;">Neg Width</div>
<div class="t" style="left:953.4px;top:257.825px;font-size:9.2px;line-height:13px;font-weight:bold;color:#c4c4c4;transform:scaleX(0.9782608695652175);transform-origin:0 50%;">Time@Max</div>
<div class="a " style="left:847.3px;top:271.40000000000003px;width:162.20000000000005px;height:1.0px;background:#e2e2e2"></div>
<div class="t" style="left:870.8px;top:272.975px;font-size:9.2px;line-height:13px;font-weight:bold;color:#c4c4c4;transform:scaleX(0.9782608695652175);transform-origin:0 50%;">Rise Time</div>
<div class="t" style="left:953.4px;top:272.975px;font-size:9.2px;line-height:13px;font-weight:bold;color:#c4c4c4;transform:scaleX(0.9782608695652175);transform-origin:0 50%;">Time@Min</div>
<div class="a " style="left:847.3px;top:286.55px;width:162.20000000000005px;height:1.0px;background:#e2e2e2"></div>
<div class="t" style="left:870.8px;top:288.125px;font-size:9.2px;line-height:13px;font-weight:bold;color:#c4c4c4;transform:scaleX(0.9782608695652175);transform-origin:0 50%;">Fall Time</div>
<div class="t" style="left:953.4px;top:288.125px;font-size:9.2px;line-height:13px;font-weight:bold;color:#c4c4c4;transform:scaleX(0.9782608695652175);transform-origin:0 50%;">Pos Jitter pp</div>
<div class="a " style="left:847.3px;top:301.70000000000005px;width:162.20000000000005px;height:1.0px;background:#e2e2e2"></div>
<div class="t" style="left:870.8px;top:303.27500000000003px;font-size:9.2px;line-height:13px;font-weight:bold;color:#c4c4c4;transform:scaleX(0.9782608695652175);transform-origin:0 50%;">Pos DCycle</div>
<div class="t" style="left:953.4px;top:303.27500000000003px;font-size:9.2px;line-height:13px;font-weight:bold;color:#c4c4c4;transform:scaleX(0.9782608695652175);transform-origin:0 50%;">Pos Jitter rm</div>
<div class="a " style="left:847.3px;top:316.85px;width:162.20000000000005px;height:1.0px;background:#e2e2e2"></div>
<div class="t" style="left:870.8px;top:318.425px;font-size:9.2px;line-height:13px;font-weight:bold;color:#c4c4c4;transform:scaleX(0.9782608695652175);transform-origin:0 50%;">Neg DCycle</div>
<div class="t" style="left:953.4px;top:318.425px;font-size:9.2px;line-height:13px;font-weight:bold;color:#c4c4c4;transform:scaleX(0.9782608695652175);transform-origin:0 50%;">Neg Jitter pp</div>
<div class="a " style="left:847.3px;top:332.0px;width:162.20000000000005px;height:1.0px;background:#e2e2e2"></div>
<div class="t" style="left:870.8px;top:333.575px;font-size:9.2px;line-height:13px;font-weight:bold;color:#c4c4c4;transform:scaleX(0.9782608695652175);transform-origin:0 50%;">Pos Cross</div>
<div class="t" style="left:953.4px;top:333.575px;font-size:9.2px;line-height:13px;font-weight:bold;color:#c4c4c4;transform:scaleX(0.9782608695652175);transform-origin:0 50%;">Neg Jitter rm</div>
<div class="a " style="left:928.4px;top:210.8px;width:1.0px;height:136.34999999999997px;background:#dcdcdc"></div>
<div class="a " style="left:847px;top:241.5px;width:81px;height:14.899999999999977px;background:#e8e8e8"></div>
<div class="t" style="left:870px;top:243.0px;font-size:9.2px;line-height:13px;font-weight:bold;color:#c4c4c4;transform:scaleX(0.9782608695652175);transform-origin:0 50%;">Pos Width</div>
<div class="t" style="left:846px;top:348.2px;font-size:10.5px;line-height:15px;font-weight:bold;color:#a8a8a8;transform:scaleX(0.9);transform-origin:0 50%;">Y Parameters</div>
<div class="a " style="left:846.3px;top:363.6px;width:164.20000000000005px;height:121.19999999999999px;background:#fcfcfc;border:1px solid #d8d8d8;border-radius:3px"></div>
<div class="a " style="left:846.3px;top:469.65000000000003px;width:82.60000000000002px;height:30.30000000000001px;background:#fcfcfc;border:1px solid #d8d8d8;border-top:none;border-radius:0 0 3px 3px"></div>
<div class="a " style="left:928.4px;top:363.6px;width:1.0px;height:121.19999999999999px;background:#dcdcdc"></div>
<div class="t" style="left:870.8px;top:365.175px;font-size:9.2px;line-height:13px;font-weight:bold;color:#c4c4c4;transform:scaleX(0.9782608695652175);transform-origin:0 50%;">Maximum</div>
<div class="t" style="left:953.4px;top:365.175px;font-size:9.2px;line-height:13px;font-weight:bold;color:#c4c4c4;transform:scaleX(0.9782608695652175);transform-origin:0 50%;">dc RMS</div>
<div class="a " style="left:847.3px;top:378.75px;width:162.20000000000005px;height:1.0px;background:#e2e2e2"></div>
<div class="t" style="left:870.8px;top:380.325px;font-size:9.2px;line-height:13px;font-weight:bold;color:#c4c4c4;transform:scaleX(0.9782608695652175);transform-origin:0 50%;">Minimum</div>
<div class="t" style="left:953.4px;top:380.325px;font-size:9.2px;line-height:13px;font-weight:bold;color:#c4c4c4;transform:scaleX(0.9782608695652175);transform-origin:0 50%;">Cycle dc RMS</div>
<div class="a " style="left:847.3px;top:393.90000000000003px;width:162.20000000000005px;height:1.0px;background:#e2e2e2"></div>
<div class="t" style="left:870.8px;top:395.475px;font-size:9.2px;line-height:13px;font-weight:bold;color:#c4c4c4;transform:scaleX(0.9782608695652175);transform-origin:0 50%;">Top</div>
<div class="t" style="left:953.4px;top:395.475px;font-size:9.2px;line-height:13px;font-weight:bold;color:#c4c4c4;transform:scaleX(0.9782608695652175);transform-origin:0 50%;">ac RMS</div>
<div class="a " style="left:847.3px;top:409.05px;width:162.20000000000005px;height:1.0px;background:#e2e2e2"></div>
<div class="t" style="left:870.8px;top:410.625px;font-size:9.2px;line-height:13px;font-weight:bold;color:#c4c4c4;transform:scaleX(0.9782608695652175);transform-origin:0 50%;">Base</div>
<div class="t" style="left:953.4px;top:410.625px;font-size:9.2px;line-height:13px;font-weight:bold;color:#c4c4c4;transform:scaleX(0.9782608695652175);transform-origin:0 50%;">Cycle ac RMS</div>
<div class="a " style="left:847.3px;top:424.20000000000005px;width:162.20000000000005px;height:1.0px;background:#e2e2e2"></div>
<div class="t" style="left:870.8px;top:425.77500000000003px;font-size:9.2px;line-height:13px;font-weight:bold;color:#c4c4c4;transform:scaleX(0.9782608695652175);transform-origin:0 50%;">Peak-Peak</div>
<div class="t" style="left:953.4px;top:425.77500000000003px;font-size:9.2px;line-height:13px;font-weight:bold;color:#c4c4c4;transform:scaleX(0.9782608695652175);transform-origin:0 50%;">Pos Oversho</div>
<div class="a " style="left:847.3px;top:439.35px;width:162.20000000000005px;height:1.0px;background:#e2e2e2"></div>
<div class="t" style="left:870.8px;top:440.925px;font-size:9.2px;line-height:13px;font-weight:bold;color:#c4c4c4;transform:scaleX(0.9782608695652175);transform-origin:0 50%;">Amplitude</div>
<div class="t" style="left:953.4px;top:440.925px;font-size:9.2px;line-height:13px;font-weight:bold;color:#c4c4c4;transform:scaleX(0.9782608695652175);transform-origin:0 50%;">Neg Oversho</div>
<div class="a " style="left:847.3px;top:454.5px;width:162.20000000000005px;height:1.0px;background:#e2e2e2"></div>
<div class="t" style="left:870.8px;top:456.075px;font-size:9.2px;line-height:13px;font-weight:bold;color:#c4c4c4;transform:scaleX(0.9782608695652175);transform-origin:0 50%;">Middle</div>
<div class="t" style="left:953.4px;top:456.075px;font-size:9.2px;line-height:13px;font-weight:bold;color:#c4c4c4;transform:scaleX(0.9782608695652175);transform-origin:0 50%;">Area</div>
<div class="a " style="left:847.3px;top:469.65000000000003px;width:162.20000000000005px;height:1.0px;background:#e2e2e2"></div>
<div class="t" style="left:870.8px;top:471.225px;font-size:9.2px;line-height:13px;font-weight:bold;color:#c4c4c4;transform:scaleX(0.9782608695652175);transform-origin:0 50%;">Mean</div>
<div class="t" style="left:953.4px;top:471.225px;font-size:9.2px;line-height:13px;font-weight:bold;color:#c4c4c4;transform:scaleX(0.9782608695652175);transform-origin:0 50%;">Cycle Area</div>
<div class="a " style="left:847.3px;top:484.8px;width:81.10000000000002px;height:1.0px;background:#e2e2e2"></div>
<div class="t" style="left:870.8px;top:486.375px;font-size:9.2px;line-height:13px;font-weight:bold;color:#c4c4c4;transform:scaleX(0.9782608695652175);transform-origin:0 50%;">Cycle Mean</div>
<div class="a dis" style="left:859px;top:503.7px;width:138.89999999999998px;height:14.699999999999989px;"></div>
<div class="t" style="left:883px;top:505.0px;font-size:9.2px;line-height:13px;font-weight:bold;color:#c8c8c8;transform:scaleX(0.9782608695652175);transform-origin:0 50%;">View Defined Parameters</div>
<div class="a dis" style="left:859px;top:523.6px;width:138.89999999999998px;height:14.5px;"></div>
<div class="t" style="left:883px;top:525.0px;font-size:9.2px;line-height:13px;font-weight:bold;color:#c8c8c8;transform:scaleX(0.9782608695652175);transform-origin:0 50%;">Clear All Measurements</div>
<div class="t" style="left:846px;top:539.6px;font-size:10.5px;line-height:15px;font-weight:bold;color:#222;transform:scaleX(0.9);transform-origin:0 50%;">Frequency Meter Parameter</div>
<div class="a btn" style="left:846.3px;top:555px;width:164.20000000000005px;height:14.799999999999955px;border-radius:3px"></div>
<div class="a " style="left:847.3px;top:556px;width:81.10000000000002px;height:12.799999999999955px;background:linear-gradient(#8cc0e0,#5c9ccc)"></div>
<div class="t" style="left:587.3499999999999px;width:600px;text-align:center;top:556.4px;font-size:9.2px;line-height:13px;font-weight:bold;color:#fff;transform:scaleX(0.9782608695652175);transform-origin:50% 50%;">Frequency</div>
<div class="a " style="left:928.4px;top:556px;width:1.0px;height:12.799999999999955px;background:#9a9a9a"></div>
<div class="t" style="left:669.45px;width:600px;text-align:center;top:556.4px;font-size:9.2px;line-height:13px;font-weight:bold;color:#3e3e3e;transform:scaleX(0.9782608695652175);transform-origin:50% 50%;">Period</div>
<svg width="1023" height="796"><defs><linearGradient id="gG" x1="0" y1="0" x2="0" y2="1"><stop offset="0" stop-color="#20ff20"/><stop offset="1" stop-color="#00a000"/></linearGradient><linearGradient id="gR" x1="0" y1="0" x2="0" y2="1"><stop offset="0" stop-color="#ff1a1a"/><stop offset="1" stop-color="#b00000"/></linearGradient><linearGradient id="gB" x1="0" y1="0" x2="0" y2="1"><stop offset="0" stop-color="#3a78c8"/><stop offset="1" stop-color="#1f4f9c"/></linearGradient><linearGradient id="gY" x1="0" y1="0" x2="1" y2="1"><stop offset="0" stop-color="#fff27a"/><stop offset="1" stop-color="#d8b000"/></linearGradient></defs><g transform="translate(196,37.3)"><circle cx="2.5" cy="2.5" r="2.2" fill="#b8601a"/><path d="M3 4L7 8" stroke="#b8601a" stroke-width="2"/><path d="M4 7.5L7.5 4.2L13.3 9.8Q12 12.8 8.5 13.6Z" fill="url(#gY)" stroke="#c89a10" stroke-width=".6"/><path d="M4.3 7.3L7.4 4.4" stroke="#d02010" stroke-width="1.4"/></g><g opacity="1"><rect x="259.9" y="37.2" width="12.7" height="12.7" rx="1.8" fill="url(#gG)"/><path d="M264.4 40.400000000000006L269.2 43.5L264.4 46.6z" fill="#fff"/></g><rect x="323.2" y="37.2" width="12.7" height="12.7" rx="1.8" fill="url(#gR)"/><rect x="327.0" y="40.800000000000004" width="5" height="5" fill="#fff"/><g opacity="1"><rect x="386.8" y="37.2" width="12.7" height="12.7" rx="1.8" fill="url(#gG)"/><path d="M391.3 40.400000000000006L396.1 43.5L391.3 46.6z" fill="#fff"/></g><text x="385" y="50" font-size="9" font-weight="bold" fill="#000" font-family="Liberation Serif">1</text><path d="M456.5 46.5V40.8H461.5V46H466.5V40.8" fill="none" stroke="#1a1ae8" stroke-width="1.4"/><path d="M453.3 38.3h3l-3 3zM469.7 38.3h-3l3 3zM453.3 49.2h3l-3-3zM469.7 49.2h-3l3-3z" fill="#f01010"/><rect x="543.5" y="37.2" width="12.7" height="12.7" rx="1.8" fill="url(#gG)"/><path d="M545.8 43.8l3 3.5 5-7.8" fill="none" stroke="#fff" stroke-width="2.2" stroke-linecap="round" stroke-linejoin="round"/><path d="M652 39.5l0.5 6 5.5-1.5z" fill="#1e62c8"/><path d="M654.5 43.5A4.3 4.3 0 1 1 657.5 49" fill="none" stroke="#1e62c8" stroke-width="2.6"/><g opacity=".3" transform="translate(1342,0) scale(-1,1)"><path d="M652 39.5l0.5 6 5.5-1.5z" fill="#3a72d8"/><path d="M654.5 43.5A4.3 4.3 0 1 1 657.5 49" fill="none" stroke="#3a72d8" stroke-width="2.6"/></g><rect x="714" y="38" width="7.5" height="8.5" fill="#fff" stroke="#5a7ab0" stroke-width=".9"/><rect x="714.5" y="38.5" width="6.5" height="2" fill="#e02020"/><rect x="717.5" y="41" width="8" height="8.5" fill="#fff" stroke="#5a7ab0" stroke-width=".9"/><rect x="718" y="41.5" width="7" height="2.5" fill="#e02020"/><path d="M719 46h4.5M719 47.5h4.5" stroke="#b0b8c8" stroke-width=".6"/><g transform="translate(777,37.4)"><rect x="0" y="0" width="12.5" height="10.5" rx="1" fill="url(#gB)"/><rect x="0.5" y="10.2" width="11.8" height="2" fill="#eef" stroke="#3a68b8" stroke-width=".7"/><text x="6.3" y="8.3" font-size="8.5" font-weight="bold" fill="#fff" text-anchor="middle" font-family="Liberation Sans">?</text></g><g transform="translate(116,38.6)"><rect x="0" y="0" width="12.5" height="10.5" rx="1" fill="url(#gB)"/><rect x="0.5" y="10.2" width="11.8" height="2" fill="#eef" stroke="#3a68b8" stroke-width=".7"/><text x="6.3" y="8.3" font-size="8.5" font-weight="bold" fill="#fff" text-anchor="middle" font-family="Liberation Sans">?</text></g><path d="M163.6 39.599999999999994Q169.1 45.599999999999994 173.6 50.099999999999994M174.6 39.099999999999994Q168.1 44.599999999999994 164.6 50.099999999999994" stroke="#e01818" stroke-width="2" fill="none" stroke-linecap="round"/><g transform="translate(950.5,38.8)"><rect x="0" y="0" width="12.5" height="10.5" rx="1" fill="url(#gB)"/><rect x="0.5" y="10.2" width="11.8" height="2" fill="#eef" stroke="#3a68b8" stroke-width=".7"/><text x="6.3" y="8.3" font-size="8.5" font-weight="bold" fill="#fff" text-anchor="middle" font-family="Liberation Sans">?</text></g><path d="M998.5999999999999 39.65Q1004.0999999999999 45.65 1008.5999999999999 50.15M1009.5999999999999 39.15Q1003.0999999999999 44.65 999.5999999999999 50.15" stroke="#e01818" stroke-width="2" fill="none" stroke-linecap="round"/><rect x="16.6" y="104.1" width="12.5" height="12.5" rx="1.8" fill="url(#gR)"/><path d="M20.55 108.04999999999998A3.6 3.6 0 1 0 25.150000000000002 108.04999999999998" fill="none" stroke="#fff" stroke-width="1.3"/><path d="M22.85 105.94999999999999V110.94999999999999" stroke="#fff" stroke-width="1.4"/><path d="M15.5 120v10.5h16.5" fill="none" stroke="#888" stroke-width=".6"/><rect x="16" y="120.50" width="4" height="1.1" fill="#f01818"/><rect x="16" y="121.85" width="6" height="1.1" fill="#f01818"/><rect x="16" y="123.20" width="9" height="1.1" fill="#f01818"/><rect x="16" y="124.55" width="13" height="1.1" fill="#f01818"/><rect x="16" y="125.90" width="16" height="1.1" fill="#f01818"/><rect x="16" y="127.25" width="12" height="1.1" fill="#f01818"/><rect x="16" y="128.60" width="8" height="1.1" fill="#f01818"/><rect x="16" y="129.95" width="5" height="1.1" fill="#f01818"/><rect x="13.8" y="134.2" width="18.5" height="12.6" rx="2" fill="#fff"/><path d="M15.5 135v11h16" fill="none" stroke="#888" stroke-width=".6"/><rect x="17.00" y="144.74" width="1.20" height="1.26" fill="#f01818"/><rect x="18.50" y="143.25" width="1.20" height="2.75" fill="#f01818"/><rect x="20.00" y="139.93" width="1.20" height="6.07" fill="#f01818"/><rect x="21.50" y="137.76" width="1.20" height="8.24" fill="#f01818"/><rect x="23.00" y="135.50" width="1.20" height="10.50" fill="#f01818"/><rect x="24.50" y="137.76" width="1.20" height="8.24" fill="#f01818"/><rect x="26.00" y="139.93" width="1.20" height="6.07" fill="#f01818"/><rect x="27.50" y="143.25" width="1.20" height="2.75" fill="#f01818"/><rect x="29.00" y="144.74" width="1.20" height="1.26" fill="#f01818"/><path d="M112 139.5Q118 133 124.5 140.5Q118 147 112 139.5z" fill="#fff" stroke="#222" stroke-width="1"/><circle cx="117.5" cy="140.3" r="2.8" fill="#3a8ae8"/><circle cx="117.5" cy="140.3" r="1.1" fill="#111"/><path d="M112.5 136.5Q118 131 124 137" fill="none" stroke="#445" stroke-width=".9"/><rect x="13.8" y="201" width="18.6" height="12.6" rx="2" fill="#fff"/><path d="M15.5 202v11h16" fill="none" stroke="#888" stroke-width=".6"/><path d="M16.5 203.5h14v9h-14z" fill="#f01818"/><path d="M19.5 203.5v9M22.5 203.5v9M25.5 203.5v9M28.5 203.5v9" stroke="#ff8080" stroke-width=".5"/><path d="M15.5 217v10.5h17" fill="none" stroke="#888" stroke-width=".6"/><rect x="16.00" y="218.00" width="1.3" height="9" fill="#f01818"/><rect x="17.60" y="219.00" width="1.3" height="8" fill="#f01818"/><rect x="19.20" y="221.00" width="1.3" height="6" fill="#f01818"/><rect x="20.80" y="222.50" width="1.3" height="4.5" fill="#f01818"/><rect x="22.40" y="223.50" width="1.3" height="3.5" fill="#f01818"/><rect x="24.00" y="224.50" width="1.3" height="2.5" fill="#f01818"/><rect x="25.60" y="225.00" width="1.3" height="2" fill="#f01818"/><rect x="27.20" y="225.50" width="1.3" height="1.5" fill="#f01818"/><rect x="28.80" y="226.00" width="1.3" height="1" fill="#f01818"/><rect x="30.40" y="226.00" width="1.3" height="1" fill="#f01818"/><rect x="16.9" y="284" width="12.7" height="12.7" rx="1.8" fill="url(#gR)"/><rect x="20.7" y="287.6" width="5" height="5" fill="#fff"/><path d="M14.5 303.0L20.5 298.7L26 303.0L31.5 298.7" fill="none" stroke="#f01010" stroke-width="1.7"/><path d="M14.5 305.6L20.5 301.3L26 305.6L31.5 301.3" fill="none" stroke="#10d010" stroke-width="1.7"/><path d="M14.5 308.2L20.5 303.9L26 308.2L31.5 303.9" fill="none" stroke="#f0f000" stroke-width="1.7"/><path d="M14.5 310.8L20.5 306.5L26 310.8L31.5 306.5" fill="none" stroke="#1010f0" stroke-width="1.7"/><rect x="13.5" y="324" width="2" height="2" fill="#f03030"/><rect x="15" y="321.5" width="2" height="2" fill="#20c020"/><rect x="16.5" y="319" width="2" height="2" fill="#e8e800"/><rect x="18" y="316.5" width="2" height="2" fill="#2020e8"/><rect x="19.5" y="314.5" width="2" height="2" fill="#f03030"/><rect x="21" y="317" width="2" height="2" fill="#20c020"/><rect x="22.5" y="319.5" width="2" height="2" fill="#e8e800"/><rect x="24" y="322" width="2" height="2" fill="#2020e8"/><rect x="25.5" y="324" width="2" height="2" fill="#f03030"/><rect x="27" y="321.5" width="2" height="2" fill="#20c020"/><rect x="28.5" y="318.5" width="2" height="2" fill="#e8e800"/><rect x="30" y="315.5" width="2" height="2" fill="#2020e8"/><rect x="30.8" y="314.5" width="2" height="2" fill="#f03030"/><rect x="851.4" y="95.6" width="12.5" height="12.5" rx="1.8" fill="url(#gR)"/><path d="M855.35 99.54999999999998A3.6 3.6 0 1 0 859.9499999999999 99.54999999999998" fill="none" stroke="#fff" stroke-width="1.3"/><path d="M857.65 97.44999999999999V102.44999999999999" stroke="#fff" stroke-width="1.4"/><rect x="851.3" y="111.3" width="12" height="10.7" rx="1.5" fill="#fff" stroke="#222" stroke-width="1.3"/><path d="M853.5 114h1M853.5 116.6h1M853.5 119.2h1M855.5 114h6M855.5 116.6h6M855.5 119.2h6" stroke="#111" stroke-width="1.3"/><path d="M849.5 136.5C853 136.5 854 126.5 858 126.5S863 136.5 866.5 136.5" fill="none" stroke="#2030f0" stroke-width="1.5"/><path d="M850.3 126v11M858.3 126v4M865.8 126v11" stroke="#f02020" stroke-width=".8" stroke-dasharray="1.2 1"/><text x="855" y="138" font-size="6" font-family="Liberation Serif" fill="#333">σx</text><g opacity=".35"><path d="M937 101.5a3 3 0 0 1 3-3h8l-2-2M949.5 101.5a3 3 0 0 1 -3 3h-8l2 2" fill="none" stroke="#3a7ad8" stroke-width="1.8"/></g><rect x="937.3" y="110.6" width="12.3" height="11.9" rx="1" fill="#e6ecfa"/><text x="941" y="120" font-size="9" fill="#c8c8c8" font-family="Liberation Serif">1</text><g opacity="0.22"><rect x="937.3" y="133.3" width="12.3" height="12.3" rx="1.8" fill="url(#gG)"/><path d="M941.8 136.5L946.5999999999999 139.60000000000002L941.8 142.70000000000002z" fill="#fff"/></g><g transform="translate(937,155.5)"><circle cx="2.5" cy="2.5" r="2.2" fill="#b8601a"/><path d="M3 4L7 8" stroke="#b8601a" stroke-width="2"/><path d="M4 7.5L7.5 4.2L13.3 9.8Q12 12.8 8.5 13.6Z" fill="url(#gY)" stroke="#c89a10" stroke-width=".6"/><path d="M4.3 7.3L7.4 4.4" stroke="#d02010" stroke-width="1.4"/></g><g opacity=".3"><path d="M848 187h3v-5h4v5h3v5h3" fill="none" stroke="#4060d0" stroke-width=".9"/><path d="M849 184h12M853 190v5" stroke="#e04040" stroke-width=".7"/></g><path d="M848.5 222.4h3v-8h4v8h4v-8h3" fill="none" stroke="#7080e0" stroke-width=".9" opacity=".45"/><path d="M851.5 214.4l1 8M860.5 214.4l-1 8" stroke="#e06060" stroke-width=".6" opacity=".45"/><path d="M931 214.4h5l3 8h6" fill="none" stroke="#7080e0" stroke-width=".9" opacity=".45"/><path d="M934 214.4l1 8M943 214.4l-1 8" stroke="#e06060" stroke-width=".6" opacity=".45"/><path d="M848.5 237.55h3v-8h4v8h4v-8h3" fill="none" stroke="#7080e0" stroke-width=".9" opacity=".45"/><path d="M851.5 229.55l1 8M860.5 229.55l-1 8" stroke="#e06060" stroke-width=".6" opacity=".45"/><path d="M931 237.55h3v-8h4v8h4v-8h3" fill="none" stroke="#7080e0" stroke-width=".9" opacity=".45"/><path d="M934 229.55l1 8M943 229.55l-1 8" stroke="#e06060" stroke-width=".6" opacity=".45"/><path d="M848.5 252.70000000000002h3v-8h4v8h4v-8h3" fill="none" stroke="#7080e0" stroke-width=".9" opacity=".45"/><path d="M851.5 244.70000000000002l1 8M860.5 244.70000000000002l-1 8" stroke="#e06060" stroke-width=".6" opacity=".45"/><path d="M931 252.70000000000002h3v-8h4v8h4v-8h3" fill="none" stroke="#7080e0" stroke-width=".9" opacity=".45"/><path d="M934 244.70000000000002l1 8M943 244.70000000000002l-1 8" stroke="#e06060" stroke-width=".6" opacity=".45"/><path d="M848.5 267.85h3v-8h4v8h4v-8h3" fill="none" stroke="#7080e0" stroke-width=".9" opacity=".45"/><path d="M851.5 259.85l1 8M860.5 259.85l-1 8" stroke="#e06060" stroke-width=".6" opacity=".45"/><path d="M931 267.85h5l3 -8h6" fill="none" stroke="#7080e0" stroke-width=".9" opacity=".45"/><path d="M934 259.85l1 8M943 259.85l-1 8" stroke="#e06060" stroke-width=".6" opacity=".45"/><path d="M848.5 283.00000000000006h5l3 -8h6" fill="none" stroke="#7080e0" stroke-width=".9" opacity=".45"/><path d="M851.5 275.00000000000006l1 8M860.5 275.00000000000006l-1 8" stroke="#e06060" stroke-width=".6" opacity=".45"/><path d="M931 283.00000000000006h5l3 -8h6" fill="none" stroke="#7080e0" stroke-width=".9" opacity=".45"/><path d="M934 275.00000000000006l1 8M943 275.00000000000006l-1 8" stroke="#e06060" stroke-width=".6" opacity=".45"/><path d="M848.5 290.15000000000003h5l3 8h6" fill="none" stroke="#7080e0" stroke-width=".9" opacity=".45"/><path d="M851.5 290.15000000000003l1 8M860.5 290.15000000000003l-1 8" stroke="#e06060" stroke-width=".6" opacity=".45"/><path d="M931 298.15000000000003h5l3 -8h6" fill="none" stroke="#7080e0" stroke-width=".9" opacity=".45"/><path d="M934 290.15000000000003l1 8M943 290.15000000000003l-1 8" stroke="#e06060" stroke-width=".6" opacity=".45"/><path d="M848.5 313.30000000000007h3v-8h4v8h4v-8h3" fill="none" stroke="#7080e0" stroke-width=".9" opacity=".45"/><path d="M851.5 305.30000000000007l1 8M860.5 305.30000000000007l-1 8" stroke="#e06060" stroke-width=".6" opacity=".45"/><path d="M931 313.30000000000007h5l3 -8h6" fill="none" stroke="#7080e0" stroke-width=".9" opacity=".45"/><path d="M934 305.30000000000007l1 8M943 305.30000000000007l-1 8" stroke="#e06060" stroke-width=".6" opacity=".45"/><path d="M848.5 328.45000000000005h3v-8h4v8h4v-8h3" fill="none" stroke="#7080e0" stroke-width=".9" opacity=".45"/><path d="M851.5 320.45000000000005l1 8M860.5 320.45000000000005l-1 8" stroke="#e06060" stroke-width=".6" opacity=".45"/><path d="M931 320.45000000000005h5l3 8h6" fill="none" stroke="#7080e0" stroke-width=".9" opacity=".45"/><path d="M934 320.45000000000005l1 8M943 320.45000000000005l-1 8" stroke="#e06060" stroke-width=".6" opacity=".45"/><path d="M848.5 343.6h5l3 -8h6" fill="none" stroke="#7080e0" stroke-width=".9" opacity=".45"/><path d="M851.5 335.6l1 8M860.5 335.6l-1 8" stroke="#e06060" stroke-width=".6" opacity=".45"/><path d="M931 335.6h5l3 8h6" fill="none" stroke="#7080e0" stroke-width=".9" opacity=".45"/><path d="M934 335.6l1 8M943 335.6l-1 8" stroke="#e06060" stroke-width=".6" opacity=".45"/><path d="M848.5 375.20000000000005h5l3 -8h6" fill="none" stroke="#7080e0" stroke-width=".9" opacity=".45"/><path d="M851.5 367.20000000000005l1 8M860.5 367.20000000000005l-1 8" stroke="#e06060" stroke-width=".6" opacity=".45"/><path d="M931 371.20000000000005c2 -6 5 -6 7 0s5 6 7 0" fill="none" stroke="#7080e0" stroke-width=".9" opacity=".45"/><path d="M934 367.20000000000005l1 8M943 367.20000000000005l-1 8" stroke="#e06060" stroke-width=".6" opacity=".45"/><path d="M848.5 390.35h5l3 -8h6" fill="none" stroke="#7080e0" stroke-width=".9" opacity=".45"/><path d="M851.5 382.35l1 8M860.5 382.35l-1 8" stroke="#e06060" stroke-width=".6" opacity=".45"/><path d="M931 386.35c2 -6 5 -6 7 0s5 6 7 0" fill="none" stroke="#7080e0" stroke-width=".9" opacity=".45"/><path d="M934 382.35l1 8M943 382.35l-1 8" stroke="#e06060" stroke-width=".6" opacity=".45"/><path d="M848.5 405.50000000000006h5l3 -8h6" fill="none" stroke="#7080e0" stroke-width=".9" opacity=".45"/><path d="M851.5 397.50000000000006l1 8M860.5 397.50000000000006l-1 8" stroke="#e06060" stroke-width=".6" opacity=".45"/><path d="M931 401.50000000000006c2 -6 5 -6 7 0s5 6 7 0" fill="none" stroke="#7080e0" stroke-width=".9" opacity=".45"/><path d="M934 397.50000000000006l1 8M943 397.50000000000006l-1 8" stroke="#e06060" stroke-width=".6" opacity=".45"/><path d="M848.5 420.65000000000003h5l3 -8h6" fill="none" stroke="#7080e0" stroke-width=".9" opacity=".45"/><path d="M851.5 412.65000000000003l1 8M860.5 412.65000000000003l-1 8" stroke="#e06060" stroke-width=".6" opacity=".45"/><path d="M931 416.65000000000003c2 -6 5 -6 7 0s5 6 7 0" fill="none" stroke="#7080e0" stroke-width=".9" opacity=".45"/><path d="M934 412.65000000000003l1 8M943 412.65000000000003l-1 8" stroke="#e06060" stroke-width=".6" opacity=".45"/><path d="M848.5 435.80000000000007h5l3 -8h6" fill="none" stroke="#7080e0" stroke-width=".9" opacity=".45"/><path d="M851.5 427.80000000000007l1 8M860.5 427.80000000000007l-1 8" stroke="#e06060" stroke-width=".6" opacity=".45"/><path d="M931 435.80000000000007h5l3 -8h6" fill="none" stroke="#7080e0" stroke-width=".9" opacity=".45"/><path d="M934 427.80000000000007l1 8M943 427.80000000000007l-1 8" stroke="#e06060" stroke-width=".6" opacity=".45"/><path d="M848.5 450.95000000000005h5l3 -8h6" fill="none" stroke="#7080e0" stroke-width=".9" opacity=".45"/><path d="M851.5 442.95000000000005l1 8M860.5 442.95000000000005l-1 8" stroke="#e06060" stroke-width=".6" opacity=".45"/><path d="M931 442.95000000000005h5l3 8h6" fill="none" stroke="#7080e0" stroke-width=".9" opacity=".45"/><path d="M934 442.95000000000005l1 8M943 442.95000000000005l-1 8" stroke="#e06060" stroke-width=".6" opacity=".45"/><path d="M848.5 466.1h3v-8h4v8h4v-8h3" fill="none" stroke="#7080e0" stroke-width=".9" opacity=".45"/><path d="M851.5 458.1l1 8M860.5 458.1l-1 8" stroke="#e06060" stroke-width=".6" opacity=".45"/><path d="M931 462.1c2 -6 5 -6 7 0s5 6 7 0" fill="none" stroke="#7080e0" stroke-width=".9" opacity=".45"/><path d="M934 458.1l1 8M943 458.1l-1 8" stroke="#e06060" stroke-width=".6" opacity=".45"/><path d="M848.5 481.25000000000006h3v-8h4v8h4v-8h3" fill="none" stroke="#7080e0" stroke-width=".9" opacity=".45"/><path d="M851.5 473.25000000000006l1 8M860.5 473.25000000000006l-1 8" stroke="#e06060" stroke-width=".6" opacity=".45"/><path d="M931 477.25000000000006c2 -6 5 -6 7 0s5 6 7 0" fill="none" stroke="#7080e0" stroke-width=".9" opacity=".45"/><path d="M934 473.25000000000006l1 8M943 473.25000000000006l-1 8" stroke="#e06060" stroke-width=".6" opacity=".45"/><path d="M848.5 496.40000000000003h3v-8h4v8h4v-8h3" fill="none" stroke="#7080e0" stroke-width=".9" opacity=".45"/><path d="M851.5 488.40000000000003l1 8M860.5 488.40000000000003l-1 8" stroke="#e06060" stroke-width=".6" opacity=".45"/><g opacity=".25"><path d="M864 511.5Q870 505 876.5 512Q870 518 864 511.5z" fill="#cde" stroke="#557"/><circle cx="869.5" cy="511.8" r="2.2" fill="#4a8ae0"/></g><rect x="194.8" y="755" width="12.2" height="11.7" fill="#a8a8a0"/><ellipse cx="201" cy="761" rx="3.3" ry="5.5" transform="rotate(-35 201 761)" fill="none" stroke="#c88a20" stroke-width="2"/><path d="M197 757l7 8" stroke="#f0d080" stroke-width="1"/><rect x="191.9" y="770" width="18.1" height="12.3" rx="2" fill="#fff"/><rect x="193.00" y="780.62" width="1.42" height="1.38" fill="#f01818"/><rect x="194.78" y="778.99" width="1.42" height="3.01" fill="#f01818"/><rect x="196.56" y="775.36" width="1.42" height="6.64" fill="#f01818"/><rect x="198.33" y="772.98" width="1.42" height="9.02" fill="#f01818"/><rect x="200.11" y="770.50" width="1.42" height="11.50" fill="#f01818"/><rect x="201.89" y="772.98" width="1.42" height="9.02" fill="#f01818"/><rect x="203.67" y="775.36" width="1.42" height="6.64" fill="#f01818"/><rect x="205.44" y="778.99" width="1.42" height="3.01" fill="#f01818"/><rect x="207.22" y="780.62" width="1.42" height="1.38" fill="#f01818"/><path d="M272 766V758.5q0-1.5 1.5-1.5h2q1.5 0 1.5 1.5V765q0 1.5 1.5 1.5h1q1.5 0 1.5-1.5V758.5q0-1.5 1.5-1.5h2q1.5 0 1.5 1.5V766" fill="none" stroke="#222" stroke-width="1.3"/><circle cx="274" cy="761.5" r="1.5" fill="#f01010"/><circle cx="276.5" cy="756.5" r="1.5" fill="#10d010"/><circle cx="278.3" cy="761" r="1.5" fill="#1010f0"/><circle cx="280.8" cy="765.5" r="1.5" fill="#f0f000"/><circle cx="283" cy="760.5" r="1.5" fill="#f010f0"/><circle cx="285.5" cy="756.5" r="1.5" fill="#10c010"/><circle cx="287.8" cy="760.5" r="1.5" fill="#10e0f0"/><path d="M271.5 772h17.5M271.5 780.5h17.5M271.5 772l4 4.25-4 4.25M289 772l-4 4.25 4 4.25M275.5 776.25l3-4.25h3l3 4.25-3 4.25h-3z" fill="none" stroke="#1010f0" stroke-width="1.5"/><path d="M351.5 766h8.5V756.5h8.5" fill="none" stroke="#2030f0" stroke-width="1.5"/><path d="M354 761h10" stroke="#f01010" stroke-width="1"/><path d="M353.5 761l2.5-2v4zM364.5 761l-2.5-2v4z" fill="#f01010"/><circle cx="359.5" cy="761" r="1" fill="#f01010"/><path d="M353 770.5h14M353 782h14" stroke="#a8a090" stroke-width=".9"/><path d="M351.5 772.5h17M351.5 780h17M351.5 772.5l4 3.75-4 3.75M368.5 772.5l-4 3.75 4 3.75M355.5 776.25l3-3.75h3l3 3.75-3 3.75h-3z" fill="none" stroke="#1010f0" stroke-width="1.5"/><ellipse cx="360" cy="776.2" rx="3.3" ry="1.8" fill="#999"/><rect x="430.8" y="755.4" width="17.7" height="11.3" fill="#222"/><rect x="432" y="757" width="15.3" height="8" fill="#2a5a00"/><path d="M432 758h15.3M432 764h15.3" stroke="#a0e000" stroke-width=".8"/><path d="M433 761c2-3 4-3 6 0s4 3 6 0" fill="none" stroke="#40ff00" stroke-width=".8"/><path d="M433 761c2 3 4 3 6 0s4 -3 6 0" fill="none" stroke="#40ff00" stroke-width=".8"/><path d="M511.7 755h10.5l2.8 2.8V767h-13.3z" fill="#222"/><rect x="514" y="755" width="7" height="3.5" fill="#ddd"/><rect x="513.2" y="760" width="10.3" height="6" fill="#dde0ff"/><rect x="513.2" y="764" width="10.3" height="2" fill="#6a6aff"/><path d="M589.5 765h3c2.5 0 3 -9 6 -9s3.5 9 6 9h2.5" fill="none" stroke="#2030f0" stroke-width="1.4"/><path d="M593.5 755v12" stroke="#f02020" stroke-width=".9"/><path d="M600.5 755v12" stroke="#f02020" stroke-width=".9" stroke-dasharray="1.3 1"/><rect x="667.8" y="754.6" width="19.1" height="12.7" rx="2" fill="#fff"/><path d="M670 756v10M675 756v10M670 761h5M676 761v-.5h9" stroke="#1010e0" stroke-width="1.8"/><text x="748.5" y="766" font-size="14" font-style="italic" font-weight="bold" font-family="Liberation Serif" fill="#111">f</text><text x="754.5" y="765.5" font-size="10" font-style="italic" font-weight="bold" font-family="Liberation Serif" fill="#222">ω</text><path d="M751.5 781.5l6.5-6.5" stroke="#1010c8" stroke-width="3" stroke-linecap="round"/><path d="M756 776.5a4 4 0 0 1 5.5-6l-2.5 2.5.5 1.5 1.5.5 2.5-2.5a4 4 0 0 1-6 5.5z" fill="#1010c8"/></svg>
<div class="a " style="left:3px;top:792px;width:1017px;height:4px;background:linear-gradient(#ebe8e2,#d4d0c8)"></div></body></html>
